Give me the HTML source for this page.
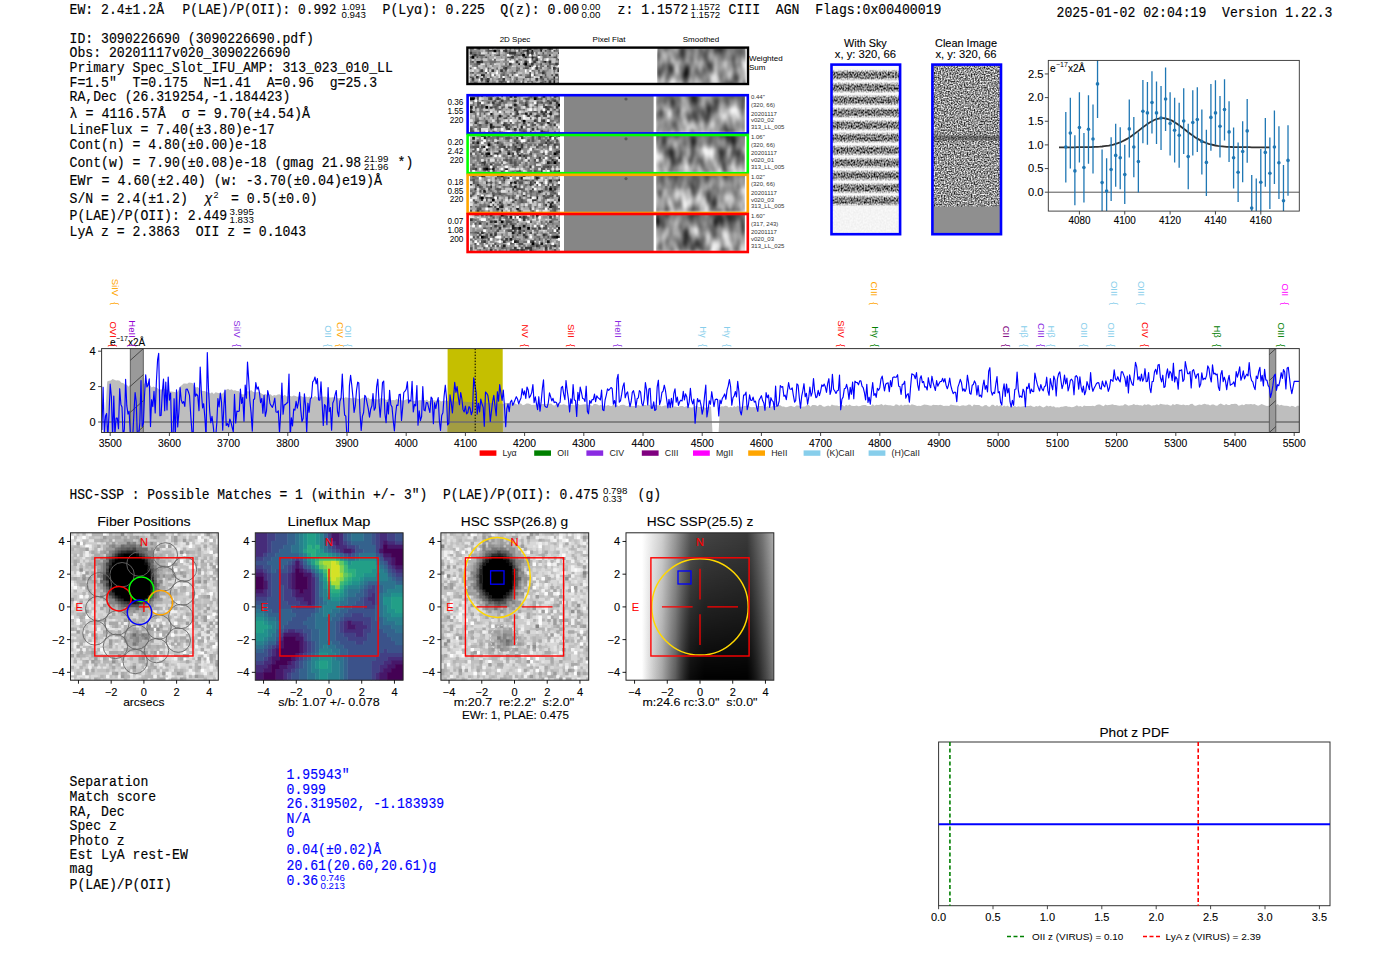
<!DOCTYPE html>
<html><head><meta charset="utf-8"><style>
html,body{margin:0;padding:0;background:#fff;width:1400px;height:953px;overflow:hidden}
svg{position:absolute;left:0;top:0;font-family:'Liberation Mono',monospace} text{white-space:pre} .m{stroke:currentColor;stroke-width:0.25}
</style></head><body>
<svg width="1400" height="953" viewBox="0 0 1400 953">
<defs><filter id="nsmooth" x="0" y="0" width="1" height="1" filterUnits="objectBoundingBox" color-interpolation-filters="sRGB"><feTurbulence type="fractalNoise" baseFrequency="0.1 0.05" numOctaves="2" seed="7"/><feColorMatrix type="matrix" values="1 0 0 0 0  1 0 0 0 0  1 0 0 0 0  0 0 0 0 1"/><feComponentTransfer><feFuncR type="linear" slope="1.4" intercept="-0.1"/><feFuncG type="linear" slope="1.4" intercept="-0.1"/><feFuncB type="linear" slope="1.4" intercept="-0.1"/></feComponentTransfer><feGaussianBlur stdDeviation="1.2 1.5"/></filter><linearGradient id="topdark" x1="0" y1="0" x2="0" y2="1"><stop offset="0" stop-color="#000" stop-opacity="0.38"/><stop offset="0.4" stop-color="#000" stop-opacity="0.05"/><stop offset="1" stop-color="#000" stop-opacity="0"/></linearGradient><filter id="nsky" x="0" y="0" width="1" height="1" filterUnits="objectBoundingBox" color-interpolation-filters="sRGB"><feTurbulence type="fractalNoise" baseFrequency="0.6 0.5" numOctaves="1" seed="11"/><feColorMatrix type="matrix" values="1 0 0 0 0  1 0 0 0 0  1 0 0 0 0  0 0 0 0 1"/><feComponentTransfer><feFuncR type="linear" slope="2.0" intercept="-0.5"/><feFuncG type="linear" slope="2.0" intercept="-0.5"/><feFuncB type="linear" slope="2.0" intercept="-0.5"/></feComponentTransfer></filter><filter id="nclean" x="0" y="0" width="1" height="1" filterUnits="objectBoundingBox" color-interpolation-filters="sRGB"><feTurbulence type="fractalNoise" baseFrequency="0.7" numOctaves="1" seed="5"/><feColorMatrix type="matrix" values="1 0 0 0 0  1 0 0 0 0  1 0 0 0 0  0 0 0 0 1"/><feComponentTransfer><feFuncR type="linear" slope="1.75" intercept="-0.3"/><feFuncG type="linear" slope="1.75" intercept="-0.3"/><feFuncB type="linear" slope="1.75" intercept="-0.3"/></feComponentTransfer></filter><linearGradient id="stripe" x1="0" y1="0" x2="0" y2="1"><stop offset="0" stop-color="#b8b8b8" stop-opacity="0"/><stop offset="0.3" stop-color="#b8b8b8" stop-opacity="1"/><stop offset="0.7" stop-color="#b8b8b8" stop-opacity="1"/><stop offset="1" stop-color="#b8b8b8" stop-opacity="0"/></linearGradient><filter id="stripenoise" x="0" y="0" width="1" height="1" color-interpolation-filters="sRGB"><feTurbulence type="fractalNoise" baseFrequency="0.7 0.5" seed="11" result="t"/><feColorMatrix in="t" type="matrix" values="2.2 0 0 0 -0.45  2.2 0 0 0 -0.45  2.2 0 0 0 -0.45  0 0 0 0 1" result="g"/><feBlend in="SourceGraphic" in2="g" mode="multiply" result="b"/><feComposite in="b" in2="SourceAlpha" operator="in"/></filter><linearGradient id="zg" x1="0" y1="0" x2="1" y2="0"><stop offset="0" stop-color="#fff"/><stop offset="0.108" stop-color="#fff"/><stop offset="0.244" stop-color="#d0d0d0"/><stop offset="0.335" stop-color="#999"/><stop offset="0.4375" stop-color="#555"/><stop offset="0.53" stop-color="#444"/><stop offset="0.82" stop-color="#3a3a3a"/><stop offset="0.926" stop-color="#777"/><stop offset="1" stop-color="#b0b0b0"/></linearGradient><linearGradient id="zv" x1="0" y1="0" x2="0" y2="1"><stop offset="0" stop-color="#000" stop-opacity="0"/><stop offset="1" stop-color="#000" stop-opacity="1"/></linearGradient><linearGradient id="zmg" x1="0" y1="0" x2="1" y2="0"><stop offset="0" stop-color="#000"/><stop offset="0.108" stop-color="#000"/><stop offset="0.244" stop-color="#333"/><stop offset="0.335" stop-color="#666"/><stop offset="0.4375" stop-color="#e0e0e0"/><stop offset="0.53" stop-color="#fff"/><stop offset="0.82" stop-color="#fff"/><stop offset="0.926" stop-color="#888"/><stop offset="1" stop-color="#555"/></linearGradient><mask id="zm" maskUnits="userSpaceOnUse" x="626.0" y="532.8" width="147.8" height="147.4"><rect x="626.0" y="532.8" width="147.8" height="147.4" fill="url(#zmg)"/></mask></defs>
<text transform="translate(69.5,14.4) scale(1,1.1)" font-size="13.15" stroke="#000" stroke-width="0.15">EW: 2.4±1.2Å</text>
<text transform="translate(182.5,14.4) scale(1,1.1)" font-size="13.15" textLength="154" lengthAdjust="spacingAndGlyphs" stroke="#000" stroke-width="0.15">P(LAE)/P(OII): 0.992</text>
<text x="341.5" y="9.5" font-size="9.72" font-family="'Liberation Sans', sans-serif">1.091</text>
<text x="341.5" y="17.5" font-size="9.72" font-family="'Liberation Sans', sans-serif">0.943</text>
<text transform="translate(382.5,14.4) scale(1,1.1)" font-size="13.15" stroke="#000" stroke-width="0.15">P(Lyα): 0.225</text>
<text transform="translate(500.2,14.4) scale(1,1.1)" font-size="13.15" stroke="#000" stroke-width="0.15">Q(z): 0.00</text>
<text x="581.5" y="9.5" font-size="9.72" font-family="'Liberation Sans', sans-serif">0.00</text>
<text x="581.5" y="17.5" font-size="9.72" font-family="'Liberation Sans', sans-serif">0.00</text>
<text transform="translate(617.5,14.4) scale(1,1.1)" font-size="13.15" stroke="#000" stroke-width="0.15">z: 1.1572</text>
<text x="690.5" y="9.5" font-size="9.72" font-family="'Liberation Sans', sans-serif">1.1572</text>
<text x="690.5" y="17.5" font-size="9.72" font-family="'Liberation Sans', sans-serif">1.1572</text>
<text transform="translate(728.5,14.4) scale(1,1.1)" font-size="13.15" stroke="#000" stroke-width="0.15">CIII  AGN  Flags:0x00400019</text>
<text transform="translate(1056.5,16.6) scale(1,1.1)" font-size="13.15" stroke="#000" stroke-width="0.15">2025-01-02 02:04:19  Version 1.22.3</text>
<text transform="translate(69.5,42.6) scale(1,1.1)" font-size="13.15" stroke="#000" stroke-width="0.15">ID: 3090226690 (3090226690.pdf)</text>
<text transform="translate(69.5,56.9) scale(1,1.1)" font-size="13.15" stroke="#000" stroke-width="0.15">Obs: 20201117v020_3090226690</text>
<text transform="translate(69.5,71.7) scale(1,1.1)" font-size="13.15" stroke="#000" stroke-width="0.15">Primary Spec_Slot_IFU_AMP: 313_023_010_LL</text>
<text transform="translate(69.5,86.6) scale(1,1.1)" font-size="13.15" stroke="#000" stroke-width="0.15">F=1.5"  T=0.175  N=1.41  A=0.96  g=25.3</text>
<text transform="translate(69.5,101.4) scale(1,1.1)" font-size="13.15" stroke="#000" stroke-width="0.15">RA,Dec (26.319254,-1.184423)</text>
<text transform="translate(69.5,117.9) scale(1,1.1)" font-size="13.15" textLength="240.5" lengthAdjust="spacingAndGlyphs" stroke="#000" stroke-width="0.15">λ = 4116.57Å  σ = 9.70(±4.54)Å</text>
<text transform="translate(69.5,133.9) scale(1,1.1)" font-size="13.15" stroke="#000" stroke-width="0.15">LineFlux = 7.40(±3.80)e-17</text>
<text transform="translate(69.5,148.6) scale(1,1.1)" font-size="13.15" stroke="#000" stroke-width="0.15">Cont(n) = 4.80(±0.00)e-18</text>
<text transform="translate(69.5,166.9) scale(1,1.1)" font-size="13.15" stroke="#000" stroke-width="0.15">Cont(w) = 7.90(±0.08)e-18 (gmag 21.98</text>
<text transform="translate(69.5,185.0) scale(1,1.1)" font-size="13.15" textLength="312.5" lengthAdjust="spacingAndGlyphs" stroke="#000" stroke-width="0.15">EWr = 4.60(±2.40) (w: -3.70(±0.04)e19)Å</text>
<text transform="translate(69.5,202.6) scale(1,1.1)" font-size="13.15" stroke="#000" stroke-width="0.15">S/N = 2.4(±1.2)</text>
<text transform="translate(69.5,219.6) scale(1,1.1)" font-size="13.15" stroke="#000" stroke-width="0.15">P(LAE)/P(OII): 2.449</text>
<text transform="translate(69.5,236.0) scale(1,1.1)" font-size="13.15" stroke="#000" stroke-width="0.15">LyA z = 2.3863  OII z = 0.1043</text>
<text transform="translate(204.5,202.6) scale(1,1.1)" font-size="13.15" font-style="italic" stroke="#000" stroke-width="0.15">χ</text>
<text x="213.5" y="197.5" font-size="9" font-family="'Liberation Sans', sans-serif">2</text>
<text transform="translate(231,202.6) scale(1,1.1)" font-size="13.15" stroke="#000" stroke-width="0.15">= 0.5(±0.0)</text>
<text x="364" y="161.5" font-size="9.72" font-family="'Liberation Sans', sans-serif">21.99</text>
<text x="364" y="169.5" font-size="9.72" font-family="'Liberation Sans', sans-serif">21.96</text>
<text transform="translate(397.5,166.9) scale(1,1.1)" font-size="13.15" stroke="#000" stroke-width="0.15">*)</text>
<text x="229.5" y="214.5" font-size="9.72" font-family="'Liberation Sans', sans-serif">3.995</text>
<text x="229.5" y="222.5" font-size="9.72" font-family="'Liberation Sans', sans-serif">1.833</text>
<text x="515" y="41.5" font-size="8" font-family="'Liberation Sans', sans-serif" text-anchor="middle">2D Spec</text>
<text x="609" y="41.5" font-size="8" font-family="'Liberation Sans', sans-serif" text-anchor="middle">Pixel Flat</text>
<text x="701" y="41.5" font-size="8" font-family="'Liberation Sans', sans-serif" text-anchor="middle">Smoothed</text>
<clipPath id="spc101"><rect x="469.4" y="47.3" width="89.6" height="37.2"/></clipPath><g clip-path="url(#spc101)">
<path fill="#545454" d="M469.4 47.3h4.9v2.7h-4.9zM476.0 47.3h2.7v2.7h-2.7zM487.0 47.3h2.7v2.7h-2.7zM504.6 47.3h2.7v2.7h-2.7zM509.0 47.3h2.7v2.7h-2.7zM513.4 47.3h2.7v2.7h-2.7zM517.8 47.3h2.7v2.7h-2.7zM526.6 47.3h2.7v2.7h-2.7zM533.2 47.3h4.9v2.7h-4.9zM487.0 49.5h7.1v2.7h-7.1zM498.0 49.5h2.7v2.7h-2.7zM502.4 49.5h2.7v2.7h-2.7zM517.8 49.5h2.7v2.7h-2.7zM522.2 49.5h4.9v2.7h-4.9zM544.2 49.5h2.7v2.7h-2.7zM553.0 49.5h2.7v2.7h-2.7zM520.0 51.7h2.7v2.7h-2.7zM542.0 51.7h2.7v2.7h-2.7zM557.4 51.7h2.7v2.7h-2.7zM471.6 53.9h2.7v2.7h-2.7zM478.2 53.9h7.1v2.7h-7.1zM495.8 53.9h4.9v2.7h-4.9zM513.4 53.9h2.7v2.7h-2.7zM517.8 53.9h2.7v2.7h-2.7zM526.6 53.9h2.7v2.7h-2.7zM537.6 53.9h2.7v2.7h-2.7zM469.4 56.1h2.7v2.7h-2.7zM476.0 56.1h2.7v2.7h-2.7zM484.8 56.1h2.7v2.7h-2.7zM506.8 56.1h4.9v2.7h-4.9zM533.2 56.1h4.9v2.7h-4.9zM553.0 56.1h4.9v2.7h-4.9zM493.6 58.3h2.7v2.7h-2.7zM531.0 58.3h2.7v2.7h-2.7zM557.4 58.3h2.7v2.7h-2.7zM471.6 60.5h2.7v2.7h-2.7zM542.0 60.5h2.7v2.7h-2.7zM476.0 62.7h4.9v2.7h-4.9zM522.2 62.7h2.7v2.7h-2.7zM539.8 62.7h2.7v2.7h-2.7zM548.6 62.7h2.7v2.7h-2.7zM546.4 64.9h2.7v2.7h-2.7zM469.4 67.1h2.7v2.7h-2.7zM487.0 67.1h2.7v2.7h-2.7zM502.4 67.1h2.7v2.7h-2.7zM524.4 67.1h4.9v2.7h-4.9zM557.4 67.1h2.7v2.7h-2.7zM504.6 69.3h2.7v2.7h-2.7zM515.6 69.3h2.7v2.7h-2.7zM537.6 69.3h2.7v2.7h-2.7zM471.6 71.5h2.7v2.7h-2.7zM484.8 71.5h2.7v2.7h-2.7zM513.4 71.5h2.7v2.7h-2.7zM528.8 71.5h2.7v2.7h-2.7zM502.4 73.7h2.7v2.7h-2.7zM511.2 73.7h2.7v2.7h-2.7zM528.8 73.7h2.7v2.7h-2.7zM533.2 73.7h2.7v2.7h-2.7zM544.2 73.7h2.7v2.7h-2.7zM550.8 73.7h2.7v2.7h-2.7zM469.4 75.9h4.9v2.7h-4.9zM482.6 75.9h2.7v2.7h-2.7zM509.0 75.9h2.7v2.7h-2.7zM524.4 75.9h7.1v2.7h-7.1zM484.8 78.1h2.7v2.7h-2.7zM515.6 78.1h2.7v2.7h-2.7zM522.2 78.1h2.7v2.7h-2.7zM542.0 78.1h2.7v2.7h-2.7zM553.0 78.1h2.7v2.7h-2.7zM484.8 80.3h2.7v2.7h-2.7zM498.0 80.3h7.1v2.7h-7.1zM544.2 80.3h2.7v2.7h-2.7zM491.4 82.5h2.7v2.7h-2.7zM500.2 82.5h2.7v2.7h-2.7zM513.4 82.5h2.7v2.7h-2.7zM520.0 82.5h4.9v2.7h-4.9z"/>
<path fill="#e0e0e0" d="M473.8 47.3h2.7v2.7h-2.7zM500.2 49.5h2.7v2.7h-2.7zM515.6 49.5h2.7v2.7h-2.7zM550.8 49.5h2.7v2.7h-2.7zM480.4 51.7h4.9v2.7h-4.9zM491.4 51.7h4.9v2.7h-4.9zM533.2 51.7h2.7v2.7h-2.7zM493.6 56.1h2.7v2.7h-2.7zM557.4 56.1h2.7v2.7h-2.7zM491.4 58.3h2.7v2.7h-2.7zM500.2 58.3h4.9v2.7h-4.9zM539.8 58.3h2.7v2.7h-2.7zM520.0 60.5h2.7v2.7h-2.7zM480.4 62.7h4.9v2.7h-4.9zM493.6 62.7h2.7v2.7h-2.7zM511.2 64.9h2.7v2.7h-2.7zM537.6 64.9h2.7v2.7h-2.7zM484.8 67.1h2.7v2.7h-2.7zM550.8 67.1h2.7v2.7h-2.7zM471.6 69.3h2.7v2.7h-2.7zM495.8 69.3h2.7v2.7h-2.7zM487.0 71.5h2.7v2.7h-2.7zM524.4 71.5h2.7v2.7h-2.7zM476.0 73.7h2.7v2.7h-2.7zM498.0 73.7h2.7v2.7h-2.7zM498.0 75.9h2.7v2.7h-2.7zM533.2 75.9h2.7v2.7h-2.7zM537.6 75.9h2.7v2.7h-2.7zM511.2 78.1h2.7v2.7h-2.7zM520.0 80.3h2.7v2.7h-2.7zM504.6 82.5h2.7v2.7h-2.7z"/>
<path fill="#1c1c1c" d="M478.2 47.3h2.7v2.7h-2.7zM526.6 49.5h2.7v2.7h-2.7zM531.0 49.5h2.7v2.7h-2.7zM539.8 49.5h2.7v2.7h-2.7zM548.6 53.9h2.7v2.7h-2.7zM524.4 56.1h2.7v2.7h-2.7zM531.0 56.1h2.7v2.7h-2.7zM476.0 60.5h4.9v2.7h-4.9zM544.2 60.5h2.7v2.7h-2.7zM517.8 62.7h2.7v2.7h-2.7zM528.8 64.9h2.7v2.7h-2.7zM480.4 73.7h4.9v2.7h-4.9zM553.0 75.9h2.7v2.7h-2.7zM487.0 80.3h2.7v2.7h-2.7zM553.0 80.3h2.7v2.7h-2.7zM493.6 82.5h2.7v2.7h-2.7zM548.6 82.5h2.7v2.7h-2.7zM553.0 82.5h2.7v2.7h-2.7z"/>
<path fill="#8c8c8c" d="M480.4 47.3h2.7v2.7h-2.7zM484.8 47.3h2.7v2.7h-2.7zM491.4 47.3h2.7v2.7h-2.7zM495.8 47.3h4.9v2.7h-4.9zM515.6 47.3h2.7v2.7h-2.7zM520.0 47.3h2.7v2.7h-2.7zM531.0 47.3h2.7v2.7h-2.7zM537.6 47.3h2.7v2.7h-2.7zM471.6 49.5h9.3v2.7h-9.3zM506.8 49.5h2.7v2.7h-2.7zM513.4 49.5h2.7v2.7h-2.7zM520.0 49.5h2.7v2.7h-2.7zM528.8 49.5h2.7v2.7h-2.7zM533.2 49.5h7.1v2.7h-7.1zM546.4 49.5h2.7v2.7h-2.7zM557.4 49.5h2.7v2.7h-2.7zM476.0 51.7h2.7v2.7h-2.7zM504.6 51.7h2.7v2.7h-2.7zM515.6 51.7h4.9v2.7h-4.9zM546.4 51.7h7.1v2.7h-7.1zM493.6 53.9h2.7v2.7h-2.7zM502.4 53.9h4.9v2.7h-4.9zM511.2 53.9h2.7v2.7h-2.7zM524.4 53.9h2.7v2.7h-2.7zM535.4 53.9h2.7v2.7h-2.7zM539.8 53.9h2.7v2.7h-2.7zM546.4 53.9h2.7v2.7h-2.7zM478.2 56.1h2.7v2.7h-2.7zM482.6 56.1h2.7v2.7h-2.7zM487.0 56.1h2.7v2.7h-2.7zM500.2 56.1h2.7v2.7h-2.7zM504.6 56.1h2.7v2.7h-2.7zM513.4 56.1h4.9v2.7h-4.9zM528.8 56.1h2.7v2.7h-2.7zM546.4 56.1h7.1v2.7h-7.1zM469.4 58.3h2.7v2.7h-2.7zM473.8 58.3h2.7v2.7h-2.7zM480.4 58.3h2.7v2.7h-2.7zM487.0 58.3h4.9v2.7h-4.9zM513.4 58.3h2.7v2.7h-2.7zM520.0 58.3h2.7v2.7h-2.7zM533.2 58.3h2.7v2.7h-2.7zM542.0 58.3h2.7v2.7h-2.7zM482.6 60.5h7.1v2.7h-7.1zM495.8 60.5h4.9v2.7h-4.9zM502.4 60.5h7.1v2.7h-7.1zM531.0 60.5h2.7v2.7h-2.7zM535.4 60.5h2.7v2.7h-2.7zM539.8 60.5h2.7v2.7h-2.7zM546.4 60.5h2.7v2.7h-2.7zM557.4 60.5h2.7v2.7h-2.7zM469.4 62.7h4.9v2.7h-4.9zM484.8 62.7h2.7v2.7h-2.7zM491.4 62.7h2.7v2.7h-2.7zM511.2 62.7h2.7v2.7h-2.7zM526.6 62.7h4.9v2.7h-4.9zM535.4 62.7h4.9v2.7h-4.9zM544.2 62.7h4.9v2.7h-4.9zM471.6 64.9h4.9v2.7h-4.9zM491.4 64.9h2.7v2.7h-2.7zM500.2 64.9h2.7v2.7h-2.7zM504.6 64.9h2.7v2.7h-2.7zM509.0 64.9h2.7v2.7h-2.7zM515.6 64.9h2.7v2.7h-2.7zM531.0 64.9h2.7v2.7h-2.7zM553.0 64.9h2.7v2.7h-2.7zM476.0 67.1h4.9v2.7h-4.9zM489.2 67.1h2.7v2.7h-2.7zM506.8 67.1h4.9v2.7h-4.9zM537.6 67.1h2.7v2.7h-2.7zM546.4 67.1h2.7v2.7h-2.7zM478.2 69.3h2.7v2.7h-2.7zM482.6 69.3h2.7v2.7h-2.7zM502.4 69.3h2.7v2.7h-2.7zM511.2 69.3h2.7v2.7h-2.7zM517.8 69.3h2.7v2.7h-2.7zM533.2 69.3h2.7v2.7h-2.7zM544.2 69.3h4.9v2.7h-4.9zM476.0 71.5h2.7v2.7h-2.7zM480.4 71.5h4.9v2.7h-4.9zM489.2 71.5h2.7v2.7h-2.7zM500.2 71.5h2.7v2.7h-2.7zM504.6 71.5h2.7v2.7h-2.7zM509.0 71.5h2.7v2.7h-2.7zM515.6 71.5h2.7v2.7h-2.7zM553.0 71.5h2.7v2.7h-2.7zM504.6 73.7h2.7v2.7h-2.7zM517.8 73.7h2.7v2.7h-2.7zM524.4 73.7h2.7v2.7h-2.7zM535.4 73.7h2.7v2.7h-2.7zM557.4 73.7h2.7v2.7h-2.7zM484.8 75.9h2.7v2.7h-2.7zM491.4 75.9h2.7v2.7h-2.7zM506.8 75.9h2.7v2.7h-2.7zM513.4 75.9h2.7v2.7h-2.7zM531.0 75.9h2.7v2.7h-2.7zM542.0 75.9h2.7v2.7h-2.7zM546.4 75.9h2.7v2.7h-2.7zM482.6 78.1h2.7v2.7h-2.7zM491.4 78.1h2.7v2.7h-2.7zM495.8 78.1h2.7v2.7h-2.7zM500.2 78.1h2.7v2.7h-2.7zM509.0 78.1h2.7v2.7h-2.7zM513.4 78.1h2.7v2.7h-2.7zM528.8 78.1h2.7v2.7h-2.7zM548.6 78.1h2.7v2.7h-2.7zM555.2 78.1h2.7v2.7h-2.7zM469.4 80.3h2.7v2.7h-2.7zM473.8 80.3h4.9v2.7h-4.9zM491.4 80.3h4.9v2.7h-4.9zM509.0 80.3h2.7v2.7h-2.7zM515.6 80.3h4.9v2.7h-4.9zM528.8 80.3h2.7v2.7h-2.7zM535.4 80.3h2.7v2.7h-2.7zM539.8 80.3h2.7v2.7h-2.7zM557.4 80.3h2.7v2.7h-2.7zM469.4 82.5h2.7v2.7h-2.7zM482.6 82.5h7.1v2.7h-7.1zM509.0 82.5h2.7v2.7h-2.7zM537.6 82.5h2.7v2.7h-2.7zM542.0 82.5h2.7v2.7h-2.7z"/>
<path fill="#707070" d="M482.6 47.3h2.7v2.7h-2.7zM546.4 47.3h2.7v2.7h-2.7zM550.8 47.3h2.7v2.7h-2.7zM555.2 47.3h2.7v2.7h-2.7zM469.4 49.5h2.7v2.7h-2.7zM484.8 49.5h2.7v2.7h-2.7zM495.8 49.5h2.7v2.7h-2.7zM509.0 49.5h2.7v2.7h-2.7zM548.6 49.5h2.7v2.7h-2.7zM555.2 49.5h2.7v2.7h-2.7zM471.6 51.7h4.9v2.7h-4.9zM478.2 51.7h2.7v2.7h-2.7zM487.0 51.7h2.7v2.7h-2.7zM498.0 51.7h2.7v2.7h-2.7zM506.8 51.7h2.7v2.7h-2.7zM522.2 51.7h2.7v2.7h-2.7zM528.8 51.7h2.7v2.7h-2.7zM535.4 51.7h2.7v2.7h-2.7zM476.0 53.9h2.7v2.7h-2.7zM489.2 53.9h2.7v2.7h-2.7zM515.6 53.9h2.7v2.7h-2.7zM520.0 53.9h2.7v2.7h-2.7zM531.0 53.9h2.7v2.7h-2.7zM542.0 53.9h4.9v2.7h-4.9zM555.2 53.9h2.7v2.7h-2.7zM480.4 56.1h2.7v2.7h-2.7zM522.2 56.1h2.7v2.7h-2.7zM526.6 56.1h2.7v2.7h-2.7zM542.0 56.1h4.9v2.7h-4.9zM504.6 58.3h2.7v2.7h-2.7zM509.0 58.3h2.7v2.7h-2.7zM517.8 58.3h2.7v2.7h-2.7zM555.2 58.3h2.7v2.7h-2.7zM469.4 60.5h2.7v2.7h-2.7zM489.2 60.5h7.1v2.7h-7.1zM526.6 60.5h2.7v2.7h-2.7zM473.8 62.7h2.7v2.7h-2.7zM489.2 62.7h2.7v2.7h-2.7zM504.6 62.7h2.7v2.7h-2.7zM550.8 62.7h4.9v2.7h-4.9zM557.4 62.7h2.7v2.7h-2.7zM476.0 64.9h2.7v2.7h-2.7zM484.8 64.9h2.7v2.7h-2.7zM502.4 64.9h2.7v2.7h-2.7zM506.8 64.9h2.7v2.7h-2.7zM524.4 64.9h4.9v2.7h-4.9zM535.4 64.9h2.7v2.7h-2.7zM539.8 64.9h4.9v2.7h-4.9zM548.6 64.9h2.7v2.7h-2.7zM495.8 67.1h2.7v2.7h-2.7zM515.6 67.1h4.9v2.7h-4.9zM522.2 67.1h2.7v2.7h-2.7zM539.8 67.1h2.7v2.7h-2.7zM548.6 67.1h2.7v2.7h-2.7zM555.2 67.1h2.7v2.7h-2.7zM487.0 69.3h2.7v2.7h-2.7zM531.0 69.3h2.7v2.7h-2.7zM542.0 69.3h2.7v2.7h-2.7zM553.0 69.3h2.7v2.7h-2.7zM469.4 71.5h2.7v2.7h-2.7zM478.2 71.5h2.7v2.7h-2.7zM502.4 71.5h2.7v2.7h-2.7zM511.2 71.5h2.7v2.7h-2.7zM533.2 71.5h2.7v2.7h-2.7zM537.6 71.5h4.9v2.7h-4.9zM544.2 71.5h2.7v2.7h-2.7zM473.8 73.7h2.7v2.7h-2.7zM489.2 73.7h2.7v2.7h-2.7zM493.6 73.7h2.7v2.7h-2.7zM500.2 73.7h2.7v2.7h-2.7zM506.8 73.7h2.7v2.7h-2.7zM520.0 73.7h2.7v2.7h-2.7zM526.6 73.7h2.7v2.7h-2.7zM489.2 75.9h2.7v2.7h-2.7zM500.2 75.9h2.7v2.7h-2.7zM515.6 75.9h2.7v2.7h-2.7zM544.2 75.9h2.7v2.7h-2.7zM557.4 75.9h2.7v2.7h-2.7zM498.0 78.1h2.7v2.7h-2.7zM539.8 78.1h2.7v2.7h-2.7zM546.4 78.1h2.7v2.7h-2.7zM550.8 78.1h2.7v2.7h-2.7zM557.4 78.1h2.7v2.7h-2.7zM471.6 80.3h2.7v2.7h-2.7zM480.4 80.3h2.7v2.7h-2.7zM504.6 80.3h2.7v2.7h-2.7zM513.4 80.3h2.7v2.7h-2.7zM522.2 80.3h2.7v2.7h-2.7zM526.6 80.3h2.7v2.7h-2.7zM531.0 80.3h2.7v2.7h-2.7zM542.0 80.3h2.7v2.7h-2.7zM476.0 82.5h2.7v2.7h-2.7zM531.0 82.5h4.9v2.7h-4.9z"/>
<path fill="#c4c4c4" d="M489.2 47.3h2.7v2.7h-2.7zM500.2 47.3h2.7v2.7h-2.7zM522.2 47.3h2.7v2.7h-2.7zM553.0 47.3h2.7v2.7h-2.7zM482.6 49.5h2.7v2.7h-2.7zM484.8 51.7h2.7v2.7h-2.7zM500.2 51.7h2.7v2.7h-2.7zM524.4 51.7h2.7v2.7h-2.7zM537.6 51.7h2.7v2.7h-2.7zM491.4 53.9h2.7v2.7h-2.7zM509.0 53.9h2.7v2.7h-2.7zM533.2 53.9h2.7v2.7h-2.7zM550.8 53.9h2.7v2.7h-2.7zM557.4 53.9h2.7v2.7h-2.7zM520.0 56.1h2.7v2.7h-2.7zM539.8 56.1h2.7v2.7h-2.7zM471.6 58.3h2.7v2.7h-2.7zM482.6 58.3h4.9v2.7h-4.9zM495.8 58.3h4.9v2.7h-4.9zM506.8 58.3h2.7v2.7h-2.7zM511.2 58.3h2.7v2.7h-2.7zM515.6 58.3h2.7v2.7h-2.7zM526.6 58.3h2.7v2.7h-2.7zM544.2 58.3h2.7v2.7h-2.7zM550.8 58.3h4.9v2.7h-4.9zM513.4 60.5h2.7v2.7h-2.7zM537.6 60.5h2.7v2.7h-2.7zM550.8 60.5h4.9v2.7h-4.9zM495.8 62.7h4.9v2.7h-4.9zM502.4 62.7h2.7v2.7h-2.7zM520.0 62.7h2.7v2.7h-2.7zM469.4 64.9h2.7v2.7h-2.7zM478.2 64.9h4.9v2.7h-4.9zM489.2 64.9h2.7v2.7h-2.7zM498.0 64.9h2.7v2.7h-2.7zM513.4 64.9h2.7v2.7h-2.7zM544.2 64.9h2.7v2.7h-2.7zM550.8 64.9h2.7v2.7h-2.7zM555.2 64.9h2.7v2.7h-2.7zM471.6 67.1h2.7v2.7h-2.7zM480.4 67.1h2.7v2.7h-2.7zM491.4 67.1h2.7v2.7h-2.7zM498.0 67.1h2.7v2.7h-2.7zM520.0 67.1h2.7v2.7h-2.7zM533.2 67.1h2.7v2.7h-2.7zM542.0 67.1h2.7v2.7h-2.7zM469.4 69.3h2.7v2.7h-2.7zM476.0 69.3h2.7v2.7h-2.7zM489.2 69.3h2.7v2.7h-2.7zM506.8 69.3h2.7v2.7h-2.7zM550.8 69.3h2.7v2.7h-2.7zM491.4 71.5h4.9v2.7h-4.9zM517.8 71.5h4.9v2.7h-4.9zM526.6 71.5h2.7v2.7h-2.7zM531.0 71.5h2.7v2.7h-2.7zM535.4 71.5h2.7v2.7h-2.7zM550.8 71.5h2.7v2.7h-2.7zM555.2 71.5h4.9v2.7h-4.9zM471.6 73.7h2.7v2.7h-2.7zM478.2 73.7h2.7v2.7h-2.7zM495.8 73.7h2.7v2.7h-2.7zM509.0 73.7h2.7v2.7h-2.7zM513.4 73.7h2.7v2.7h-2.7zM539.8 73.7h2.7v2.7h-2.7zM480.4 75.9h2.7v2.7h-2.7zM487.0 75.9h2.7v2.7h-2.7zM493.6 75.9h2.7v2.7h-2.7zM511.2 75.9h2.7v2.7h-2.7zM517.8 75.9h7.1v2.7h-7.1zM535.4 75.9h2.7v2.7h-2.7zM555.2 75.9h2.7v2.7h-2.7zM489.2 78.1h2.7v2.7h-2.7zM504.6 78.1h2.7v2.7h-2.7zM526.6 78.1h2.7v2.7h-2.7zM531.0 78.1h4.9v2.7h-4.9zM478.2 80.3h2.7v2.7h-2.7zM495.8 80.3h2.7v2.7h-2.7zM524.4 80.3h2.7v2.7h-2.7zM537.6 80.3h2.7v2.7h-2.7zM480.4 82.5h2.7v2.7h-2.7zM489.2 82.5h2.7v2.7h-2.7zM495.8 82.5h2.7v2.7h-2.7zM511.2 82.5h2.7v2.7h-2.7zM517.8 82.5h2.7v2.7h-2.7zM526.6 82.5h2.7v2.7h-2.7z"/>
<path fill="#fcfcfc" d="M493.6 47.3h2.7v2.7h-2.7zM506.8 53.9h2.7v2.7h-2.7zM528.8 53.9h2.7v2.7h-2.7zM537.6 56.1h2.7v2.7h-2.7zM528.8 58.3h2.7v2.7h-2.7zM546.4 58.3h2.7v2.7h-2.7zM509.0 60.5h4.9v2.7h-4.9zM528.8 60.5h2.7v2.7h-2.7zM533.2 64.9h2.7v2.7h-2.7zM557.4 64.9h2.7v2.7h-2.7zM473.8 67.1h2.7v2.7h-2.7zM531.0 67.1h2.7v2.7h-2.7zM484.8 69.3h2.7v2.7h-2.7zM524.4 69.3h2.7v2.7h-2.7zM528.8 69.3h2.7v2.7h-2.7zM495.8 71.5h2.7v2.7h-2.7zM491.4 73.7h2.7v2.7h-2.7zM515.6 73.7h2.7v2.7h-2.7zM531.0 73.7h2.7v2.7h-2.7zM502.4 75.9h2.7v2.7h-2.7zM478.2 78.1h2.7v2.7h-2.7zM506.8 80.3h2.7v2.7h-2.7zM506.8 82.5h2.7v2.7h-2.7zM524.4 82.5h2.7v2.7h-2.7zM528.8 82.5h2.7v2.7h-2.7zM535.4 82.5h2.7v2.7h-2.7zM555.2 82.5h2.7v2.7h-2.7z"/>
<path fill="#a8a8a8" d="M502.4 47.3h2.7v2.7h-2.7zM506.8 47.3h2.7v2.7h-2.7zM511.2 47.3h2.7v2.7h-2.7zM524.4 47.3h2.7v2.7h-2.7zM542.0 47.3h4.9v2.7h-4.9zM557.4 47.3h2.7v2.7h-2.7zM480.4 49.5h2.7v2.7h-2.7zM511.2 49.5h2.7v2.7h-2.7zM542.0 49.5h2.7v2.7h-2.7zM489.2 51.7h2.7v2.7h-2.7zM495.8 51.7h2.7v2.7h-2.7zM502.4 51.7h2.7v2.7h-2.7zM539.8 51.7h2.7v2.7h-2.7zM544.2 51.7h2.7v2.7h-2.7zM553.0 51.7h4.9v2.7h-4.9zM469.4 53.9h2.7v2.7h-2.7zM484.8 53.9h4.9v2.7h-4.9zM500.2 53.9h2.7v2.7h-2.7zM553.0 53.9h2.7v2.7h-2.7zM473.8 56.1h2.7v2.7h-2.7zM489.2 56.1h4.9v2.7h-4.9zM495.8 56.1h4.9v2.7h-4.9zM502.4 56.1h2.7v2.7h-2.7zM517.8 56.1h2.7v2.7h-2.7zM476.0 58.3h4.9v2.7h-4.9zM522.2 58.3h4.9v2.7h-4.9zM537.6 58.3h2.7v2.7h-2.7zM548.6 58.3h2.7v2.7h-2.7zM473.8 60.5h2.7v2.7h-2.7zM500.2 60.5h2.7v2.7h-2.7zM517.8 60.5h2.7v2.7h-2.7zM522.2 60.5h2.7v2.7h-2.7zM555.2 60.5h2.7v2.7h-2.7zM487.0 62.7h2.7v2.7h-2.7zM500.2 62.7h2.7v2.7h-2.7zM506.8 62.7h2.7v2.7h-2.7zM513.4 62.7h4.9v2.7h-4.9zM533.2 62.7h2.7v2.7h-2.7zM542.0 62.7h2.7v2.7h-2.7zM482.6 64.9h2.7v2.7h-2.7zM487.0 64.9h2.7v2.7h-2.7zM493.6 64.9h4.9v2.7h-4.9zM517.8 64.9h7.1v2.7h-7.1zM482.6 67.1h2.7v2.7h-2.7zM493.6 67.1h2.7v2.7h-2.7zM500.2 67.1h2.7v2.7h-2.7zM511.2 67.1h4.9v2.7h-4.9zM528.8 67.1h2.7v2.7h-2.7zM544.2 67.1h2.7v2.7h-2.7zM473.8 69.3h2.7v2.7h-2.7zM493.6 69.3h2.7v2.7h-2.7zM498.0 69.3h2.7v2.7h-2.7zM509.0 69.3h2.7v2.7h-2.7zM513.4 69.3h2.7v2.7h-2.7zM520.0 69.3h4.9v2.7h-4.9zM526.6 69.3h2.7v2.7h-2.7zM535.4 69.3h2.7v2.7h-2.7zM539.8 69.3h2.7v2.7h-2.7zM548.6 69.3h2.7v2.7h-2.7zM555.2 69.3h2.7v2.7h-2.7zM473.8 71.5h2.7v2.7h-2.7zM498.0 71.5h2.7v2.7h-2.7zM506.8 71.5h2.7v2.7h-2.7zM522.2 71.5h2.7v2.7h-2.7zM546.4 71.5h4.9v2.7h-4.9zM469.4 73.7h2.7v2.7h-2.7zM484.8 73.7h4.9v2.7h-4.9zM522.2 73.7h2.7v2.7h-2.7zM537.6 73.7h2.7v2.7h-2.7zM542.0 73.7h2.7v2.7h-2.7zM546.4 73.7h4.9v2.7h-4.9zM553.0 73.7h2.7v2.7h-2.7zM473.8 75.9h2.7v2.7h-2.7zM478.2 75.9h2.7v2.7h-2.7zM495.8 75.9h2.7v2.7h-2.7zM504.6 75.9h2.7v2.7h-2.7zM548.6 75.9h4.9v2.7h-4.9zM469.4 78.1h2.7v2.7h-2.7zM473.8 78.1h4.9v2.7h-4.9zM493.6 78.1h2.7v2.7h-2.7zM506.8 78.1h2.7v2.7h-2.7zM517.8 78.1h4.9v2.7h-4.9zM524.4 78.1h2.7v2.7h-2.7zM537.6 78.1h2.7v2.7h-2.7zM544.2 78.1h2.7v2.7h-2.7zM482.6 80.3h2.7v2.7h-2.7zM489.2 80.3h2.7v2.7h-2.7zM511.2 80.3h2.7v2.7h-2.7zM533.2 80.3h2.7v2.7h-2.7zM546.4 80.3h2.7v2.7h-2.7zM550.8 80.3h2.7v2.7h-2.7zM555.2 80.3h2.7v2.7h-2.7zM471.6 82.5h2.7v2.7h-2.7zM478.2 82.5h2.7v2.7h-2.7zM498.0 82.5h2.7v2.7h-2.7zM502.4 82.5h2.7v2.7h-2.7zM515.6 82.5h2.7v2.7h-2.7zM544.2 82.5h4.9v2.7h-4.9zM550.8 82.5h2.7v2.7h-2.7z"/>
<path fill="#383838" d="M528.8 47.3h2.7v2.7h-2.7zM539.8 47.3h2.7v2.7h-2.7zM548.6 47.3h2.7v2.7h-2.7zM504.6 49.5h2.7v2.7h-2.7zM469.4 51.7h2.7v2.7h-2.7zM509.0 51.7h7.1v2.7h-7.1zM526.6 51.7h2.7v2.7h-2.7zM531.0 51.7h2.7v2.7h-2.7zM473.8 53.9h2.7v2.7h-2.7zM511.2 56.1h2.7v2.7h-2.7zM535.4 58.3h2.7v2.7h-2.7zM480.4 60.5h2.7v2.7h-2.7zM515.6 60.5h2.7v2.7h-2.7zM524.4 60.5h2.7v2.7h-2.7zM533.2 60.5h2.7v2.7h-2.7zM548.6 60.5h2.7v2.7h-2.7zM509.0 62.7h2.7v2.7h-2.7zM531.0 62.7h2.7v2.7h-2.7zM555.2 62.7h2.7v2.7h-2.7zM504.6 67.1h2.7v2.7h-2.7zM535.4 67.1h2.7v2.7h-2.7zM553.0 67.1h2.7v2.7h-2.7zM480.4 69.3h2.7v2.7h-2.7zM491.4 69.3h2.7v2.7h-2.7zM500.2 69.3h2.7v2.7h-2.7zM557.4 69.3h2.7v2.7h-2.7zM542.0 71.5h2.7v2.7h-2.7zM555.2 73.7h2.7v2.7h-2.7zM476.0 75.9h2.7v2.7h-2.7zM539.8 75.9h2.7v2.7h-2.7zM471.6 78.1h2.7v2.7h-2.7zM480.4 78.1h2.7v2.7h-2.7zM487.0 78.1h2.7v2.7h-2.7zM502.4 78.1h2.7v2.7h-2.7zM535.4 78.1h2.7v2.7h-2.7zM548.6 80.3h2.7v2.7h-2.7zM473.8 82.5h2.7v2.7h-2.7zM539.8 82.5h2.7v2.7h-2.7zM557.4 82.5h2.7v2.7h-2.7z"/>
<path fill="#000000" d="M493.6 49.5h2.7v2.7h-2.7zM522.2 53.9h2.7v2.7h-2.7zM471.6 56.1h2.7v2.7h-2.7zM524.4 62.7h2.7v2.7h-2.7z"/>
</g>
<rect x="657.70" y="47.30" width="87.50" height="37.20" fill="#888" filter="url(#nsmooth)"/>
<rect x="657.70" y="47.30" width="87.50" height="37.20" fill="url(#topdark)"/>
<rect x="467.4" y="47.6" width="280.6" height="36.4" fill="none" stroke="#000" stroke-width="2.4"/>
<text x="749" y="61.2" font-size="8" font-family="'Liberation Sans', sans-serif">Weighted</text>
<text x="749" y="69.6" font-size="8" font-family="'Liberation Sans', sans-serif">Sum</text>
<clipPath id="spc200"><rect x="470" y="95.0" width="90" height="37.4"/></clipPath><g clip-path="url(#spc200)">
<path fill="#8c8c8c" d="M470.0 95.0h2.7v2.7h-2.7zM478.8 95.0h2.7v2.7h-2.7zM496.4 95.0h2.7v2.7h-2.7zM507.4 95.0h2.7v2.7h-2.7zM511.8 95.0h2.7v2.7h-2.7zM518.4 95.0h4.9v2.7h-4.9zM527.2 95.0h2.7v2.7h-2.7zM540.4 95.0h2.7v2.7h-2.7zM544.8 95.0h2.7v2.7h-2.7zM558.0 95.0h2.7v2.7h-2.7zM494.2 97.2h2.7v2.7h-2.7zM514.0 97.2h2.7v2.7h-2.7zM518.4 97.2h2.7v2.7h-2.7zM529.4 97.2h4.9v2.7h-4.9zM549.2 97.2h2.7v2.7h-2.7zM553.6 97.2h2.7v2.7h-2.7zM472.2 99.4h2.7v2.7h-2.7zM476.6 99.4h2.7v2.7h-2.7zM483.2 99.4h11.5v2.7h-11.5zM498.6 99.4h2.7v2.7h-2.7zM503.0 99.4h2.7v2.7h-2.7zM509.6 99.4h2.7v2.7h-2.7zM518.4 99.4h4.9v2.7h-4.9zM527.2 99.4h2.7v2.7h-2.7zM536.0 99.4h7.1v2.7h-7.1zM544.8 99.4h2.7v2.7h-2.7zM549.2 99.4h2.7v2.7h-2.7zM555.8 99.4h4.9v2.7h-4.9zM485.4 101.6h2.7v2.7h-2.7zM494.2 101.6h4.9v2.7h-4.9zM500.8 101.6h2.7v2.7h-2.7zM511.8 101.6h4.9v2.7h-4.9zM522.8 101.6h2.7v2.7h-2.7zM527.2 101.6h2.7v2.7h-2.7zM531.6 101.6h2.7v2.7h-2.7zM542.6 101.6h2.7v2.7h-2.7zM478.8 103.8h2.7v2.7h-2.7zM503.0 103.8h2.7v2.7h-2.7zM520.6 103.8h2.7v2.7h-2.7zM527.2 103.8h2.7v2.7h-2.7zM547.0 103.8h4.9v2.7h-4.9zM553.6 103.8h2.7v2.7h-2.7zM483.2 106.0h2.7v2.7h-2.7zM514.0 106.0h2.7v2.7h-2.7zM536.0 106.0h2.7v2.7h-2.7zM474.4 108.2h2.7v2.7h-2.7zM481.0 108.2h2.7v2.7h-2.7zM500.8 108.2h2.7v2.7h-2.7zM505.2 108.2h2.7v2.7h-2.7zM520.6 108.2h2.7v2.7h-2.7zM551.4 108.2h2.7v2.7h-2.7zM474.4 110.4h2.7v2.7h-2.7zM483.2 110.4h2.7v2.7h-2.7zM527.2 110.4h4.9v2.7h-4.9zM542.6 110.4h2.7v2.7h-2.7zM551.4 110.4h2.7v2.7h-2.7zM472.2 112.6h2.7v2.7h-2.7zM492.0 112.6h2.7v2.7h-2.7zM503.0 112.6h4.9v2.7h-4.9zM538.2 112.6h2.7v2.7h-2.7zM544.8 112.6h4.9v2.7h-4.9zM551.4 112.6h2.7v2.7h-2.7zM485.4 114.8h7.1v2.7h-7.1zM496.4 114.8h2.7v2.7h-2.7zM505.2 114.8h2.7v2.7h-2.7zM516.2 114.8h2.7v2.7h-2.7zM549.2 114.8h2.7v2.7h-2.7zM487.6 117.0h2.7v2.7h-2.7zM509.6 117.0h2.7v2.7h-2.7zM514.0 117.0h2.7v2.7h-2.7zM540.4 117.0h2.7v2.7h-2.7zM549.2 117.0h2.7v2.7h-2.7zM478.8 119.2h7.1v2.7h-7.1zM494.2 119.2h2.7v2.7h-2.7zM507.4 119.2h2.7v2.7h-2.7zM516.2 119.2h2.7v2.7h-2.7zM553.6 119.2h4.9v2.7h-4.9zM476.6 121.4h2.7v2.7h-2.7zM483.2 121.4h2.7v2.7h-2.7zM498.6 121.4h2.7v2.7h-2.7zM514.0 121.4h2.7v2.7h-2.7zM529.4 121.4h2.7v2.7h-2.7zM544.8 121.4h2.7v2.7h-2.7zM549.2 121.4h4.9v2.7h-4.9zM558.0 121.4h2.7v2.7h-2.7zM472.2 123.6h2.7v2.7h-2.7zM481.0 123.6h4.9v2.7h-4.9zM500.8 123.6h2.7v2.7h-2.7zM509.6 123.6h2.7v2.7h-2.7zM514.0 123.6h2.7v2.7h-2.7zM520.6 123.6h2.7v2.7h-2.7zM529.4 123.6h2.7v2.7h-2.7zM538.2 123.6h2.7v2.7h-2.7zM542.6 123.6h2.7v2.7h-2.7zM547.0 123.6h2.7v2.7h-2.7zM551.4 123.6h2.7v2.7h-2.7zM472.2 125.8h2.7v2.7h-2.7zM476.6 125.8h2.7v2.7h-2.7zM481.0 125.8h7.1v2.7h-7.1zM507.4 125.8h2.7v2.7h-2.7zM529.4 125.8h4.9v2.7h-4.9zM544.8 125.8h2.7v2.7h-2.7zM549.2 125.8h4.9v2.7h-4.9zM472.2 128.0h2.7v2.7h-2.7zM476.6 128.0h2.7v2.7h-2.7zM525.0 128.0h2.7v2.7h-2.7zM538.2 128.0h4.9v2.7h-4.9zM547.0 128.0h2.7v2.7h-2.7zM551.4 128.0h2.7v2.7h-2.7zM494.2 130.2h2.7v2.7h-2.7zM514.0 130.2h2.7v2.7h-2.7zM518.4 130.2h2.7v2.7h-2.7zM558.0 130.2h2.7v2.7h-2.7z"/>
<path fill="#707070" d="M472.2 95.0h4.9v2.7h-4.9zM485.4 95.0h9.3v2.7h-9.3zM505.2 95.0h2.7v2.7h-2.7zM516.2 95.0h2.7v2.7h-2.7zM531.6 95.0h2.7v2.7h-2.7zM536.0 95.0h2.7v2.7h-2.7zM549.2 95.0h2.7v2.7h-2.7zM505.2 97.2h2.7v2.7h-2.7zM522.8 97.2h2.7v2.7h-2.7zM538.2 97.2h2.7v2.7h-2.7zM544.8 97.2h2.7v2.7h-2.7zM551.4 97.2h2.7v2.7h-2.7zM558.0 97.2h2.7v2.7h-2.7zM470.0 99.4h2.7v2.7h-2.7zM481.0 99.4h2.7v2.7h-2.7zM505.2 99.4h4.9v2.7h-4.9zM511.8 99.4h2.7v2.7h-2.7zM525.0 99.4h2.7v2.7h-2.7zM472.2 101.6h2.7v2.7h-2.7zM503.0 101.6h4.9v2.7h-4.9zM518.4 101.6h4.9v2.7h-4.9zM538.2 101.6h2.7v2.7h-2.7zM544.8 101.6h4.9v2.7h-4.9zM470.0 103.8h4.9v2.7h-4.9zM483.2 103.8h2.7v2.7h-2.7zM492.0 103.8h4.9v2.7h-4.9zM511.8 103.8h2.7v2.7h-2.7zM516.2 103.8h2.7v2.7h-2.7zM522.8 103.8h2.7v2.7h-2.7zM533.8 103.8h2.7v2.7h-2.7zM476.6 106.0h4.9v2.7h-4.9zM492.0 106.0h2.7v2.7h-2.7zM496.4 106.0h2.7v2.7h-2.7zM503.0 106.0h2.7v2.7h-2.7zM516.2 106.0h4.9v2.7h-4.9zM525.0 106.0h4.9v2.7h-4.9zM531.6 106.0h2.7v2.7h-2.7zM551.4 106.0h2.7v2.7h-2.7zM478.8 108.2h2.7v2.7h-2.7zM494.2 108.2h4.9v2.7h-4.9zM516.2 108.2h4.9v2.7h-4.9zM522.8 108.2h2.7v2.7h-2.7zM544.8 108.2h2.7v2.7h-2.7zM558.0 108.2h2.7v2.7h-2.7zM478.8 110.4h4.9v2.7h-4.9zM487.6 110.4h2.7v2.7h-2.7zM496.4 110.4h2.7v2.7h-2.7zM503.0 110.4h2.7v2.7h-2.7zM514.0 110.4h2.7v2.7h-2.7zM531.6 110.4h2.7v2.7h-2.7zM536.0 110.4h2.7v2.7h-2.7zM555.8 110.4h2.7v2.7h-2.7zM474.4 112.6h2.7v2.7h-2.7zM478.8 112.6h2.7v2.7h-2.7zM514.0 112.6h2.7v2.7h-2.7zM520.6 112.6h4.9v2.7h-4.9zM536.0 112.6h2.7v2.7h-2.7zM540.4 112.6h2.7v2.7h-2.7zM558.0 112.6h2.7v2.7h-2.7zM474.4 114.8h2.7v2.7h-2.7zM478.8 114.8h2.7v2.7h-2.7zM492.0 114.8h2.7v2.7h-2.7zM500.8 114.8h2.7v2.7h-2.7zM511.8 114.8h2.7v2.7h-2.7zM553.6 114.8h2.7v2.7h-2.7zM474.4 117.0h4.9v2.7h-4.9zM483.2 117.0h2.7v2.7h-2.7zM492.0 117.0h2.7v2.7h-2.7zM536.0 117.0h2.7v2.7h-2.7zM553.6 117.0h7.1v2.7h-7.1zM474.4 119.2h2.7v2.7h-2.7zM498.6 119.2h2.7v2.7h-2.7zM520.6 119.2h2.7v2.7h-2.7zM536.0 119.2h2.7v2.7h-2.7zM549.2 119.2h4.9v2.7h-4.9zM558.0 119.2h2.7v2.7h-2.7zM487.6 121.4h2.7v2.7h-2.7zM505.2 121.4h2.7v2.7h-2.7zM516.2 121.4h4.9v2.7h-4.9zM531.6 121.4h2.7v2.7h-2.7zM538.2 121.4h7.1v2.7h-7.1zM555.8 121.4h2.7v2.7h-2.7zM476.6 123.6h2.7v2.7h-2.7zM485.4 123.6h2.7v2.7h-2.7zM511.8 123.6h2.7v2.7h-2.7zM516.2 123.6h2.7v2.7h-2.7zM522.8 123.6h4.9v2.7h-4.9zM470.0 125.8h2.7v2.7h-2.7zM474.4 125.8h2.7v2.7h-2.7zM478.8 125.8h2.7v2.7h-2.7zM494.2 125.8h2.7v2.7h-2.7zM509.6 125.8h2.7v2.7h-2.7zM516.2 125.8h2.7v2.7h-2.7zM525.0 125.8h4.9v2.7h-4.9zM536.0 125.8h2.7v2.7h-2.7zM555.8 125.8h2.7v2.7h-2.7zM489.8 128.0h2.7v2.7h-2.7zM511.8 128.0h2.7v2.7h-2.7zM520.6 128.0h4.9v2.7h-4.9zM487.6 130.2h2.7v2.7h-2.7zM498.6 130.2h2.7v2.7h-2.7zM520.6 130.2h2.7v2.7h-2.7zM525.0 130.2h2.7v2.7h-2.7zM544.8 130.2h4.9v2.7h-4.9zM553.6 130.2h2.7v2.7h-2.7z"/>
<path fill="#545454" d="M476.6 95.0h2.7v2.7h-2.7zM481.0 95.0h2.7v2.7h-2.7zM500.8 95.0h2.7v2.7h-2.7zM529.4 95.0h2.7v2.7h-2.7zM533.8 95.0h2.7v2.7h-2.7zM555.8 95.0h2.7v2.7h-2.7zM476.6 97.2h2.7v2.7h-2.7zM487.6 97.2h2.7v2.7h-2.7zM498.6 97.2h2.7v2.7h-2.7zM507.4 97.2h2.7v2.7h-2.7zM525.0 97.2h4.9v2.7h-4.9zM536.0 97.2h2.7v2.7h-2.7zM540.4 97.2h2.7v2.7h-2.7zM494.2 99.4h2.7v2.7h-2.7zM547.0 99.4h2.7v2.7h-2.7zM551.4 99.4h2.7v2.7h-2.7zM476.6 101.6h4.9v2.7h-4.9zM487.6 101.6h2.7v2.7h-2.7zM498.6 101.6h2.7v2.7h-2.7zM525.0 101.6h2.7v2.7h-2.7zM536.0 101.6h2.7v2.7h-2.7zM540.4 101.6h2.7v2.7h-2.7zM476.6 103.8h2.7v2.7h-2.7zM481.0 103.8h2.7v2.7h-2.7zM496.4 103.8h4.9v2.7h-4.9zM536.0 103.8h2.7v2.7h-2.7zM542.6 103.8h2.7v2.7h-2.7zM555.8 103.8h2.7v2.7h-2.7zM474.4 106.0h2.7v2.7h-2.7zM481.0 106.0h2.7v2.7h-2.7zM494.2 106.0h2.7v2.7h-2.7zM500.8 106.0h2.7v2.7h-2.7zM507.4 106.0h2.7v2.7h-2.7zM542.6 106.0h2.7v2.7h-2.7zM547.0 106.0h4.9v2.7h-4.9zM470.0 108.2h2.7v2.7h-2.7zM498.6 108.2h2.7v2.7h-2.7zM553.6 108.2h2.7v2.7h-2.7zM472.2 110.4h2.7v2.7h-2.7zM485.4 110.4h2.7v2.7h-2.7zM533.8 110.4h2.7v2.7h-2.7zM549.2 110.4h2.7v2.7h-2.7zM558.0 110.4h2.7v2.7h-2.7zM483.2 112.6h2.7v2.7h-2.7zM509.6 112.6h2.7v2.7h-2.7zM507.4 114.8h2.7v2.7h-2.7zM514.0 114.8h2.7v2.7h-2.7zM533.8 114.8h2.7v2.7h-2.7zM538.2 114.8h2.7v2.7h-2.7zM542.6 114.8h4.9v2.7h-4.9zM555.8 114.8h4.9v2.7h-4.9zM496.4 117.0h2.7v2.7h-2.7zM503.0 117.0h4.9v2.7h-4.9zM529.4 117.0h2.7v2.7h-2.7zM547.0 117.0h2.7v2.7h-2.7zM476.6 119.2h2.7v2.7h-2.7zM485.4 119.2h2.7v2.7h-2.7zM496.4 119.2h2.7v2.7h-2.7zM540.4 119.2h2.7v2.7h-2.7zM496.4 121.4h2.7v2.7h-2.7zM503.0 121.4h2.7v2.7h-2.7zM509.6 121.4h2.7v2.7h-2.7zM527.2 121.4h2.7v2.7h-2.7zM536.0 121.4h2.7v2.7h-2.7zM478.8 123.6h2.7v2.7h-2.7zM505.2 123.6h4.9v2.7h-4.9zM531.6 123.6h4.9v2.7h-4.9zM540.4 123.6h2.7v2.7h-2.7zM549.2 123.6h2.7v2.7h-2.7zM496.4 125.8h4.9v2.7h-4.9zM470.0 128.0h2.7v2.7h-2.7zM478.8 128.0h2.7v2.7h-2.7zM505.2 128.0h2.7v2.7h-2.7zM518.4 128.0h2.7v2.7h-2.7zM536.0 128.0h2.7v2.7h-2.7zM470.0 130.2h4.9v2.7h-4.9zM478.8 130.2h2.7v2.7h-2.7zM492.0 130.2h2.7v2.7h-2.7zM522.8 130.2h2.7v2.7h-2.7zM529.4 130.2h2.7v2.7h-2.7zM542.6 130.2h2.7v2.7h-2.7z"/>
<path fill="#a8a8a8" d="M483.2 95.0h2.7v2.7h-2.7zM494.2 95.0h2.7v2.7h-2.7zM522.8 95.0h4.9v2.7h-4.9zM547.0 95.0h2.7v2.7h-2.7zM474.4 97.2h2.7v2.7h-2.7zM483.2 97.2h4.9v2.7h-4.9zM500.8 97.2h2.7v2.7h-2.7zM511.8 97.2h2.7v2.7h-2.7zM516.2 97.2h2.7v2.7h-2.7zM542.6 97.2h2.7v2.7h-2.7zM547.0 97.2h2.7v2.7h-2.7zM555.8 97.2h2.7v2.7h-2.7zM496.4 99.4h2.7v2.7h-2.7zM516.2 99.4h2.7v2.7h-2.7zM474.4 101.6h2.7v2.7h-2.7zM483.2 101.6h2.7v2.7h-2.7zM489.8 101.6h2.7v2.7h-2.7zM507.4 101.6h4.9v2.7h-4.9zM529.4 101.6h2.7v2.7h-2.7zM551.4 101.6h4.9v2.7h-4.9zM558.0 101.6h2.7v2.7h-2.7zM474.4 103.8h2.7v2.7h-2.7zM485.4 103.8h2.7v2.7h-2.7zM500.8 103.8h2.7v2.7h-2.7zM518.4 103.8h2.7v2.7h-2.7zM538.2 103.8h4.9v2.7h-4.9zM551.4 103.8h2.7v2.7h-2.7zM487.6 106.0h2.7v2.7h-2.7zM511.8 106.0h2.7v2.7h-2.7zM533.8 106.0h2.7v2.7h-2.7zM558.0 106.0h2.7v2.7h-2.7zM487.6 108.2h2.7v2.7h-2.7zM503.0 108.2h2.7v2.7h-2.7zM507.4 108.2h4.9v2.7h-4.9zM525.0 108.2h2.7v2.7h-2.7zM531.6 108.2h2.7v2.7h-2.7zM536.0 108.2h2.7v2.7h-2.7zM540.4 108.2h2.7v2.7h-2.7zM555.8 108.2h2.7v2.7h-2.7zM476.6 110.4h2.7v2.7h-2.7zM492.0 110.4h2.7v2.7h-2.7zM500.8 110.4h2.7v2.7h-2.7zM509.6 110.4h4.9v2.7h-4.9zM522.8 110.4h2.7v2.7h-2.7zM553.6 110.4h2.7v2.7h-2.7zM470.0 112.6h2.7v2.7h-2.7zM481.0 112.6h2.7v2.7h-2.7zM485.4 112.6h2.7v2.7h-2.7zM498.6 112.6h2.7v2.7h-2.7zM507.4 112.6h2.7v2.7h-2.7zM518.4 112.6h2.7v2.7h-2.7zM531.6 112.6h2.7v2.7h-2.7zM470.0 114.8h2.7v2.7h-2.7zM476.6 114.8h2.7v2.7h-2.7zM481.0 114.8h2.7v2.7h-2.7zM494.2 114.8h2.7v2.7h-2.7zM503.0 114.8h2.7v2.7h-2.7zM518.4 114.8h2.7v2.7h-2.7zM525.0 114.8h2.7v2.7h-2.7zM531.6 114.8h2.7v2.7h-2.7zM540.4 114.8h2.7v2.7h-2.7zM470.0 117.0h4.9v2.7h-4.9zM481.0 117.0h2.7v2.7h-2.7zM485.4 117.0h2.7v2.7h-2.7zM494.2 117.0h2.7v2.7h-2.7zM498.6 117.0h4.9v2.7h-4.9zM507.4 117.0h2.7v2.7h-2.7zM520.6 117.0h2.7v2.7h-2.7zM533.8 117.0h2.7v2.7h-2.7zM544.8 117.0h2.7v2.7h-2.7zM551.4 117.0h2.7v2.7h-2.7zM472.2 119.2h2.7v2.7h-2.7zM487.6 119.2h4.9v2.7h-4.9zM500.8 119.2h2.7v2.7h-2.7zM525.0 119.2h9.3v2.7h-9.3zM544.8 119.2h2.7v2.7h-2.7zM470.0 121.4h4.9v2.7h-4.9zM481.0 121.4h2.7v2.7h-2.7zM489.8 121.4h7.1v2.7h-7.1zM507.4 121.4h2.7v2.7h-2.7zM520.6 121.4h2.7v2.7h-2.7zM525.0 121.4h2.7v2.7h-2.7zM474.4 123.6h2.7v2.7h-2.7zM487.6 123.6h2.7v2.7h-2.7zM492.0 123.6h9.3v2.7h-9.3zM500.8 125.8h2.7v2.7h-2.7zM511.8 125.8h2.7v2.7h-2.7zM533.8 125.8h2.7v2.7h-2.7zM540.4 125.8h2.7v2.7h-2.7zM547.0 125.8h2.7v2.7h-2.7zM487.6 128.0h2.7v2.7h-2.7zM492.0 128.0h2.7v2.7h-2.7zM496.4 128.0h4.9v2.7h-4.9zM509.6 128.0h2.7v2.7h-2.7zM529.4 128.0h2.7v2.7h-2.7zM542.6 128.0h4.9v2.7h-4.9zM549.2 128.0h2.7v2.7h-2.7zM553.6 128.0h7.1v2.7h-7.1zM483.2 130.2h2.7v2.7h-2.7zM489.8 130.2h2.7v2.7h-2.7zM496.4 130.2h2.7v2.7h-2.7zM500.8 130.2h2.7v2.7h-2.7zM511.8 130.2h2.7v2.7h-2.7zM533.8 130.2h2.7v2.7h-2.7zM549.2 130.2h4.9v2.7h-4.9z"/>
<path fill="#c4c4c4" d="M498.6 95.0h2.7v2.7h-2.7zM503.0 95.0h2.7v2.7h-2.7zM538.2 95.0h2.7v2.7h-2.7zM551.4 95.0h2.7v2.7h-2.7zM481.0 97.2h2.7v2.7h-2.7zM492.0 97.2h2.7v2.7h-2.7zM503.0 97.2h2.7v2.7h-2.7zM509.6 97.2h2.7v2.7h-2.7zM520.6 97.2h2.7v2.7h-2.7zM478.8 99.4h2.7v2.7h-2.7zM522.8 99.4h2.7v2.7h-2.7zM529.4 99.4h7.1v2.7h-7.1zM542.6 99.4h2.7v2.7h-2.7zM516.2 101.6h2.7v2.7h-2.7zM487.6 103.8h2.7v2.7h-2.7zM507.4 103.8h2.7v2.7h-2.7zM531.6 103.8h2.7v2.7h-2.7zM544.8 103.8h2.7v2.7h-2.7zM472.2 106.0h2.7v2.7h-2.7zM498.6 106.0h2.7v2.7h-2.7zM505.2 106.0h2.7v2.7h-2.7zM520.6 106.0h2.7v2.7h-2.7zM529.4 106.0h2.7v2.7h-2.7zM538.2 106.0h2.7v2.7h-2.7zM553.6 106.0h2.7v2.7h-2.7zM472.2 108.2h2.7v2.7h-2.7zM476.6 108.2h2.7v2.7h-2.7zM483.2 108.2h4.9v2.7h-4.9zM489.8 108.2h4.9v2.7h-4.9zM511.8 108.2h2.7v2.7h-2.7zM538.2 108.2h2.7v2.7h-2.7zM549.2 108.2h2.7v2.7h-2.7zM494.2 110.4h2.7v2.7h-2.7zM505.2 110.4h4.9v2.7h-4.9zM520.6 110.4h2.7v2.7h-2.7zM525.0 110.4h2.7v2.7h-2.7zM538.2 110.4h2.7v2.7h-2.7zM494.2 112.6h4.9v2.7h-4.9zM500.8 112.6h2.7v2.7h-2.7zM527.2 112.6h2.7v2.7h-2.7zM533.8 112.6h2.7v2.7h-2.7zM553.6 112.6h4.9v2.7h-4.9zM472.2 114.8h2.7v2.7h-2.7zM483.2 114.8h2.7v2.7h-2.7zM509.6 114.8h2.7v2.7h-2.7zM520.6 114.8h2.7v2.7h-2.7zM529.4 114.8h2.7v2.7h-2.7zM551.4 114.8h2.7v2.7h-2.7zM478.8 117.0h2.7v2.7h-2.7zM489.8 117.0h2.7v2.7h-2.7zM511.8 117.0h2.7v2.7h-2.7zM516.2 117.0h2.7v2.7h-2.7zM542.6 117.0h2.7v2.7h-2.7zM503.0 119.2h2.7v2.7h-2.7zM511.8 119.2h4.9v2.7h-4.9zM518.4 119.2h2.7v2.7h-2.7zM478.8 121.4h2.7v2.7h-2.7zM533.8 121.4h2.7v2.7h-2.7zM553.6 121.4h2.7v2.7h-2.7zM518.4 123.6h2.7v2.7h-2.7zM536.0 123.6h2.7v2.7h-2.7zM558.0 123.6h2.7v2.7h-2.7zM487.6 125.8h2.7v2.7h-2.7zM503.0 125.8h2.7v2.7h-2.7zM514.0 125.8h2.7v2.7h-2.7zM518.4 125.8h2.7v2.7h-2.7zM538.2 125.8h2.7v2.7h-2.7zM553.6 125.8h2.7v2.7h-2.7zM503.0 128.0h2.7v2.7h-2.7zM516.2 128.0h2.7v2.7h-2.7zM533.8 128.0h2.7v2.7h-2.7zM474.4 130.2h4.9v2.7h-4.9zM481.0 130.2h2.7v2.7h-2.7zM503.0 130.2h2.7v2.7h-2.7zM516.2 130.2h2.7v2.7h-2.7zM527.2 130.2h2.7v2.7h-2.7zM531.6 130.2h2.7v2.7h-2.7zM536.0 130.2h4.9v2.7h-4.9zM555.8 130.2h2.7v2.7h-2.7z"/>
<path fill="#1c1c1c" d="M509.6 95.0h2.7v2.7h-2.7zM514.0 95.0h2.7v2.7h-2.7zM542.6 95.0h2.7v2.7h-2.7zM514.0 103.8h2.7v2.7h-2.7zM470.0 106.0h2.7v2.7h-2.7zM470.0 110.4h2.7v2.7h-2.7zM489.8 112.6h2.7v2.7h-2.7zM525.0 112.6h2.7v2.7h-2.7zM549.2 112.6h2.7v2.7h-2.7zM498.6 114.8h2.7v2.7h-2.7zM547.0 121.4h2.7v2.7h-2.7zM489.8 123.6h2.7v2.7h-2.7zM489.8 125.8h2.7v2.7h-2.7zM520.6 125.8h2.7v2.7h-2.7z"/>
<path fill="#383838" d="M553.6 95.0h2.7v2.7h-2.7zM489.8 97.2h2.7v2.7h-2.7zM496.4 97.2h2.7v2.7h-2.7zM500.8 99.4h2.7v2.7h-2.7zM514.0 99.4h2.7v2.7h-2.7zM553.6 99.4h2.7v2.7h-2.7zM492.0 101.6h2.7v2.7h-2.7zM549.2 101.6h2.7v2.7h-2.7zM555.8 101.6h2.7v2.7h-2.7zM525.0 103.8h2.7v2.7h-2.7zM489.8 106.0h2.7v2.7h-2.7zM509.6 106.0h2.7v2.7h-2.7zM544.8 106.0h2.7v2.7h-2.7zM555.8 106.0h2.7v2.7h-2.7zM514.0 108.2h2.7v2.7h-2.7zM547.0 108.2h2.7v2.7h-2.7zM516.2 110.4h2.7v2.7h-2.7zM540.4 110.4h2.7v2.7h-2.7zM544.8 110.4h2.7v2.7h-2.7zM516.2 112.6h2.7v2.7h-2.7zM529.4 112.6h2.7v2.7h-2.7zM542.6 112.6h2.7v2.7h-2.7zM527.2 114.8h2.7v2.7h-2.7zM536.0 114.8h2.7v2.7h-2.7zM518.4 117.0h2.7v2.7h-2.7zM533.8 119.2h2.7v2.7h-2.7zM542.6 119.2h2.7v2.7h-2.7zM474.4 121.4h2.7v2.7h-2.7zM485.4 121.4h2.7v2.7h-2.7zM522.8 121.4h2.7v2.7h-2.7zM503.0 123.6h2.7v2.7h-2.7zM553.6 123.6h2.7v2.7h-2.7zM492.0 125.8h2.7v2.7h-2.7zM505.2 125.8h2.7v2.7h-2.7zM507.4 128.0h2.7v2.7h-2.7zM514.0 128.0h2.7v2.7h-2.7zM531.6 128.0h2.7v2.7h-2.7zM540.4 130.2h2.7v2.7h-2.7z"/>
<path fill="#000000" d="M470.0 97.2h4.9v2.7h-4.9zM533.8 97.2h2.7v2.7h-2.7zM558.0 103.8h2.7v2.7h-2.7zM485.4 106.0h2.7v2.7h-2.7zM522.8 119.2h2.7v2.7h-2.7z"/>
<path fill="#e0e0e0" d="M478.8 97.2h2.7v2.7h-2.7zM470.0 101.6h2.7v2.7h-2.7zM489.8 103.8h2.7v2.7h-2.7zM505.2 103.8h2.7v2.7h-2.7zM509.6 103.8h2.7v2.7h-2.7zM529.4 103.8h2.7v2.7h-2.7zM522.8 106.0h2.7v2.7h-2.7zM540.4 106.0h2.7v2.7h-2.7zM527.2 108.2h2.7v2.7h-2.7zM533.8 108.2h2.7v2.7h-2.7zM489.8 110.4h2.7v2.7h-2.7zM518.4 110.4h2.7v2.7h-2.7zM547.0 110.4h2.7v2.7h-2.7zM476.6 112.6h2.7v2.7h-2.7zM487.6 112.6h2.7v2.7h-2.7zM511.8 112.6h2.7v2.7h-2.7zM547.0 114.8h2.7v2.7h-2.7zM525.0 117.0h4.9v2.7h-4.9zM531.6 117.0h2.7v2.7h-2.7zM538.2 117.0h2.7v2.7h-2.7zM470.0 119.2h2.7v2.7h-2.7zM492.0 119.2h2.7v2.7h-2.7zM505.2 119.2h2.7v2.7h-2.7zM538.2 119.2h2.7v2.7h-2.7zM500.8 121.4h2.7v2.7h-2.7zM511.8 121.4h2.7v2.7h-2.7zM470.0 123.6h2.7v2.7h-2.7zM527.2 123.6h2.7v2.7h-2.7zM544.8 123.6h2.7v2.7h-2.7zM555.8 123.6h2.7v2.7h-2.7zM522.8 125.8h2.7v2.7h-2.7zM542.6 125.8h2.7v2.7h-2.7zM474.4 128.0h2.7v2.7h-2.7zM481.0 128.0h7.1v2.7h-7.1zM494.2 128.0h2.7v2.7h-2.7zM527.2 128.0h2.7v2.7h-2.7zM505.2 130.2h2.7v2.7h-2.7zM509.6 130.2h2.7v2.7h-2.7z"/>
<path fill="#fcfcfc" d="M474.4 99.4h2.7v2.7h-2.7zM481.0 101.6h2.7v2.7h-2.7zM533.8 101.6h2.7v2.7h-2.7zM529.4 108.2h2.7v2.7h-2.7zM542.6 108.2h2.7v2.7h-2.7zM498.6 110.4h2.7v2.7h-2.7zM522.8 114.8h2.7v2.7h-2.7zM522.8 117.0h2.7v2.7h-2.7zM509.6 119.2h2.7v2.7h-2.7zM547.0 119.2h2.7v2.7h-2.7zM558.0 125.8h2.7v2.7h-2.7zM500.8 128.0h2.7v2.7h-2.7zM485.4 130.2h2.7v2.7h-2.7zM507.4 130.2h2.7v2.7h-2.7z"/>
</g>
<rect x="564.00" y="95.00" width="89.60" height="37.40" fill="#868686"/>
<circle cx="626" cy="99.0" r="1.6" fill="#444" opacity="0.7"/>
<g transform="translate(0,3)">
<rect x="656.30" y="92.00" width="88.70" height="37.40" fill="#8a8a8a" filter="url(#nsmooth)"/>
</g>
<rect x="656.30" y="95.00" width="88.70" height="37.40" fill="url(#topdark)"/>
<clipPath id="spc201"><rect x="470" y="134.8" width="90" height="37.4"/></clipPath><g clip-path="url(#spc201)">
<path fill="#c4c4c4" d="M470.0 134.8h2.7v2.7h-2.7zM474.4 134.8h2.7v2.7h-2.7zM522.8 134.8h2.7v2.7h-2.7zM527.2 134.8h2.7v2.7h-2.7zM544.8 134.8h2.7v2.7h-2.7zM470.0 137.0h2.7v2.7h-2.7zM474.4 137.0h4.9v2.7h-4.9zM500.8 137.0h2.7v2.7h-2.7zM555.8 137.0h2.7v2.7h-2.7zM474.4 139.2h2.7v2.7h-2.7zM487.6 139.2h2.7v2.7h-2.7zM496.4 139.2h2.7v2.7h-2.7zM538.2 139.2h2.7v2.7h-2.7zM558.0 139.2h2.7v2.7h-2.7zM470.0 141.4h2.7v2.7h-2.7zM503.0 141.4h2.7v2.7h-2.7zM520.6 141.4h2.7v2.7h-2.7zM553.6 141.4h2.7v2.7h-2.7zM478.8 143.6h2.7v2.7h-2.7zM483.2 143.6h2.7v2.7h-2.7zM494.2 143.6h2.7v2.7h-2.7zM505.2 143.6h2.7v2.7h-2.7zM536.0 143.6h2.7v2.7h-2.7zM542.6 143.6h4.9v2.7h-4.9zM478.8 145.8h2.7v2.7h-2.7zM496.4 145.8h2.7v2.7h-2.7zM505.2 145.8h2.7v2.7h-2.7zM525.0 145.8h2.7v2.7h-2.7zM529.4 145.8h7.1v2.7h-7.1zM472.2 148.0h2.7v2.7h-2.7zM507.4 148.0h2.7v2.7h-2.7zM536.0 148.0h2.7v2.7h-2.7zM542.6 148.0h2.7v2.7h-2.7zM481.0 150.2h2.7v2.7h-2.7zM485.4 150.2h2.7v2.7h-2.7zM489.8 150.2h2.7v2.7h-2.7zM494.2 150.2h4.9v2.7h-4.9zM500.8 150.2h2.7v2.7h-2.7zM511.8 150.2h4.9v2.7h-4.9zM505.2 152.4h2.7v2.7h-2.7zM518.4 152.4h2.7v2.7h-2.7zM522.8 152.4h2.7v2.7h-2.7zM527.2 152.4h2.7v2.7h-2.7zM481.0 154.6h2.7v2.7h-2.7zM507.4 154.6h4.9v2.7h-4.9zM549.2 154.6h2.7v2.7h-2.7zM489.8 156.8h4.9v2.7h-4.9zM500.8 156.8h2.7v2.7h-2.7zM474.4 159.0h2.7v2.7h-2.7zM485.4 159.0h2.7v2.7h-2.7zM496.4 159.0h2.7v2.7h-2.7zM500.8 159.0h2.7v2.7h-2.7zM522.8 159.0h2.7v2.7h-2.7zM498.6 161.2h2.7v2.7h-2.7zM505.2 161.2h2.7v2.7h-2.7zM520.6 161.2h2.7v2.7h-2.7zM527.2 161.2h2.7v2.7h-2.7zM540.4 161.2h2.7v2.7h-2.7zM470.0 163.4h2.7v2.7h-2.7zM476.6 163.4h2.7v2.7h-2.7zM492.0 163.4h2.7v2.7h-2.7zM500.8 163.4h2.7v2.7h-2.7zM518.4 163.4h2.7v2.7h-2.7zM496.4 165.6h2.7v2.7h-2.7zM503.0 165.6h2.7v2.7h-2.7zM507.4 165.6h2.7v2.7h-2.7zM551.4 165.6h2.7v2.7h-2.7zM555.8 165.6h2.7v2.7h-2.7zM498.6 167.8h2.7v2.7h-2.7zM514.0 167.8h2.7v2.7h-2.7zM529.4 167.8h2.7v2.7h-2.7zM544.8 167.8h2.7v2.7h-2.7zM558.0 167.8h2.7v2.7h-2.7zM474.4 170.0h2.7v2.7h-2.7zM485.4 170.0h2.7v2.7h-2.7zM525.0 170.0h2.7v2.7h-2.7zM544.8 170.0h2.7v2.7h-2.7z"/>
<path fill="#a8a8a8" d="M472.2 134.8h2.7v2.7h-2.7zM485.4 134.8h2.7v2.7h-2.7zM489.8 134.8h2.7v2.7h-2.7zM511.8 134.8h2.7v2.7h-2.7zM516.2 134.8h2.7v2.7h-2.7zM525.0 134.8h2.7v2.7h-2.7zM529.4 134.8h2.7v2.7h-2.7zM533.8 134.8h2.7v2.7h-2.7zM547.0 134.8h2.7v2.7h-2.7zM553.6 134.8h2.7v2.7h-2.7zM498.6 137.0h2.7v2.7h-2.7zM525.0 137.0h2.7v2.7h-2.7zM533.8 137.0h2.7v2.7h-2.7zM542.6 137.0h2.7v2.7h-2.7zM547.0 137.0h2.7v2.7h-2.7zM470.0 139.2h4.9v2.7h-4.9zM498.6 139.2h7.1v2.7h-7.1zM525.0 139.2h2.7v2.7h-2.7zM536.0 139.2h2.7v2.7h-2.7zM544.8 139.2h2.7v2.7h-2.7zM549.2 139.2h2.7v2.7h-2.7zM553.6 139.2h2.7v2.7h-2.7zM478.8 141.4h2.7v2.7h-2.7zM489.8 141.4h4.9v2.7h-4.9zM505.2 141.4h9.3v2.7h-9.3zM527.2 141.4h2.7v2.7h-2.7zM533.8 141.4h7.1v2.7h-7.1zM558.0 141.4h2.7v2.7h-2.7zM472.2 143.6h2.7v2.7h-2.7zM481.0 143.6h2.7v2.7h-2.7zM485.4 143.6h2.7v2.7h-2.7zM492.0 143.6h2.7v2.7h-2.7zM503.0 143.6h2.7v2.7h-2.7zM507.4 143.6h2.7v2.7h-2.7zM525.0 143.6h2.7v2.7h-2.7zM531.6 143.6h2.7v2.7h-2.7zM551.4 143.6h2.7v2.7h-2.7zM487.6 145.8h2.7v2.7h-2.7zM494.2 145.8h2.7v2.7h-2.7zM518.4 145.8h2.7v2.7h-2.7zM522.8 145.8h2.7v2.7h-2.7zM540.4 145.8h2.7v2.7h-2.7zM470.0 148.0h2.7v2.7h-2.7zM481.0 148.0h2.7v2.7h-2.7zM489.8 148.0h2.7v2.7h-2.7zM494.2 148.0h2.7v2.7h-2.7zM509.6 148.0h2.7v2.7h-2.7zM527.2 148.0h2.7v2.7h-2.7zM533.8 148.0h2.7v2.7h-2.7zM538.2 148.0h2.7v2.7h-2.7zM544.8 148.0h2.7v2.7h-2.7zM551.4 148.0h2.7v2.7h-2.7zM470.0 150.2h2.7v2.7h-2.7zM483.2 150.2h2.7v2.7h-2.7zM492.0 150.2h2.7v2.7h-2.7zM503.0 150.2h4.9v2.7h-4.9zM542.6 150.2h2.7v2.7h-2.7zM547.0 150.2h2.7v2.7h-2.7zM551.4 150.2h2.7v2.7h-2.7zM478.8 152.4h2.7v2.7h-2.7zM483.2 152.4h2.7v2.7h-2.7zM500.8 152.4h4.9v2.7h-4.9zM525.0 152.4h2.7v2.7h-2.7zM531.6 152.4h4.9v2.7h-4.9zM551.4 152.4h2.7v2.7h-2.7zM472.2 154.6h4.9v2.7h-4.9zM492.0 154.6h2.7v2.7h-2.7zM496.4 154.6h2.7v2.7h-2.7zM514.0 154.6h4.9v2.7h-4.9zM531.6 154.6h2.7v2.7h-2.7zM542.6 154.6h2.7v2.7h-2.7zM485.4 156.8h4.9v2.7h-4.9zM496.4 156.8h4.9v2.7h-4.9zM503.0 156.8h2.7v2.7h-2.7zM507.4 156.8h2.7v2.7h-2.7zM514.0 156.8h2.7v2.7h-2.7zM522.8 156.8h2.7v2.7h-2.7zM533.8 156.8h2.7v2.7h-2.7zM540.4 156.8h2.7v2.7h-2.7zM553.6 156.8h2.7v2.7h-2.7zM472.2 159.0h2.7v2.7h-2.7zM529.4 159.0h2.7v2.7h-2.7zM549.2 159.0h2.7v2.7h-2.7zM472.2 161.2h2.7v2.7h-2.7zM476.6 161.2h2.7v2.7h-2.7zM485.4 161.2h2.7v2.7h-2.7zM494.2 161.2h2.7v2.7h-2.7zM522.8 161.2h2.7v2.7h-2.7zM544.8 161.2h2.7v2.7h-2.7zM478.8 163.4h2.7v2.7h-2.7zM487.6 163.4h2.7v2.7h-2.7zM507.4 163.4h2.7v2.7h-2.7zM520.6 163.4h2.7v2.7h-2.7zM527.2 163.4h2.7v2.7h-2.7zM540.4 163.4h2.7v2.7h-2.7zM474.4 165.6h2.7v2.7h-2.7zM498.6 165.6h4.9v2.7h-4.9zM509.6 165.6h2.7v2.7h-2.7zM516.2 165.6h7.1v2.7h-7.1zM525.0 165.6h4.9v2.7h-4.9zM540.4 165.6h2.7v2.7h-2.7zM494.2 167.8h2.7v2.7h-2.7zM507.4 167.8h2.7v2.7h-2.7zM518.4 167.8h2.7v2.7h-2.7zM522.8 167.8h2.7v2.7h-2.7zM531.6 167.8h2.7v2.7h-2.7zM476.6 170.0h7.1v2.7h-7.1zM496.4 170.0h4.9v2.7h-4.9zM507.4 170.0h2.7v2.7h-2.7zM531.6 170.0h2.7v2.7h-2.7z"/>
<path fill="#8c8c8c" d="M476.6 134.8h4.9v2.7h-4.9zM503.0 134.8h4.9v2.7h-4.9zM509.6 134.8h2.7v2.7h-2.7zM514.0 134.8h2.7v2.7h-2.7zM518.4 134.8h2.7v2.7h-2.7zM536.0 134.8h2.7v2.7h-2.7zM478.8 137.0h2.7v2.7h-2.7zM487.6 137.0h2.7v2.7h-2.7zM494.2 137.0h2.7v2.7h-2.7zM503.0 137.0h2.7v2.7h-2.7zM511.8 137.0h4.9v2.7h-4.9zM522.8 137.0h2.7v2.7h-2.7zM527.2 137.0h4.9v2.7h-4.9zM536.0 137.0h2.7v2.7h-2.7zM540.4 137.0h2.7v2.7h-2.7zM478.8 139.2h4.9v2.7h-4.9zM485.4 139.2h2.7v2.7h-2.7zM489.8 139.2h2.7v2.7h-2.7zM505.2 139.2h2.7v2.7h-2.7zM511.8 139.2h2.7v2.7h-2.7zM518.4 139.2h2.7v2.7h-2.7zM529.4 139.2h2.7v2.7h-2.7zM533.8 139.2h2.7v2.7h-2.7zM551.4 139.2h2.7v2.7h-2.7zM483.2 141.4h4.9v2.7h-4.9zM500.8 141.4h2.7v2.7h-2.7zM514.0 141.4h2.7v2.7h-2.7zM522.8 141.4h2.7v2.7h-2.7zM529.4 141.4h4.9v2.7h-4.9zM470.0 143.6h2.7v2.7h-2.7zM496.4 143.6h2.7v2.7h-2.7zM514.0 143.6h4.9v2.7h-4.9zM522.8 143.6h2.7v2.7h-2.7zM549.2 143.6h2.7v2.7h-2.7zM489.8 145.8h2.7v2.7h-2.7zM509.6 145.8h2.7v2.7h-2.7zM516.2 145.8h2.7v2.7h-2.7zM538.2 145.8h2.7v2.7h-2.7zM544.8 145.8h2.7v2.7h-2.7zM551.4 145.8h2.7v2.7h-2.7zM492.0 148.0h2.7v2.7h-2.7zM496.4 148.0h4.9v2.7h-4.9zM503.0 148.0h2.7v2.7h-2.7zM520.6 148.0h7.1v2.7h-7.1zM540.4 148.0h2.7v2.7h-2.7zM547.0 148.0h2.7v2.7h-2.7zM553.6 148.0h2.7v2.7h-2.7zM558.0 148.0h2.7v2.7h-2.7zM474.4 150.2h4.9v2.7h-4.9zM487.6 150.2h2.7v2.7h-2.7zM509.6 150.2h2.7v2.7h-2.7zM522.8 150.2h4.9v2.7h-4.9zM529.4 150.2h4.9v2.7h-4.9zM538.2 150.2h2.7v2.7h-2.7zM553.6 150.2h2.7v2.7h-2.7zM476.6 152.4h2.7v2.7h-2.7zM492.0 152.4h2.7v2.7h-2.7zM536.0 152.4h7.1v2.7h-7.1zM558.0 152.4h2.7v2.7h-2.7zM478.8 154.6h2.7v2.7h-2.7zM500.8 154.6h2.7v2.7h-2.7zM505.2 154.6h2.7v2.7h-2.7zM538.2 154.6h4.9v2.7h-4.9zM551.4 154.6h2.7v2.7h-2.7zM558.0 154.6h2.7v2.7h-2.7zM470.0 156.8h2.7v2.7h-2.7zM474.4 156.8h2.7v2.7h-2.7zM478.8 156.8h7.1v2.7h-7.1zM494.2 156.8h2.7v2.7h-2.7zM511.8 156.8h2.7v2.7h-2.7zM520.6 156.8h2.7v2.7h-2.7zM529.4 156.8h4.9v2.7h-4.9zM547.0 156.8h2.7v2.7h-2.7zM551.4 156.8h2.7v2.7h-2.7zM470.0 159.0h2.7v2.7h-2.7zM478.8 159.0h2.7v2.7h-2.7zM483.2 159.0h2.7v2.7h-2.7zM498.6 159.0h2.7v2.7h-2.7zM511.8 159.0h2.7v2.7h-2.7zM516.2 159.0h4.9v2.7h-4.9zM531.6 159.0h2.7v2.7h-2.7zM544.8 159.0h4.9v2.7h-4.9zM470.0 161.2h2.7v2.7h-2.7zM474.4 161.2h2.7v2.7h-2.7zM487.6 161.2h4.9v2.7h-4.9zM496.4 161.2h2.7v2.7h-2.7zM507.4 161.2h2.7v2.7h-2.7zM516.2 161.2h2.7v2.7h-2.7zM529.4 161.2h4.9v2.7h-4.9zM538.2 161.2h2.7v2.7h-2.7zM474.4 163.4h2.7v2.7h-2.7zM503.0 163.4h4.9v2.7h-4.9zM509.6 163.4h4.9v2.7h-4.9zM522.8 163.4h2.7v2.7h-2.7zM529.4 163.4h4.9v2.7h-4.9zM542.6 163.4h2.7v2.7h-2.7zM549.2 163.4h7.1v2.7h-7.1zM558.0 163.4h2.7v2.7h-2.7zM470.0 165.6h2.7v2.7h-2.7zM476.6 165.6h7.1v2.7h-7.1zM558.0 165.6h2.7v2.7h-2.7zM476.6 167.8h2.7v2.7h-2.7zM489.8 167.8h2.7v2.7h-2.7zM496.4 167.8h2.7v2.7h-2.7zM525.0 167.8h2.7v2.7h-2.7zM553.6 167.8h2.7v2.7h-2.7zM470.0 170.0h2.7v2.7h-2.7zM483.2 170.0h2.7v2.7h-2.7zM494.2 170.0h2.7v2.7h-2.7zM503.0 170.0h2.7v2.7h-2.7zM509.6 170.0h2.7v2.7h-2.7zM514.0 170.0h2.7v2.7h-2.7zM520.6 170.0h2.7v2.7h-2.7zM551.4 170.0h2.7v2.7h-2.7z"/>
<path fill="#383838" d="M481.0 134.8h4.9v2.7h-4.9zM487.6 134.8h2.7v2.7h-2.7zM520.6 134.8h2.7v2.7h-2.7zM538.2 134.8h2.7v2.7h-2.7zM516.2 137.0h2.7v2.7h-2.7zM520.6 137.0h2.7v2.7h-2.7zM547.0 139.2h2.7v2.7h-2.7zM472.2 141.4h2.7v2.7h-2.7zM496.4 141.4h2.7v2.7h-2.7zM516.2 141.4h2.7v2.7h-2.7zM544.8 141.4h2.7v2.7h-2.7zM520.6 143.6h2.7v2.7h-2.7zM553.6 143.6h2.7v2.7h-2.7zM503.0 145.8h2.7v2.7h-2.7zM514.0 145.8h2.7v2.7h-2.7zM520.6 145.8h2.7v2.7h-2.7zM516.2 148.0h2.7v2.7h-2.7zM498.6 150.2h2.7v2.7h-2.7zM516.2 150.2h2.7v2.7h-2.7zM555.8 150.2h4.9v2.7h-4.9zM494.2 152.4h4.9v2.7h-4.9zM511.8 152.4h2.7v2.7h-2.7zM555.8 152.4h2.7v2.7h-2.7zM485.4 154.6h2.7v2.7h-2.7zM522.8 154.6h2.7v2.7h-2.7zM538.2 156.8h2.7v2.7h-2.7zM551.4 159.0h2.7v2.7h-2.7zM481.0 161.2h4.9v2.7h-4.9zM483.2 163.4h2.7v2.7h-2.7zM489.8 163.4h2.7v2.7h-2.7zM529.4 165.6h2.7v2.7h-2.7zM547.0 165.6h2.7v2.7h-2.7zM474.4 167.8h2.7v2.7h-2.7zM487.6 167.8h2.7v2.7h-2.7zM540.4 170.0h2.7v2.7h-2.7zM558.0 170.0h2.7v2.7h-2.7z"/>
<path fill="#707070" d="M492.0 134.8h4.9v2.7h-4.9zM498.6 134.8h4.9v2.7h-4.9zM507.4 134.8h2.7v2.7h-2.7zM540.4 134.8h4.9v2.7h-4.9zM551.4 134.8h2.7v2.7h-2.7zM555.8 134.8h2.7v2.7h-2.7zM485.4 137.0h2.7v2.7h-2.7zM489.8 137.0h4.9v2.7h-4.9zM509.6 137.0h2.7v2.7h-2.7zM544.8 137.0h2.7v2.7h-2.7zM476.6 139.2h2.7v2.7h-2.7zM492.0 139.2h2.7v2.7h-2.7zM507.4 139.2h2.7v2.7h-2.7zM516.2 139.2h2.7v2.7h-2.7zM540.4 139.2h4.9v2.7h-4.9zM474.4 141.4h2.7v2.7h-2.7zM494.2 141.4h2.7v2.7h-2.7zM498.6 141.4h2.7v2.7h-2.7zM518.4 141.4h2.7v2.7h-2.7zM525.0 141.4h2.7v2.7h-2.7zM540.4 141.4h4.9v2.7h-4.9zM547.0 141.4h2.7v2.7h-2.7zM551.4 141.4h2.7v2.7h-2.7zM555.8 141.4h2.7v2.7h-2.7zM474.4 143.6h4.9v2.7h-4.9zM489.8 143.6h2.7v2.7h-2.7zM498.6 143.6h2.7v2.7h-2.7zM518.4 143.6h2.7v2.7h-2.7zM527.2 143.6h4.9v2.7h-4.9zM533.8 143.6h2.7v2.7h-2.7zM558.0 143.6h2.7v2.7h-2.7zM470.0 145.8h2.7v2.7h-2.7zM492.0 145.8h2.7v2.7h-2.7zM511.8 145.8h2.7v2.7h-2.7zM527.2 145.8h2.7v2.7h-2.7zM542.6 145.8h2.7v2.7h-2.7zM547.0 145.8h2.7v2.7h-2.7zM558.0 145.8h2.7v2.7h-2.7zM478.8 148.0h2.7v2.7h-2.7zM487.6 148.0h2.7v2.7h-2.7zM511.8 148.0h2.7v2.7h-2.7zM531.6 148.0h2.7v2.7h-2.7zM555.8 148.0h2.7v2.7h-2.7zM518.4 150.2h2.7v2.7h-2.7zM533.8 150.2h4.9v2.7h-4.9zM549.2 150.2h2.7v2.7h-2.7zM474.4 152.4h2.7v2.7h-2.7zM498.6 152.4h2.7v2.7h-2.7zM509.6 152.4h2.7v2.7h-2.7zM520.6 152.4h2.7v2.7h-2.7zM547.0 152.4h4.9v2.7h-4.9zM470.0 154.6h2.7v2.7h-2.7zM476.6 154.6h2.7v2.7h-2.7zM483.2 154.6h2.7v2.7h-2.7zM487.6 154.6h2.7v2.7h-2.7zM503.0 154.6h2.7v2.7h-2.7zM520.6 154.6h2.7v2.7h-2.7zM527.2 154.6h4.9v2.7h-4.9zM536.0 154.6h2.7v2.7h-2.7zM544.8 154.6h4.9v2.7h-4.9zM553.6 154.6h4.9v2.7h-4.9zM472.2 156.8h2.7v2.7h-2.7zM476.6 156.8h2.7v2.7h-2.7zM505.2 156.8h2.7v2.7h-2.7zM509.6 156.8h2.7v2.7h-2.7zM516.2 156.8h2.7v2.7h-2.7zM536.0 156.8h2.7v2.7h-2.7zM542.6 156.8h2.7v2.7h-2.7zM476.6 159.0h2.7v2.7h-2.7zM487.6 159.0h2.7v2.7h-2.7zM494.2 159.0h2.7v2.7h-2.7zM503.0 159.0h2.7v2.7h-2.7zM507.4 159.0h2.7v2.7h-2.7zM514.0 159.0h2.7v2.7h-2.7zM520.6 159.0h2.7v2.7h-2.7zM540.4 159.0h2.7v2.7h-2.7zM553.6 159.0h2.7v2.7h-2.7zM478.8 161.2h2.7v2.7h-2.7zM492.0 161.2h2.7v2.7h-2.7zM500.8 161.2h2.7v2.7h-2.7zM511.8 161.2h2.7v2.7h-2.7zM518.4 161.2h2.7v2.7h-2.7zM525.0 161.2h2.7v2.7h-2.7zM533.8 161.2h2.7v2.7h-2.7zM551.4 161.2h2.7v2.7h-2.7zM555.8 161.2h4.9v2.7h-4.9zM481.0 163.4h2.7v2.7h-2.7zM485.4 163.4h2.7v2.7h-2.7zM494.2 163.4h7.1v2.7h-7.1zM516.2 163.4h2.7v2.7h-2.7zM525.0 163.4h2.7v2.7h-2.7zM533.8 163.4h2.7v2.7h-2.7zM544.8 163.4h4.9v2.7h-4.9zM555.8 163.4h2.7v2.7h-2.7zM472.2 165.6h2.7v2.7h-2.7zM483.2 165.6h2.7v2.7h-2.7zM487.6 165.6h2.7v2.7h-2.7zM494.2 165.6h2.7v2.7h-2.7zM511.8 165.6h4.9v2.7h-4.9zM522.8 165.6h2.7v2.7h-2.7zM533.8 165.6h7.1v2.7h-7.1zM553.6 165.6h2.7v2.7h-2.7zM470.0 167.8h2.7v2.7h-2.7zM481.0 167.8h2.7v2.7h-2.7zM503.0 167.8h2.7v2.7h-2.7zM527.2 167.8h2.7v2.7h-2.7zM533.8 167.8h4.9v2.7h-4.9zM547.0 167.8h4.9v2.7h-4.9zM487.6 170.0h2.7v2.7h-2.7zM511.8 170.0h2.7v2.7h-2.7zM527.2 170.0h4.9v2.7h-4.9zM536.0 170.0h4.9v2.7h-4.9z"/>
<path fill="#545454" d="M496.4 134.8h2.7v2.7h-2.7zM531.6 134.8h2.7v2.7h-2.7zM558.0 134.8h2.7v2.7h-2.7zM496.4 137.0h2.7v2.7h-2.7zM505.2 137.0h4.9v2.7h-4.9zM531.6 137.0h2.7v2.7h-2.7zM538.2 137.0h2.7v2.7h-2.7zM549.2 137.0h2.7v2.7h-2.7zM553.6 137.0h2.7v2.7h-2.7zM514.0 139.2h2.7v2.7h-2.7zM527.2 139.2h2.7v2.7h-2.7zM531.6 139.2h2.7v2.7h-2.7zM555.8 139.2h2.7v2.7h-2.7zM487.6 141.4h2.7v2.7h-2.7zM549.2 141.4h2.7v2.7h-2.7zM500.8 143.6h2.7v2.7h-2.7zM511.8 143.6h2.7v2.7h-2.7zM538.2 143.6h4.9v2.7h-4.9zM547.0 143.6h2.7v2.7h-2.7zM555.8 143.6h2.7v2.7h-2.7zM472.2 145.8h7.1v2.7h-7.1zM481.0 145.8h2.7v2.7h-2.7zM498.6 145.8h4.9v2.7h-4.9zM507.4 145.8h2.7v2.7h-2.7zM536.0 145.8h2.7v2.7h-2.7zM553.6 145.8h2.7v2.7h-2.7zM474.4 148.0h2.7v2.7h-2.7zM505.2 148.0h2.7v2.7h-2.7zM514.0 148.0h2.7v2.7h-2.7zM472.2 150.2h2.7v2.7h-2.7zM478.8 150.2h2.7v2.7h-2.7zM507.4 150.2h2.7v2.7h-2.7zM470.0 152.4h2.7v2.7h-2.7zM481.0 152.4h2.7v2.7h-2.7zM516.2 152.4h2.7v2.7h-2.7zM529.4 152.4h2.7v2.7h-2.7zM542.6 152.4h2.7v2.7h-2.7zM489.8 154.6h2.7v2.7h-2.7zM511.8 154.6h2.7v2.7h-2.7zM525.0 154.6h2.7v2.7h-2.7zM525.0 156.8h2.7v2.7h-2.7zM549.2 156.8h2.7v2.7h-2.7zM505.2 159.0h2.7v2.7h-2.7zM509.6 159.0h2.7v2.7h-2.7zM527.2 159.0h2.7v2.7h-2.7zM533.8 159.0h2.7v2.7h-2.7zM538.2 159.0h2.7v2.7h-2.7zM555.8 159.0h2.7v2.7h-2.7zM509.6 161.2h2.7v2.7h-2.7zM514.0 161.2h2.7v2.7h-2.7zM536.0 161.2h2.7v2.7h-2.7zM549.2 161.2h2.7v2.7h-2.7zM472.2 163.4h2.7v2.7h-2.7zM514.0 163.4h2.7v2.7h-2.7zM485.4 165.6h2.7v2.7h-2.7zM492.0 165.6h2.7v2.7h-2.7zM542.6 165.6h4.9v2.7h-4.9zM549.2 165.6h2.7v2.7h-2.7zM472.2 167.8h2.7v2.7h-2.7zM540.4 167.8h4.9v2.7h-4.9zM492.0 170.0h2.7v2.7h-2.7zM500.8 170.0h2.7v2.7h-2.7zM516.2 170.0h4.9v2.7h-4.9zM533.8 170.0h2.7v2.7h-2.7zM549.2 170.0h2.7v2.7h-2.7zM553.6 170.0h4.9v2.7h-4.9z"/>
<path fill="#1c1c1c" d="M549.2 134.8h2.7v2.7h-2.7zM472.2 137.0h2.7v2.7h-2.7zM483.2 137.0h2.7v2.7h-2.7zM476.6 141.4h2.7v2.7h-2.7zM483.2 145.8h2.7v2.7h-2.7zM485.4 148.0h2.7v2.7h-2.7zM518.4 148.0h2.7v2.7h-2.7zM485.4 152.4h2.7v2.7h-2.7zM507.4 152.4h2.7v2.7h-2.7zM518.4 154.6h2.7v2.7h-2.7zM558.0 156.8h2.7v2.7h-2.7zM547.0 161.2h2.7v2.7h-2.7zM483.2 167.8h2.7v2.7h-2.7zM492.0 167.8h2.7v2.7h-2.7zM505.2 167.8h2.7v2.7h-2.7z"/>
<path fill="#e0e0e0" d="M481.0 137.0h2.7v2.7h-2.7zM518.4 137.0h2.7v2.7h-2.7zM558.0 137.0h2.7v2.7h-2.7zM494.2 139.2h2.7v2.7h-2.7zM509.6 139.2h2.7v2.7h-2.7zM509.6 143.6h2.7v2.7h-2.7zM549.2 145.8h2.7v2.7h-2.7zM555.8 145.8h2.7v2.7h-2.7zM483.2 148.0h2.7v2.7h-2.7zM500.8 148.0h2.7v2.7h-2.7zM520.6 150.2h2.7v2.7h-2.7zM527.2 150.2h2.7v2.7h-2.7zM540.4 150.2h2.7v2.7h-2.7zM472.2 152.4h2.7v2.7h-2.7zM489.8 152.4h2.7v2.7h-2.7zM514.0 152.4h2.7v2.7h-2.7zM544.8 152.4h2.7v2.7h-2.7zM533.8 154.6h2.7v2.7h-2.7zM518.4 156.8h2.7v2.7h-2.7zM527.2 156.8h2.7v2.7h-2.7zM555.8 156.8h2.7v2.7h-2.7zM481.0 159.0h2.7v2.7h-2.7zM489.8 159.0h4.9v2.7h-4.9zM525.0 159.0h2.7v2.7h-2.7zM536.0 159.0h2.7v2.7h-2.7zM542.6 159.0h2.7v2.7h-2.7zM558.0 159.0h2.7v2.7h-2.7zM503.0 161.2h2.7v2.7h-2.7zM542.6 161.2h2.7v2.7h-2.7zM536.0 163.4h4.9v2.7h-4.9zM531.6 165.6h2.7v2.7h-2.7zM478.8 167.8h2.7v2.7h-2.7zM509.6 167.8h4.9v2.7h-4.9zM516.2 167.8h2.7v2.7h-2.7zM520.6 167.8h2.7v2.7h-2.7zM538.2 167.8h2.7v2.7h-2.7zM551.4 167.8h2.7v2.7h-2.7zM555.8 167.8h2.7v2.7h-2.7zM489.8 170.0h2.7v2.7h-2.7zM522.8 170.0h2.7v2.7h-2.7zM542.6 170.0h2.7v2.7h-2.7z"/>
<path fill="#fcfcfc" d="M551.4 137.0h2.7v2.7h-2.7zM483.2 139.2h2.7v2.7h-2.7zM520.6 139.2h4.9v2.7h-4.9zM481.0 141.4h2.7v2.7h-2.7zM485.4 145.8h2.7v2.7h-2.7zM476.6 148.0h2.7v2.7h-2.7zM529.4 148.0h2.7v2.7h-2.7zM549.2 148.0h2.7v2.7h-2.7zM544.8 150.2h2.7v2.7h-2.7zM494.2 154.6h2.7v2.7h-2.7zM498.6 154.6h2.7v2.7h-2.7zM544.8 156.8h2.7v2.7h-2.7zM489.8 165.6h2.7v2.7h-2.7zM505.2 165.6h2.7v2.7h-2.7zM500.8 167.8h2.7v2.7h-2.7zM472.2 170.0h2.7v2.7h-2.7zM505.2 170.0h2.7v2.7h-2.7zM547.0 170.0h2.7v2.7h-2.7z"/>
<path fill="#000000" d="M487.6 143.6h2.7v2.7h-2.7zM487.6 152.4h2.7v2.7h-2.7zM553.6 152.4h2.7v2.7h-2.7zM553.6 161.2h2.7v2.7h-2.7zM485.4 167.8h2.7v2.7h-2.7z"/>
</g>
<rect x="564.00" y="134.80" width="89.60" height="37.40" fill="#868686"/>
<circle cx="626" cy="138.8" r="1.6" fill="#444" opacity="0.7"/>
<g transform="translate(0,6)">
<rect x="656.30" y="128.80" width="88.70" height="37.40" fill="#8a8a8a" filter="url(#nsmooth)"/>
</g>
<rect x="656.30" y="134.80" width="88.70" height="37.40" fill="url(#topdark)"/>
<clipPath id="spc202"><rect x="470" y="174.6" width="90" height="37.4"/></clipPath><g clip-path="url(#spc202)">
<path fill="#8c8c8c" d="M470.0 174.6h2.7v2.7h-2.7zM503.0 174.6h4.9v2.7h-4.9zM514.0 174.6h7.1v2.7h-7.1zM527.2 174.6h2.7v2.7h-2.7zM536.0 174.6h7.1v2.7h-7.1zM547.0 174.6h2.7v2.7h-2.7zM553.6 174.6h2.7v2.7h-2.7zM470.0 176.8h2.7v2.7h-2.7zM483.2 176.8h4.9v2.7h-4.9zM496.4 176.8h2.7v2.7h-2.7zM511.8 176.8h4.9v2.7h-4.9zM544.8 176.8h2.7v2.7h-2.7zM551.4 176.8h2.7v2.7h-2.7zM558.0 176.8h2.7v2.7h-2.7zM474.4 179.0h4.9v2.7h-4.9zM483.2 179.0h4.9v2.7h-4.9zM494.2 179.0h2.7v2.7h-2.7zM498.6 179.0h2.7v2.7h-2.7zM514.0 179.0h2.7v2.7h-2.7zM518.4 179.0h2.7v2.7h-2.7zM529.4 179.0h2.7v2.7h-2.7zM536.0 179.0h2.7v2.7h-2.7zM542.6 179.0h2.7v2.7h-2.7zM551.4 179.0h2.7v2.7h-2.7zM496.4 181.2h2.7v2.7h-2.7zM538.2 181.2h2.7v2.7h-2.7zM551.4 181.2h2.7v2.7h-2.7zM478.8 183.4h2.7v2.7h-2.7zM485.4 183.4h2.7v2.7h-2.7zM489.8 183.4h2.7v2.7h-2.7zM494.2 183.4h4.9v2.7h-4.9zM520.6 183.4h4.9v2.7h-4.9zM527.2 183.4h2.7v2.7h-2.7zM540.4 183.4h2.7v2.7h-2.7zM476.6 185.6h2.7v2.7h-2.7zM500.8 185.6h2.7v2.7h-2.7zM505.2 185.6h4.9v2.7h-4.9zM525.0 185.6h2.7v2.7h-2.7zM529.4 185.6h2.7v2.7h-2.7zM533.8 185.6h4.9v2.7h-4.9zM540.4 185.6h2.7v2.7h-2.7zM558.0 185.6h2.7v2.7h-2.7zM470.0 187.8h4.9v2.7h-4.9zM478.8 187.8h2.7v2.7h-2.7zM489.8 187.8h2.7v2.7h-2.7zM503.0 187.8h2.7v2.7h-2.7zM542.6 187.8h2.7v2.7h-2.7zM547.0 187.8h2.7v2.7h-2.7zM555.8 187.8h2.7v2.7h-2.7zM472.2 190.0h2.7v2.7h-2.7zM487.6 190.0h2.7v2.7h-2.7zM492.0 190.0h2.7v2.7h-2.7zM498.6 190.0h2.7v2.7h-2.7zM511.8 190.0h2.7v2.7h-2.7zM516.2 190.0h2.7v2.7h-2.7zM520.6 190.0h2.7v2.7h-2.7zM533.8 190.0h4.9v2.7h-4.9zM542.6 190.0h2.7v2.7h-2.7zM547.0 190.0h2.7v2.7h-2.7zM553.6 190.0h2.7v2.7h-2.7zM474.4 192.2h2.7v2.7h-2.7zM481.0 192.2h4.9v2.7h-4.9zM487.6 192.2h2.7v2.7h-2.7zM505.2 192.2h2.7v2.7h-2.7zM511.8 192.2h2.7v2.7h-2.7zM527.2 192.2h2.7v2.7h-2.7zM531.6 192.2h4.9v2.7h-4.9zM555.8 192.2h2.7v2.7h-2.7zM472.2 194.4h2.7v2.7h-2.7zM478.8 194.4h2.7v2.7h-2.7zM494.2 194.4h7.1v2.7h-7.1zM503.0 194.4h2.7v2.7h-2.7zM509.6 194.4h2.7v2.7h-2.7zM520.6 194.4h2.7v2.7h-2.7zM531.6 194.4h4.9v2.7h-4.9zM544.8 194.4h2.7v2.7h-2.7zM558.0 194.4h2.7v2.7h-2.7zM503.0 196.6h2.7v2.7h-2.7zM509.6 196.6h2.7v2.7h-2.7zM520.6 196.6h2.7v2.7h-2.7zM525.0 196.6h2.7v2.7h-2.7zM549.2 196.6h2.7v2.7h-2.7zM478.8 198.8h2.7v2.7h-2.7zM516.2 198.8h2.7v2.7h-2.7zM525.0 198.8h2.7v2.7h-2.7zM536.0 198.8h2.7v2.7h-2.7zM540.4 198.8h2.7v2.7h-2.7zM553.6 198.8h2.7v2.7h-2.7zM483.2 201.0h2.7v2.7h-2.7zM487.6 201.0h2.7v2.7h-2.7zM500.8 201.0h2.7v2.7h-2.7zM516.2 201.0h2.7v2.7h-2.7zM531.6 201.0h2.7v2.7h-2.7zM536.0 201.0h2.7v2.7h-2.7zM540.4 201.0h2.7v2.7h-2.7zM549.2 201.0h2.7v2.7h-2.7zM481.0 203.2h2.7v2.7h-2.7zM485.4 203.2h4.9v2.7h-4.9zM498.6 203.2h2.7v2.7h-2.7zM516.2 203.2h4.9v2.7h-4.9zM527.2 203.2h2.7v2.7h-2.7zM536.0 203.2h2.7v2.7h-2.7zM551.4 203.2h2.7v2.7h-2.7zM558.0 203.2h2.7v2.7h-2.7zM476.6 205.4h2.7v2.7h-2.7zM485.4 205.4h2.7v2.7h-2.7zM518.4 205.4h2.7v2.7h-2.7zM536.0 205.4h2.7v2.7h-2.7zM542.6 205.4h4.9v2.7h-4.9zM555.8 205.4h2.7v2.7h-2.7zM492.0 207.6h4.9v2.7h-4.9zM498.6 207.6h4.9v2.7h-4.9zM533.8 207.6h2.7v2.7h-2.7zM538.2 207.6h4.9v2.7h-4.9zM474.4 209.8h2.7v2.7h-2.7zM478.8 209.8h2.7v2.7h-2.7zM483.2 209.8h2.7v2.7h-2.7zM492.0 209.8h4.9v2.7h-4.9zM516.2 209.8h2.7v2.7h-2.7zM520.6 209.8h2.7v2.7h-2.7zM529.4 209.8h2.7v2.7h-2.7z"/>
<path fill="#383838" d="M472.2 174.6h2.7v2.7h-2.7zM483.2 174.6h2.7v2.7h-2.7zM496.4 174.6h2.7v2.7h-2.7zM509.6 174.6h2.7v2.7h-2.7zM507.4 176.8h2.7v2.7h-2.7zM503.0 179.0h2.7v2.7h-2.7zM558.0 179.0h2.7v2.7h-2.7zM485.4 181.2h2.7v2.7h-2.7zM529.4 181.2h2.7v2.7h-2.7zM533.8 181.2h2.7v2.7h-2.7zM470.0 183.4h2.7v2.7h-2.7zM476.6 183.4h2.7v2.7h-2.7zM529.4 183.4h2.7v2.7h-2.7zM489.8 185.6h2.7v2.7h-2.7zM549.2 185.6h2.7v2.7h-2.7zM474.4 187.8h2.7v2.7h-2.7zM511.8 187.8h2.7v2.7h-2.7zM531.6 187.8h2.7v2.7h-2.7zM553.6 187.8h2.7v2.7h-2.7zM492.0 194.4h2.7v2.7h-2.7zM522.8 194.4h2.7v2.7h-2.7zM551.4 194.4h2.7v2.7h-2.7zM478.8 196.6h2.7v2.7h-2.7zM529.4 196.6h2.7v2.7h-2.7zM558.0 196.6h2.7v2.7h-2.7zM481.0 198.8h2.7v2.7h-2.7zM514.0 198.8h2.7v2.7h-2.7zM531.6 198.8h4.9v2.7h-4.9zM489.8 201.0h2.7v2.7h-2.7zM498.6 201.0h2.7v2.7h-2.7zM547.0 201.0h2.7v2.7h-2.7zM544.8 203.2h2.7v2.7h-2.7zM498.6 205.4h2.7v2.7h-2.7zM551.4 205.4h2.7v2.7h-2.7zM476.6 209.8h2.7v2.7h-2.7zM500.8 209.8h2.7v2.7h-2.7zM518.4 209.8h2.7v2.7h-2.7z"/>
<path fill="#707070" d="M474.4 174.6h2.7v2.7h-2.7zM555.8 174.6h2.7v2.7h-2.7zM472.2 176.8h7.1v2.7h-7.1zM498.6 176.8h2.7v2.7h-2.7zM505.2 176.8h2.7v2.7h-2.7zM518.4 176.8h2.7v2.7h-2.7zM538.2 176.8h2.7v2.7h-2.7zM470.0 179.0h2.7v2.7h-2.7zM500.8 179.0h2.7v2.7h-2.7zM520.6 179.0h4.9v2.7h-4.9zM527.2 179.0h2.7v2.7h-2.7zM547.0 179.0h2.7v2.7h-2.7zM553.6 179.0h2.7v2.7h-2.7zM474.4 181.2h4.9v2.7h-4.9zM487.6 181.2h2.7v2.7h-2.7zM494.2 181.2h2.7v2.7h-2.7zM500.8 181.2h4.9v2.7h-4.9zM511.8 181.2h2.7v2.7h-2.7zM531.6 181.2h2.7v2.7h-2.7zM547.0 181.2h2.7v2.7h-2.7zM474.4 183.4h2.7v2.7h-2.7zM518.4 183.4h2.7v2.7h-2.7zM525.0 183.4h2.7v2.7h-2.7zM542.6 183.4h2.7v2.7h-2.7zM555.8 183.4h2.7v2.7h-2.7zM474.4 185.6h2.7v2.7h-2.7zM481.0 185.6h2.7v2.7h-2.7zM485.4 185.6h4.9v2.7h-4.9zM494.2 185.6h2.7v2.7h-2.7zM503.0 185.6h2.7v2.7h-2.7zM511.8 185.6h2.7v2.7h-2.7zM518.4 185.6h2.7v2.7h-2.7zM522.8 185.6h2.7v2.7h-2.7zM551.4 185.6h2.7v2.7h-2.7zM555.8 185.6h2.7v2.7h-2.7zM481.0 187.8h4.9v2.7h-4.9zM494.2 187.8h2.7v2.7h-2.7zM522.8 187.8h2.7v2.7h-2.7zM551.4 187.8h2.7v2.7h-2.7zM470.0 190.0h2.7v2.7h-2.7zM474.4 190.0h2.7v2.7h-2.7zM489.8 190.0h2.7v2.7h-2.7zM496.4 190.0h2.7v2.7h-2.7zM507.4 190.0h2.7v2.7h-2.7zM514.0 190.0h2.7v2.7h-2.7zM522.8 190.0h4.9v2.7h-4.9zM531.6 190.0h2.7v2.7h-2.7zM549.2 190.0h2.7v2.7h-2.7zM485.4 192.2h2.7v2.7h-2.7zM494.2 192.2h4.9v2.7h-4.9zM500.8 192.2h4.9v2.7h-4.9zM516.2 192.2h2.7v2.7h-2.7zM520.6 192.2h2.7v2.7h-2.7zM525.0 192.2h2.7v2.7h-2.7zM529.4 192.2h2.7v2.7h-2.7zM536.0 192.2h4.9v2.7h-4.9zM544.8 192.2h2.7v2.7h-2.7zM549.2 192.2h4.9v2.7h-4.9zM476.6 194.4h2.7v2.7h-2.7zM483.2 194.4h2.7v2.7h-2.7zM500.8 194.4h2.7v2.7h-2.7zM505.2 194.4h4.9v2.7h-4.9zM511.8 194.4h4.9v2.7h-4.9zM525.0 194.4h2.7v2.7h-2.7zM529.4 194.4h2.7v2.7h-2.7zM536.0 194.4h2.7v2.7h-2.7zM547.0 194.4h2.7v2.7h-2.7zM487.6 196.6h2.7v2.7h-2.7zM492.0 196.6h2.7v2.7h-2.7zM527.2 196.6h2.7v2.7h-2.7zM542.6 196.6h2.7v2.7h-2.7zM551.4 196.6h2.7v2.7h-2.7zM500.8 198.8h2.7v2.7h-2.7zM518.4 198.8h2.7v2.7h-2.7zM522.8 198.8h2.7v2.7h-2.7zM542.6 198.8h2.7v2.7h-2.7zM476.6 201.0h2.7v2.7h-2.7zM494.2 201.0h2.7v2.7h-2.7zM518.4 201.0h2.7v2.7h-2.7zM522.8 201.0h4.9v2.7h-4.9zM538.2 201.0h2.7v2.7h-2.7zM542.6 201.0h2.7v2.7h-2.7zM555.8 201.0h2.7v2.7h-2.7zM478.8 203.2h2.7v2.7h-2.7zM483.2 203.2h2.7v2.7h-2.7zM496.4 203.2h2.7v2.7h-2.7zM509.6 203.2h2.7v2.7h-2.7zM529.4 203.2h2.7v2.7h-2.7zM542.6 203.2h2.7v2.7h-2.7zM553.6 203.2h2.7v2.7h-2.7zM470.0 205.4h2.7v2.7h-2.7zM474.4 205.4h2.7v2.7h-2.7zM478.8 205.4h7.1v2.7h-7.1zM511.8 205.4h2.7v2.7h-2.7zM522.8 205.4h2.7v2.7h-2.7zM527.2 205.4h4.9v2.7h-4.9zM533.8 205.4h2.7v2.7h-2.7zM509.6 207.6h2.7v2.7h-2.7zM518.4 207.6h2.7v2.7h-2.7zM542.6 207.6h2.7v2.7h-2.7zM547.0 207.6h2.7v2.7h-2.7zM551.4 207.6h2.7v2.7h-2.7zM555.8 207.6h4.9v2.7h-4.9zM481.0 209.8h2.7v2.7h-2.7zM487.6 209.8h2.7v2.7h-2.7zM496.4 209.8h2.7v2.7h-2.7zM509.6 209.8h2.7v2.7h-2.7zM549.2 209.8h4.9v2.7h-4.9z"/>
<path fill="#a8a8a8" d="M476.6 174.6h2.7v2.7h-2.7zM489.8 174.6h4.9v2.7h-4.9zM507.4 174.6h2.7v2.7h-2.7zM511.8 174.6h2.7v2.7h-2.7zM520.6 174.6h2.7v2.7h-2.7zM525.0 174.6h2.7v2.7h-2.7zM529.4 174.6h2.7v2.7h-2.7zM542.6 174.6h4.9v2.7h-4.9zM549.2 174.6h4.9v2.7h-4.9zM481.0 176.8h2.7v2.7h-2.7zM487.6 176.8h4.9v2.7h-4.9zM500.8 176.8h2.7v2.7h-2.7zM542.6 176.8h2.7v2.7h-2.7zM547.0 176.8h2.7v2.7h-2.7zM553.6 176.8h2.7v2.7h-2.7zM481.0 179.0h2.7v2.7h-2.7zM489.8 179.0h2.7v2.7h-2.7zM496.4 179.0h2.7v2.7h-2.7zM505.2 179.0h2.7v2.7h-2.7zM511.8 179.0h2.7v2.7h-2.7zM533.8 179.0h2.7v2.7h-2.7zM478.8 181.2h4.9v2.7h-4.9zM492.0 181.2h2.7v2.7h-2.7zM516.2 181.2h2.7v2.7h-2.7zM522.8 181.2h2.7v2.7h-2.7zM527.2 181.2h2.7v2.7h-2.7zM542.6 181.2h2.7v2.7h-2.7zM553.6 181.2h4.9v2.7h-4.9zM472.2 183.4h2.7v2.7h-2.7zM481.0 183.4h4.9v2.7h-4.9zM500.8 183.4h4.9v2.7h-4.9zM507.4 183.4h2.7v2.7h-2.7zM514.0 183.4h4.9v2.7h-4.9zM483.2 185.6h2.7v2.7h-2.7zM492.0 185.6h2.7v2.7h-2.7zM496.4 185.6h2.7v2.7h-2.7zM516.2 185.6h2.7v2.7h-2.7zM527.2 185.6h2.7v2.7h-2.7zM538.2 185.6h2.7v2.7h-2.7zM542.6 185.6h2.7v2.7h-2.7zM547.0 185.6h2.7v2.7h-2.7zM492.0 187.8h2.7v2.7h-2.7zM500.8 187.8h2.7v2.7h-2.7zM514.0 187.8h2.7v2.7h-2.7zM527.2 187.8h4.9v2.7h-4.9zM536.0 187.8h2.7v2.7h-2.7zM540.4 187.8h2.7v2.7h-2.7zM558.0 187.8h2.7v2.7h-2.7zM481.0 190.0h2.7v2.7h-2.7zM485.4 190.0h2.7v2.7h-2.7zM494.2 190.0h2.7v2.7h-2.7zM527.2 190.0h2.7v2.7h-2.7zM544.8 190.0h2.7v2.7h-2.7zM555.8 190.0h2.7v2.7h-2.7zM470.0 192.2h2.7v2.7h-2.7zM478.8 192.2h2.7v2.7h-2.7zM489.8 192.2h2.7v2.7h-2.7zM507.4 192.2h4.9v2.7h-4.9zM514.0 192.2h2.7v2.7h-2.7zM518.4 192.2h2.7v2.7h-2.7zM540.4 192.2h2.7v2.7h-2.7zM518.4 194.4h2.7v2.7h-2.7zM538.2 194.4h4.9v2.7h-4.9zM470.0 196.6h2.7v2.7h-2.7zM476.6 196.6h2.7v2.7h-2.7zM483.2 196.6h2.7v2.7h-2.7zM500.8 196.6h2.7v2.7h-2.7zM514.0 196.6h2.7v2.7h-2.7zM540.4 196.6h2.7v2.7h-2.7zM553.6 196.6h4.9v2.7h-4.9zM474.4 198.8h4.9v2.7h-4.9zM489.8 198.8h2.7v2.7h-2.7zM496.4 198.8h4.9v2.7h-4.9zM503.0 198.8h2.7v2.7h-2.7zM507.4 198.8h2.7v2.7h-2.7zM511.8 198.8h2.7v2.7h-2.7zM544.8 198.8h2.7v2.7h-2.7zM555.8 198.8h2.7v2.7h-2.7zM472.2 201.0h2.7v2.7h-2.7zM478.8 201.0h2.7v2.7h-2.7zM485.4 201.0h2.7v2.7h-2.7zM496.4 201.0h2.7v2.7h-2.7zM505.2 201.0h2.7v2.7h-2.7zM509.6 201.0h2.7v2.7h-2.7zM514.0 201.0h2.7v2.7h-2.7zM527.2 201.0h2.7v2.7h-2.7zM558.0 201.0h2.7v2.7h-2.7zM472.2 203.2h7.1v2.7h-7.1zM503.0 203.2h4.9v2.7h-4.9zM514.0 203.2h2.7v2.7h-2.7zM522.8 203.2h2.7v2.7h-2.7zM540.4 203.2h2.7v2.7h-2.7zM555.8 203.2h2.7v2.7h-2.7zM472.2 205.4h2.7v2.7h-2.7zM492.0 205.4h2.7v2.7h-2.7zM503.0 205.4h9.3v2.7h-9.3zM514.0 205.4h2.7v2.7h-2.7zM520.6 205.4h2.7v2.7h-2.7zM525.0 205.4h2.7v2.7h-2.7zM540.4 205.4h2.7v2.7h-2.7zM547.0 205.4h2.7v2.7h-2.7zM470.0 207.6h7.1v2.7h-7.1zM481.0 207.6h4.9v2.7h-4.9zM503.0 207.6h2.7v2.7h-2.7zM507.4 207.6h2.7v2.7h-2.7zM514.0 207.6h2.7v2.7h-2.7zM522.8 207.6h7.1v2.7h-7.1zM536.0 207.6h2.7v2.7h-2.7zM549.2 207.6h2.7v2.7h-2.7zM485.4 209.8h2.7v2.7h-2.7zM498.6 209.8h2.7v2.7h-2.7zM505.2 209.8h2.7v2.7h-2.7zM511.8 209.8h2.7v2.7h-2.7zM533.8 209.8h2.7v2.7h-2.7zM540.4 209.8h2.7v2.7h-2.7zM555.8 209.8h2.7v2.7h-2.7z"/>
<path fill="#545454" d="M478.8 174.6h2.7v2.7h-2.7zM498.6 174.6h2.7v2.7h-2.7zM533.8 174.6h2.7v2.7h-2.7zM494.2 176.8h2.7v2.7h-2.7zM503.0 176.8h2.7v2.7h-2.7zM533.8 176.8h2.7v2.7h-2.7zM472.2 179.0h2.7v2.7h-2.7zM516.2 179.0h2.7v2.7h-2.7zM525.0 179.0h2.7v2.7h-2.7zM531.6 179.0h2.7v2.7h-2.7zM555.8 179.0h2.7v2.7h-2.7zM472.2 181.2h2.7v2.7h-2.7zM489.8 181.2h2.7v2.7h-2.7zM518.4 181.2h4.9v2.7h-4.9zM540.4 181.2h2.7v2.7h-2.7zM549.2 181.2h2.7v2.7h-2.7zM498.6 183.4h2.7v2.7h-2.7zM509.6 183.4h2.7v2.7h-2.7zM531.6 183.4h2.7v2.7h-2.7zM536.0 183.4h2.7v2.7h-2.7zM547.0 183.4h2.7v2.7h-2.7zM551.4 183.4h2.7v2.7h-2.7zM558.0 183.4h2.7v2.7h-2.7zM478.8 185.6h2.7v2.7h-2.7zM509.6 185.6h2.7v2.7h-2.7zM544.8 185.6h2.7v2.7h-2.7zM553.6 185.6h2.7v2.7h-2.7zM487.6 187.8h2.7v2.7h-2.7zM496.4 187.8h4.9v2.7h-4.9zM516.2 187.8h7.1v2.7h-7.1zM544.8 187.8h2.7v2.7h-2.7zM478.8 190.0h2.7v2.7h-2.7zM529.4 190.0h2.7v2.7h-2.7zM540.4 190.0h2.7v2.7h-2.7zM551.4 190.0h2.7v2.7h-2.7zM472.2 192.2h2.7v2.7h-2.7zM492.0 192.2h2.7v2.7h-2.7zM498.6 192.2h2.7v2.7h-2.7zM553.6 192.2h2.7v2.7h-2.7zM470.0 194.4h2.7v2.7h-2.7zM542.6 194.4h2.7v2.7h-2.7zM549.2 194.4h2.7v2.7h-2.7zM555.8 194.4h2.7v2.7h-2.7zM485.4 196.6h2.7v2.7h-2.7zM489.8 196.6h2.7v2.7h-2.7zM496.4 196.6h2.7v2.7h-2.7zM507.4 196.6h2.7v2.7h-2.7zM511.8 196.6h2.7v2.7h-2.7zM518.4 196.6h2.7v2.7h-2.7zM544.8 196.6h4.9v2.7h-4.9zM472.2 198.8h2.7v2.7h-2.7zM485.4 198.8h2.7v2.7h-2.7zM520.6 198.8h2.7v2.7h-2.7zM474.4 201.0h2.7v2.7h-2.7zM511.8 201.0h2.7v2.7h-2.7zM520.6 201.0h2.7v2.7h-2.7zM492.0 203.2h2.7v2.7h-2.7zM500.8 203.2h2.7v2.7h-2.7zM507.4 203.2h2.7v2.7h-2.7zM489.8 205.4h2.7v2.7h-2.7zM494.2 205.4h2.7v2.7h-2.7zM553.6 205.4h2.7v2.7h-2.7zM476.6 207.6h4.9v2.7h-4.9zM529.4 207.6h2.7v2.7h-2.7zM553.6 207.6h2.7v2.7h-2.7zM470.0 209.8h2.7v2.7h-2.7zM531.6 209.8h2.7v2.7h-2.7zM553.6 209.8h2.7v2.7h-2.7z"/>
<path fill="#1c1c1c" d="M481.0 174.6h2.7v2.7h-2.7zM500.8 174.6h2.7v2.7h-2.7zM522.8 174.6h2.7v2.7h-2.7zM520.6 176.8h2.7v2.7h-2.7zM536.0 176.8h2.7v2.7h-2.7zM549.2 179.0h2.7v2.7h-2.7zM509.6 181.2h2.7v2.7h-2.7zM514.0 181.2h2.7v2.7h-2.7zM514.0 185.6h2.7v2.7h-2.7zM483.2 190.0h2.7v2.7h-2.7zM538.2 190.0h2.7v2.7h-2.7zM536.0 196.6h2.7v2.7h-2.7zM558.0 198.8h2.7v2.7h-2.7zM551.4 201.0h2.7v2.7h-2.7zM549.2 203.2h2.7v2.7h-2.7zM487.6 205.4h2.7v2.7h-2.7zM500.8 205.4h2.7v2.7h-2.7zM549.2 205.4h2.7v2.7h-2.7zM496.4 207.6h2.7v2.7h-2.7zM516.2 207.6h2.7v2.7h-2.7z"/>
<path fill="#c4c4c4" d="M485.4 174.6h4.9v2.7h-4.9zM494.2 174.6h2.7v2.7h-2.7zM558.0 174.6h2.7v2.7h-2.7zM492.0 176.8h2.7v2.7h-2.7zM529.4 176.8h2.7v2.7h-2.7zM549.2 176.8h2.7v2.7h-2.7zM555.8 176.8h2.7v2.7h-2.7zM478.8 179.0h2.7v2.7h-2.7zM492.0 179.0h2.7v2.7h-2.7zM507.4 179.0h4.9v2.7h-4.9zM538.2 179.0h4.9v2.7h-4.9zM483.2 181.2h2.7v2.7h-2.7zM505.2 181.2h2.7v2.7h-2.7zM525.0 181.2h2.7v2.7h-2.7zM487.6 183.4h2.7v2.7h-2.7zM492.0 183.4h2.7v2.7h-2.7zM505.2 183.4h2.7v2.7h-2.7zM511.8 183.4h2.7v2.7h-2.7zM533.8 183.4h2.7v2.7h-2.7zM544.8 183.4h2.7v2.7h-2.7zM549.2 183.4h2.7v2.7h-2.7zM553.6 183.4h2.7v2.7h-2.7zM472.2 185.6h2.7v2.7h-2.7zM498.6 185.6h2.7v2.7h-2.7zM485.4 187.8h2.7v2.7h-2.7zM505.2 187.8h7.1v2.7h-7.1zM525.0 187.8h2.7v2.7h-2.7zM538.2 187.8h2.7v2.7h-2.7zM476.6 190.0h2.7v2.7h-2.7zM505.2 190.0h2.7v2.7h-2.7zM509.6 190.0h2.7v2.7h-2.7zM518.4 190.0h2.7v2.7h-2.7zM558.0 190.0h2.7v2.7h-2.7zM542.6 192.2h2.7v2.7h-2.7zM547.0 192.2h2.7v2.7h-2.7zM474.4 194.4h2.7v2.7h-2.7zM485.4 194.4h2.7v2.7h-2.7zM489.8 194.4h2.7v2.7h-2.7zM527.2 194.4h2.7v2.7h-2.7zM553.6 194.4h2.7v2.7h-2.7zM498.6 196.6h2.7v2.7h-2.7zM505.2 196.6h2.7v2.7h-2.7zM516.2 196.6h2.7v2.7h-2.7zM522.8 196.6h2.7v2.7h-2.7zM538.2 196.6h2.7v2.7h-2.7zM487.6 198.8h2.7v2.7h-2.7zM494.2 198.8h2.7v2.7h-2.7zM538.2 198.8h2.7v2.7h-2.7zM549.2 198.8h4.9v2.7h-4.9zM470.0 201.0h2.7v2.7h-2.7zM481.0 201.0h2.7v2.7h-2.7zM503.0 201.0h2.7v2.7h-2.7zM507.4 201.0h2.7v2.7h-2.7zM533.8 201.0h2.7v2.7h-2.7zM544.8 201.0h2.7v2.7h-2.7zM494.2 203.2h2.7v2.7h-2.7zM511.8 203.2h2.7v2.7h-2.7zM520.6 203.2h2.7v2.7h-2.7zM531.6 203.2h4.9v2.7h-4.9zM547.0 203.2h2.7v2.7h-2.7zM496.4 205.4h2.7v2.7h-2.7zM531.6 205.4h2.7v2.7h-2.7zM538.2 205.4h2.7v2.7h-2.7zM487.6 207.6h4.9v2.7h-4.9zM511.8 207.6h2.7v2.7h-2.7zM520.6 207.6h2.7v2.7h-2.7zM472.2 209.8h2.7v2.7h-2.7zM489.8 209.8h2.7v2.7h-2.7zM503.0 209.8h2.7v2.7h-2.7zM514.0 209.8h2.7v2.7h-2.7zM522.8 209.8h7.1v2.7h-7.1zM538.2 209.8h2.7v2.7h-2.7zM547.0 209.8h2.7v2.7h-2.7zM558.0 209.8h2.7v2.7h-2.7z"/>
<path fill="#e0e0e0" d="M531.6 174.6h2.7v2.7h-2.7zM522.8 176.8h7.1v2.7h-7.1zM531.6 176.8h2.7v2.7h-2.7zM540.4 176.8h2.7v2.7h-2.7zM487.6 179.0h2.7v2.7h-2.7zM544.8 179.0h2.7v2.7h-2.7zM470.0 181.2h2.7v2.7h-2.7zM498.6 181.2h2.7v2.7h-2.7zM507.4 181.2h2.7v2.7h-2.7zM470.0 185.6h2.7v2.7h-2.7zM520.6 185.6h2.7v2.7h-2.7zM531.6 185.6h2.7v2.7h-2.7zM476.6 187.8h2.7v2.7h-2.7zM500.8 190.0h4.9v2.7h-4.9zM476.6 192.2h2.7v2.7h-2.7zM522.8 192.2h2.7v2.7h-2.7zM487.6 194.4h2.7v2.7h-2.7zM516.2 194.4h2.7v2.7h-2.7zM472.2 196.6h4.9v2.7h-4.9zM533.8 196.6h2.7v2.7h-2.7zM483.2 198.8h2.7v2.7h-2.7zM505.2 198.8h2.7v2.7h-2.7zM509.6 198.8h2.7v2.7h-2.7zM527.2 198.8h4.9v2.7h-4.9zM547.0 198.8h2.7v2.7h-2.7zM492.0 201.0h2.7v2.7h-2.7zM529.4 201.0h2.7v2.7h-2.7zM553.6 201.0h2.7v2.7h-2.7zM470.0 203.2h2.7v2.7h-2.7zM489.8 203.2h2.7v2.7h-2.7zM525.0 203.2h2.7v2.7h-2.7zM538.2 203.2h2.7v2.7h-2.7zM516.2 205.4h2.7v2.7h-2.7zM558.0 205.4h2.7v2.7h-2.7zM505.2 207.6h2.7v2.7h-2.7zM531.6 207.6h2.7v2.7h-2.7zM507.4 209.8h2.7v2.7h-2.7zM542.6 209.8h4.9v2.7h-4.9z"/>
<path fill="#fcfcfc" d="M478.8 176.8h2.7v2.7h-2.7zM509.6 176.8h2.7v2.7h-2.7zM516.2 176.8h2.7v2.7h-2.7zM536.0 181.2h2.7v2.7h-2.7zM544.8 181.2h2.7v2.7h-2.7zM558.0 181.2h2.7v2.7h-2.7zM538.2 183.4h2.7v2.7h-2.7zM533.8 187.8h2.7v2.7h-2.7zM558.0 192.2h2.7v2.7h-2.7zM481.0 194.4h2.7v2.7h-2.7zM494.2 196.6h2.7v2.7h-2.7zM531.6 196.6h2.7v2.7h-2.7zM470.0 198.8h2.7v2.7h-2.7zM485.4 207.6h2.7v2.7h-2.7zM544.8 207.6h2.7v2.7h-2.7zM536.0 209.8h2.7v2.7h-2.7z"/>
<path fill="#000000" d="M549.2 187.8h2.7v2.7h-2.7zM481.0 196.6h2.7v2.7h-2.7zM492.0 198.8h2.7v2.7h-2.7z"/>
</g>
<rect x="564.00" y="174.60" width="89.60" height="37.40" fill="#868686"/>
<circle cx="626" cy="178.6" r="1.6" fill="#444" opacity="0.7"/>
<g transform="translate(0,9)">
<rect x="656.30" y="165.60" width="88.70" height="37.40" fill="#8a8a8a" filter="url(#nsmooth)"/>
</g>
<rect x="656.30" y="174.60" width="88.70" height="37.40" fill="url(#topdark)"/>
<clipPath id="spc203"><rect x="470" y="213.8" width="90" height="37.4"/></clipPath><g clip-path="url(#spc203)">
<path fill="#e0e0e0" d="M470.0 213.8h2.7v2.7h-2.7zM470.0 216.0h4.9v2.7h-4.9zM476.6 216.0h2.7v2.7h-2.7zM478.8 218.2h2.7v2.7h-2.7zM500.8 218.2h4.9v2.7h-4.9zM531.6 218.2h4.9v2.7h-4.9zM538.2 218.2h2.7v2.7h-2.7zM544.8 218.2h2.7v2.7h-2.7zM525.0 220.4h2.7v2.7h-2.7zM538.2 220.4h2.7v2.7h-2.7zM472.2 222.6h2.7v2.7h-2.7zM536.0 222.6h2.7v2.7h-2.7zM509.6 227.0h2.7v2.7h-2.7zM547.0 227.0h2.7v2.7h-2.7zM555.8 227.0h2.7v2.7h-2.7zM503.0 229.2h2.7v2.7h-2.7zM531.6 229.2h2.7v2.7h-2.7zM542.6 229.2h2.7v2.7h-2.7zM522.8 231.4h2.7v2.7h-2.7zM531.6 231.4h2.7v2.7h-2.7zM529.4 233.6h2.7v2.7h-2.7zM549.2 233.6h2.7v2.7h-2.7zM478.8 235.8h2.7v2.7h-2.7zM494.2 235.8h2.7v2.7h-2.7zM555.8 238.0h2.7v2.7h-2.7zM478.8 240.2h2.7v2.7h-2.7zM496.4 240.2h2.7v2.7h-2.7zM533.8 240.2h2.7v2.7h-2.7zM538.2 240.2h2.7v2.7h-2.7zM483.2 242.4h2.7v2.7h-2.7zM492.0 242.4h2.7v2.7h-2.7zM514.0 242.4h2.7v2.7h-2.7zM538.2 242.4h2.7v2.7h-2.7zM544.8 242.4h2.7v2.7h-2.7zM489.8 244.6h2.7v2.7h-2.7zM494.2 244.6h2.7v2.7h-2.7zM498.6 244.6h2.7v2.7h-2.7zM514.0 244.6h4.9v2.7h-4.9zM518.4 246.8h2.7v2.7h-2.7zM558.0 246.8h2.7v2.7h-2.7zM474.4 249.0h2.7v2.7h-2.7zM527.2 249.0h2.7v2.7h-2.7zM542.6 249.0h2.7v2.7h-2.7z"/>
<path fill="#c4c4c4" d="M472.2 213.8h2.7v2.7h-2.7zM518.4 213.8h2.7v2.7h-2.7zM533.8 213.8h2.7v2.7h-2.7zM540.4 213.8h2.7v2.7h-2.7zM478.8 216.0h2.7v2.7h-2.7zM487.6 216.0h2.7v2.7h-2.7zM507.4 216.0h2.7v2.7h-2.7zM533.8 216.0h2.7v2.7h-2.7zM551.4 216.0h2.7v2.7h-2.7zM494.2 218.2h4.9v2.7h-4.9zM520.6 218.2h2.7v2.7h-2.7zM525.0 218.2h2.7v2.7h-2.7zM547.0 218.2h4.9v2.7h-4.9zM474.4 220.4h2.7v2.7h-2.7zM485.4 220.4h2.7v2.7h-2.7zM518.4 220.4h4.9v2.7h-4.9zM536.0 220.4h2.7v2.7h-2.7zM547.0 220.4h2.7v2.7h-2.7zM494.2 222.6h4.9v2.7h-4.9zM516.2 222.6h2.7v2.7h-2.7zM529.4 222.6h2.7v2.7h-2.7zM544.8 222.6h2.7v2.7h-2.7zM470.0 224.8h2.7v2.7h-2.7zM489.8 224.8h2.7v2.7h-2.7zM529.4 224.8h2.7v2.7h-2.7zM474.4 227.0h2.7v2.7h-2.7zM500.8 227.0h2.7v2.7h-2.7zM505.2 227.0h2.7v2.7h-2.7zM551.4 227.0h2.7v2.7h-2.7zM511.8 229.2h2.7v2.7h-2.7zM516.2 229.2h2.7v2.7h-2.7zM538.2 229.2h4.9v2.7h-4.9zM544.8 229.2h2.7v2.7h-2.7zM478.8 231.4h2.7v2.7h-2.7zM496.4 231.4h9.3v2.7h-9.3zM507.4 231.4h4.9v2.7h-4.9zM542.6 231.4h2.7v2.7h-2.7zM547.0 231.4h2.7v2.7h-2.7zM555.8 231.4h2.7v2.7h-2.7zM476.6 233.6h2.7v2.7h-2.7zM481.0 233.6h2.7v2.7h-2.7zM507.4 233.6h4.9v2.7h-4.9zM527.2 233.6h2.7v2.7h-2.7zM536.0 233.6h4.9v2.7h-4.9zM558.0 233.6h2.7v2.7h-2.7zM509.6 235.8h2.7v2.7h-2.7zM516.2 235.8h2.7v2.7h-2.7zM472.2 238.0h2.7v2.7h-2.7zM498.6 238.0h2.7v2.7h-2.7zM531.6 238.0h2.7v2.7h-2.7zM542.6 238.0h2.7v2.7h-2.7zM470.0 240.2h2.7v2.7h-2.7zM487.6 240.2h2.7v2.7h-2.7zM494.2 240.2h2.7v2.7h-2.7zM500.8 240.2h2.7v2.7h-2.7zM542.6 240.2h2.7v2.7h-2.7zM553.6 240.2h2.7v2.7h-2.7zM470.0 242.4h2.7v2.7h-2.7zM487.6 242.4h4.9v2.7h-4.9zM505.2 242.4h2.7v2.7h-2.7zM522.8 242.4h7.1v2.7h-7.1zM472.2 244.6h2.7v2.7h-2.7zM483.2 244.6h2.7v2.7h-2.7zM507.4 244.6h2.7v2.7h-2.7zM525.0 244.6h2.7v2.7h-2.7zM472.2 246.8h2.7v2.7h-2.7zM476.6 246.8h7.1v2.7h-7.1zM487.6 246.8h2.7v2.7h-2.7zM494.2 246.8h2.7v2.7h-2.7zM516.2 246.8h2.7v2.7h-2.7zM542.6 246.8h2.7v2.7h-2.7zM547.0 246.8h2.7v2.7h-2.7zM553.6 246.8h2.7v2.7h-2.7zM472.2 249.0h2.7v2.7h-2.7zM492.0 249.0h2.7v2.7h-2.7zM496.4 249.0h2.7v2.7h-2.7zM547.0 249.0h2.7v2.7h-2.7z"/>
<path fill="#707070" d="M474.4 213.8h4.9v2.7h-4.9zM505.2 213.8h2.7v2.7h-2.7zM509.6 213.8h2.7v2.7h-2.7zM516.2 213.8h2.7v2.7h-2.7zM547.0 213.8h4.9v2.7h-4.9zM503.0 216.0h2.7v2.7h-2.7zM520.6 216.0h2.7v2.7h-2.7zM527.2 216.0h2.7v2.7h-2.7zM531.6 216.0h2.7v2.7h-2.7zM536.0 216.0h2.7v2.7h-2.7zM553.6 216.0h2.7v2.7h-2.7zM472.2 218.2h4.9v2.7h-4.9zM487.6 218.2h2.7v2.7h-2.7zM505.2 218.2h4.9v2.7h-4.9zM527.2 218.2h2.7v2.7h-2.7zM551.4 218.2h7.1v2.7h-7.1zM476.6 220.4h7.1v2.7h-7.1zM516.2 220.4h2.7v2.7h-2.7zM540.4 220.4h2.7v2.7h-2.7zM544.8 220.4h2.7v2.7h-2.7zM551.4 220.4h2.7v2.7h-2.7zM558.0 220.4h2.7v2.7h-2.7zM500.8 222.6h2.7v2.7h-2.7zM511.8 222.6h4.9v2.7h-4.9zM525.0 222.6h2.7v2.7h-2.7zM540.4 222.6h2.7v2.7h-2.7zM547.0 222.6h2.7v2.7h-2.7zM551.4 222.6h2.7v2.7h-2.7zM496.4 224.8h4.9v2.7h-4.9zM505.2 224.8h2.7v2.7h-2.7zM518.4 224.8h2.7v2.7h-2.7zM536.0 224.8h4.9v2.7h-4.9zM485.4 227.0h2.7v2.7h-2.7zM505.2 229.2h2.7v2.7h-2.7zM520.6 229.2h2.7v2.7h-2.7zM533.8 229.2h4.9v2.7h-4.9zM551.4 229.2h2.7v2.7h-2.7zM470.0 231.4h4.9v2.7h-4.9zM483.2 231.4h2.7v2.7h-2.7zM487.6 231.4h2.7v2.7h-2.7zM514.0 231.4h2.7v2.7h-2.7zM525.0 231.4h2.7v2.7h-2.7zM536.0 231.4h2.7v2.7h-2.7zM549.2 231.4h7.1v2.7h-7.1zM558.0 231.4h2.7v2.7h-2.7zM500.8 233.6h2.7v2.7h-2.7zM511.8 233.6h2.7v2.7h-2.7zM555.8 233.6h2.7v2.7h-2.7zM503.0 235.8h2.7v2.7h-2.7zM522.8 235.8h2.7v2.7h-2.7zM536.0 235.8h4.9v2.7h-4.9zM542.6 235.8h2.7v2.7h-2.7zM470.0 238.0h2.7v2.7h-2.7zM474.4 238.0h2.7v2.7h-2.7zM481.0 238.0h2.7v2.7h-2.7zM514.0 238.0h2.7v2.7h-2.7zM518.4 238.0h2.7v2.7h-2.7zM533.8 238.0h2.7v2.7h-2.7zM544.8 238.0h2.7v2.7h-2.7zM549.2 238.0h2.7v2.7h-2.7zM472.2 240.2h2.7v2.7h-2.7zM522.8 240.2h4.9v2.7h-4.9zM478.8 242.4h4.9v2.7h-4.9zM485.4 242.4h2.7v2.7h-2.7zM511.8 242.4h2.7v2.7h-2.7zM533.8 242.4h4.9v2.7h-4.9zM474.4 244.6h2.7v2.7h-2.7zM481.0 244.6h2.7v2.7h-2.7zM487.6 244.6h2.7v2.7h-2.7zM500.8 244.6h2.7v2.7h-2.7zM518.4 244.6h2.7v2.7h-2.7zM522.8 244.6h2.7v2.7h-2.7zM529.4 244.6h2.7v2.7h-2.7zM533.8 244.6h2.7v2.7h-2.7zM542.6 244.6h2.7v2.7h-2.7zM551.4 244.6h2.7v2.7h-2.7zM558.0 244.6h2.7v2.7h-2.7zM474.4 246.8h2.7v2.7h-2.7zM489.8 246.8h2.7v2.7h-2.7zM503.0 246.8h4.9v2.7h-4.9zM509.6 246.8h2.7v2.7h-2.7zM538.2 246.8h2.7v2.7h-2.7zM470.0 249.0h2.7v2.7h-2.7zM478.8 249.0h2.7v2.7h-2.7zM485.4 249.0h2.7v2.7h-2.7zM494.2 249.0h2.7v2.7h-2.7zM498.6 249.0h2.7v2.7h-2.7zM505.2 249.0h2.7v2.7h-2.7zM518.4 249.0h2.7v2.7h-2.7zM531.6 249.0h2.7v2.7h-2.7z"/>
<path fill="#a8a8a8" d="M478.8 213.8h2.7v2.7h-2.7zM483.2 213.8h2.7v2.7h-2.7zM494.2 213.8h4.9v2.7h-4.9zM507.4 213.8h2.7v2.7h-2.7zM511.8 213.8h2.7v2.7h-2.7zM520.6 213.8h2.7v2.7h-2.7zM525.0 213.8h2.7v2.7h-2.7zM538.2 213.8h2.7v2.7h-2.7zM542.6 213.8h4.9v2.7h-4.9zM551.4 213.8h2.7v2.7h-2.7zM474.4 216.0h2.7v2.7h-2.7zM481.0 216.0h4.9v2.7h-4.9zM494.2 216.0h2.7v2.7h-2.7zM500.8 216.0h2.7v2.7h-2.7zM529.4 216.0h2.7v2.7h-2.7zM540.4 216.0h2.7v2.7h-2.7zM547.0 216.0h2.7v2.7h-2.7zM555.8 216.0h4.9v2.7h-4.9zM492.0 218.2h2.7v2.7h-2.7zM529.4 218.2h2.7v2.7h-2.7zM540.4 218.2h4.9v2.7h-4.9zM558.0 218.2h2.7v2.7h-2.7zM487.6 220.4h2.7v2.7h-2.7zM496.4 220.4h4.9v2.7h-4.9zM514.0 220.4h2.7v2.7h-2.7zM522.8 220.4h2.7v2.7h-2.7zM531.6 220.4h4.9v2.7h-4.9zM542.6 220.4h2.7v2.7h-2.7zM553.6 220.4h4.9v2.7h-4.9zM481.0 222.6h2.7v2.7h-2.7zM487.6 222.6h2.7v2.7h-2.7zM507.4 222.6h2.7v2.7h-2.7zM518.4 222.6h2.7v2.7h-2.7zM522.8 222.6h2.7v2.7h-2.7zM527.2 222.6h2.7v2.7h-2.7zM531.6 222.6h2.7v2.7h-2.7zM538.2 222.6h2.7v2.7h-2.7zM476.6 224.8h2.7v2.7h-2.7zM481.0 224.8h2.7v2.7h-2.7zM485.4 224.8h4.9v2.7h-4.9zM500.8 224.8h2.7v2.7h-2.7zM509.6 224.8h2.7v2.7h-2.7zM514.0 224.8h4.9v2.7h-4.9zM542.6 224.8h2.7v2.7h-2.7zM549.2 224.8h2.7v2.7h-2.7zM553.6 224.8h2.7v2.7h-2.7zM470.0 227.0h2.7v2.7h-2.7zM476.6 227.0h7.1v2.7h-7.1zM496.4 227.0h2.7v2.7h-2.7zM503.0 227.0h2.7v2.7h-2.7zM507.4 227.0h2.7v2.7h-2.7zM529.4 227.0h2.7v2.7h-2.7zM536.0 227.0h2.7v2.7h-2.7zM470.0 229.2h2.7v2.7h-2.7zM474.4 229.2h2.7v2.7h-2.7zM485.4 229.2h2.7v2.7h-2.7zM489.8 229.2h2.7v2.7h-2.7zM494.2 229.2h2.7v2.7h-2.7zM498.6 229.2h4.9v2.7h-4.9zM558.0 229.2h2.7v2.7h-2.7zM485.4 231.4h2.7v2.7h-2.7zM492.0 231.4h2.7v2.7h-2.7zM527.2 231.4h2.7v2.7h-2.7zM533.8 231.4h2.7v2.7h-2.7zM538.2 231.4h2.7v2.7h-2.7zM544.8 231.4h2.7v2.7h-2.7zM470.0 233.6h2.7v2.7h-2.7zM483.2 233.6h2.7v2.7h-2.7zM487.6 233.6h2.7v2.7h-2.7zM492.0 233.6h2.7v2.7h-2.7zM496.4 233.6h4.9v2.7h-4.9zM503.0 233.6h2.7v2.7h-2.7zM520.6 233.6h2.7v2.7h-2.7zM531.6 233.6h2.7v2.7h-2.7zM540.4 233.6h2.7v2.7h-2.7zM547.0 233.6h2.7v2.7h-2.7zM474.4 235.8h2.7v2.7h-2.7zM487.6 235.8h2.7v2.7h-2.7zM505.2 235.8h2.7v2.7h-2.7zM518.4 235.8h4.9v2.7h-4.9zM531.6 235.8h2.7v2.7h-2.7zM540.4 235.8h2.7v2.7h-2.7zM476.6 238.0h4.9v2.7h-4.9zM485.4 238.0h2.7v2.7h-2.7zM494.2 238.0h2.7v2.7h-2.7zM503.0 238.0h2.7v2.7h-2.7zM520.6 238.0h2.7v2.7h-2.7zM525.0 238.0h7.1v2.7h-7.1zM547.0 238.0h2.7v2.7h-2.7zM551.4 238.0h4.9v2.7h-4.9zM509.6 240.2h2.7v2.7h-2.7zM551.4 240.2h2.7v2.7h-2.7zM472.2 242.4h2.7v2.7h-2.7zM498.6 242.4h2.7v2.7h-2.7zM503.0 242.4h2.7v2.7h-2.7zM516.2 242.4h2.7v2.7h-2.7zM529.4 242.4h2.7v2.7h-2.7zM542.6 242.4h2.7v2.7h-2.7zM549.2 242.4h2.7v2.7h-2.7zM553.6 242.4h4.9v2.7h-4.9zM478.8 244.6h2.7v2.7h-2.7zM505.2 244.6h2.7v2.7h-2.7zM520.6 244.6h2.7v2.7h-2.7zM496.4 246.8h2.7v2.7h-2.7zM511.8 246.8h2.7v2.7h-2.7zM522.8 246.8h2.7v2.7h-2.7zM533.8 246.8h2.7v2.7h-2.7zM540.4 246.8h2.7v2.7h-2.7zM551.4 246.8h2.7v2.7h-2.7zM481.0 249.0h2.7v2.7h-2.7zM487.6 249.0h2.7v2.7h-2.7zM503.0 249.0h2.7v2.7h-2.7zM507.4 249.0h2.7v2.7h-2.7zM536.0 249.0h7.1v2.7h-7.1zM549.2 249.0h2.7v2.7h-2.7zM555.8 249.0h4.9v2.7h-4.9z"/>
<path fill="#545454" d="M481.0 213.8h2.7v2.7h-2.7zM485.4 213.8h2.7v2.7h-2.7zM503.0 213.8h2.7v2.7h-2.7zM531.6 213.8h2.7v2.7h-2.7zM553.6 213.8h2.7v2.7h-2.7zM492.0 216.0h2.7v2.7h-2.7zM498.6 216.0h2.7v2.7h-2.7zM505.2 216.0h2.7v2.7h-2.7zM514.0 216.0h2.7v2.7h-2.7zM525.0 216.0h2.7v2.7h-2.7zM498.6 218.2h2.7v2.7h-2.7zM511.8 218.2h2.7v2.7h-2.7zM492.0 220.4h2.7v2.7h-2.7zM505.2 220.4h7.1v2.7h-7.1zM529.4 220.4h2.7v2.7h-2.7zM474.4 222.6h2.7v2.7h-2.7zM485.4 222.6h2.7v2.7h-2.7zM505.2 222.6h2.7v2.7h-2.7zM509.6 222.6h2.7v2.7h-2.7zM544.8 224.8h2.7v2.7h-2.7zM555.8 224.8h2.7v2.7h-2.7zM483.2 227.0h2.7v2.7h-2.7zM489.8 227.0h2.7v2.7h-2.7zM516.2 227.0h2.7v2.7h-2.7zM531.6 227.0h4.9v2.7h-4.9zM542.6 227.0h4.9v2.7h-4.9zM496.4 229.2h2.7v2.7h-2.7zM507.4 229.2h4.9v2.7h-4.9zM514.0 229.2h2.7v2.7h-2.7zM518.4 229.2h2.7v2.7h-2.7zM522.8 229.2h2.7v2.7h-2.7zM474.4 231.4h4.9v2.7h-4.9zM494.2 231.4h2.7v2.7h-2.7zM529.4 231.4h2.7v2.7h-2.7zM478.8 233.6h2.7v2.7h-2.7zM485.4 233.6h2.7v2.7h-2.7zM516.2 233.6h2.7v2.7h-2.7zM533.8 233.6h2.7v2.7h-2.7zM544.8 233.6h2.7v2.7h-2.7zM472.2 235.8h2.7v2.7h-2.7zM476.6 235.8h2.7v2.7h-2.7zM485.4 235.8h2.7v2.7h-2.7zM492.0 235.8h2.7v2.7h-2.7zM511.8 235.8h2.7v2.7h-2.7zM547.0 235.8h2.7v2.7h-2.7zM558.0 235.8h2.7v2.7h-2.7zM487.6 238.0h2.7v2.7h-2.7zM500.8 238.0h2.7v2.7h-2.7zM538.2 238.0h2.7v2.7h-2.7zM481.0 240.2h2.7v2.7h-2.7zM529.4 240.2h2.7v2.7h-2.7zM474.4 242.4h2.7v2.7h-2.7zM494.2 242.4h2.7v2.7h-2.7zM509.6 242.4h2.7v2.7h-2.7zM518.4 242.4h4.9v2.7h-4.9zM492.0 244.6h2.7v2.7h-2.7zM496.4 244.6h2.7v2.7h-2.7zM531.6 244.6h2.7v2.7h-2.7zM538.2 244.6h2.7v2.7h-2.7zM544.8 244.6h2.7v2.7h-2.7zM549.2 244.6h2.7v2.7h-2.7zM470.0 246.8h2.7v2.7h-2.7zM483.2 246.8h2.7v2.7h-2.7zM500.8 246.8h2.7v2.7h-2.7zM520.6 246.8h2.7v2.7h-2.7zM549.2 246.8h2.7v2.7h-2.7zM509.6 249.0h7.1v2.7h-7.1zM522.8 249.0h2.7v2.7h-2.7zM544.8 249.0h2.7v2.7h-2.7zM553.6 249.0h2.7v2.7h-2.7z"/>
<path fill="#8c8c8c" d="M487.6 213.8h2.7v2.7h-2.7zM492.0 213.8h2.7v2.7h-2.7zM498.6 213.8h2.7v2.7h-2.7zM514.0 213.8h2.7v2.7h-2.7zM522.8 213.8h2.7v2.7h-2.7zM529.4 213.8h2.7v2.7h-2.7zM558.0 213.8h2.7v2.7h-2.7zM485.4 216.0h2.7v2.7h-2.7zM489.8 216.0h2.7v2.7h-2.7zM496.4 216.0h2.7v2.7h-2.7zM542.6 216.0h4.9v2.7h-4.9zM476.6 218.2h2.7v2.7h-2.7zM485.4 218.2h2.7v2.7h-2.7zM489.8 218.2h2.7v2.7h-2.7zM509.6 218.2h2.7v2.7h-2.7zM514.0 218.2h4.9v2.7h-4.9zM536.0 218.2h2.7v2.7h-2.7zM470.0 220.4h4.9v2.7h-4.9zM483.2 220.4h2.7v2.7h-2.7zM503.0 220.4h2.7v2.7h-2.7zM511.8 220.4h2.7v2.7h-2.7zM470.0 222.6h2.7v2.7h-2.7zM476.6 222.6h2.7v2.7h-2.7zM483.2 222.6h2.7v2.7h-2.7zM489.8 222.6h4.9v2.7h-4.9zM498.6 222.6h2.7v2.7h-2.7zM503.0 222.6h2.7v2.7h-2.7zM520.6 222.6h2.7v2.7h-2.7zM533.8 222.6h2.7v2.7h-2.7zM542.6 222.6h2.7v2.7h-2.7zM549.2 222.6h2.7v2.7h-2.7zM553.6 222.6h7.1v2.7h-7.1zM474.4 224.8h2.7v2.7h-2.7zM483.2 224.8h2.7v2.7h-2.7zM492.0 224.8h2.7v2.7h-2.7zM507.4 224.8h2.7v2.7h-2.7zM520.6 224.8h2.7v2.7h-2.7zM525.0 224.8h4.9v2.7h-4.9zM531.6 224.8h2.7v2.7h-2.7zM547.0 224.8h2.7v2.7h-2.7zM551.4 224.8h2.7v2.7h-2.7zM558.0 224.8h2.7v2.7h-2.7zM472.2 227.0h2.7v2.7h-2.7zM487.6 227.0h2.7v2.7h-2.7zM492.0 227.0h4.9v2.7h-4.9zM520.6 227.0h7.1v2.7h-7.1zM540.4 227.0h2.7v2.7h-2.7zM549.2 227.0h2.7v2.7h-2.7zM553.6 227.0h2.7v2.7h-2.7zM472.2 229.2h2.7v2.7h-2.7zM476.6 229.2h7.1v2.7h-7.1zM487.6 229.2h2.7v2.7h-2.7zM492.0 229.2h2.7v2.7h-2.7zM525.0 229.2h7.1v2.7h-7.1zM547.0 229.2h4.9v2.7h-4.9zM489.8 231.4h2.7v2.7h-2.7zM505.2 231.4h2.7v2.7h-2.7zM516.2 231.4h2.7v2.7h-2.7zM520.6 231.4h2.7v2.7h-2.7zM540.4 231.4h2.7v2.7h-2.7zM472.2 233.6h4.9v2.7h-4.9zM505.2 233.6h2.7v2.7h-2.7zM514.0 233.6h2.7v2.7h-2.7zM518.4 233.6h2.7v2.7h-2.7zM525.0 233.6h2.7v2.7h-2.7zM551.4 233.6h4.9v2.7h-4.9zM489.8 235.8h2.7v2.7h-2.7zM500.8 235.8h2.7v2.7h-2.7zM507.4 235.8h2.7v2.7h-2.7zM514.0 235.8h2.7v2.7h-2.7zM527.2 235.8h2.7v2.7h-2.7zM533.8 235.8h2.7v2.7h-2.7zM544.8 235.8h2.7v2.7h-2.7zM549.2 235.8h2.7v2.7h-2.7zM483.2 238.0h2.7v2.7h-2.7zM492.0 238.0h2.7v2.7h-2.7zM496.4 238.0h2.7v2.7h-2.7zM507.4 238.0h2.7v2.7h-2.7zM511.8 238.0h2.7v2.7h-2.7zM516.2 238.0h2.7v2.7h-2.7zM522.8 238.0h2.7v2.7h-2.7zM536.0 238.0h2.7v2.7h-2.7zM540.4 238.0h2.7v2.7h-2.7zM476.6 240.2h2.7v2.7h-2.7zM485.4 240.2h2.7v2.7h-2.7zM489.8 240.2h4.9v2.7h-4.9zM505.2 240.2h4.9v2.7h-4.9zM518.4 240.2h4.9v2.7h-4.9zM536.0 240.2h2.7v2.7h-2.7zM540.4 240.2h2.7v2.7h-2.7zM544.8 240.2h2.7v2.7h-2.7zM549.2 240.2h2.7v2.7h-2.7zM555.8 240.2h4.9v2.7h-4.9zM496.4 242.4h2.7v2.7h-2.7zM500.8 242.4h2.7v2.7h-2.7zM547.0 242.4h2.7v2.7h-2.7zM558.0 242.4h2.7v2.7h-2.7zM470.0 244.6h2.7v2.7h-2.7zM476.6 244.6h2.7v2.7h-2.7zM509.6 244.6h4.9v2.7h-4.9zM527.2 244.6h2.7v2.7h-2.7zM540.4 244.6h2.7v2.7h-2.7zM547.0 244.6h2.7v2.7h-2.7zM555.8 244.6h2.7v2.7h-2.7zM485.4 246.8h2.7v2.7h-2.7zM492.0 246.8h2.7v2.7h-2.7zM498.6 246.8h2.7v2.7h-2.7zM507.4 246.8h2.7v2.7h-2.7zM531.6 246.8h2.7v2.7h-2.7zM536.0 246.8h2.7v2.7h-2.7zM555.8 246.8h2.7v2.7h-2.7zM476.6 249.0h2.7v2.7h-2.7zM483.2 249.0h2.7v2.7h-2.7zM500.8 249.0h2.7v2.7h-2.7zM525.0 249.0h2.7v2.7h-2.7zM533.8 249.0h2.7v2.7h-2.7zM551.4 249.0h2.7v2.7h-2.7z"/>
<path fill="#383838" d="M489.8 213.8h2.7v2.7h-2.7zM518.4 216.0h2.7v2.7h-2.7zM522.8 216.0h2.7v2.7h-2.7zM549.2 216.0h2.7v2.7h-2.7zM470.0 218.2h2.7v2.7h-2.7zM522.8 218.2h2.7v2.7h-2.7zM489.8 220.4h2.7v2.7h-2.7zM549.2 220.4h2.7v2.7h-2.7zM478.8 222.6h2.7v2.7h-2.7zM494.2 224.8h2.7v2.7h-2.7zM503.0 224.8h2.7v2.7h-2.7zM498.6 227.0h2.7v2.7h-2.7zM514.0 227.0h2.7v2.7h-2.7zM538.2 227.0h2.7v2.7h-2.7zM555.8 229.2h2.7v2.7h-2.7zM481.0 231.4h2.7v2.7h-2.7zM518.4 231.4h2.7v2.7h-2.7zM489.8 233.6h2.7v2.7h-2.7zM494.2 233.6h2.7v2.7h-2.7zM522.8 233.6h2.7v2.7h-2.7zM542.6 233.6h2.7v2.7h-2.7zM483.2 235.8h2.7v2.7h-2.7zM525.0 235.8h2.7v2.7h-2.7zM551.4 235.8h2.7v2.7h-2.7zM505.2 238.0h2.7v2.7h-2.7zM483.2 240.2h2.7v2.7h-2.7zM503.0 240.2h2.7v2.7h-2.7zM516.2 240.2h2.7v2.7h-2.7zM531.6 240.2h2.7v2.7h-2.7zM536.0 244.6h2.7v2.7h-2.7zM553.6 244.6h2.7v2.7h-2.7zM514.0 246.8h2.7v2.7h-2.7zM525.0 246.8h7.1v2.7h-7.1zM544.8 246.8h2.7v2.7h-2.7zM489.8 249.0h2.7v2.7h-2.7zM516.2 249.0h2.7v2.7h-2.7zM520.6 249.0h2.7v2.7h-2.7zM529.4 249.0h2.7v2.7h-2.7z"/>
<path fill="#000000" d="M500.8 213.8h2.7v2.7h-2.7zM500.8 220.4h2.7v2.7h-2.7zM518.4 227.0h2.7v2.7h-2.7zM527.2 227.0h2.7v2.7h-2.7zM481.0 235.8h2.7v2.7h-2.7zM555.8 235.8h2.7v2.7h-2.7zM531.6 242.4h2.7v2.7h-2.7z"/>
<path fill="#fcfcfc" d="M527.2 213.8h2.7v2.7h-2.7zM555.8 213.8h2.7v2.7h-2.7zM511.8 216.0h2.7v2.7h-2.7zM516.2 216.0h2.7v2.7h-2.7zM538.2 216.0h2.7v2.7h-2.7zM481.0 218.2h4.9v2.7h-4.9zM518.4 218.2h2.7v2.7h-2.7zM527.2 220.4h2.7v2.7h-2.7zM472.2 224.8h2.7v2.7h-2.7zM478.8 224.8h2.7v2.7h-2.7zM533.8 224.8h2.7v2.7h-2.7zM540.4 224.8h2.7v2.7h-2.7zM483.2 229.2h2.7v2.7h-2.7zM553.6 229.2h2.7v2.7h-2.7zM470.0 235.8h2.7v2.7h-2.7zM496.4 235.8h4.9v2.7h-4.9zM529.4 235.8h2.7v2.7h-2.7zM489.8 238.0h2.7v2.7h-2.7zM558.0 238.0h2.7v2.7h-2.7zM474.4 240.2h2.7v2.7h-2.7zM498.6 240.2h2.7v2.7h-2.7zM511.8 240.2h2.7v2.7h-2.7zM527.2 240.2h2.7v2.7h-2.7zM476.6 242.4h2.7v2.7h-2.7zM507.4 242.4h2.7v2.7h-2.7zM551.4 242.4h2.7v2.7h-2.7zM485.4 244.6h2.7v2.7h-2.7z"/>
<path fill="#1c1c1c" d="M536.0 213.8h2.7v2.7h-2.7zM509.6 216.0h2.7v2.7h-2.7zM494.2 220.4h2.7v2.7h-2.7zM511.8 224.8h2.7v2.7h-2.7zM522.8 224.8h2.7v2.7h-2.7zM511.8 227.0h2.7v2.7h-2.7zM558.0 227.0h2.7v2.7h-2.7zM511.8 231.4h2.7v2.7h-2.7zM553.6 235.8h2.7v2.7h-2.7zM509.6 238.0h2.7v2.7h-2.7zM514.0 240.2h2.7v2.7h-2.7zM547.0 240.2h2.7v2.7h-2.7zM540.4 242.4h2.7v2.7h-2.7zM503.0 244.6h2.7v2.7h-2.7z"/>
</g>
<rect x="564.00" y="213.80" width="89.60" height="37.40" fill="#868686"/>
<g transform="translate(0,12)">
<rect x="656.30" y="201.80" width="88.70" height="37.40" fill="#8a8a8a" filter="url(#nsmooth)"/>
</g>
<rect x="656.30" y="213.80" width="88.70" height="37.40" fill="url(#topdark)"/>
<rect x="467.6" y="95.2" width="280.2" height="38.2" fill="none" stroke="#0000ff" stroke-width="2.6"/>
<text x="463.4" y="105.3" font-size="8.2" font-family="'Liberation Sans', sans-serif" text-anchor="end">0.36</text>
<text x="463.4" y="114.0" font-size="8.2" font-family="'Liberation Sans', sans-serif" text-anchor="end">1.55</text>
<text x="463.4" y="122.69999999999999" font-size="8.2" font-family="'Liberation Sans', sans-serif" text-anchor="end">220</text>
<text x="751" y="99.0" font-size="6" font-family="'Liberation Sans', sans-serif" fill="#333">0.44"</text>
<text x="751" y="106.7" font-size="6" font-family="'Liberation Sans', sans-serif" fill="#333">(320, 66)</text>
<text x="751" y="115.5" font-size="6" font-family="'Liberation Sans', sans-serif" fill="#333">20201117</text>
<text x="751" y="122.3" font-size="6" font-family="'Liberation Sans', sans-serif" fill="#333">v020_02</text>
<text x="751" y="128.8" font-size="6" font-family="'Liberation Sans', sans-serif" fill="#333">313_LL_005</text>
<rect x="467.6" y="135.0" width="280.2" height="38.2" fill="none" stroke="#00ff00" stroke-width="2.6"/>
<text x="463.4" y="145.10000000000002" font-size="8.2" font-family="'Liberation Sans', sans-serif" text-anchor="end">0.20</text>
<text x="463.4" y="153.8" font-size="8.2" font-family="'Liberation Sans', sans-serif" text-anchor="end">2.42</text>
<text x="463.4" y="162.50000000000003" font-size="8.2" font-family="'Liberation Sans', sans-serif" text-anchor="end">220</text>
<text x="751" y="138.8" font-size="6" font-family="'Liberation Sans', sans-serif" fill="#333">1.06"</text>
<text x="751" y="146.5" font-size="6" font-family="'Liberation Sans', sans-serif" fill="#333">(320, 66)</text>
<text x="751" y="155.3" font-size="6" font-family="'Liberation Sans', sans-serif" fill="#333">20201117</text>
<text x="751" y="162.10000000000002" font-size="6" font-family="'Liberation Sans', sans-serif" fill="#333">v020_01</text>
<text x="751" y="168.60000000000002" font-size="6" font-family="'Liberation Sans', sans-serif" fill="#333">313_LL_005</text>
<rect x="467.6" y="174.8" width="280.2" height="38.2" fill="none" stroke="#ffa500" stroke-width="2.6"/>
<text x="463.4" y="184.9" font-size="8.2" font-family="'Liberation Sans', sans-serif" text-anchor="end">0.18</text>
<text x="463.4" y="193.6" font-size="8.2" font-family="'Liberation Sans', sans-serif" text-anchor="end">0.85</text>
<text x="463.4" y="202.3" font-size="8.2" font-family="'Liberation Sans', sans-serif" text-anchor="end">220</text>
<text x="751" y="178.6" font-size="6" font-family="'Liberation Sans', sans-serif" fill="#333">1.02"</text>
<text x="751" y="186.29999999999998" font-size="6" font-family="'Liberation Sans', sans-serif" fill="#333">(320, 66)</text>
<text x="751" y="195.1" font-size="6" font-family="'Liberation Sans', sans-serif" fill="#333">20201117</text>
<text x="751" y="201.9" font-size="6" font-family="'Liberation Sans', sans-serif" fill="#333">v020_03</text>
<text x="751" y="208.39999999999998" font-size="6" font-family="'Liberation Sans', sans-serif" fill="#333">313_LL_005</text>
<rect x="467.6" y="214.0" width="280.2" height="38.0" fill="none" stroke="#ff0000" stroke-width="2.6"/>
<text x="463.4" y="224.10000000000002" font-size="8.2" font-family="'Liberation Sans', sans-serif" text-anchor="end">0.07</text>
<text x="463.4" y="232.8" font-size="8.2" font-family="'Liberation Sans', sans-serif" text-anchor="end">1.08</text>
<text x="463.4" y="241.50000000000003" font-size="8.2" font-family="'Liberation Sans', sans-serif" text-anchor="end">200</text>
<text x="751" y="217.8" font-size="6" font-family="'Liberation Sans', sans-serif" fill="#333">1.60"</text>
<text x="751" y="225.5" font-size="6" font-family="'Liberation Sans', sans-serif" fill="#333">(317, 243)</text>
<text x="751" y="234.3" font-size="6" font-family="'Liberation Sans', sans-serif" fill="#333">20201117</text>
<text x="751" y="241.10000000000002" font-size="6" font-family="'Liberation Sans', sans-serif" fill="#333">v020_03</text>
<text x="751" y="247.60000000000002" font-size="6" font-family="'Liberation Sans', sans-serif" fill="#333">313_LL_025</text>
<text x="865.4" y="47.3" font-size="10" font-family="'Liberation Sans', sans-serif" text-anchor="middle" textLength="42.7" lengthAdjust="spacingAndGlyphs" stroke="#000" stroke-width="0.1">With Sky</text>
<text x="865.4" y="58.2" font-size="10" font-family="'Liberation Sans', sans-serif" text-anchor="middle" textLength="61.2" lengthAdjust="spacingAndGlyphs" stroke="#000" stroke-width="0.1">x, y: 320, 66</text>
<text x="966" y="47.3" font-size="10" font-family="'Liberation Sans', sans-serif" text-anchor="middle" textLength="62" lengthAdjust="spacingAndGlyphs" stroke="#000" stroke-width="0.1">Clean Image</text>
<text x="966" y="58.2" font-size="10" font-family="'Liberation Sans', sans-serif" text-anchor="middle" textLength="61.2" lengthAdjust="spacingAndGlyphs" stroke="#000" stroke-width="0.1">x, y: 320, 66</text>
<rect x="832.00" y="65.00" width="67.00" height="168.00" fill="#fafafa"/>
<g filter="url(#stripenoise)">
<rect x="832" y="69.2" width="67" height="11.8" fill="url(#stripe)"/>
<rect x="832" y="81.7" width="67" height="11.8" fill="url(#stripe)"/>
<rect x="832" y="94.3" width="67" height="11.8" fill="url(#stripe)"/>
<rect x="832" y="106.8" width="67" height="11.8" fill="url(#stripe)"/>
<rect x="832" y="119.4" width="67" height="11.8" fill="url(#stripe)"/>
<rect x="832" y="131.9" width="67" height="11.8" fill="url(#stripe)"/>
<rect x="832" y="144.5" width="67" height="11.8" fill="url(#stripe)"/>
<rect x="832" y="157.0" width="67" height="11.8" fill="url(#stripe)"/>
<rect x="832" y="169.6" width="67" height="11.8" fill="url(#stripe)"/>
<rect x="832" y="182.2" width="67" height="11.8" fill="url(#stripe)"/>
<rect x="832" y="194.7" width="67" height="11.8" fill="url(#stripe)"/>
</g>
<rect x="832" y="205" width="67" height="28" fill="#999" filter="url(#nsky)" opacity="0.04"/>
<rect x="933.00" y="65.00" width="67.00" height="142.00" fill="#999" filter="url(#nclean)"/>
<rect x="933.00" y="135.50" width="67.00" height="5.00" fill="#333" opacity="0.45"/>
<rect x="933.00" y="206.70" width="67.00" height="27.00" fill="#8f8f8f"/>
<rect x="831.5" y="64.6" width="68.6" height="169.6" fill="none" stroke="#0000ff" stroke-width="2.6"/>
<rect x="932.4" y="64.6" width="68.6" height="169.6" fill="none" stroke="#0000ff" stroke-width="2.6"/>
<rect x="1048.3" y="60.4" width="251.0" height="150.7" fill="#fff"/>
<clipPath id="zc"><rect x="1048.3" y="60.4" width="251.0" height="150.7"/></clipPath>
<g clip-path="url(#zc)">
<line x1="1048.30" y1="192.20" x2="1299.30" y2="192.20" stroke="#555" stroke-width="1"/>
<polyline points="1059.0,147.3 1061.3,147.3 1063.5,147.3 1065.8,147.3 1068.1,147.3 1070.3,147.3 1072.6,147.3 1074.9,147.3 1077.1,147.2 1079.4,147.2 1081.7,147.2 1083.9,147.2 1086.2,147.2 1088.5,147.1 1090.7,147.1 1093.0,147.0 1095.3,146.9 1097.5,146.8 1099.8,146.7 1102.1,146.5 1104.3,146.2 1106.6,145.9 1108.9,145.6 1111.1,145.1 1113.4,144.6 1115.7,143.9 1117.9,143.2 1120.2,142.3 1122.5,141.3 1124.8,140.1 1127.0,138.9 1129.3,137.5 1131.6,135.9 1133.8,134.3 1136.1,132.6 1138.4,130.9 1140.6,129.1 1142.9,127.3 1145.2,125.6 1147.4,124.0 1149.7,122.5 1152.0,121.2 1154.2,120.0 1156.5,119.2 1158.8,118.6 1161.0,118.2 1163.3,118.2 1165.6,118.5 1167.8,119.0 1170.1,119.8 1172.4,120.9 1174.6,122.2 1176.9,123.7 1179.2,125.3 1181.4,127.0 1183.7,128.7 1186.0,130.5 1188.2,132.3 1190.5,134.0 1192.8,135.6 1195.0,137.2 1197.3,138.6 1199.6,139.9 1201.8,141.1 1204.1,142.1 1206.4,143.0 1208.6,143.8 1210.9,144.5 1213.2,145.0 1215.5,145.5 1217.7,145.9 1220.0,146.2 1222.3,146.4 1224.5,146.6 1226.8,146.8 1229.1,146.9 1231.3,147.0 1233.6,147.1 1235.9,147.1 1238.1,147.2 1240.4,147.2 1242.7,147.2 1244.9,147.2 1247.2,147.2 1249.5,147.2 1251.7,147.3 1254.0,147.3 1256.3,147.3 1258.5,147.3 1260.8,147.3 1263.1,147.3 1265.3,147.3 1267.6,147.3 1269.9,147.3" fill="none" stroke="#333" stroke-width="1.8"/>
<line x1="1065.80" y1="112.10" x2="1065.80" y2="182.60" stroke="#1f77b4" stroke-width="1.3"/>
<circle cx="1065.8" cy="147.0" r="1.8" fill="#1f77b4"/>
<line x1="1070.33" y1="97.80" x2="1070.33" y2="168.40" stroke="#1f77b4" stroke-width="1.3"/>
<circle cx="1070.3" cy="133.1" r="1.8" fill="#1f77b4"/>
<line x1="1074.87" y1="135.30" x2="1074.87" y2="205.30" stroke="#1f77b4" stroke-width="1.3"/>
<circle cx="1074.9" cy="170.9" r="1.8" fill="#1f77b4"/>
<line x1="1079.40" y1="92.30" x2="1079.40" y2="162.50" stroke="#1f77b4" stroke-width="1.3"/>
<circle cx="1079.4" cy="127.5" r="1.8" fill="#1f77b4"/>
<line x1="1083.94" y1="133.10" x2="1083.94" y2="202.40" stroke="#1f77b4" stroke-width="1.3"/>
<circle cx="1083.9" cy="167.5" r="1.8" fill="#1f77b4"/>
<line x1="1088.47" y1="95.30" x2="1088.47" y2="163.80" stroke="#1f77b4" stroke-width="1.3"/>
<circle cx="1088.5" cy="129.2" r="1.8" fill="#1f77b4"/>
<line x1="1093.01" y1="104.50" x2="1093.01" y2="173.40" stroke="#1f77b4" stroke-width="1.3"/>
<circle cx="1093.0" cy="139.0" r="1.8" fill="#1f77b4"/>
<line x1="1097.54" y1="55.00" x2="1097.54" y2="118.00" stroke="#1f77b4" stroke-width="1.3"/>
<circle cx="1097.5" cy="83.9" r="1.8" fill="#1f77b4"/>
<line x1="1102.08" y1="149.40" x2="1102.08" y2="215.00" stroke="#1f77b4" stroke-width="1.3"/>
<circle cx="1102.1" cy="182.6" r="1.8" fill="#1f77b4"/>
<line x1="1106.61" y1="158.30" x2="1106.61" y2="215.00" stroke="#1f77b4" stroke-width="1.3"/>
<circle cx="1106.6" cy="191.0" r="1.8" fill="#1f77b4"/>
<line x1="1111.14" y1="137.30" x2="1111.14" y2="201.10" stroke="#1f77b4" stroke-width="1.3"/>
<circle cx="1111.1" cy="169.5" r="1.8" fill="#1f77b4"/>
<line x1="1115.68" y1="123.80" x2="1115.68" y2="186.80" stroke="#1f77b4" stroke-width="1.3"/>
<circle cx="1115.7" cy="155.4" r="1.8" fill="#1f77b4"/>
<line x1="1120.22" y1="127.20" x2="1120.22" y2="189.30" stroke="#1f77b4" stroke-width="1.3"/>
<circle cx="1120.2" cy="157.8" r="1.8" fill="#1f77b4"/>
<line x1="1124.75" y1="144.80" x2="1124.75" y2="204.10" stroke="#1f77b4" stroke-width="1.3"/>
<circle cx="1124.8" cy="174.6" r="1.8" fill="#1f77b4"/>
<line x1="1129.29" y1="99.50" x2="1129.29" y2="157.40" stroke="#1f77b4" stroke-width="1.3"/>
<circle cx="1129.3" cy="128.9" r="1.8" fill="#1f77b4"/>
<line x1="1133.82" y1="117.10" x2="1133.82" y2="177.30" stroke="#1f77b4" stroke-width="1.3"/>
<circle cx="1133.8" cy="147.0" r="1.8" fill="#1f77b4"/>
<line x1="1138.36" y1="132.20" x2="1138.36" y2="192.40" stroke="#1f77b4" stroke-width="1.3"/>
<circle cx="1138.4" cy="161.6" r="1.8" fill="#1f77b4"/>
<line x1="1142.89" y1="79.90" x2="1142.89" y2="143.20" stroke="#1f77b4" stroke-width="1.3"/>
<circle cx="1142.9" cy="111.3" r="1.8" fill="#1f77b4"/>
<line x1="1147.43" y1="81.90" x2="1147.43" y2="144.80" stroke="#1f77b4" stroke-width="1.3"/>
<circle cx="1147.4" cy="112.9" r="1.8" fill="#1f77b4"/>
<line x1="1151.96" y1="71.30" x2="1151.96" y2="133.60" stroke="#1f77b4" stroke-width="1.3"/>
<circle cx="1152.0" cy="102.5" r="1.8" fill="#1f77b4"/>
<line x1="1156.50" y1="81.50" x2="1156.50" y2="144.00" stroke="#1f77b4" stroke-width="1.3"/>
<circle cx="1156.5" cy="112.9" r="1.8" fill="#1f77b4"/>
<line x1="1161.03" y1="86.00" x2="1161.03" y2="150.00" stroke="#1f77b4" stroke-width="1.3"/>
<circle cx="1161.0" cy="118" r="1.8" fill="#1f77b4"/>
<line x1="1165.57" y1="67.60" x2="1165.57" y2="130.90" stroke="#1f77b4" stroke-width="1.3"/>
<circle cx="1165.6" cy="99.0" r="1.8" fill="#1f77b4"/>
<line x1="1170.10" y1="92.30" x2="1170.10" y2="155.40" stroke="#1f77b4" stroke-width="1.3"/>
<circle cx="1170.1" cy="123.5" r="1.8" fill="#1f77b4"/>
<line x1="1174.63" y1="97.80" x2="1174.63" y2="162.40" stroke="#1f77b4" stroke-width="1.3"/>
<circle cx="1174.6" cy="130.2" r="1.8" fill="#1f77b4"/>
<line x1="1179.17" y1="102.80" x2="1179.17" y2="167.80" stroke="#1f77b4" stroke-width="1.3"/>
<circle cx="1179.2" cy="135.2" r="1.8" fill="#1f77b4"/>
<line x1="1183.71" y1="88.20" x2="1183.71" y2="154.00" stroke="#1f77b4" stroke-width="1.3"/>
<circle cx="1183.7" cy="121.0" r="1.8" fill="#1f77b4"/>
<line x1="1188.24" y1="123.80" x2="1188.24" y2="189.30" stroke="#1f77b4" stroke-width="1.3"/>
<circle cx="1188.2" cy="156.6" r="1.8" fill="#1f77b4"/>
<line x1="1192.78" y1="90.30" x2="1192.78" y2="155.40" stroke="#1f77b4" stroke-width="1.3"/>
<circle cx="1192.8" cy="122.5" r="1.8" fill="#1f77b4"/>
<line x1="1197.31" y1="87.20" x2="1197.31" y2="152.00" stroke="#1f77b4" stroke-width="1.3"/>
<circle cx="1197.3" cy="119.6" r="1.8" fill="#1f77b4"/>
<line x1="1201.85" y1="109.60" x2="1201.85" y2="174.50" stroke="#1f77b4" stroke-width="1.3"/>
<circle cx="1201.8" cy="141.5" r="1.8" fill="#1f77b4"/>
<line x1="1206.38" y1="129.70" x2="1206.38" y2="196.00" stroke="#1f77b4" stroke-width="1.3"/>
<circle cx="1206.4" cy="162.4" r="1.8" fill="#1f77b4"/>
<line x1="1210.92" y1="83.90" x2="1210.92" y2="150.70" stroke="#1f77b4" stroke-width="1.3"/>
<circle cx="1210.9" cy="117.4" r="1.8" fill="#1f77b4"/>
<line x1="1215.45" y1="80.20" x2="1215.45" y2="144.80" stroke="#1f77b4" stroke-width="1.3"/>
<circle cx="1215.5" cy="112.9" r="1.8" fill="#1f77b4"/>
<line x1="1219.99" y1="96.10" x2="1219.99" y2="157.40" stroke="#1f77b4" stroke-width="1.3"/>
<circle cx="1220.0" cy="126.3" r="1.8" fill="#1f77b4"/>
<line x1="1224.52" y1="79.30" x2="1224.52" y2="140.60" stroke="#1f77b4" stroke-width="1.3"/>
<circle cx="1224.5" cy="109.6" r="1.8" fill="#1f77b4"/>
<line x1="1229.06" y1="101.20" x2="1229.06" y2="162.10" stroke="#1f77b4" stroke-width="1.3"/>
<circle cx="1229.1" cy="131.9" r="1.8" fill="#1f77b4"/>
<line x1="1233.59" y1="127.50" x2="1233.59" y2="188.50" stroke="#1f77b4" stroke-width="1.3"/>
<circle cx="1233.6" cy="157.7" r="1.8" fill="#1f77b4"/>
<line x1="1238.12" y1="142.60" x2="1238.12" y2="201.90" stroke="#1f77b4" stroke-width="1.3"/>
<circle cx="1238.1" cy="172.2" r="1.8" fill="#1f77b4"/>
<line x1="1242.66" y1="121.30" x2="1242.66" y2="182.20" stroke="#1f77b4" stroke-width="1.3"/>
<circle cx="1242.7" cy="151.5" r="1.8" fill="#1f77b4"/>
<line x1="1247.20" y1="99.00" x2="1247.20" y2="162.80" stroke="#1f77b4" stroke-width="1.3"/>
<circle cx="1247.2" cy="130.9" r="1.8" fill="#1f77b4"/>
<line x1="1251.73" y1="175.00" x2="1251.73" y2="221.20" stroke="#1f77b4" stroke-width="1.3"/>
<circle cx="1251.7" cy="208.1" r="1.8" fill="#1f77b4"/>
<line x1="1256.27" y1="178.40" x2="1256.27" y2="221.20" stroke="#1f77b4" stroke-width="1.3"/>
<circle cx="1256.3" cy="212.8" r="1.8" fill="#1f77b4"/>
<line x1="1260.80" y1="149.00" x2="1260.80" y2="221.20" stroke="#1f77b4" stroke-width="1.3"/>
<circle cx="1260.8" cy="182.2" r="1.8" fill="#1f77b4"/>
<line x1="1265.34" y1="118.00" x2="1265.34" y2="186.80" stroke="#1f77b4" stroke-width="1.3"/>
<circle cx="1265.3" cy="152.4" r="1.8" fill="#1f77b4"/>
<line x1="1269.87" y1="137.60" x2="1269.87" y2="209.10" stroke="#1f77b4" stroke-width="1.3"/>
<circle cx="1269.9" cy="173.3" r="1.8" fill="#1f77b4"/>
<line x1="1274.41" y1="110.40" x2="1274.41" y2="183.90" stroke="#1f77b4" stroke-width="1.3"/>
<circle cx="1274.4" cy="147.0" r="1.8" fill="#1f77b4"/>
<line x1="1278.94" y1="126.30" x2="1278.94" y2="199.00" stroke="#1f77b4" stroke-width="1.3"/>
<circle cx="1278.9" cy="162.8" r="1.8" fill="#1f77b4"/>
<line x1="1283.48" y1="165.00" x2="1283.48" y2="221.20" stroke="#1f77b4" stroke-width="1.3"/>
<circle cx="1283.5" cy="200.7" r="1.8" fill="#1f77b4"/>
<line x1="1288.01" y1="125.20" x2="1288.01" y2="195.70" stroke="#1f77b4" stroke-width="1.3"/>
<circle cx="1288.0" cy="160.4" r="1.8" fill="#1f77b4"/>
</g>
<rect x="1048.3" y="60.4" width="251.0" height="150.7" fill="none" stroke="#333" stroke-width="0.9"/>
<line x1="1044.80" y1="192.20" x2="1048.30" y2="192.20" stroke="#333" stroke-width="0.9"/>
<text x="1043.5" y="195.79999999999998" font-size="10" font-family="'Liberation Sans', sans-serif" text-anchor="end" textLength="15.5" lengthAdjust="spacingAndGlyphs" stroke="#000" stroke-width="0.1">0.0</text>
<line x1="1044.80" y1="168.55" x2="1048.30" y2="168.55" stroke="#333" stroke-width="0.9"/>
<text x="1043.5" y="172.14999999999998" font-size="10" font-family="'Liberation Sans', sans-serif" text-anchor="end" textLength="15.5" lengthAdjust="spacingAndGlyphs" stroke="#000" stroke-width="0.1">0.5</text>
<line x1="1044.80" y1="144.90" x2="1048.30" y2="144.90" stroke="#333" stroke-width="0.9"/>
<text x="1043.5" y="148.49999999999997" font-size="10" font-family="'Liberation Sans', sans-serif" text-anchor="end" textLength="15.5" lengthAdjust="spacingAndGlyphs" stroke="#000" stroke-width="0.1">1.0</text>
<line x1="1044.80" y1="121.25" x2="1048.30" y2="121.25" stroke="#333" stroke-width="0.9"/>
<text x="1043.5" y="124.85" font-size="10" font-family="'Liberation Sans', sans-serif" text-anchor="end" textLength="15.5" lengthAdjust="spacingAndGlyphs" stroke="#000" stroke-width="0.1">1.5</text>
<line x1="1044.80" y1="97.60" x2="1048.30" y2="97.60" stroke="#333" stroke-width="0.9"/>
<text x="1043.5" y="101.19999999999999" font-size="10" font-family="'Liberation Sans', sans-serif" text-anchor="end" textLength="15.5" lengthAdjust="spacingAndGlyphs" stroke="#000" stroke-width="0.1">2.0</text>
<line x1="1044.80" y1="73.95" x2="1048.30" y2="73.95" stroke="#333" stroke-width="0.9"/>
<text x="1043.5" y="77.54999999999998" font-size="10" font-family="'Liberation Sans', sans-serif" text-anchor="end" textLength="15.5" lengthAdjust="spacingAndGlyphs" stroke="#000" stroke-width="0.1">2.5</text>
<line x1="1079.40" y1="211.10" x2="1079.40" y2="214.60" stroke="#333" stroke-width="0.9"/>
<text x="1079.4" y="223.7" font-size="10" font-family="'Liberation Sans', sans-serif" text-anchor="middle" textLength="22" lengthAdjust="spacingAndGlyphs" stroke="#000" stroke-width="0.1">4080</text>
<line x1="1124.75" y1="211.10" x2="1124.75" y2="214.60" stroke="#333" stroke-width="0.9"/>
<text x="1124.75" y="223.7" font-size="10" font-family="'Liberation Sans', sans-serif" text-anchor="middle" textLength="22" lengthAdjust="spacingAndGlyphs" stroke="#000" stroke-width="0.1">4100</text>
<line x1="1170.10" y1="211.10" x2="1170.10" y2="214.60" stroke="#333" stroke-width="0.9"/>
<text x="1170.1000000000001" y="223.7" font-size="10" font-family="'Liberation Sans', sans-serif" text-anchor="middle" textLength="22" lengthAdjust="spacingAndGlyphs" stroke="#000" stroke-width="0.1">4120</text>
<line x1="1215.45" y1="211.10" x2="1215.45" y2="214.60" stroke="#333" stroke-width="0.9"/>
<text x="1215.45" y="223.7" font-size="10" font-family="'Liberation Sans', sans-serif" text-anchor="middle" textLength="22" lengthAdjust="spacingAndGlyphs" stroke="#000" stroke-width="0.1">4140</text>
<line x1="1260.80" y1="211.10" x2="1260.80" y2="214.60" stroke="#333" stroke-width="0.9"/>
<text x="1260.8000000000002" y="223.7" font-size="10" font-family="'Liberation Sans', sans-serif" text-anchor="middle" textLength="22" lengthAdjust="spacingAndGlyphs" stroke="#000" stroke-width="0.1">4160</text>
<text x="1050" y="71.5" font-size="10" font-family="'Liberation Sans', sans-serif" stroke="#000" stroke-width="0.1">e</text>
<text x="1056" y="66.5" font-size="7" font-family="'Liberation Sans', sans-serif">−17</text>
<text x="1068" y="71.5" font-size="10" font-family="'Liberation Sans', sans-serif" stroke="#000" stroke-width="0.1">x2Å</text>
<clipPath id="sc"><rect x="101.6" y="348.6" width="1197.7" height="83.89999999999998"/></clipPath>
<g clip-path="url(#sc)">
<polygon points="101.9,432.5 101.9,439.9 103.7,440.7 105.5,409.8 107.2,381.5 109.0,380.7 110.8,380.4 112.6,378.9 114.3,379.8 116.1,380.4 117.9,380.2 119.7,380.7 121.4,382.7 123.2,383.1 125.0,384.8 126.8,384.7 128.6,386.7 130.3,384.5 132.1,385.4 133.9,384.8 135.7,385.3 137.4,383.8 139.2,384.7 141.0,384.1 142.8,384.5 144.5,383.6 146.3,382.4 148.1,383.4 149.9,384.9 151.6,387.5 153.4,386.6 155.2,387.2 157.0,387.7 158.7,389.2 160.5,389.6 162.3,389.2 164.1,388.4 165.8,389.5 167.6,389.7 169.4,391.4 171.2,391.4 173.0,391.7 174.7,392.0 176.5,392.7 178.3,390.7 180.1,386.2 181.8,385.3 183.6,383.5 185.4,383.6 187.2,383.8 188.9,382.5 190.7,382.8 192.5,383.1 194.3,386.4 196.0,387.5 197.8,387.1 199.6,388.7 201.4,390.7 203.1,391.0 204.9,390.9 206.7,392.2 208.5,392.3 210.2,393.4 212.0,392.3 213.8,394.0 215.6,392.3 217.4,392.7 219.1,393.2 220.9,393.5 222.7,393.5 224.5,391.3 226.2,389.7 228.0,388.8 229.8,390.1 231.6,389.3 233.3,390.4 235.1,390.2 236.9,391.0 238.7,391.0 240.4,394.0 242.2,394.3 244.0,394.5 245.8,392.0 247.5,391.3 249.3,391.4 251.1,390.0 252.9,391.8 254.6,392.3 256.4,392.3 258.2,392.1 260.0,392.4 261.8,393.8 263.5,394.4 265.3,393.9 267.1,395.1 268.9,394.7 270.6,394.3 272.4,395.9 274.2,395.1 276.0,395.4 277.7,394.6 279.5,394.3 281.3,395.5 283.1,396.0 284.8,394.7 286.6,396.6 288.4,396.0 290.2,396.0 291.9,396.6 293.7,395.6 295.5,396.0 297.3,396.7 299.0,396.5 300.8,395.9 302.6,396.8 304.4,397.4 306.2,396.6 307.9,397.2 309.7,396.4 311.5,397.3 313.3,397.5 315.0,396.0 316.8,397.2 318.6,397.4 320.4,396.9 322.1,396.6 323.9,396.7 325.7,396.5 327.5,397.7 329.2,397.4 331.0,397.6 332.8,397.3 334.6,397.3 336.3,397.2 338.1,398.5 339.9,397.9 341.7,397.2 343.4,398.7 345.2,397.3 347.0,397.4 348.8,398.1 350.6,398.1 352.3,398.5 354.1,397.6 355.9,398.2 357.7,398.7 359.4,399.2 361.2,398.6 363.0,397.4 364.8,398.0 366.5,398.2 368.3,397.6 370.1,399.6 371.9,398.4 373.6,399.3 375.4,399.0 377.2,399.5 379.0,399.2 380.7,398.1 382.5,398.5 384.3,398.3 386.1,400.0 387.8,399.6 389.6,398.6 391.4,400.2 393.2,400.0 395.0,400.2 396.7,398.7 398.5,400.0 400.3,399.7 402.1,400.6 403.8,400.4 405.6,399.7 407.4,399.1 409.2,400.1 410.9,400.2 412.7,400.9 414.5,400.8 416.3,400.7 418.0,400.7 419.8,400.0 421.6,400.5 423.4,399.2 425.1,400.7 426.9,399.6 428.7,401.2 430.5,400.4 432.2,400.4 434.0,400.2 435.8,400.8 437.6,400.6 439.4,400.1 441.1,401.5 442.9,400.7 444.7,400.7 446.5,400.3 448.2,401.7 450.0,401.2 451.8,402.2 453.6,400.9 455.3,400.5 457.1,401.7 458.9,400.8 460.7,401.3 462.4,402.7 464.2,401.8 466.0,402.8 467.8,402.4 469.5,401.4 471.3,402.9 473.1,402.1 474.9,403.3 476.6,403.2 478.4,401.5 480.2,403.4 482.0,403.4 483.8,401.8 485.5,403.3 487.3,403.6 489.1,403.9 490.9,403.1 492.6,404.2 494.4,403.9 496.2,404.0 498.0,403.0 499.7,404.3 501.5,403.5 503.3,404.3 505.1,402.8 506.8,402.9 508.6,403.1 510.4,403.1 512.2,403.9 513.9,403.1 515.7,403.8 517.5,404.8 519.3,403.6 521.0,403.4 522.8,405.2 524.6,404.8 526.4,403.6 528.2,403.6 529.9,404.1 531.7,405.0 533.5,404.8 535.3,404.8 537.0,403.3 538.8,404.9 540.6,404.6 542.4,404.0 544.1,404.0 545.9,404.3 547.7,404.1 549.5,403.7 551.2,403.6 553.0,405.3 554.8,405.5 556.6,403.6 558.3,403.7 560.1,404.8 561.9,404.8 563.7,404.2 565.4,404.8 567.2,405.5 569.0,405.2 570.8,405.1 572.6,404.6 574.3,405.4 576.1,404.3 577.9,403.8 579.7,405.0 581.4,404.7 583.2,404.5 585.0,404.2 586.8,404.6 588.5,404.9 590.3,404.4 592.1,405.9 593.9,404.0 595.6,404.1 597.4,404.6 599.2,405.6 601.0,404.8 602.7,406.1 604.5,405.3 606.3,405.7 608.1,405.0 609.8,405.7 611.6,406.0 613.4,404.6 615.2,405.7 617.0,405.1 618.7,406.3 620.5,405.1 622.3,404.7 624.1,404.7 625.8,405.7 627.6,406.1 629.4,405.1 631.2,405.8 632.9,405.9 634.7,406.1 636.5,405.7 638.3,405.1 640.0,405.7 641.8,405.2 643.6,405.1 645.4,404.9 647.1,405.5 648.9,404.6 650.7,405.7 652.5,405.7 654.2,405.4 656.0,404.8 657.8,405.4 659.6,405.0 661.4,406.6 663.1,406.1 664.9,405.6 666.7,405.5 668.5,405.4 670.2,406.6 672.0,406.5 673.8,406.4 675.6,406.4 677.3,407.1 679.1,406.5 680.9,406.0 682.7,405.9 684.4,407.0 686.2,406.2 688.0,405.9 689.8,407.2 691.5,407.6 693.3,407.3 695.1,406.2 696.9,405.8 698.6,406.9 700.4,407.1 702.2,406.5 704.0,407.2 705.8,407.7 707.5,407.3 709.3,406.5 711.1,406.8 712.9,439.7 714.6,439.7 716.4,439.7 718.2,439.7 720.0,406.9 721.7,406.3 723.5,406.5 725.3,405.8 727.1,406.0 728.8,407.4 730.6,406.7 732.4,407.6 734.2,406.0 735.9,407.1 737.7,405.6 739.5,407.1 741.3,406.5 743.0,406.6 744.8,405.8 746.6,406.3 748.4,405.7 750.2,406.9 751.9,407.3 753.7,407.1 755.5,407.4 757.3,406.0 759.0,406.0 760.8,405.9 762.6,405.8 764.4,407.2 766.1,407.3 767.9,406.0 769.7,407.4 771.5,406.6 773.2,406.1 775.0,405.9 776.8,406.0 778.6,405.3 780.3,405.2 782.1,406.6 783.9,406.5 785.7,407.2 787.4,406.9 789.2,406.2 791.0,405.8 792.8,406.6 794.6,406.9 796.3,405.6 798.1,405.6 799.9,406.0 801.7,406.7 803.4,406.6 805.2,406.4 807.0,405.1 808.8,405.0 810.5,406.8 812.3,404.9 814.1,404.9 815.9,405.2 817.6,406.3 819.4,404.7 821.2,405.1 823.0,406.5 824.7,406.7 826.5,405.9 828.3,405.5 830.1,406.6 831.8,404.6 833.6,405.2 835.4,405.5 837.2,405.5 839.0,406.3 840.7,404.9 842.5,404.9 844.3,406.4 846.1,404.8 847.8,405.7 849.6,404.4 851.4,405.7 853.2,405.9 854.9,406.0 856.7,405.6 858.5,406.2 860.3,406.0 862.0,405.3 863.8,405.1 865.6,405.1 867.4,405.9 869.1,406.1 870.9,405.9 872.7,404.2 874.5,405.8 876.2,404.7 878.0,404.9 879.8,404.8 881.6,404.1 883.4,405.5 885.1,404.6 886.9,405.0 888.7,405.3 890.5,405.3 892.2,405.7 894.0,405.9 895.8,404.2 897.6,404.8 899.3,405.8 901.1,404.5 902.9,405.8 904.7,404.8 906.4,405.0 908.2,404.5 910.0,405.4 911.8,404.2 913.5,404.7 915.3,405.3 917.1,406.0 918.9,405.8 920.6,406.0 922.4,405.2 924.2,404.6 926.0,404.8 927.8,405.0 929.5,405.5 931.3,405.8 933.1,404.7 934.9,405.0 936.6,405.0 938.4,405.2 940.2,404.8 942.0,405.2 943.7,405.9 945.5,405.7 947.3,405.8 949.1,405.9 950.8,404.6 952.6,405.0 954.4,405.2 956.2,405.6 957.9,405.5 959.7,406.3 961.5,405.6 963.3,405.3 965.0,405.8 966.8,405.5 968.6,404.5 970.4,404.7 972.2,406.5 973.9,404.6 975.7,405.0 977.5,404.9 979.3,405.0 981.0,406.2 982.8,406.4 984.6,405.3 986.4,404.9 988.1,406.5 989.9,406.7 991.7,404.7 993.5,404.8 995.2,406.2 997.0,405.0 998.8,406.2 1000.6,405.0 1002.3,406.8 1004.1,405.6 1005.9,406.4 1007.7,405.6 1009.4,406.9 1011.2,405.6 1013.0,406.8 1014.8,406.1 1016.6,406.9 1018.3,406.3 1020.1,406.8 1021.9,406.4 1023.7,406.2 1025.4,405.8 1027.2,405.9 1029.0,406.1 1030.8,405.5 1032.5,406.4 1034.3,407.0 1036.1,405.9 1037.9,406.6 1039.6,405.4 1041.4,406.6 1043.2,407.4 1045.0,406.7 1046.7,405.5 1048.5,406.5 1050.3,405.8 1052.1,406.8 1053.8,406.3 1055.6,407.5 1057.4,407.2 1059.2,407.4 1061.0,406.7 1062.7,406.8 1064.5,406.3 1066.3,406.0 1068.1,406.8 1069.8,406.7 1071.6,407.2 1073.4,406.9 1075.2,406.3 1076.9,405.2 1078.7,406.6 1080.5,406.1 1082.3,406.9 1084.0,405.6 1085.8,405.9 1087.6,406.1 1089.4,405.9 1091.1,406.1 1092.9,405.7 1094.7,406.2 1096.5,405.0 1098.2,404.5 1100.0,404.5 1101.8,405.6 1103.6,406.3 1105.4,404.6 1107.1,405.2 1108.9,405.0 1110.7,404.7 1112.5,404.3 1114.2,404.9 1116.0,405.0 1117.8,405.6 1119.6,405.8 1121.3,405.5 1123.1,405.6 1124.9,403.9 1126.7,404.7 1128.4,405.8 1130.2,405.2 1132.0,405.0 1133.8,404.1 1135.5,405.0 1137.3,404.7 1139.1,405.3 1140.9,405.2 1142.6,405.7 1144.4,404.2 1146.2,404.9 1148.0,404.3 1149.8,404.7 1151.5,405.7 1153.3,405.3 1155.1,405.2 1156.9,404.2 1158.6,405.2 1160.4,403.8 1162.2,404.2 1164.0,404.4 1165.7,404.8 1167.5,404.4 1169.3,405.2 1171.1,405.7 1172.8,404.1 1174.6,404.9 1176.4,403.9 1178.2,404.3 1179.9,404.7 1181.7,405.0 1183.5,404.4 1185.3,405.3 1187.0,405.1 1188.8,405.2 1190.6,404.1 1192.4,403.8 1194.2,405.6 1195.9,405.8 1197.7,405.1 1199.5,404.4 1201.3,404.9 1203.0,404.2 1204.8,403.7 1206.6,404.4 1208.4,404.4 1210.1,405.5 1211.9,404.5 1213.7,404.4 1215.5,405.4 1217.2,405.7 1219.0,404.3 1220.8,403.6 1222.6,404.4 1224.3,405.3 1226.1,403.9 1227.9,405.1 1229.7,405.0 1231.4,404.0 1233.2,404.0 1235.0,403.7 1236.8,403.9 1238.6,405.8 1240.3,405.3 1242.1,404.6 1243.9,405.3 1245.7,404.0 1247.4,404.3 1249.2,404.3 1251.0,403.9 1252.8,404.4 1254.5,403.9 1256.3,405.0 1258.1,405.7 1259.9,404.9 1261.6,404.0 1263.4,404.7 1265.2,405.4 1267.0,405.9 1268.7,405.8 1270.5,405.9 1272.3,404.6 1274.1,405.5 1275.8,405.3 1277.6,404.1 1279.4,405.5 1281.2,404.8 1283.0,405.6 1284.7,405.7 1286.5,405.8 1288.3,405.9 1290.1,406.8 1291.8,405.8 1293.6,406.2 1295.4,407.3 1297.2,405.7 1298.9,405.8 1300.7,407.4 1301.3,432.5" fill="#bebebe"/>
<rect x="447.6" y="348.6" width="55.1" height="83.89999999999998" fill="#c5bf00"/>
<polygon points="447.6,432.5 447.6,400.9 449.4,401.0 451.2,401.1 453.0,401.2 454.7,401.3 456.5,401.4 458.3,401.5 460.1,401.6 461.8,401.7 463.6,401.7 465.4,401.8 467.2,401.9 469.0,402.0 470.7,402.1 472.5,402.2 474.3,402.3 476.1,402.4 477.8,402.5 479.6,402.6 481.4,402.7 483.2,402.7 484.9,402.8 486.7,402.9 488.5,403.0 490.3,403.1 492.0,403.2 493.8,403.3 495.6,403.4 497.4,403.5 499.1,403.6 500.9,403.6 502.7,403.7 502.7,432.5" fill="#a29d42"/>
<line x1="101.60" y1="422.00" x2="1299.30" y2="422.00" stroke="#6e6e6e" stroke-width="1.4"/>
<rect x="130.3" y="348.6" width="13.0" height="83.89999999999998" fill="#9a9a9a" stroke="#555" stroke-width="0.9"/>
<line x1="130.3" y1="204.3" x2="143.4" y2="192.6" stroke="#333" stroke-width="0.8" clip-path="url(#sc)"/>
<line x1="130.3" y1="230.3" x2="143.4" y2="218.6" stroke="#333" stroke-width="0.8" clip-path="url(#sc)"/>
<line x1="130.3" y1="256.3" x2="143.4" y2="244.6" stroke="#333" stroke-width="0.8" clip-path="url(#sc)"/>
<line x1="130.3" y1="282.3" x2="143.4" y2="270.6" stroke="#333" stroke-width="0.8" clip-path="url(#sc)"/>
<line x1="130.3" y1="308.3" x2="143.4" y2="296.6" stroke="#333" stroke-width="0.8" clip-path="url(#sc)"/>
<line x1="130.3" y1="334.3" x2="143.4" y2="322.6" stroke="#333" stroke-width="0.8" clip-path="url(#sc)"/>
<line x1="130.3" y1="360.3" x2="143.4" y2="348.6" stroke="#333" stroke-width="0.8" clip-path="url(#sc)"/>
<line x1="130.3" y1="386.3" x2="143.4" y2="374.6" stroke="#333" stroke-width="0.8" clip-path="url(#sc)"/>
<line x1="130.3" y1="412.3" x2="143.4" y2="400.6" stroke="#333" stroke-width="0.8" clip-path="url(#sc)"/>
<line x1="130.3" y1="438.3" x2="143.4" y2="426.6" stroke="#333" stroke-width="0.8" clip-path="url(#sc)"/>
<line x1="130.3" y1="464.3" x2="143.4" y2="452.6" stroke="#333" stroke-width="0.8" clip-path="url(#sc)"/>
<line x1="130.3" y1="490.3" x2="143.4" y2="478.6" stroke="#333" stroke-width="0.8" clip-path="url(#sc)"/>
<line x1="130.3" y1="516.3" x2="143.4" y2="504.6" stroke="#333" stroke-width="0.8" clip-path="url(#sc)"/>
<line x1="130.3" y1="542.3" x2="143.4" y2="530.6" stroke="#333" stroke-width="0.8" clip-path="url(#sc)"/>
<line x1="130.3" y1="568.3" x2="143.4" y2="556.6" stroke="#333" stroke-width="0.8" clip-path="url(#sc)"/>
<line x1="130.3" y1="594.3" x2="143.4" y2="582.6" stroke="#333" stroke-width="0.8" clip-path="url(#sc)"/>
<rect x="1269.3" y="348.6" width="6.5" height="83.89999999999998" fill="#9a9a9a" stroke="#555" stroke-width="0.9"/>
<line x1="1269.3" y1="198.5" x2="1275.8" y2="192.6" stroke="#333" stroke-width="0.8" clip-path="url(#sc)"/>
<line x1="1269.3" y1="224.5" x2="1275.8" y2="218.6" stroke="#333" stroke-width="0.8" clip-path="url(#sc)"/>
<line x1="1269.3" y1="250.5" x2="1275.8" y2="244.6" stroke="#333" stroke-width="0.8" clip-path="url(#sc)"/>
<line x1="1269.3" y1="276.5" x2="1275.8" y2="270.6" stroke="#333" stroke-width="0.8" clip-path="url(#sc)"/>
<line x1="1269.3" y1="302.5" x2="1275.8" y2="296.6" stroke="#333" stroke-width="0.8" clip-path="url(#sc)"/>
<line x1="1269.3" y1="328.5" x2="1275.8" y2="322.6" stroke="#333" stroke-width="0.8" clip-path="url(#sc)"/>
<line x1="1269.3" y1="354.5" x2="1275.8" y2="348.6" stroke="#333" stroke-width="0.8" clip-path="url(#sc)"/>
<line x1="1269.3" y1="380.5" x2="1275.8" y2="374.6" stroke="#333" stroke-width="0.8" clip-path="url(#sc)"/>
<line x1="1269.3" y1="406.5" x2="1275.8" y2="400.6" stroke="#333" stroke-width="0.8" clip-path="url(#sc)"/>
<line x1="1269.3" y1="432.5" x2="1275.8" y2="426.6" stroke="#333" stroke-width="0.8" clip-path="url(#sc)"/>
<line x1="1269.3" y1="458.5" x2="1275.8" y2="452.6" stroke="#333" stroke-width="0.8" clip-path="url(#sc)"/>
<line x1="1269.3" y1="484.5" x2="1275.8" y2="478.6" stroke="#333" stroke-width="0.8" clip-path="url(#sc)"/>
<line x1="1269.3" y1="510.5" x2="1275.8" y2="504.6" stroke="#333" stroke-width="0.8" clip-path="url(#sc)"/>
<line x1="1269.3" y1="536.5" x2="1275.8" y2="530.6" stroke="#333" stroke-width="0.8" clip-path="url(#sc)"/>
<line x1="1269.3" y1="562.5" x2="1275.8" y2="556.6" stroke="#333" stroke-width="0.8" clip-path="url(#sc)"/>
<line x1="1269.3" y1="588.5" x2="1275.8" y2="582.6" stroke="#333" stroke-width="0.8" clip-path="url(#sc)"/>
<polyline points="101.9,429.9 103.1,387.2 104.3,434.2 105.5,416.1 106.6,413.6 107.8,437.9 109.0,414.9 110.2,384.0 111.4,396.9 112.6,437.9 113.8,396.0 114.9,435.0 116.1,418.0 117.3,418.1 118.5,428.7 119.7,388.7 120.9,404.4 122.0,406.9 123.2,437.9 124.4,428.7 125.6,379.3 126.8,405.7 128.0,414.1 129.1,411.2 130.3,433.5 131.5,437.9 132.7,437.9 133.9,413.5 135.1,392.6 136.2,401.3 137.4,437.9 138.6,435.9 139.8,423.3 141.0,380.5 142.2,426.6 143.4,423.4 144.5,396.1 145.7,374.9 146.9,387.0 148.1,384.9 149.3,378.9 150.5,426.6 151.6,399.7 152.8,406.6 154.0,391.3 155.2,412.9 156.4,381.5 157.6,359.5 158.7,353.4 159.9,415.7 161.1,415.5 162.3,392.2 163.5,379.1 164.7,410.7 165.8,382.1 167.0,409.9 168.2,377.0 169.4,400.1 170.6,393.1 171.8,437.9 173.0,437.9 174.1,398.7 175.3,437.9 176.5,389.9 177.7,426.9 178.9,412.1 180.1,387.6 181.2,399.8 182.4,403.3 183.6,401.5 184.8,406.4 186.0,389.4 187.2,389.0 188.3,391.5 189.5,395.4 190.7,414.8 191.9,431.1 193.1,437.9 194.3,383.0 195.4,396.1 196.6,394.1 197.8,395.9 199.0,410.6 200.2,367.0 201.4,392.8 202.6,407.9 203.7,403.7 204.9,418.0 206.1,437.9 207.3,352.5 208.5,389.1 209.7,411.2 210.8,422.7 212.0,416.4 213.2,425.7 214.4,437.9 215.6,437.9 216.8,422.9 217.9,398.5 219.1,406.9 220.3,393.0 221.5,402.0 222.7,430.2 223.9,406.5 225.0,390.1 226.2,425.5 227.4,423.6 228.6,426.8 229.8,419.0 231.0,422.4 232.2,427.6 233.3,431.8 234.5,394.4 235.7,423.0 236.9,411.0 238.1,411.5 239.3,410.9 240.4,389.0 241.6,403.4 242.8,397.3 244.0,421.2 245.2,385.1 246.4,398.2 247.5,362.0 248.7,379.6 249.9,401.0 251.1,413.1 252.3,431.1 253.5,399.7 254.6,398.7 255.8,382.6 257.0,389.2 258.2,386.9 259.4,392.4 260.6,402.7 261.8,398.4 262.9,413.1 264.1,395.3 265.3,416.4 266.5,411.0 267.7,390.6 268.9,395.6 270.0,403.5 271.2,405.7 272.4,407.3 273.6,403.7 274.8,398.1 276.0,412.0 277.1,412.3 278.3,410.8 279.5,433.0 280.7,412.7 281.9,383.0 283.1,414.3 284.2,404.8 285.4,404.6 286.6,403.1 287.8,402.6 289.0,374.0 290.2,437.7 291.4,417.8 292.5,426.0 293.7,409.1 294.9,410.1 296.1,401.4 297.3,408.2 298.5,401.9 299.6,392.3 300.8,410.3 302.0,421.6 303.2,418.3 304.4,393.9 305.6,406.2 306.7,432.6 307.9,403.2 309.1,412.3 310.3,398.8 311.5,397.7 312.7,381.8 313.8,380.6 315.0,377.0 316.2,383.8 317.4,378.6 318.6,400.0 319.8,400.2 321.0,381.8 322.1,402.7 323.3,425.5 324.5,404.6 325.7,406.1 326.9,424.7 328.1,387.6 329.2,411.7 330.4,407.6 331.6,430.2 332.8,403.0 334.0,400.1 335.2,394.3 336.3,390.5 337.5,411.5 338.7,416.6 339.9,401.4 341.1,397.8 342.3,374.1 343.4,397.6 344.6,415.0 345.8,416.1 347.0,437.9 348.2,437.9 349.4,385.8 350.6,375.3 351.7,384.5 352.9,396.7 354.1,412.4 355.3,405.7 356.5,390.5 357.7,382.1 358.8,383.0 360.0,412.9 361.2,430.5 362.4,416.3 363.6,412.5 364.8,395.3 365.9,397.0 367.1,403.1 368.3,408.8 369.5,417.2 370.7,409.2 371.9,405.8 373.0,393.6 374.2,410.2 375.4,407.7 376.6,386.8 377.8,379.2 379.0,402.4 380.2,417.2 381.3,403.3 382.5,382.6 383.7,381.0 384.9,413.5 386.1,422.7 387.3,402.4 388.4,413.9 389.6,390.4 390.8,404.7 392.0,406.9 393.2,420.3 394.4,431.0 395.5,415.4 396.7,405.0 397.9,405.5 399.1,394.6 400.3,394.2 401.5,420.5 402.6,408.3 403.8,392.5 405.0,391.1 406.2,389.3 407.4,381.7 408.6,403.0 409.8,400.1 410.9,401.2 412.1,381.4 413.3,412.0 414.5,404.3 415.7,405.8 416.9,385.5 418.0,425.2 419.2,410.9 420.4,420.7 421.6,416.5 422.8,386.5 424.0,410.1 425.1,410.9 426.3,402.5 427.5,402.7 428.7,407.9 429.9,412.5 431.1,397.1 432.2,398.6 433.4,423.6 434.6,402.7 435.8,408.6 437.0,402.2 438.2,397.6 439.4,421.1 440.5,430.4 441.7,415.6 442.9,412.8 444.1,396.1 445.3,385.2 446.5,398.1 447.6,425.0 448.8,423.3 450.0,394.8 451.2,402.6 452.4,412.9 453.6,397.4 454.7,382.3 455.9,392.3 457.1,386.6 458.3,397.1 459.5,404.8 460.7,392.5 461.8,398.3 463.0,409.4 464.2,411.9 465.4,406.0 466.6,413.9 467.8,412.6 469.0,406.6 470.1,408.2 471.3,414.7 472.5,411.0 473.7,377.8 474.9,385.6 476.1,392.0 477.2,414.1 478.4,403.3 479.6,412.0 480.8,399.1 482.0,404.0 483.2,407.4 484.3,426.3 485.5,392.0 486.7,393.3 487.9,395.5 489.1,404.4 490.3,421.4 491.4,411.6 492.6,401.9 493.8,395.3 495.0,405.9 496.2,415.7 497.4,391.7 498.6,401.2 499.7,384.5 500.9,392.9 502.1,400.5 503.3,390.0 504.5,407.0 505.7,426.6 506.8,409.0 508.0,403.9 509.2,411.6 510.4,402.0 511.6,400.2 512.8,405.4 513.9,402.7 515.1,399.7 516.3,396.7 517.5,399.0 518.7,403.8 519.9,400.5 521.0,398.0 522.2,388.7 523.4,395.0 524.6,390.8 525.8,398.4 527.0,387.0 528.2,390.0 529.3,397.8 530.5,395.9 531.7,392.6 532.9,384.6 534.1,402.7 535.3,396.8 536.4,403.3 537.6,409.7 538.8,396.7 540.0,411.2 541.2,401.4 542.4,388.3 543.5,379.8 544.7,405.8 545.9,407.0 547.1,407.4 548.3,402.8 549.5,392.8 550.6,396.7 551.8,400.9 553.0,398.3 554.2,402.6 555.4,402.0 556.6,402.8 557.8,406.8 558.9,403.4 560.1,402.3 561.3,387.7 562.5,386.4 563.7,394.1 564.9,399.7 566.0,380.5 567.2,390.7 568.4,398.9 569.6,412.0 570.8,398.9 572.0,403.5 573.1,384.6 574.3,399.8 575.5,400.8 576.7,416.5 577.9,392.4 579.1,400.5 580.2,387.1 581.4,392.1 582.6,398.5 583.8,398.8 585.0,401.5 586.2,386.2 587.4,411.6 588.5,413.8 589.7,400.5 590.9,403.2 592.1,399.5 593.3,399.6 594.5,394.0 595.6,401.7 596.8,395.9 598.0,397.8 599.2,398.6 600.4,400.0 601.6,390.0 602.7,409.7 603.9,410.6 605.1,400.0 606.3,395.1 607.5,388.8 608.7,390.4 609.8,389.0 611.0,387.5 612.2,388.7 613.4,404.1 614.6,400.5 615.8,406.8 617.0,379.2 618.1,374.3 619.3,402.2 620.5,400.8 621.7,394.2 622.9,386.6 624.1,382.8 625.2,397.8 626.4,393.6 627.6,391.9 628.8,399.8 630.0,406.6 631.2,401.5 632.3,392.3 633.5,390.6 634.7,396.1 635.9,407.4 637.1,398.8 638.3,397.9 639.4,390.5 640.6,392.2 641.8,403.4 643.0,405.7 644.2,399.1 645.4,382.5 646.6,390.0 647.7,404.9 648.9,388.9 650.1,388.3 651.3,408.1 652.5,408.1 653.7,401.9 654.8,410.4 656.0,409.6 657.2,386.9 658.4,380.2 659.6,404.5 660.8,400.5 661.9,392.5 663.1,391.2 664.3,385.2 665.5,390.7 666.7,400.0 667.9,408.0 669.0,399.3 670.2,407.6 671.4,398.4 672.6,406.9 673.8,393.7 675.0,388.8 676.2,402.2 677.3,397.0 678.5,405.3 679.7,401.7 680.9,400.2 682.1,400.9 683.3,391.3 684.4,399.9 685.6,393.9 686.8,397.0 688.0,407.6 689.2,402.0 690.4,388.4 691.5,400.0 692.7,403.9 693.9,399.2 695.1,423.3 696.3,409.5 697.5,398.5 698.6,401.7 699.8,400.0 701.0,405.1 702.2,414.2 703.4,408.5 704.6,395.8 705.8,385.0 706.9,417.0 708.1,409.7 709.3,400.8 710.5,404.3 711.7,391.7 712.9,399.6 714.0,406.7 715.2,399.7 716.4,399.1 717.6,399.5 718.8,416.0 720.0,400.0 721.1,403.7 722.3,398.4 723.5,396.5 724.7,393.9 725.9,399.3 727.1,389.9 728.2,386.1 729.4,379.5 730.6,386.5 731.8,405.2 733.0,397.7 734.2,395.9 735.4,391.5 736.5,397.0 737.7,381.4 738.9,391.4 740.1,410.8 741.3,414.9 742.5,406.9 743.6,395.1 744.8,395.0 746.0,392.1 747.2,409.6 748.4,404.8 749.6,394.9 750.7,400.2 751.9,400.5 753.1,397.1 754.3,402.2 755.5,401.1 756.7,407.6 757.8,411.4 759.0,400.2 760.2,398.1 761.4,395.7 762.6,400.6 763.8,403.0 765.0,410.3 766.1,392.6 767.3,397.7 768.5,395.1 769.7,407.4 770.9,397.7 772.1,400.6 773.2,401.7 774.4,409.6 775.6,386.0 776.8,406.1 778.0,405.7 779.2,401.0 780.3,385.5 781.5,387.2 782.7,386.6 783.9,396.2 785.1,395.2 786.3,399.6 787.4,391.4 788.6,382.5 789.8,389.0 791.0,389.3 792.2,387.9 793.4,395.6 794.6,402.1 795.7,400.5 796.9,383.9 798.1,385.2 799.3,397.7 800.5,408.1 801.7,396.2 802.8,390.8 804.0,383.7 805.2,396.7 806.4,393.3 807.6,404.1 808.8,396.9 809.9,387.0 811.1,396.1 812.3,392.4 813.5,378.6 814.7,391.4 815.9,397.7 817.0,396.7 818.2,390.3 819.4,395.7 820.6,391.4 821.8,384.9 823.0,386.3 824.2,384.1 825.3,386.8 826.5,392.3 827.7,383.4 828.9,378.7 830.1,394.4 831.3,390.0 832.4,374.3 833.6,389.2 834.8,391.0 836.0,393.5 837.2,390.8 838.4,390.3 839.5,375.1 840.7,409.8 841.9,399.2 843.1,397.1 844.3,388.8 845.5,388.3 846.6,384.3 847.8,389.6 849.0,399.3 850.2,387.3 851.4,394.3 852.6,382.0 853.8,398.8 854.9,381.2 856.1,382.5 857.3,382.6 858.5,384.8 859.7,380.9 860.9,380.9 862.0,386.2 863.2,387.6 864.4,392.5 865.6,400.0 866.8,384.3 868.0,402.4 869.1,397.2 870.3,404.2 871.5,392.2 872.7,382.5 873.9,395.4 875.1,393.5 876.2,397.3 877.4,388.3 878.6,390.3 879.8,387.7 881.0,379.0 882.2,376.1 883.4,383.9 884.5,391.0 885.7,384.2 886.9,383.2 888.1,382.8 889.3,391.7 890.5,380.6 891.6,386.6 892.8,377.6 894.0,376.9 895.2,377.2 896.4,377.1 897.6,374.7 898.7,386.2 899.9,386.5 901.1,394.4 902.3,384.2 903.5,384.2 904.7,381.2 905.8,398.1 907.0,394.9 908.2,393.6 909.4,402.2 910.6,386.6 911.8,373.8 913.0,374.4 914.1,375.2 915.3,378.7 916.5,372.5 917.7,384.9 918.9,390.5 920.1,378.5 921.2,375.8 922.4,382.6 923.6,381.5 924.8,387.1 926.0,386.7 927.2,390.0 928.3,377.7 929.5,384.4 930.7,387.7 931.9,376.2 933.1,382.6 934.3,386.8 935.4,390.5 936.6,380.6 937.8,386.2 939.0,383.6 940.2,381.5 941.4,381.5 942.6,378.4 943.7,382.0 944.9,378.6 946.1,385.4 947.3,388.7 948.5,385.0 949.7,378.0 950.8,385.6 952.0,390.0 953.2,393.6 954.4,392.2 955.6,392.3 956.8,401.6 957.9,387.1 959.1,383.6 960.3,379.4 961.5,382.8 962.7,390.9 963.9,388.8 965.0,391.5 966.2,388.8 967.4,375.2 968.6,382.9 969.8,393.2 971.0,394.2 972.2,385.3 973.3,384.5 974.5,380.9 975.7,383.5 976.9,394.9 978.1,385.6 979.3,396.2 980.4,395.2 981.6,397.2 982.8,386.4 984.0,380.1 985.2,389.3 986.4,385.5 987.5,392.0 988.7,371.2 989.9,367.7 991.1,390.8 992.3,395.1 993.5,392.3 994.6,393.4 995.8,384.2 997.0,376.6 998.2,392.8 999.4,391.7 1000.6,402.2 1001.8,405.1 1002.9,391.3 1004.1,383.9 1005.3,396.5 1006.5,384.1 1007.7,392.8 1008.9,388.4 1010.0,401.7 1011.2,407.0 1012.4,400.3 1013.6,405.3 1014.8,389.5 1016.0,389.0 1017.1,372.1 1018.3,390.1 1019.5,397.2 1020.7,396.0 1021.9,397.4 1023.1,389.2 1024.2,391.7 1025.4,406.8 1026.6,387.1 1027.8,388.6 1029.0,383.3 1030.2,393.3 1031.4,389.1 1032.5,391.4 1033.7,391.6 1034.9,373.0 1036.1,379.2 1037.3,384.4 1038.5,388.0 1039.6,391.0 1040.8,384.5 1042.0,388.9 1043.2,390.8 1044.4,386.7 1045.6,385.7 1046.7,377.2 1047.9,390.9 1049.1,395.3 1050.3,378.5 1051.5,384.9 1052.7,389.8 1053.8,376.1 1055.0,379.9 1056.2,396.0 1057.4,378.9 1058.6,373.9 1059.8,371.9 1061.0,381.0 1062.1,388.6 1063.3,384.2 1064.5,375.1 1065.7,383.8 1066.9,378.0 1068.1,390.9 1069.2,386.8 1070.4,380.1 1071.6,379.2 1072.8,381.2 1074.0,394.8 1075.2,376.7 1076.3,375.6 1077.5,377.6 1078.7,389.1 1079.9,376.9 1081.1,386.9 1082.3,392.2 1083.4,386.0 1084.6,394.7 1085.8,391.0 1087.0,381.6 1088.2,385.5 1089.4,389.7 1090.6,372.6 1091.7,386.0 1092.9,391.3 1094.1,388.3 1095.3,386.0 1096.5,383.5 1097.7,382.6 1098.8,382.9 1100.0,388.4 1101.2,389.1 1102.4,381.0 1103.6,385.4 1104.8,386.9 1105.9,380.8 1107.1,384.8 1108.3,391.4 1109.5,387.8 1110.7,379.6 1111.9,380.3 1113.0,381.3 1114.2,369.9 1115.4,378.8 1116.6,380.1 1117.8,376.7 1119.0,380.2 1120.2,381.9 1121.3,371.9 1122.5,371.8 1123.7,374.9 1124.9,378.2 1126.1,386.4 1127.3,376.0 1128.4,393.0 1129.6,374.8 1130.8,380.1 1132.0,383.8 1133.2,385.5 1134.4,373.7 1135.5,362.4 1136.7,366.8 1137.9,379.7 1139.1,376.6 1140.3,381.0 1141.5,374.1 1142.6,381.2 1143.8,378.5 1145.0,368.7 1146.2,381.6 1147.4,381.2 1148.6,372.5 1149.8,387.9 1150.9,392.7 1152.1,381.6 1153.3,381.5 1154.5,371.8 1155.7,369.3 1156.9,374.3 1158.0,365.0 1159.2,364.4 1160.4,377.7 1161.6,381.9 1162.8,375.2 1164.0,387.5 1165.1,386.5 1166.3,374.5 1167.5,368.8 1168.7,377.9 1169.9,371.2 1171.1,373.2 1172.2,380.6 1173.4,363.2 1174.6,382.0 1175.8,376.7 1177.0,378.9 1178.2,389.1 1179.4,370.3 1180.5,370.6 1181.7,369.8 1182.9,381.5 1184.1,379.5 1185.3,361.6 1186.5,368.0 1187.6,373.7 1188.8,373.8 1190.0,371.5 1191.2,387.9 1192.4,370.8 1193.6,369.6 1194.7,374.1 1195.9,378.4 1197.1,374.5 1198.3,373.7 1199.5,387.1 1200.7,384.1 1201.8,372.8 1203.0,379.8 1204.2,378.3 1205.4,379.1 1206.6,375.4 1207.8,365.9 1209.0,368.6 1210.1,377.1 1211.3,382.0 1212.5,364.8 1213.7,374.0 1214.9,373.2 1216.1,374.8 1217.2,374.1 1218.4,387.1 1219.6,390.5 1220.8,374.5 1222.0,370.5 1223.2,381.6 1224.3,377.2 1225.5,381.2 1226.7,389.7 1227.9,380.9 1229.1,375.3 1230.3,385.2 1231.4,384.4 1232.6,383.7 1233.8,381.9 1235.0,386.7 1236.2,371.5 1237.4,377.1 1238.6,372.5 1239.7,366.8 1240.9,380.2 1242.1,376.8 1243.3,370.8 1244.5,378.9 1245.7,376.0 1246.8,374.2 1248.0,375.9 1249.2,362.5 1250.4,375.7 1251.6,380.6 1252.8,381.8 1253.9,386.6 1255.1,389.6 1256.3,376.1 1257.5,378.6 1258.7,371.5 1259.9,367.4 1261.0,381.2 1262.2,375.4 1263.4,386.0 1264.6,369.3 1265.8,379.9 1267.0,380.4 1268.2,385.6 1269.3,387.2 1270.5,397.4 1271.7,392.7 1272.9,385.4 1274.1,375.8 1275.3,374.1 1276.4,390.3 1277.6,384.7 1278.8,385.7 1280.0,380.5 1281.2,372.7 1282.4,378.5 1283.5,369.6 1284.7,372.1 1285.9,389.0 1287.1,368.3 1288.3,367.3 1289.5,378.0 1290.6,387.2 1291.8,393.6 1294.2,381.3 1301.3,381.3" fill="none" stroke="#0000ff" stroke-width="1.15" stroke-linejoin="round"/>
<line x1="475.2" y1="348.6" x2="475.2" y2="432.5" stroke="#000" stroke-width="1" stroke-dasharray="1.5,1.5"/>
</g>
<rect x="101.6" y="348.6" width="1197.7" height="83.89999999999998" fill="none" stroke="#333" stroke-width="1"/>
<line x1="98.10" y1="422.00" x2="101.60" y2="422.00" stroke="#333" stroke-width="0.9"/>
<text x="95.5" y="425.8" font-size="11" font-family="'Liberation Sans', sans-serif" text-anchor="end" stroke="#000" stroke-width="0.1">0</text>
<line x1="98.10" y1="386.60" x2="101.60" y2="386.60" stroke="#333" stroke-width="0.9"/>
<text x="95.5" y="390.40000000000003" font-size="11" font-family="'Liberation Sans', sans-serif" text-anchor="end" stroke="#000" stroke-width="0.1">2</text>
<line x1="98.10" y1="351.20" x2="101.60" y2="351.20" stroke="#333" stroke-width="0.9"/>
<text x="95.5" y="355.0" font-size="11" font-family="'Liberation Sans', sans-serif" text-anchor="end" stroke="#000" stroke-width="0.1">4</text>
<line x1="110.20" y1="432.50" x2="110.20" y2="436.00" stroke="#333" stroke-width="0.9"/>
<text x="110.2" y="447.1" font-size="10.5" font-family="'Liberation Sans', sans-serif" text-anchor="middle" textLength="23" lengthAdjust="spacingAndGlyphs" stroke="#000" stroke-width="0.1">3500</text>
<line x1="169.40" y1="432.50" x2="169.40" y2="436.00" stroke="#333" stroke-width="0.9"/>
<text x="169.4" y="447.1" font-size="10.5" font-family="'Liberation Sans', sans-serif" text-anchor="middle" textLength="23" lengthAdjust="spacingAndGlyphs" stroke="#000" stroke-width="0.1">3600</text>
<line x1="228.60" y1="432.50" x2="228.60" y2="436.00" stroke="#333" stroke-width="0.9"/>
<text x="228.6" y="447.1" font-size="10.5" font-family="'Liberation Sans', sans-serif" text-anchor="middle" textLength="23" lengthAdjust="spacingAndGlyphs" stroke="#000" stroke-width="0.1">3700</text>
<line x1="287.80" y1="432.50" x2="287.80" y2="436.00" stroke="#333" stroke-width="0.9"/>
<text x="287.8" y="447.1" font-size="10.5" font-family="'Liberation Sans', sans-serif" text-anchor="middle" textLength="23" lengthAdjust="spacingAndGlyphs" stroke="#000" stroke-width="0.1">3800</text>
<line x1="347.00" y1="432.50" x2="347.00" y2="436.00" stroke="#333" stroke-width="0.9"/>
<text x="347.0" y="447.1" font-size="10.5" font-family="'Liberation Sans', sans-serif" text-anchor="middle" textLength="23" lengthAdjust="spacingAndGlyphs" stroke="#000" stroke-width="0.1">3900</text>
<line x1="406.20" y1="432.50" x2="406.20" y2="436.00" stroke="#333" stroke-width="0.9"/>
<text x="406.2" y="447.1" font-size="10.5" font-family="'Liberation Sans', sans-serif" text-anchor="middle" textLength="23" lengthAdjust="spacingAndGlyphs" stroke="#000" stroke-width="0.1">4000</text>
<line x1="465.40" y1="432.50" x2="465.40" y2="436.00" stroke="#333" stroke-width="0.9"/>
<text x="465.4" y="447.1" font-size="10.5" font-family="'Liberation Sans', sans-serif" text-anchor="middle" textLength="23" lengthAdjust="spacingAndGlyphs" stroke="#000" stroke-width="0.1">4100</text>
<line x1="524.60" y1="432.50" x2="524.60" y2="436.00" stroke="#333" stroke-width="0.9"/>
<text x="524.6" y="447.1" font-size="10.5" font-family="'Liberation Sans', sans-serif" text-anchor="middle" textLength="23" lengthAdjust="spacingAndGlyphs" stroke="#000" stroke-width="0.1">4200</text>
<line x1="583.80" y1="432.50" x2="583.80" y2="436.00" stroke="#333" stroke-width="0.9"/>
<text x="583.8" y="447.1" font-size="10.5" font-family="'Liberation Sans', sans-serif" text-anchor="middle" textLength="23" lengthAdjust="spacingAndGlyphs" stroke="#000" stroke-width="0.1">4300</text>
<line x1="643.00" y1="432.50" x2="643.00" y2="436.00" stroke="#333" stroke-width="0.9"/>
<text x="643.0" y="447.1" font-size="10.5" font-family="'Liberation Sans', sans-serif" text-anchor="middle" textLength="23" lengthAdjust="spacingAndGlyphs" stroke="#000" stroke-width="0.1">4400</text>
<line x1="702.20" y1="432.50" x2="702.20" y2="436.00" stroke="#333" stroke-width="0.9"/>
<text x="702.2" y="447.1" font-size="10.5" font-family="'Liberation Sans', sans-serif" text-anchor="middle" textLength="23" lengthAdjust="spacingAndGlyphs" stroke="#000" stroke-width="0.1">4500</text>
<line x1="761.40" y1="432.50" x2="761.40" y2="436.00" stroke="#333" stroke-width="0.9"/>
<text x="761.4" y="447.1" font-size="10.5" font-family="'Liberation Sans', sans-serif" text-anchor="middle" textLength="23" lengthAdjust="spacingAndGlyphs" stroke="#000" stroke-width="0.1">4600</text>
<line x1="820.60" y1="432.50" x2="820.60" y2="436.00" stroke="#333" stroke-width="0.9"/>
<text x="820.6" y="447.1" font-size="10.5" font-family="'Liberation Sans', sans-serif" text-anchor="middle" textLength="23" lengthAdjust="spacingAndGlyphs" stroke="#000" stroke-width="0.1">4700</text>
<line x1="879.80" y1="432.50" x2="879.80" y2="436.00" stroke="#333" stroke-width="0.9"/>
<text x="879.8" y="447.1" font-size="10.5" font-family="'Liberation Sans', sans-serif" text-anchor="middle" textLength="23" lengthAdjust="spacingAndGlyphs" stroke="#000" stroke-width="0.1">4800</text>
<line x1="939.00" y1="432.50" x2="939.00" y2="436.00" stroke="#333" stroke-width="0.9"/>
<text x="939.0" y="447.1" font-size="10.5" font-family="'Liberation Sans', sans-serif" text-anchor="middle" textLength="23" lengthAdjust="spacingAndGlyphs" stroke="#000" stroke-width="0.1">4900</text>
<line x1="998.20" y1="432.50" x2="998.20" y2="436.00" stroke="#333" stroke-width="0.9"/>
<text x="998.2" y="447.1" font-size="10.5" font-family="'Liberation Sans', sans-serif" text-anchor="middle" textLength="23" lengthAdjust="spacingAndGlyphs" stroke="#000" stroke-width="0.1">5000</text>
<line x1="1057.40" y1="432.50" x2="1057.40" y2="436.00" stroke="#333" stroke-width="0.9"/>
<text x="1057.3999999999999" y="447.1" font-size="10.5" font-family="'Liberation Sans', sans-serif" text-anchor="middle" textLength="23" lengthAdjust="spacingAndGlyphs" stroke="#000" stroke-width="0.1">5100</text>
<line x1="1116.60" y1="432.50" x2="1116.60" y2="436.00" stroke="#333" stroke-width="0.9"/>
<text x="1116.6" y="447.1" font-size="10.5" font-family="'Liberation Sans', sans-serif" text-anchor="middle" textLength="23" lengthAdjust="spacingAndGlyphs" stroke="#000" stroke-width="0.1">5200</text>
<line x1="1175.80" y1="432.50" x2="1175.80" y2="436.00" stroke="#333" stroke-width="0.9"/>
<text x="1175.8" y="447.1" font-size="10.5" font-family="'Liberation Sans', sans-serif" text-anchor="middle" textLength="23" lengthAdjust="spacingAndGlyphs" stroke="#000" stroke-width="0.1">5300</text>
<line x1="1235.00" y1="432.50" x2="1235.00" y2="436.00" stroke="#333" stroke-width="0.9"/>
<text x="1235.0" y="447.1" font-size="10.5" font-family="'Liberation Sans', sans-serif" text-anchor="middle" textLength="23" lengthAdjust="spacingAndGlyphs" stroke="#000" stroke-width="0.1">5400</text>
<line x1="1294.20" y1="432.50" x2="1294.20" y2="436.00" stroke="#333" stroke-width="0.9"/>
<text x="1294.2" y="447.1" font-size="10.5" font-family="'Liberation Sans', sans-serif" text-anchor="middle" textLength="23" lengthAdjust="spacingAndGlyphs" stroke="#000" stroke-width="0.1">5500</text>
<text x="110" y="346" font-size="10" font-family="'Liberation Sans', sans-serif" stroke="#000" stroke-width="0.1">e</text>
<text x="116" y="341" font-size="7" font-family="'Liberation Sans', sans-serif">−17</text>
<text x="128" y="346" font-size="10" font-family="'Liberation Sans', sans-serif" stroke="#000" stroke-width="0.1">x2Å</text>
<text transform="translate(109.6,337.8) rotate(90)" font-size="9.5" font-family="'Liberation Sans', sans-serif" fill="#ff0000" text-anchor="end">OVI</text>
<text transform="translate(109.6,346.9) rotate(90)" font-size="9.5" font-family="'Liberation Sans', sans-serif" fill="#ff0000" text-anchor="end">{</text>
<text transform="translate(128.6,337.8) rotate(90)" font-size="9.5" font-family="'Liberation Sans', sans-serif" fill="#9400d3" text-anchor="end">HeII</text>
<text transform="translate(128.6,346.9) rotate(90)" font-size="9.5" font-family="'Liberation Sans', sans-serif" fill="#9400d3" text-anchor="end">{</text>
<text transform="translate(233.6,337.8) rotate(90)" font-size="9.5" font-family="'Liberation Sans', sans-serif" fill="#8a2be2" text-anchor="end">SiIV</text>
<text transform="translate(233.6,346.9) rotate(90)" font-size="9.5" font-family="'Liberation Sans', sans-serif" fill="#8a2be2" text-anchor="end">{</text>
<text transform="translate(324.6,337.8) rotate(90)" font-size="9.5" font-family="'Liberation Sans', sans-serif" fill="#87ceeb" text-anchor="end">OII</text>
<text transform="translate(324.6,346.9) rotate(90)" font-size="9.5" font-family="'Liberation Sans', sans-serif" fill="#87ceeb" text-anchor="end">{</text>
<text transform="translate(337.2,337.8) rotate(90)" font-size="9.5" font-family="'Liberation Sans', sans-serif" fill="#ffa500" text-anchor="end">CIV</text>
<text transform="translate(337.2,346.9) rotate(90)" font-size="9.5" font-family="'Liberation Sans', sans-serif" fill="#ffa500" text-anchor="end">{</text>
<text transform="translate(345.2,337.8) rotate(90)" font-size="9.5" font-family="'Liberation Sans', sans-serif" fill="#87ceeb" text-anchor="end">OII</text>
<text transform="translate(345.2,346.9) rotate(90)" font-size="9.5" font-family="'Liberation Sans', sans-serif" fill="#87ceeb" text-anchor="end">{</text>
<text transform="translate(522.3,337.8) rotate(90)" font-size="9.5" font-family="'Liberation Sans', sans-serif" fill="#ff0000" text-anchor="end">NV</text>
<text transform="translate(522.3,346.9) rotate(90)" font-size="9.5" font-family="'Liberation Sans', sans-serif" fill="#ff0000" text-anchor="end">{</text>
<text transform="translate(568.0,337.8) rotate(90)" font-size="9.5" font-family="'Liberation Sans', sans-serif" fill="#ff0000" text-anchor="end">SiII</text>
<text transform="translate(568.0,346.9) rotate(90)" font-size="9.5" font-family="'Liberation Sans', sans-serif" fill="#ff0000" text-anchor="end">{</text>
<text transform="translate(615.2,337.8) rotate(90)" font-size="9.5" font-family="'Liberation Sans', sans-serif" fill="#8a2be2" text-anchor="end">HeII</text>
<text transform="translate(615.2,346.9) rotate(90)" font-size="9.5" font-family="'Liberation Sans', sans-serif" fill="#8a2be2" text-anchor="end">{</text>
<text transform="translate(700.0,337.8) rotate(90)" font-size="9.5" font-family="'Liberation Sans', sans-serif" fill="#87ceeb" text-anchor="end">Hγ</text>
<text transform="translate(700.0,346.9) rotate(90)" font-size="9.5" font-family="'Liberation Sans', sans-serif" fill="#87ceeb" text-anchor="end">{</text>
<text transform="translate(724.3,337.8) rotate(90)" font-size="9.5" font-family="'Liberation Sans', sans-serif" fill="#87ceeb" text-anchor="end">Hγ</text>
<text transform="translate(724.3,346.9) rotate(90)" font-size="9.5" font-family="'Liberation Sans', sans-serif" fill="#87ceeb" text-anchor="end">{</text>
<text transform="translate(838.0,337.8) rotate(90)" font-size="9.5" font-family="'Liberation Sans', sans-serif" fill="#ff0000" text-anchor="end">SiIV</text>
<text transform="translate(838.0,346.9) rotate(90)" font-size="9.5" font-family="'Liberation Sans', sans-serif" fill="#ff0000" text-anchor="end">{</text>
<text transform="translate(872.3,337.8) rotate(90)" font-size="9.5" font-family="'Liberation Sans', sans-serif" fill="#008000" text-anchor="end">Hγ</text>
<text transform="translate(872.3,346.9) rotate(90)" font-size="9.5" font-family="'Liberation Sans', sans-serif" fill="#008000" text-anchor="end">{</text>
<text transform="translate(1003.2,337.8) rotate(90)" font-size="9.5" font-family="'Liberation Sans', sans-serif" fill="#800080" text-anchor="end">CII</text>
<text transform="translate(1003.2,346.9) rotate(90)" font-size="9.5" font-family="'Liberation Sans', sans-serif" fill="#800080" text-anchor="end">{</text>
<text transform="translate(1020.9,337.8) rotate(90)" font-size="9.5" font-family="'Liberation Sans', sans-serif" fill="#87ceeb" text-anchor="end">Hβ</text>
<text transform="translate(1020.9,346.9) rotate(90)" font-size="9.5" font-family="'Liberation Sans', sans-serif" fill="#87ceeb" text-anchor="end">{</text>
<text transform="translate(1037.6,337.8) rotate(90)" font-size="9.5" font-family="'Liberation Sans', sans-serif" fill="#8a2be2" text-anchor="end">CIII</text>
<text transform="translate(1037.6,346.9) rotate(90)" font-size="9.5" font-family="'Liberation Sans', sans-serif" fill="#8a2be2" text-anchor="end">{</text>
<text transform="translate(1047.5,337.8) rotate(90)" font-size="9.5" font-family="'Liberation Sans', sans-serif" fill="#87ceeb" text-anchor="end">Hβ</text>
<text transform="translate(1047.5,346.9) rotate(90)" font-size="9.5" font-family="'Liberation Sans', sans-serif" fill="#87ceeb" text-anchor="end">{</text>
<text transform="translate(1080.7,337.8) rotate(90)" font-size="9.5" font-family="'Liberation Sans', sans-serif" fill="#87ceeb" text-anchor="end">OIII</text>
<text transform="translate(1080.7,346.9) rotate(90)" font-size="9.5" font-family="'Liberation Sans', sans-serif" fill="#87ceeb" text-anchor="end">{</text>
<text transform="translate(1107.9,337.8) rotate(90)" font-size="9.5" font-family="'Liberation Sans', sans-serif" fill="#87ceeb" text-anchor="end">OIII</text>
<text transform="translate(1107.9,346.9) rotate(90)" font-size="9.5" font-family="'Liberation Sans', sans-serif" fill="#87ceeb" text-anchor="end">{</text>
<text transform="translate(1141.6,337.8) rotate(90)" font-size="9.5" font-family="'Liberation Sans', sans-serif" fill="#ff0000" text-anchor="end">CIV</text>
<text transform="translate(1141.6,346.9) rotate(90)" font-size="9.5" font-family="'Liberation Sans', sans-serif" fill="#ff0000" text-anchor="end">{</text>
<text transform="translate(1213.6,337.8) rotate(90)" font-size="9.5" font-family="'Liberation Sans', sans-serif" fill="#008000" text-anchor="end">Hβ</text>
<text transform="translate(1213.6,346.9) rotate(90)" font-size="9.5" font-family="'Liberation Sans', sans-serif" fill="#008000" text-anchor="end">{</text>
<text transform="translate(1277.8,337.8) rotate(90)" font-size="9.5" font-family="'Liberation Sans', sans-serif" fill="#008000" text-anchor="end">OIII</text>
<text transform="translate(1277.8,346.9) rotate(90)" font-size="9.5" font-family="'Liberation Sans', sans-serif" fill="#008000" text-anchor="end">{</text>
<text transform="translate(111.6,296.2) rotate(90)" font-size="9.5" font-family="'Liberation Sans', sans-serif" fill="#ffa500" text-anchor="end">SiIV</text>
<text transform="translate(111.6,305.3) rotate(90)" font-size="9.5" font-family="'Liberation Sans', sans-serif" fill="#ffa500" text-anchor="end">{</text>
<text transform="translate(870.9,296.2) rotate(90)" font-size="9.5" font-family="'Liberation Sans', sans-serif" fill="#ffa500" text-anchor="end">CIII</text>
<text transform="translate(870.9,305.3) rotate(90)" font-size="9.5" font-family="'Liberation Sans', sans-serif" fill="#ffa500" text-anchor="end">{</text>
<text transform="translate(1110.6,296.2) rotate(90)" font-size="9.5" font-family="'Liberation Sans', sans-serif" fill="#87ceeb" text-anchor="end">OIII</text>
<text transform="translate(1110.6,305.3) rotate(90)" font-size="9.5" font-family="'Liberation Sans', sans-serif" fill="#87ceeb" text-anchor="end">{</text>
<text transform="translate(1137.8,296.2) rotate(90)" font-size="9.5" font-family="'Liberation Sans', sans-serif" fill="#87ceeb" text-anchor="end">OIII</text>
<text transform="translate(1137.8,305.3) rotate(90)" font-size="9.5" font-family="'Liberation Sans', sans-serif" fill="#87ceeb" text-anchor="end">{</text>
<text transform="translate(1281.8,296.2) rotate(90)" font-size="9.5" font-family="'Liberation Sans', sans-serif" fill="#ff00ff" text-anchor="end">OII</text>
<text transform="translate(1281.8,305.3) rotate(90)" font-size="9.5" font-family="'Liberation Sans', sans-serif" fill="#ff00ff" text-anchor="end">{</text>
<rect x="479.60" y="450.40" width="16.80" height="5.40" fill="#ff0000"/>
<text x="502.6" y="456.2" font-size="8.8" font-family="'Liberation Sans', sans-serif" fill="#222">Lyα</text>
<rect x="534.20" y="450.40" width="16.80" height="5.40" fill="#008000"/>
<text x="557.2" y="456.2" font-size="8.8" font-family="'Liberation Sans', sans-serif" fill="#222">OII</text>
<rect x="586.40" y="450.40" width="16.80" height="5.40" fill="#8a2be2"/>
<text x="609.4" y="456.2" font-size="8.8" font-family="'Liberation Sans', sans-serif" fill="#222">CIV</text>
<rect x="641.80" y="450.40" width="16.80" height="5.40" fill="#800080"/>
<text x="664.8" y="456.2" font-size="8.8" font-family="'Liberation Sans', sans-serif" fill="#222">CIII</text>
<rect x="693.00" y="450.40" width="16.80" height="5.40" fill="#ff00ff"/>
<text x="716" y="456.2" font-size="8.8" font-family="'Liberation Sans', sans-serif" fill="#222">MgII</text>
<rect x="748.20" y="450.40" width="16.80" height="5.40" fill="#ffa500"/>
<text x="771.2" y="456.2" font-size="8.8" font-family="'Liberation Sans', sans-serif" fill="#222">HeII</text>
<rect x="803.60" y="450.40" width="16.80" height="5.40" fill="#87ceeb"/>
<text x="826.6" y="456.2" font-size="8.8" font-family="'Liberation Sans', sans-serif" fill="#222">(K)CaII</text>
<rect x="868.60" y="450.40" width="16.80" height="5.40" fill="#87ceeb"/>
<text x="891.6" y="456.2" font-size="8.8" font-family="'Liberation Sans', sans-serif" fill="#222">(H)CaII</text>
<text transform="translate(69.5,498.6) scale(1,1.1)" font-size="13.15" textLength="529" lengthAdjust="spacingAndGlyphs" stroke="#000" stroke-width="0.15">HSC-SSP : Possible Matches = 1 (within +/- 3")  P(LAE)/P(OII): 0.475</text>
<text x="603" y="493.5" font-size="9.72" font-family="'Liberation Sans', sans-serif">0.798</text>
<text x="603" y="501.5" font-size="9.72" font-family="'Liberation Sans', sans-serif">0.33</text>
<text transform="translate(637.5,498.6) scale(1,1.1)" font-size="13.15" stroke="#000" stroke-width="0.15">(g)</text>
<text x="143.9" y="525.7" font-size="12.5" font-family="'Liberation Sans', sans-serif" text-anchor="middle" textLength="93.5" lengthAdjust="spacingAndGlyphs" stroke="#000" stroke-width="0.1">Fiber Positions</text>
<clipPath id="pc0"><rect x="70.5" y="532.8" width="147.8" height="147.4"/></clipPath>
<g clip-path="url(#pc0)">
<path fill="#cccccc" d="M70.5 532.8h3.5v3.5h-3.5zM111.9 532.8h3.5v3.5h-3.5zM141.4 532.8h3.5v3.5h-3.5zM179.9 532.8h3.5v3.5h-3.5zM188.7 532.8h3.5v3.5h-3.5zM197.6 532.8h3.5v3.5h-3.5zM94.1 535.8h6.4v3.5h-6.4zM126.7 535.8h3.5v3.5h-3.5zM147.4 535.8h3.5v3.5h-3.5zM176.9 535.8h6.4v3.5h-6.4zM200.6 535.8h3.5v3.5h-3.5zM215.3 535.8h3.5v3.5h-3.5zM73.5 538.7h3.5v3.5h-3.5zM132.6 538.7h3.5v3.5h-3.5zM147.4 538.7h9.4v3.5h-9.4zM179.9 538.7h3.5v3.5h-3.5zM185.8 538.7h3.5v3.5h-3.5zM206.5 538.7h3.5v3.5h-3.5zM85.3 541.7h12.3v3.5h-12.3zM100.1 541.7h3.5v3.5h-3.5zM168.0 541.7h3.5v3.5h-3.5zM203.5 541.7h3.5v3.5h-3.5zM79.4 544.6h3.5v3.5h-3.5zM91.2 544.6h3.5v3.5h-3.5zM100.1 544.6h3.5v3.5h-3.5zM156.2 544.6h3.5v3.5h-3.5zM206.5 544.6h3.5v3.5h-3.5zM73.5 547.6h3.5v3.5h-3.5zM91.2 547.6h3.5v3.5h-3.5zM159.2 547.6h3.5v3.5h-3.5zM165.1 547.6h9.4v3.5h-9.4zM188.7 547.6h6.4v3.5h-6.4zM209.4 547.6h3.5v3.5h-3.5zM82.3 550.5h3.5v3.5h-3.5zM97.1 550.5h3.5v3.5h-3.5zM171.0 550.5h3.5v3.5h-3.5zM200.6 550.5h3.5v3.5h-3.5zM70.5 553.5h3.5v3.5h-3.5zM91.2 553.5h3.5v3.5h-3.5zM103.0 553.5h3.5v3.5h-3.5zM179.9 553.5h3.5v3.5h-3.5zM188.7 553.5h3.5v3.5h-3.5zM194.7 553.5h3.5v3.5h-3.5zM200.6 553.5h3.5v3.5h-3.5zM73.5 556.4h3.5v3.5h-3.5zM79.4 556.4h3.5v3.5h-3.5zM97.1 556.4h3.5v3.5h-3.5zM162.1 556.4h3.5v3.5h-3.5zM168.0 556.4h6.4v3.5h-6.4zM200.6 556.4h3.5v3.5h-3.5zM171.0 559.4h3.5v3.5h-3.5zM182.8 559.4h3.5v3.5h-3.5zM191.7 559.4h3.5v3.5h-3.5zM209.4 559.4h6.4v3.5h-6.4zM70.5 562.4h3.5v3.5h-3.5zM191.7 562.4h3.5v3.5h-3.5zM82.3 565.3h3.5v3.5h-3.5zM168.0 565.3h3.5v3.5h-3.5zM174.0 565.3h6.4v3.5h-6.4zM209.4 565.3h3.5v3.5h-3.5zM76.4 568.3h3.5v3.5h-3.5zM82.3 568.3h6.4v3.5h-6.4zM91.2 568.3h6.4v3.5h-6.4zM182.8 568.3h3.5v3.5h-3.5zM188.7 568.3h3.5v3.5h-3.5zM200.6 568.3h3.5v3.5h-3.5zM206.5 568.3h6.4v3.5h-6.4zM94.1 571.2h3.5v3.5h-3.5zM165.1 571.2h3.5v3.5h-3.5zM171.0 571.2h3.5v3.5h-3.5zM188.7 571.2h6.4v3.5h-6.4zM70.5 574.2h3.5v3.5h-3.5zM79.4 574.2h3.5v3.5h-3.5zM88.2 574.2h3.5v3.5h-3.5zM188.7 574.2h3.5v3.5h-3.5zM194.7 574.2h9.4v3.5h-9.4zM206.5 574.2h3.5v3.5h-3.5zM97.1 577.1h3.5v3.5h-3.5zM188.7 577.1h3.5v3.5h-3.5zM200.6 577.1h3.5v3.5h-3.5zM73.5 580.1h3.5v3.5h-3.5zM162.1 580.1h3.5v3.5h-3.5zM200.6 580.1h3.5v3.5h-3.5zM206.5 580.1h3.5v3.5h-3.5zM212.4 580.1h3.5v3.5h-3.5zM162.1 583.1h3.5v3.5h-3.5zM188.7 583.1h3.5v3.5h-3.5zM200.6 583.1h3.5v3.5h-3.5zM79.4 586.0h3.5v3.5h-3.5zM94.1 586.0h3.5v3.5h-3.5zM185.8 586.0h6.4v3.5h-6.4zM197.6 586.0h3.5v3.5h-3.5zM206.5 586.0h3.5v3.5h-3.5zM215.3 586.0h3.5v3.5h-3.5zM82.3 589.0h3.5v3.5h-3.5zM91.2 589.0h3.5v3.5h-3.5zM185.8 589.0h6.4v3.5h-6.4zM203.5 589.0h3.5v3.5h-3.5zM209.4 589.0h3.5v3.5h-3.5zM215.3 589.0h3.5v3.5h-3.5zM70.5 591.9h12.3v3.5h-12.3zM182.8 591.9h3.5v3.5h-3.5zM200.6 591.9h6.4v3.5h-6.4zM70.5 594.9h3.5v3.5h-3.5zM76.4 594.9h3.5v3.5h-3.5zM97.1 594.9h3.5v3.5h-3.5zM159.2 594.9h3.5v3.5h-3.5zM171.0 594.9h3.5v3.5h-3.5zM176.9 594.9h12.3v3.5h-12.3zM76.4 597.8h3.5v3.5h-3.5zM82.3 597.8h3.5v3.5h-3.5zM91.2 597.8h3.5v3.5h-3.5zM100.1 597.8h3.5v3.5h-3.5zM168.0 597.8h3.5v3.5h-3.5zM176.9 597.8h6.4v3.5h-6.4zM185.8 597.8h3.5v3.5h-3.5zM200.6 597.8h3.5v3.5h-3.5zM194.7 600.8h3.5v3.5h-3.5zM200.6 600.8h3.5v3.5h-3.5zM70.5 603.7h3.5v3.5h-3.5zM76.4 603.7h3.5v3.5h-3.5zM85.3 603.7h3.5v3.5h-3.5zM94.1 603.7h6.4v3.5h-6.4zM174.0 603.7h3.5v3.5h-3.5zM215.3 603.7h3.5v3.5h-3.5zM73.5 606.7h3.5v3.5h-3.5zM82.3 606.7h3.5v3.5h-3.5zM103.0 606.7h3.5v3.5h-3.5zM176.9 606.7h3.5v3.5h-3.5zM185.8 606.7h12.3v3.5h-12.3zM209.4 606.7h6.4v3.5h-6.4zM73.5 609.7h3.5v3.5h-3.5zM103.0 609.7h3.5v3.5h-3.5zM150.3 609.7h3.5v3.5h-3.5zM162.1 609.7h3.5v3.5h-3.5zM176.9 609.7h3.5v3.5h-3.5zM182.8 609.7h3.5v3.5h-3.5zM191.7 609.7h3.5v3.5h-3.5zM197.6 609.7h3.5v3.5h-3.5zM70.5 612.6h6.4v3.5h-6.4zM88.2 612.6h3.5v3.5h-3.5zM97.1 612.6h6.4v3.5h-6.4zM106.0 612.6h3.5v3.5h-3.5zM114.8 612.6h3.5v3.5h-3.5zM135.5 612.6h3.5v3.5h-3.5zM147.4 612.6h3.5v3.5h-3.5zM171.0 612.6h3.5v3.5h-3.5zM182.8 612.6h3.5v3.5h-3.5zM191.7 612.6h3.5v3.5h-3.5zM200.6 612.6h6.4v3.5h-6.4zM209.4 612.6h3.5v3.5h-3.5zM73.5 615.6h6.4v3.5h-6.4zM91.2 615.6h3.5v3.5h-3.5zM97.1 615.6h9.4v3.5h-9.4zM129.6 615.6h3.5v3.5h-3.5zM141.4 615.6h3.5v3.5h-3.5zM159.2 615.6h3.5v3.5h-3.5zM171.0 615.6h3.5v3.5h-3.5zM176.9 615.6h3.5v3.5h-3.5zM185.8 615.6h3.5v3.5h-3.5zM88.2 618.5h3.5v3.5h-3.5zM114.8 618.5h3.5v3.5h-3.5zM120.8 618.5h3.5v3.5h-3.5zM144.4 618.5h3.5v3.5h-3.5zM165.1 618.5h3.5v3.5h-3.5zM194.7 618.5h6.4v3.5h-6.4zM206.5 618.5h3.5v3.5h-3.5zM73.5 621.5h3.5v3.5h-3.5zM129.6 621.5h3.5v3.5h-3.5zM153.3 621.5h6.4v3.5h-6.4zM182.8 621.5h3.5v3.5h-3.5zM200.6 621.5h9.4v3.5h-9.4zM70.5 624.4h9.4v3.5h-9.4zM82.3 624.4h3.5v3.5h-3.5zM100.1 624.4h3.5v3.5h-3.5zM108.9 624.4h3.5v3.5h-3.5zM126.7 624.4h3.5v3.5h-3.5zM138.5 624.4h3.5v3.5h-3.5zM79.4 627.4h9.4v3.5h-9.4zM103.0 627.4h6.4v3.5h-6.4zM120.8 627.4h3.5v3.5h-3.5zM138.5 627.4h3.5v3.5h-3.5zM174.0 627.4h6.4v3.5h-6.4zM191.7 627.4h6.4v3.5h-6.4zM212.4 627.4h6.4v3.5h-6.4zM120.8 630.3h3.5v3.5h-3.5zM126.7 630.3h3.5v3.5h-3.5zM153.3 630.3h3.5v3.5h-3.5zM168.0 630.3h3.5v3.5h-3.5zM182.8 630.3h3.5v3.5h-3.5zM203.5 630.3h3.5v3.5h-3.5zM212.4 630.3h3.5v3.5h-3.5zM76.4 633.3h3.5v3.5h-3.5zM97.1 633.3h3.5v3.5h-3.5zM111.9 633.3h3.5v3.5h-3.5zM165.1 633.3h6.4v3.5h-6.4zM209.4 633.3h3.5v3.5h-3.5zM88.2 636.3h6.4v3.5h-6.4zM117.8 636.3h3.5v3.5h-3.5zM150.3 636.3h6.4v3.5h-6.4zM188.7 636.3h3.5v3.5h-3.5zM212.4 636.3h3.5v3.5h-3.5zM97.1 639.2h3.5v3.5h-3.5zM159.2 639.2h3.5v3.5h-3.5zM171.0 639.2h3.5v3.5h-3.5zM176.9 639.2h3.5v3.5h-3.5zM188.7 639.2h3.5v3.5h-3.5zM215.3 639.2h3.5v3.5h-3.5zM70.5 642.2h3.5v3.5h-3.5zM106.0 642.2h3.5v3.5h-3.5zM111.9 642.2h3.5v3.5h-3.5zM117.8 642.2h3.5v3.5h-3.5zM123.7 642.2h3.5v3.5h-3.5zM150.3 642.2h9.4v3.5h-9.4zM168.0 642.2h3.5v3.5h-3.5zM188.7 642.2h3.5v3.5h-3.5zM206.5 642.2h3.5v3.5h-3.5zM70.5 645.1h3.5v3.5h-3.5zM91.2 645.1h3.5v3.5h-3.5zM144.4 645.1h3.5v3.5h-3.5zM176.9 645.1h3.5v3.5h-3.5zM188.7 645.1h3.5v3.5h-3.5zM200.6 645.1h3.5v3.5h-3.5zM209.4 645.1h3.5v3.5h-3.5zM88.2 648.1h3.5v3.5h-3.5zM94.1 648.1h3.5v3.5h-3.5zM106.0 648.1h3.5v3.5h-3.5zM111.9 648.1h6.4v3.5h-6.4zM162.1 648.1h3.5v3.5h-3.5zM171.0 648.1h12.3v3.5h-12.3zM191.7 648.1h6.4v3.5h-6.4zM209.4 648.1h3.5v3.5h-3.5zM215.3 648.1h3.5v3.5h-3.5zM82.3 651.0h3.5v3.5h-3.5zM123.7 651.0h6.4v3.5h-6.4zM147.4 651.0h3.5v3.5h-3.5zM168.0 651.0h6.4v3.5h-6.4zM185.8 651.0h3.5v3.5h-3.5zM206.5 651.0h3.5v3.5h-3.5zM88.2 654.0h3.5v3.5h-3.5zM108.9 654.0h6.4v3.5h-6.4zM120.8 654.0h3.5v3.5h-3.5zM129.6 654.0h9.4v3.5h-9.4zM179.9 654.0h3.5v3.5h-3.5zM91.2 657.0h3.5v3.5h-3.5zM97.1 657.0h3.5v3.5h-3.5zM114.8 657.0h3.5v3.5h-3.5zM132.6 657.0h6.4v3.5h-6.4zM144.4 657.0h6.4v3.5h-6.4zM156.2 657.0h3.5v3.5h-3.5zM117.8 659.9h6.4v3.5h-6.4zM129.6 659.9h9.4v3.5h-9.4zM147.4 659.9h6.4v3.5h-6.4zM168.0 659.9h3.5v3.5h-3.5zM176.9 659.9h3.5v3.5h-3.5zM203.5 659.9h3.5v3.5h-3.5zM212.4 659.9h3.5v3.5h-3.5zM85.3 662.9h3.5v3.5h-3.5zM97.1 662.9h3.5v3.5h-3.5zM129.6 662.9h3.5v3.5h-3.5zM135.5 662.9h3.5v3.5h-3.5zM147.4 662.9h3.5v3.5h-3.5zM162.1 662.9h3.5v3.5h-3.5zM168.0 662.9h3.5v3.5h-3.5zM174.0 662.9h3.5v3.5h-3.5zM206.5 662.9h3.5v3.5h-3.5zM212.4 662.9h3.5v3.5h-3.5zM73.5 665.8h3.5v3.5h-3.5zM82.3 665.8h6.4v3.5h-6.4zM94.1 665.8h3.5v3.5h-3.5zM100.1 665.8h3.5v3.5h-3.5zM106.0 665.8h3.5v3.5h-3.5zM114.8 665.8h6.4v3.5h-6.4zM123.7 665.8h3.5v3.5h-3.5zM135.5 665.8h6.4v3.5h-6.4zM165.1 665.8h6.4v3.5h-6.4zM179.9 665.8h6.4v3.5h-6.4zM203.5 665.8h3.5v3.5h-3.5zM70.5 668.8h6.4v3.5h-6.4zM79.4 668.8h3.5v3.5h-3.5zM94.1 668.8h3.5v3.5h-3.5zM108.9 668.8h3.5v3.5h-3.5zM117.8 668.8h3.5v3.5h-3.5zM144.4 668.8h3.5v3.5h-3.5zM185.8 668.8h3.5v3.5h-3.5zM191.7 668.8h3.5v3.5h-3.5zM212.4 668.8h6.4v3.5h-6.4zM73.5 671.7h3.5v3.5h-3.5zM94.1 671.7h15.3v3.5h-15.3zM126.7 671.7h3.5v3.5h-3.5zM135.5 671.7h3.5v3.5h-3.5zM156.2 671.7h6.4v3.5h-6.4zM182.8 671.7h3.5v3.5h-3.5zM194.7 671.7h6.4v3.5h-6.4zM206.5 671.7h3.5v3.5h-3.5zM88.2 674.7h3.5v3.5h-3.5zM97.1 674.7h3.5v3.5h-3.5zM111.9 674.7h3.5v3.5h-3.5zM132.6 674.7h3.5v3.5h-3.5zM165.1 674.7h3.5v3.5h-3.5zM174.0 674.7h3.5v3.5h-3.5zM191.7 674.7h3.5v3.5h-3.5zM203.5 674.7h12.3v3.5h-12.3zM73.5 677.6h3.5v3.5h-3.5zM85.3 677.6h3.5v3.5h-3.5zM100.1 677.6h3.5v3.5h-3.5zM106.0 677.6h12.3v3.5h-12.3zM126.7 677.6h3.5v3.5h-3.5zM135.5 677.6h3.5v3.5h-3.5zM176.9 677.6h3.5v3.5h-3.5zM185.8 677.6h9.4v3.5h-9.4zM197.6 677.6h6.4v3.5h-6.4zM206.5 677.6h3.5v3.5h-3.5z"/>
<path fill="#e4e4e4" d="M73.5 532.8h3.5v3.5h-3.5zM85.3 532.8h3.5v3.5h-3.5zM106.0 532.8h3.5v3.5h-3.5zM165.1 532.8h3.5v3.5h-3.5zM185.8 532.8h3.5v3.5h-3.5zM191.7 532.8h3.5v3.5h-3.5zM76.4 535.8h6.4v3.5h-6.4zM168.0 535.8h3.5v3.5h-3.5zM185.8 535.8h3.5v3.5h-3.5zM203.5 535.8h6.4v3.5h-6.4zM79.4 538.7h3.5v3.5h-3.5zM88.2 538.7h6.4v3.5h-6.4zM111.9 538.7h3.5v3.5h-3.5zM165.1 538.7h3.5v3.5h-3.5zM215.3 538.7h3.5v3.5h-3.5zM97.1 541.7h3.5v3.5h-3.5zM156.2 541.7h3.5v3.5h-3.5zM179.9 541.7h6.4v3.5h-6.4zM194.7 541.7h6.4v3.5h-6.4zM215.3 541.7h3.5v3.5h-3.5zM171.0 544.6h6.4v3.5h-6.4zM179.9 544.6h3.5v3.5h-3.5zM185.8 544.6h3.5v3.5h-3.5zM88.2 547.6h3.5v3.5h-3.5zM97.1 547.6h3.5v3.5h-3.5zM162.1 547.6h3.5v3.5h-3.5zM206.5 547.6h3.5v3.5h-3.5zM206.5 550.5h3.5v3.5h-3.5zM76.4 553.5h3.5v3.5h-3.5zM176.9 553.5h3.5v3.5h-3.5zM212.4 553.5h3.5v3.5h-3.5zM82.3 556.4h3.5v3.5h-3.5zM188.7 559.4h3.5v3.5h-3.5zM197.6 559.4h3.5v3.5h-3.5zM182.8 562.4h3.5v3.5h-3.5zM206.5 562.4h3.5v3.5h-3.5zM212.4 562.4h3.5v3.5h-3.5zM171.0 565.3h3.5v3.5h-3.5zM197.6 565.3h3.5v3.5h-3.5zM206.5 565.3h3.5v3.5h-3.5zM179.9 568.3h3.5v3.5h-3.5zM194.7 571.2h3.5v3.5h-3.5zM76.4 574.2h3.5v3.5h-3.5zM174.0 577.1h3.5v3.5h-3.5zM209.4 577.1h3.5v3.5h-3.5zM215.3 577.1h3.5v3.5h-3.5zM70.5 580.1h3.5v3.5h-3.5zM174.0 580.1h6.4v3.5h-6.4zM194.7 583.1h6.4v3.5h-6.4zM206.5 583.1h3.5v3.5h-3.5zM70.5 586.0h3.5v3.5h-3.5zM212.4 586.0h3.5v3.5h-3.5zM197.6 591.9h3.5v3.5h-3.5zM206.5 591.9h3.5v3.5h-3.5zM209.4 594.9h3.5v3.5h-3.5zM171.0 597.8h3.5v3.5h-3.5zM209.4 597.8h3.5v3.5h-3.5zM88.2 600.8h3.5v3.5h-3.5zM97.1 600.8h3.5v3.5h-3.5zM174.0 600.8h3.5v3.5h-3.5zM185.8 600.8h3.5v3.5h-3.5zM73.5 603.7h3.5v3.5h-3.5zM191.7 603.7h3.5v3.5h-3.5zM206.5 603.7h3.5v3.5h-3.5zM88.2 606.7h3.5v3.5h-3.5zM162.1 606.7h3.5v3.5h-3.5zM215.3 606.7h3.5v3.5h-3.5zM91.2 609.7h3.5v3.5h-3.5zM165.1 609.7h6.4v3.5h-6.4zM85.3 612.6h3.5v3.5h-3.5zM91.2 612.6h3.5v3.5h-3.5zM132.6 612.6h3.5v3.5h-3.5zM168.0 612.6h3.5v3.5h-3.5zM215.3 612.6h3.5v3.5h-3.5zM174.0 615.6h3.5v3.5h-3.5zM209.4 615.6h3.5v3.5h-3.5zM97.1 618.5h3.5v3.5h-3.5zM111.9 618.5h3.5v3.5h-3.5zM159.2 618.5h3.5v3.5h-3.5zM85.3 621.5h3.5v3.5h-3.5zM117.8 621.5h3.5v3.5h-3.5zM168.0 621.5h3.5v3.5h-3.5zM197.6 621.5h3.5v3.5h-3.5zM212.4 621.5h3.5v3.5h-3.5zM91.2 624.4h3.5v3.5h-3.5zM120.8 624.4h3.5v3.5h-3.5zM135.5 624.4h3.5v3.5h-3.5zM156.2 624.4h3.5v3.5h-3.5zM182.8 624.4h3.5v3.5h-3.5zM200.6 624.4h6.4v3.5h-6.4zM76.4 627.4h3.5v3.5h-3.5zM108.9 627.4h6.4v3.5h-6.4zM117.8 627.4h3.5v3.5h-3.5zM179.9 627.4h3.5v3.5h-3.5zM188.7 627.4h3.5v3.5h-3.5zM203.5 627.4h3.5v3.5h-3.5zM70.5 630.3h6.4v3.5h-6.4zM94.1 630.3h3.5v3.5h-3.5zM188.7 630.3h6.4v3.5h-6.4zM200.6 630.3h3.5v3.5h-3.5zM209.4 630.3h3.5v3.5h-3.5zM153.3 633.3h3.5v3.5h-3.5zM176.9 633.3h9.4v3.5h-9.4zM191.7 633.3h3.5v3.5h-3.5zM200.6 633.3h9.4v3.5h-9.4zM212.4 633.3h3.5v3.5h-3.5zM73.5 636.3h3.5v3.5h-3.5zM103.0 636.3h3.5v3.5h-3.5zM111.9 636.3h6.4v3.5h-6.4zM203.5 636.3h3.5v3.5h-3.5zM85.3 639.2h3.5v3.5h-3.5zM120.8 639.2h3.5v3.5h-3.5zM194.7 639.2h3.5v3.5h-3.5zM114.8 642.2h3.5v3.5h-3.5zM174.0 642.2h3.5v3.5h-3.5zM182.8 642.2h3.5v3.5h-3.5zM182.8 645.1h6.4v3.5h-6.4zM215.3 645.1h3.5v3.5h-3.5zM120.8 648.1h3.5v3.5h-3.5zM159.2 648.1h3.5v3.5h-3.5zM165.1 648.1h3.5v3.5h-3.5zM188.7 648.1h3.5v3.5h-3.5zM203.5 648.1h6.4v3.5h-6.4zM70.5 651.0h3.5v3.5h-3.5zM100.1 651.0h3.5v3.5h-3.5zM106.0 651.0h3.5v3.5h-3.5zM165.1 654.0h6.4v3.5h-6.4zM215.3 654.0h3.5v3.5h-3.5zM100.1 657.0h3.5v3.5h-3.5zM117.8 657.0h3.5v3.5h-3.5zM171.0 657.0h3.5v3.5h-3.5zM194.7 657.0h3.5v3.5h-3.5zM215.3 657.0h3.5v3.5h-3.5zM76.4 659.9h6.4v3.5h-6.4zM88.2 659.9h3.5v3.5h-3.5zM200.6 659.9h3.5v3.5h-3.5zM70.5 662.9h6.4v3.5h-6.4zM88.2 662.9h3.5v3.5h-3.5zM176.9 662.9h3.5v3.5h-3.5zM191.7 662.9h3.5v3.5h-3.5zM200.6 662.9h3.5v3.5h-3.5zM76.4 665.8h3.5v3.5h-3.5zM97.1 665.8h3.5v3.5h-3.5zM103.0 665.8h3.5v3.5h-3.5zM162.1 665.8h3.5v3.5h-3.5zM176.9 665.8h3.5v3.5h-3.5zM120.8 668.8h6.4v3.5h-6.4zM129.6 668.8h3.5v3.5h-3.5zM141.4 668.8h3.5v3.5h-3.5zM159.2 668.8h3.5v3.5h-3.5zM171.0 668.8h3.5v3.5h-3.5zM203.5 668.8h3.5v3.5h-3.5zM209.4 668.8h3.5v3.5h-3.5zM108.9 671.7h3.5v3.5h-3.5zM185.8 671.7h6.4v3.5h-6.4zM215.3 671.7h3.5v3.5h-3.5zM76.4 674.7h6.4v3.5h-6.4zM129.6 674.7h3.5v3.5h-3.5zM135.5 674.7h6.4v3.5h-6.4zM171.0 674.7h3.5v3.5h-3.5zM185.8 674.7h3.5v3.5h-3.5zM215.3 674.7h3.5v3.5h-3.5zM129.6 677.6h3.5v3.5h-3.5zM147.4 677.6h3.5v3.5h-3.5zM215.3 677.6h3.5v3.5h-3.5z"/>
<path fill="#c0c0c0" d="M76.4 532.8h3.5v3.5h-3.5zM114.8 532.8h6.4v3.5h-6.4zM126.7 532.8h3.5v3.5h-3.5zM153.3 532.8h6.4v3.5h-6.4zM171.0 532.8h3.5v3.5h-3.5zM203.5 532.8h3.5v3.5h-3.5zM209.4 532.8h3.5v3.5h-3.5zM215.3 532.8h3.5v3.5h-3.5zM73.5 535.8h3.5v3.5h-3.5zM88.2 535.8h6.4v3.5h-6.4zM100.1 535.8h3.5v3.5h-3.5zM120.8 535.8h3.5v3.5h-3.5zM144.4 535.8h3.5v3.5h-3.5zM159.2 535.8h9.4v3.5h-9.4zM182.8 535.8h3.5v3.5h-3.5zM188.7 535.8h6.4v3.5h-6.4zM212.4 535.8h3.5v3.5h-3.5zM82.3 538.7h6.4v3.5h-6.4zM106.0 538.7h3.5v3.5h-3.5zM135.5 538.7h3.5v3.5h-3.5zM144.4 538.7h3.5v3.5h-3.5zM156.2 538.7h9.4v3.5h-9.4zM176.9 538.7h3.5v3.5h-3.5zM191.7 538.7h3.5v3.5h-3.5zM108.9 541.7h3.5v3.5h-3.5zM114.8 541.7h3.5v3.5h-3.5zM159.2 541.7h3.5v3.5h-3.5zM191.7 541.7h3.5v3.5h-3.5zM200.6 541.7h3.5v3.5h-3.5zM212.4 541.7h3.5v3.5h-3.5zM70.5 544.6h3.5v3.5h-3.5zM94.1 544.6h3.5v3.5h-3.5zM194.7 544.6h6.4v3.5h-6.4zM215.3 544.6h3.5v3.5h-3.5zM76.4 547.6h3.5v3.5h-3.5zM153.3 547.6h3.5v3.5h-3.5zM174.0 547.6h3.5v3.5h-3.5zM194.7 547.6h3.5v3.5h-3.5zM203.5 547.6h3.5v3.5h-3.5zM212.4 547.6h3.5v3.5h-3.5zM70.5 550.5h9.4v3.5h-9.4zM88.2 550.5h3.5v3.5h-3.5zM156.2 550.5h6.4v3.5h-6.4zM182.8 550.5h3.5v3.5h-3.5zM194.7 550.5h3.5v3.5h-3.5zM185.8 553.5h3.5v3.5h-3.5zM191.7 553.5h3.5v3.5h-3.5zM203.5 553.5h9.4v3.5h-9.4zM70.5 556.4h3.5v3.5h-3.5zM76.4 556.4h3.5v3.5h-3.5zM85.3 556.4h6.4v3.5h-6.4zM94.1 556.4h3.5v3.5h-3.5zM159.2 556.4h3.5v3.5h-3.5zM165.1 556.4h3.5v3.5h-3.5zM176.9 556.4h3.5v3.5h-3.5zM188.7 556.4h6.4v3.5h-6.4zM215.3 556.4h3.5v3.5h-3.5zM70.5 559.4h3.5v3.5h-3.5zM82.3 559.4h3.5v3.5h-3.5zM88.2 559.4h6.4v3.5h-6.4zM165.1 559.4h3.5v3.5h-3.5zM194.7 559.4h3.5v3.5h-3.5zM206.5 559.4h3.5v3.5h-3.5zM79.4 562.4h3.5v3.5h-3.5zM165.1 562.4h3.5v3.5h-3.5zM176.9 562.4h6.4v3.5h-6.4zM188.7 562.4h3.5v3.5h-3.5zM215.3 562.4h3.5v3.5h-3.5zM70.5 565.3h6.4v3.5h-6.4zM88.2 565.3h3.5v3.5h-3.5zM94.1 565.3h3.5v3.5h-3.5zM165.1 565.3h3.5v3.5h-3.5zM179.9 565.3h9.4v3.5h-9.4zM203.5 565.3h3.5v3.5h-3.5zM70.5 568.3h6.4v3.5h-6.4zM88.2 568.3h3.5v3.5h-3.5zM185.8 568.3h3.5v3.5h-3.5zM191.7 568.3h3.5v3.5h-3.5zM212.4 568.3h3.5v3.5h-3.5zM73.5 571.2h3.5v3.5h-3.5zM88.2 571.2h3.5v3.5h-3.5zM168.0 571.2h3.5v3.5h-3.5zM185.8 571.2h3.5v3.5h-3.5zM203.5 571.2h3.5v3.5h-3.5zM174.0 574.2h3.5v3.5h-3.5zM179.9 574.2h3.5v3.5h-3.5zM215.3 574.2h3.5v3.5h-3.5zM79.4 577.1h3.5v3.5h-3.5zM91.2 577.1h3.5v3.5h-3.5zM171.0 577.1h3.5v3.5h-3.5zM176.9 577.1h3.5v3.5h-3.5zM194.7 577.1h3.5v3.5h-3.5zM203.5 577.1h3.5v3.5h-3.5zM97.1 580.1h3.5v3.5h-3.5zM165.1 580.1h3.5v3.5h-3.5zM179.9 580.1h3.5v3.5h-3.5zM185.8 580.1h3.5v3.5h-3.5zM191.7 580.1h3.5v3.5h-3.5zM215.3 580.1h3.5v3.5h-3.5zM76.4 583.1h3.5v3.5h-3.5zM88.2 583.1h9.4v3.5h-9.4zM165.1 583.1h3.5v3.5h-3.5zM171.0 583.1h3.5v3.5h-3.5zM203.5 583.1h3.5v3.5h-3.5zM212.4 583.1h6.4v3.5h-6.4zM88.2 586.0h6.4v3.5h-6.4zM165.1 586.0h3.5v3.5h-3.5zM171.0 586.0h3.5v3.5h-3.5zM176.9 586.0h3.5v3.5h-3.5zM194.7 586.0h3.5v3.5h-3.5zM200.6 586.0h3.5v3.5h-3.5zM85.3 589.0h3.5v3.5h-3.5zM100.1 589.0h3.5v3.5h-3.5zM168.0 589.0h6.4v3.5h-6.4zM206.5 589.0h3.5v3.5h-3.5zM91.2 591.9h9.4v3.5h-9.4zM176.9 591.9h6.4v3.5h-6.4zM188.7 591.9h3.5v3.5h-3.5zM212.4 591.9h3.5v3.5h-3.5zM73.5 594.9h3.5v3.5h-3.5zM91.2 594.9h3.5v3.5h-3.5zM103.0 594.9h3.5v3.5h-3.5zM165.1 594.9h3.5v3.5h-3.5zM174.0 594.9h3.5v3.5h-3.5zM191.7 594.9h3.5v3.5h-3.5zM197.6 594.9h3.5v3.5h-3.5zM212.4 594.9h3.5v3.5h-3.5zM73.5 597.8h3.5v3.5h-3.5zM79.4 597.8h3.5v3.5h-3.5zM85.3 597.8h3.5v3.5h-3.5zM94.1 597.8h6.4v3.5h-6.4zM162.1 597.8h6.4v3.5h-6.4zM174.0 597.8h3.5v3.5h-3.5zM182.8 597.8h3.5v3.5h-3.5zM191.7 597.8h3.5v3.5h-3.5zM197.6 597.8h3.5v3.5h-3.5zM203.5 597.8h6.4v3.5h-6.4zM215.3 597.8h3.5v3.5h-3.5zM70.5 600.8h3.5v3.5h-3.5zM91.2 600.8h6.4v3.5h-6.4zM162.1 600.8h9.4v3.5h-9.4zM179.9 600.8h6.4v3.5h-6.4zM197.6 600.8h3.5v3.5h-3.5zM203.5 600.8h6.4v3.5h-6.4zM215.3 600.8h3.5v3.5h-3.5zM82.3 603.7h3.5v3.5h-3.5zM153.3 603.7h3.5v3.5h-3.5zM165.1 603.7h3.5v3.5h-3.5zM171.0 603.7h3.5v3.5h-3.5zM182.8 603.7h9.4v3.5h-9.4zM200.6 603.7h3.5v3.5h-3.5zM209.4 603.7h3.5v3.5h-3.5zM79.4 606.7h3.5v3.5h-3.5zM85.3 606.7h3.5v3.5h-3.5zM91.2 606.7h3.5v3.5h-3.5zM165.1 606.7h3.5v3.5h-3.5zM171.0 606.7h3.5v3.5h-3.5zM182.8 606.7h3.5v3.5h-3.5zM200.6 606.7h3.5v3.5h-3.5zM70.5 609.7h3.5v3.5h-3.5zM88.2 609.7h3.5v3.5h-3.5zM94.1 609.7h3.5v3.5h-3.5zM111.9 609.7h3.5v3.5h-3.5zM156.2 609.7h3.5v3.5h-3.5zM185.8 609.7h3.5v3.5h-3.5zM194.7 609.7h3.5v3.5h-3.5zM117.8 612.6h3.5v3.5h-3.5zM153.3 612.6h3.5v3.5h-3.5zM174.0 612.6h3.5v3.5h-3.5zM179.9 612.6h3.5v3.5h-3.5zM206.5 612.6h3.5v3.5h-3.5zM106.0 615.6h3.5v3.5h-3.5zM111.9 615.6h15.3v3.5h-15.3zM144.4 615.6h3.5v3.5h-3.5zM162.1 615.6h6.4v3.5h-6.4zM188.7 615.6h6.4v3.5h-6.4zM82.3 618.5h3.5v3.5h-3.5zM117.8 618.5h3.5v3.5h-3.5zM129.6 618.5h3.5v3.5h-3.5zM135.5 618.5h3.5v3.5h-3.5zM153.3 618.5h3.5v3.5h-3.5zM162.1 618.5h3.5v3.5h-3.5zM168.0 618.5h3.5v3.5h-3.5zM174.0 618.5h3.5v3.5h-3.5zM182.8 618.5h3.5v3.5h-3.5zM188.7 618.5h3.5v3.5h-3.5zM200.6 618.5h3.5v3.5h-3.5zM212.4 618.5h3.5v3.5h-3.5zM70.5 621.5h3.5v3.5h-3.5zM88.2 621.5h6.4v3.5h-6.4zM103.0 621.5h3.5v3.5h-3.5zM138.5 621.5h12.3v3.5h-12.3zM159.2 621.5h3.5v3.5h-3.5zM165.1 621.5h3.5v3.5h-3.5zM176.9 621.5h6.4v3.5h-6.4zM85.3 624.4h3.5v3.5h-3.5zM94.1 624.4h3.5v3.5h-3.5zM103.0 624.4h3.5v3.5h-3.5zM117.8 624.4h3.5v3.5h-3.5zM132.6 624.4h3.5v3.5h-3.5zM162.1 624.4h15.3v3.5h-15.3zM191.7 624.4h3.5v3.5h-3.5zM100.1 627.4h3.5v3.5h-3.5zM182.8 627.4h6.4v3.5h-6.4zM79.4 630.3h3.5v3.5h-3.5zM88.2 630.3h6.4v3.5h-6.4zM111.9 630.3h6.4v3.5h-6.4zM141.4 630.3h6.4v3.5h-6.4zM159.2 630.3h3.5v3.5h-3.5zM179.9 630.3h3.5v3.5h-3.5zM197.6 630.3h3.5v3.5h-3.5zM70.5 633.3h6.4v3.5h-6.4zM79.4 633.3h3.5v3.5h-3.5zM85.3 633.3h3.5v3.5h-3.5zM100.1 633.3h3.5v3.5h-3.5zM123.7 633.3h3.5v3.5h-3.5zM156.2 633.3h3.5v3.5h-3.5zM194.7 633.3h3.5v3.5h-3.5zM76.4 636.3h6.4v3.5h-6.4zM97.1 636.3h6.4v3.5h-6.4zM106.0 636.3h3.5v3.5h-3.5zM159.2 636.3h3.5v3.5h-3.5zM165.1 636.3h3.5v3.5h-3.5zM171.0 636.3h3.5v3.5h-3.5zM176.9 636.3h3.5v3.5h-3.5zM191.7 636.3h6.4v3.5h-6.4zM73.5 639.2h6.4v3.5h-6.4zM111.9 639.2h3.5v3.5h-3.5zM117.8 639.2h3.5v3.5h-3.5zM147.4 639.2h3.5v3.5h-3.5zM182.8 639.2h3.5v3.5h-3.5zM206.5 639.2h3.5v3.5h-3.5zM97.1 642.2h3.5v3.5h-3.5zM179.9 642.2h3.5v3.5h-3.5zM185.8 642.2h3.5v3.5h-3.5zM191.7 642.2h3.5v3.5h-3.5zM200.6 642.2h3.5v3.5h-3.5zM82.3 645.1h6.4v3.5h-6.4zM103.0 645.1h6.4v3.5h-6.4zM114.8 645.1h3.5v3.5h-3.5zM120.8 645.1h3.5v3.5h-3.5zM126.7 645.1h3.5v3.5h-3.5zM135.5 645.1h3.5v3.5h-3.5zM179.9 645.1h3.5v3.5h-3.5zM70.5 648.1h3.5v3.5h-3.5zM141.4 648.1h3.5v3.5h-3.5zM147.4 648.1h3.5v3.5h-3.5zM153.3 648.1h3.5v3.5h-3.5zM182.8 648.1h6.4v3.5h-6.4zM76.4 651.0h3.5v3.5h-3.5zM132.6 651.0h3.5v3.5h-3.5zM138.5 651.0h3.5v3.5h-3.5zM162.1 651.0h3.5v3.5h-3.5zM174.0 651.0h6.4v3.5h-6.4zM188.7 651.0h6.4v3.5h-6.4zM212.4 651.0h6.4v3.5h-6.4zM85.3 654.0h3.5v3.5h-3.5zM94.1 654.0h9.4v3.5h-9.4zM123.7 654.0h3.5v3.5h-3.5zM138.5 654.0h3.5v3.5h-3.5zM144.4 654.0h3.5v3.5h-3.5zM162.1 654.0h3.5v3.5h-3.5zM176.9 654.0h3.5v3.5h-3.5zM197.6 654.0h3.5v3.5h-3.5zM73.5 657.0h3.5v3.5h-3.5zM79.4 657.0h3.5v3.5h-3.5zM88.2 657.0h3.5v3.5h-3.5zM126.7 657.0h3.5v3.5h-3.5zM153.3 657.0h3.5v3.5h-3.5zM191.7 657.0h3.5v3.5h-3.5zM212.4 657.0h3.5v3.5h-3.5zM108.9 659.9h3.5v3.5h-3.5zM123.7 659.9h3.5v3.5h-3.5zM144.4 659.9h3.5v3.5h-3.5zM153.3 659.9h3.5v3.5h-3.5zM165.1 659.9h3.5v3.5h-3.5zM179.9 659.9h6.4v3.5h-6.4zM188.7 659.9h3.5v3.5h-3.5zM194.7 659.9h3.5v3.5h-3.5zM100.1 662.9h6.4v3.5h-6.4zM114.8 662.9h3.5v3.5h-3.5zM141.4 662.9h3.5v3.5h-3.5zM171.0 662.9h3.5v3.5h-3.5zM91.2 665.8h3.5v3.5h-3.5zM108.9 665.8h3.5v3.5h-3.5zM126.7 665.8h3.5v3.5h-3.5zM159.2 665.8h3.5v3.5h-3.5zM174.0 665.8h3.5v3.5h-3.5zM215.3 665.8h3.5v3.5h-3.5zM76.4 668.8h3.5v3.5h-3.5zM97.1 668.8h9.4v3.5h-9.4zM111.9 668.8h3.5v3.5h-3.5zM135.5 668.8h6.4v3.5h-6.4zM150.3 668.8h3.5v3.5h-3.5zM162.1 668.8h3.5v3.5h-3.5zM176.9 668.8h3.5v3.5h-3.5zM182.8 668.8h3.5v3.5h-3.5zM197.6 668.8h3.5v3.5h-3.5zM79.4 671.7h3.5v3.5h-3.5zM88.2 671.7h6.4v3.5h-6.4zM132.6 671.7h3.5v3.5h-3.5zM138.5 671.7h3.5v3.5h-3.5zM144.4 671.7h3.5v3.5h-3.5zM171.0 671.7h6.4v3.5h-6.4zM70.5 674.7h6.4v3.5h-6.4zM103.0 674.7h3.5v3.5h-3.5zM108.9 674.7h3.5v3.5h-3.5zM114.8 674.7h3.5v3.5h-3.5zM141.4 674.7h3.5v3.5h-3.5zM162.1 674.7h3.5v3.5h-3.5zM182.8 674.7h3.5v3.5h-3.5zM79.4 677.6h6.4v3.5h-6.4zM88.2 677.6h3.5v3.5h-3.5zM103.0 677.6h3.5v3.5h-3.5zM138.5 677.6h3.5v3.5h-3.5zM150.3 677.6h6.4v3.5h-6.4zM212.4 677.6h3.5v3.5h-3.5z"/>
<path fill="#d8d8d8" d="M79.4 532.8h3.5v3.5h-3.5zM123.7 532.8h3.5v3.5h-3.5zM132.6 532.8h9.4v3.5h-9.4zM144.4 532.8h6.4v3.5h-6.4zM168.0 532.8h3.5v3.5h-3.5zM182.8 532.8h3.5v3.5h-3.5zM194.7 532.8h3.5v3.5h-3.5zM212.4 532.8h3.5v3.5h-3.5zM85.3 535.8h3.5v3.5h-3.5zM70.5 538.7h3.5v3.5h-3.5zM168.0 538.7h3.5v3.5h-3.5zM194.7 538.7h3.5v3.5h-3.5zM70.5 541.7h3.5v3.5h-3.5zM103.0 541.7h3.5v3.5h-3.5zM162.1 541.7h6.4v3.5h-6.4zM171.0 541.7h3.5v3.5h-3.5zM176.9 541.7h3.5v3.5h-3.5zM206.5 541.7h3.5v3.5h-3.5zM82.3 544.6h3.5v3.5h-3.5zM176.9 544.6h3.5v3.5h-3.5zM182.8 544.6h3.5v3.5h-3.5zM191.7 544.6h3.5v3.5h-3.5zM200.6 544.6h3.5v3.5h-3.5zM209.4 544.6h3.5v3.5h-3.5zM100.1 547.6h3.5v3.5h-3.5zM179.9 547.6h3.5v3.5h-3.5zM185.8 547.6h3.5v3.5h-3.5zM200.6 547.6h3.5v3.5h-3.5zM153.3 550.5h3.5v3.5h-3.5zM174.0 550.5h6.4v3.5h-6.4zM203.5 550.5h3.5v3.5h-3.5zM82.3 553.5h3.5v3.5h-3.5zM88.2 553.5h3.5v3.5h-3.5zM165.1 553.5h3.5v3.5h-3.5zM174.0 553.5h3.5v3.5h-3.5zM174.0 556.4h3.5v3.5h-3.5zM179.9 556.4h6.4v3.5h-6.4zM197.6 556.4h3.5v3.5h-3.5zM206.5 556.4h3.5v3.5h-3.5zM212.4 556.4h3.5v3.5h-3.5zM79.4 559.4h3.5v3.5h-3.5zM85.3 559.4h3.5v3.5h-3.5zM174.0 559.4h3.5v3.5h-3.5zM203.5 559.4h3.5v3.5h-3.5zM76.4 562.4h3.5v3.5h-3.5zM82.3 562.4h3.5v3.5h-3.5zM185.8 562.4h3.5v3.5h-3.5zM197.6 562.4h3.5v3.5h-3.5zM76.4 565.3h3.5v3.5h-3.5zM194.7 565.3h3.5v3.5h-3.5zM194.7 568.3h3.5v3.5h-3.5zM70.5 571.2h3.5v3.5h-3.5zM79.4 571.2h3.5v3.5h-3.5zM206.5 571.2h3.5v3.5h-3.5zM73.5 574.2h3.5v3.5h-3.5zM85.3 574.2h3.5v3.5h-3.5zM176.9 574.2h3.5v3.5h-3.5zM185.8 574.2h3.5v3.5h-3.5zM191.7 574.2h3.5v3.5h-3.5zM212.4 574.2h3.5v3.5h-3.5zM162.1 577.1h3.5v3.5h-3.5zM179.9 577.1h9.4v3.5h-9.4zM191.7 577.1h3.5v3.5h-3.5zM85.3 580.1h3.5v3.5h-3.5zM168.0 580.1h6.4v3.5h-6.4zM188.7 580.1h3.5v3.5h-3.5zM209.4 580.1h3.5v3.5h-3.5zM73.5 583.1h3.5v3.5h-3.5zM179.9 583.1h3.5v3.5h-3.5zM209.4 583.1h3.5v3.5h-3.5zM76.4 586.0h3.5v3.5h-3.5zM168.0 586.0h3.5v3.5h-3.5zM174.0 586.0h3.5v3.5h-3.5zM191.7 586.0h3.5v3.5h-3.5zM209.4 586.0h3.5v3.5h-3.5zM70.5 589.0h3.5v3.5h-3.5zM76.4 589.0h6.4v3.5h-6.4zM165.1 589.0h3.5v3.5h-3.5zM176.9 589.0h3.5v3.5h-3.5zM194.7 589.0h6.4v3.5h-6.4zM212.4 589.0h3.5v3.5h-3.5zM85.3 591.9h3.5v3.5h-3.5zM194.7 591.9h3.5v3.5h-3.5zM215.3 591.9h3.5v3.5h-3.5zM82.3 594.9h3.5v3.5h-3.5zM162.1 594.9h3.5v3.5h-3.5zM215.3 594.9h3.5v3.5h-3.5zM188.7 597.8h3.5v3.5h-3.5zM76.4 600.8h3.5v3.5h-3.5zM82.3 600.8h6.4v3.5h-6.4zM100.1 600.8h6.4v3.5h-6.4zM188.7 600.8h3.5v3.5h-3.5zM212.4 600.8h3.5v3.5h-3.5zM88.2 603.7h6.4v3.5h-6.4zM100.1 603.7h3.5v3.5h-3.5zM156.2 603.7h9.4v3.5h-9.4zM168.0 603.7h3.5v3.5h-3.5zM176.9 603.7h3.5v3.5h-3.5zM212.4 603.7h3.5v3.5h-3.5zM70.5 606.7h3.5v3.5h-3.5zM76.4 606.7h3.5v3.5h-3.5zM94.1 606.7h6.4v3.5h-6.4zM203.5 606.7h3.5v3.5h-3.5zM76.4 609.7h9.4v3.5h-9.4zM97.1 609.7h6.4v3.5h-6.4zM114.8 609.7h3.5v3.5h-3.5zM159.2 609.7h3.5v3.5h-3.5zM179.9 609.7h3.5v3.5h-3.5zM188.7 609.7h3.5v3.5h-3.5zM200.6 609.7h3.5v3.5h-3.5zM206.5 609.7h6.4v3.5h-6.4zM94.1 612.6h3.5v3.5h-3.5zM103.0 612.6h3.5v3.5h-3.5zM108.9 612.6h3.5v3.5h-3.5zM176.9 612.6h3.5v3.5h-3.5zM194.7 612.6h3.5v3.5h-3.5zM88.2 615.6h3.5v3.5h-3.5zM94.1 615.6h3.5v3.5h-3.5zM132.6 615.6h6.4v3.5h-6.4zM147.4 615.6h3.5v3.5h-3.5zM197.6 615.6h3.5v3.5h-3.5zM212.4 615.6h3.5v3.5h-3.5zM73.5 618.5h3.5v3.5h-3.5zM85.3 618.5h3.5v3.5h-3.5zM91.2 618.5h3.5v3.5h-3.5zM106.0 618.5h6.4v3.5h-6.4zM147.4 618.5h3.5v3.5h-3.5zM171.0 618.5h3.5v3.5h-3.5zM185.8 618.5h3.5v3.5h-3.5zM209.4 618.5h3.5v3.5h-3.5zM79.4 621.5h3.5v3.5h-3.5zM100.1 621.5h3.5v3.5h-3.5zM106.0 621.5h3.5v3.5h-3.5zM126.7 621.5h3.5v3.5h-3.5zM150.3 621.5h3.5v3.5h-3.5zM171.0 621.5h3.5v3.5h-3.5zM188.7 621.5h6.4v3.5h-6.4zM88.2 624.4h3.5v3.5h-3.5zM97.1 624.4h3.5v3.5h-3.5zM144.4 624.4h3.5v3.5h-3.5zM179.9 624.4h3.5v3.5h-3.5zM185.8 624.4h3.5v3.5h-3.5zM209.4 624.4h3.5v3.5h-3.5zM88.2 627.4h6.4v3.5h-6.4zM114.8 627.4h3.5v3.5h-3.5zM162.1 627.4h6.4v3.5h-6.4zM171.0 627.4h3.5v3.5h-3.5zM197.6 627.4h3.5v3.5h-3.5zM206.5 627.4h3.5v3.5h-3.5zM97.1 630.3h6.4v3.5h-6.4zM171.0 630.3h3.5v3.5h-3.5zM176.9 630.3h3.5v3.5h-3.5zM194.7 630.3h3.5v3.5h-3.5zM215.3 630.3h3.5v3.5h-3.5zM106.0 633.3h3.5v3.5h-3.5zM120.8 633.3h3.5v3.5h-3.5zM174.0 633.3h3.5v3.5h-3.5zM188.7 633.3h3.5v3.5h-3.5zM70.5 636.3h3.5v3.5h-3.5zM85.3 636.3h3.5v3.5h-3.5zM108.9 636.3h3.5v3.5h-3.5zM162.1 636.3h3.5v3.5h-3.5zM185.8 636.3h3.5v3.5h-3.5zM91.2 639.2h3.5v3.5h-3.5zM100.1 639.2h9.4v3.5h-9.4zM153.3 639.2h6.4v3.5h-6.4zM162.1 639.2h3.5v3.5h-3.5zM168.0 639.2h3.5v3.5h-3.5zM209.4 639.2h6.4v3.5h-6.4zM76.4 642.2h3.5v3.5h-3.5zM82.3 642.2h3.5v3.5h-3.5zM94.1 642.2h3.5v3.5h-3.5zM103.0 642.2h3.5v3.5h-3.5zM120.8 642.2h3.5v3.5h-3.5zM159.2 642.2h3.5v3.5h-3.5zM194.7 642.2h3.5v3.5h-3.5zM203.5 642.2h3.5v3.5h-3.5zM79.4 645.1h3.5v3.5h-3.5zM94.1 645.1h9.4v3.5h-9.4zM111.9 645.1h3.5v3.5h-3.5zM117.8 645.1h3.5v3.5h-3.5zM123.7 645.1h3.5v3.5h-3.5zM165.1 645.1h3.5v3.5h-3.5zM171.0 645.1h3.5v3.5h-3.5zM197.6 645.1h3.5v3.5h-3.5zM203.5 645.1h3.5v3.5h-3.5zM73.5 648.1h3.5v3.5h-3.5zM103.0 648.1h3.5v3.5h-3.5zM108.9 648.1h3.5v3.5h-3.5zM117.8 648.1h3.5v3.5h-3.5zM168.0 648.1h3.5v3.5h-3.5zM197.6 648.1h3.5v3.5h-3.5zM212.4 648.1h3.5v3.5h-3.5zM73.5 651.0h3.5v3.5h-3.5zM97.1 651.0h3.5v3.5h-3.5zM129.6 651.0h3.5v3.5h-3.5zM165.1 651.0h3.5v3.5h-3.5zM179.9 651.0h3.5v3.5h-3.5zM194.7 651.0h3.5v3.5h-3.5zM209.4 651.0h3.5v3.5h-3.5zM73.5 654.0h3.5v3.5h-3.5zM106.0 654.0h3.5v3.5h-3.5zM114.8 654.0h3.5v3.5h-3.5zM126.7 654.0h3.5v3.5h-3.5zM150.3 654.0h3.5v3.5h-3.5zM156.2 654.0h6.4v3.5h-6.4zM171.0 654.0h3.5v3.5h-3.5zM191.7 654.0h6.4v3.5h-6.4zM206.5 654.0h3.5v3.5h-3.5zM70.5 657.0h3.5v3.5h-3.5zM76.4 657.0h3.5v3.5h-3.5zM82.3 657.0h6.4v3.5h-6.4zM123.7 657.0h3.5v3.5h-3.5zM162.1 657.0h9.4v3.5h-9.4zM185.8 657.0h6.4v3.5h-6.4zM200.6 657.0h3.5v3.5h-3.5zM70.5 659.9h3.5v3.5h-3.5zM100.1 659.9h3.5v3.5h-3.5zM126.7 659.9h3.5v3.5h-3.5zM156.2 659.9h3.5v3.5h-3.5zM171.0 659.9h6.4v3.5h-6.4zM191.7 659.9h3.5v3.5h-3.5zM76.4 662.9h6.4v3.5h-6.4zM91.2 662.9h3.5v3.5h-3.5zM106.0 662.9h3.5v3.5h-3.5zM111.9 662.9h3.5v3.5h-3.5zM123.7 662.9h6.4v3.5h-6.4zM138.5 662.9h3.5v3.5h-3.5zM153.3 662.9h6.4v3.5h-6.4zM179.9 662.9h12.3v3.5h-12.3zM197.6 662.9h3.5v3.5h-3.5zM203.5 662.9h3.5v3.5h-3.5zM209.4 662.9h3.5v3.5h-3.5zM156.2 665.8h3.5v3.5h-3.5zM171.0 665.8h3.5v3.5h-3.5zM185.8 665.8h3.5v3.5h-3.5zM191.7 665.8h3.5v3.5h-3.5zM200.6 665.8h3.5v3.5h-3.5zM206.5 665.8h3.5v3.5h-3.5zM212.4 665.8h3.5v3.5h-3.5zM82.3 668.8h3.5v3.5h-3.5zM88.2 668.8h3.5v3.5h-3.5zM114.8 668.8h3.5v3.5h-3.5zM153.3 668.8h3.5v3.5h-3.5zM168.0 668.8h3.5v3.5h-3.5zM206.5 668.8h3.5v3.5h-3.5zM117.8 671.7h3.5v3.5h-3.5zM141.4 671.7h3.5v3.5h-3.5zM150.3 671.7h6.4v3.5h-6.4zM200.6 671.7h3.5v3.5h-3.5zM212.4 671.7h3.5v3.5h-3.5zM82.3 674.7h3.5v3.5h-3.5zM91.2 674.7h6.4v3.5h-6.4zM159.2 674.7h3.5v3.5h-3.5zM176.9 674.7h6.4v3.5h-6.4zM76.4 677.6h3.5v3.5h-3.5zM91.2 677.6h3.5v3.5h-3.5zM117.8 677.6h6.4v3.5h-6.4zM132.6 677.6h3.5v3.5h-3.5zM168.0 677.6h3.5v3.5h-3.5zM194.7 677.6h3.5v3.5h-3.5zM209.4 677.6h3.5v3.5h-3.5z"/>
<path fill="#b4b4b4" d="M82.3 532.8h3.5v3.5h-3.5zM91.2 532.8h12.3v3.5h-12.3zM108.9 532.8h3.5v3.5h-3.5zM129.6 532.8h3.5v3.5h-3.5zM159.2 532.8h6.4v3.5h-6.4zM176.9 532.8h3.5v3.5h-3.5zM106.0 535.8h9.4v3.5h-9.4zM138.5 535.8h6.4v3.5h-6.4zM150.3 535.8h3.5v3.5h-3.5zM156.2 535.8h3.5v3.5h-3.5zM171.0 535.8h3.5v3.5h-3.5zM194.7 535.8h3.5v3.5h-3.5zM209.4 535.8h3.5v3.5h-3.5zM94.1 538.7h6.4v3.5h-6.4zM103.0 538.7h3.5v3.5h-3.5zM114.8 538.7h9.4v3.5h-9.4zM141.4 538.7h3.5v3.5h-3.5zM171.0 538.7h3.5v3.5h-3.5zM188.7 538.7h3.5v3.5h-3.5zM203.5 538.7h3.5v3.5h-3.5zM212.4 538.7h3.5v3.5h-3.5zM82.3 541.7h3.5v3.5h-3.5zM135.5 541.7h3.5v3.5h-3.5zM147.4 541.7h3.5v3.5h-3.5zM174.0 541.7h3.5v3.5h-3.5zM209.4 541.7h3.5v3.5h-3.5zM73.5 544.6h6.4v3.5h-6.4zM103.0 544.6h6.4v3.5h-6.4zM141.4 544.6h12.3v3.5h-12.3zM212.4 544.6h3.5v3.5h-3.5zM70.5 547.6h3.5v3.5h-3.5zM79.4 547.6h6.4v3.5h-6.4zM94.1 547.6h3.5v3.5h-3.5zM103.0 547.6h3.5v3.5h-3.5zM182.8 547.6h3.5v3.5h-3.5zM215.3 547.6h3.5v3.5h-3.5zM79.4 550.5h3.5v3.5h-3.5zM94.1 550.5h3.5v3.5h-3.5zM106.0 550.5h3.5v3.5h-3.5zM162.1 550.5h9.4v3.5h-9.4zM188.7 550.5h6.4v3.5h-6.4zM197.6 550.5h3.5v3.5h-3.5zM212.4 550.5h6.4v3.5h-6.4zM73.5 553.5h3.5v3.5h-3.5zM79.4 553.5h3.5v3.5h-3.5zM100.1 553.5h3.5v3.5h-3.5zM156.2 553.5h3.5v3.5h-3.5zM162.1 553.5h3.5v3.5h-3.5zM168.0 553.5h6.4v3.5h-6.4zM197.6 553.5h3.5v3.5h-3.5zM153.3 556.4h3.5v3.5h-3.5zM185.8 556.4h3.5v3.5h-3.5zM203.5 556.4h3.5v3.5h-3.5zM209.4 556.4h3.5v3.5h-3.5zM76.4 559.4h3.5v3.5h-3.5zM100.1 559.4h3.5v3.5h-3.5zM153.3 559.4h3.5v3.5h-3.5zM168.0 559.4h3.5v3.5h-3.5zM176.9 559.4h3.5v3.5h-3.5zM185.8 559.4h3.5v3.5h-3.5zM215.3 559.4h3.5v3.5h-3.5zM85.3 562.4h3.5v3.5h-3.5zM91.2 562.4h3.5v3.5h-3.5zM159.2 562.4h6.4v3.5h-6.4zM171.0 562.4h3.5v3.5h-3.5zM194.7 562.4h3.5v3.5h-3.5zM200.6 562.4h6.4v3.5h-6.4zM79.4 565.3h3.5v3.5h-3.5zM85.3 565.3h3.5v3.5h-3.5zM200.6 565.3h3.5v3.5h-3.5zM162.1 568.3h6.4v3.5h-6.4zM171.0 568.3h3.5v3.5h-3.5zM176.9 568.3h3.5v3.5h-3.5zM203.5 568.3h3.5v3.5h-3.5zM162.1 571.2h3.5v3.5h-3.5zM174.0 571.2h6.4v3.5h-6.4zM212.4 571.2h6.4v3.5h-6.4zM91.2 574.2h6.4v3.5h-6.4zM203.5 574.2h3.5v3.5h-3.5zM209.4 574.2h3.5v3.5h-3.5zM70.5 577.1h3.5v3.5h-3.5zM76.4 577.1h3.5v3.5h-3.5zM85.3 577.1h3.5v3.5h-3.5zM94.1 577.1h3.5v3.5h-3.5zM165.1 577.1h3.5v3.5h-3.5zM206.5 577.1h3.5v3.5h-3.5zM76.4 580.1h9.4v3.5h-9.4zM88.2 580.1h3.5v3.5h-3.5zM182.8 580.1h3.5v3.5h-3.5zM85.3 583.1h3.5v3.5h-3.5zM168.0 583.1h3.5v3.5h-3.5zM191.7 583.1h3.5v3.5h-3.5zM97.1 586.0h3.5v3.5h-3.5zM179.9 586.0h3.5v3.5h-3.5zM203.5 586.0h3.5v3.5h-3.5zM73.5 589.0h3.5v3.5h-3.5zM94.1 589.0h6.4v3.5h-6.4zM162.1 589.0h3.5v3.5h-3.5zM179.9 589.0h6.4v3.5h-6.4zM82.3 591.9h3.5v3.5h-3.5zM88.2 591.9h3.5v3.5h-3.5zM103.0 591.9h3.5v3.5h-3.5zM165.1 591.9h9.4v3.5h-9.4zM88.2 594.9h3.5v3.5h-3.5zM94.1 594.9h3.5v3.5h-3.5zM168.0 594.9h3.5v3.5h-3.5zM188.7 594.9h3.5v3.5h-3.5zM200.6 594.9h3.5v3.5h-3.5zM194.7 597.8h3.5v3.5h-3.5zM212.4 597.8h3.5v3.5h-3.5zM106.0 600.8h3.5v3.5h-3.5zM156.2 600.8h6.4v3.5h-6.4zM209.4 600.8h3.5v3.5h-3.5zM106.0 603.7h3.5v3.5h-3.5zM194.7 603.7h6.4v3.5h-6.4zM203.5 603.7h3.5v3.5h-3.5zM106.0 606.7h6.4v3.5h-6.4zM114.8 606.7h3.5v3.5h-3.5zM144.4 606.7h9.4v3.5h-9.4zM159.2 606.7h3.5v3.5h-3.5zM179.9 606.7h3.5v3.5h-3.5zM197.6 606.7h3.5v3.5h-3.5zM106.0 609.7h6.4v3.5h-6.4zM138.5 609.7h3.5v3.5h-3.5zM147.4 609.7h3.5v3.5h-3.5zM212.4 609.7h6.4v3.5h-6.4zM76.4 612.6h6.4v3.5h-6.4zM126.7 612.6h3.5v3.5h-3.5zM156.2 612.6h12.3v3.5h-12.3zM188.7 612.6h3.5v3.5h-3.5zM197.6 612.6h3.5v3.5h-3.5zM82.3 615.6h3.5v3.5h-3.5zM108.9 615.6h3.5v3.5h-3.5zM126.7 615.6h3.5v3.5h-3.5zM138.5 615.6h3.5v3.5h-3.5zM150.3 615.6h3.5v3.5h-3.5zM156.2 615.6h3.5v3.5h-3.5zM168.0 615.6h3.5v3.5h-3.5zM179.9 615.6h3.5v3.5h-3.5zM200.6 615.6h3.5v3.5h-3.5zM70.5 618.5h3.5v3.5h-3.5zM79.4 618.5h3.5v3.5h-3.5zM94.1 618.5h3.5v3.5h-3.5zM100.1 618.5h3.5v3.5h-3.5zM126.7 618.5h3.5v3.5h-3.5zM138.5 618.5h3.5v3.5h-3.5zM150.3 618.5h3.5v3.5h-3.5zM176.9 618.5h6.4v3.5h-6.4zM191.7 618.5h3.5v3.5h-3.5zM82.3 621.5h3.5v3.5h-3.5zM97.1 621.5h3.5v3.5h-3.5zM120.8 621.5h3.5v3.5h-3.5zM132.6 621.5h3.5v3.5h-3.5zM79.4 624.4h3.5v3.5h-3.5zM111.9 624.4h3.5v3.5h-3.5zM123.7 624.4h3.5v3.5h-3.5zM129.6 624.4h3.5v3.5h-3.5zM141.4 624.4h3.5v3.5h-3.5zM176.9 624.4h3.5v3.5h-3.5zM194.7 624.4h3.5v3.5h-3.5zM212.4 624.4h3.5v3.5h-3.5zM73.5 627.4h3.5v3.5h-3.5zM94.1 627.4h3.5v3.5h-3.5zM123.7 627.4h3.5v3.5h-3.5zM135.5 627.4h3.5v3.5h-3.5zM144.4 627.4h3.5v3.5h-3.5zM159.2 627.4h3.5v3.5h-3.5zM168.0 627.4h3.5v3.5h-3.5zM200.6 627.4h3.5v3.5h-3.5zM209.4 627.4h3.5v3.5h-3.5zM106.0 630.3h6.4v3.5h-6.4zM129.6 630.3h3.5v3.5h-3.5zM150.3 630.3h3.5v3.5h-3.5zM156.2 630.3h3.5v3.5h-3.5zM82.3 633.3h3.5v3.5h-3.5zM103.0 633.3h3.5v3.5h-3.5zM108.9 633.3h3.5v3.5h-3.5zM114.8 633.3h3.5v3.5h-3.5zM150.3 633.3h3.5v3.5h-3.5zM185.8 633.3h3.5v3.5h-3.5zM82.3 636.3h3.5v3.5h-3.5zM126.7 636.3h3.5v3.5h-3.5zM156.2 636.3h3.5v3.5h-3.5zM168.0 636.3h3.5v3.5h-3.5zM174.0 636.3h3.5v3.5h-3.5zM200.6 636.3h3.5v3.5h-3.5zM215.3 636.3h3.5v3.5h-3.5zM70.5 639.2h3.5v3.5h-3.5zM79.4 639.2h6.4v3.5h-6.4zM88.2 639.2h3.5v3.5h-3.5zM94.1 639.2h3.5v3.5h-3.5zM114.8 639.2h3.5v3.5h-3.5zM141.4 639.2h3.5v3.5h-3.5zM165.1 639.2h3.5v3.5h-3.5zM179.9 639.2h3.5v3.5h-3.5zM191.7 639.2h3.5v3.5h-3.5zM147.4 642.2h3.5v3.5h-3.5zM162.1 642.2h3.5v3.5h-3.5zM197.6 642.2h3.5v3.5h-3.5zM209.4 642.2h6.4v3.5h-6.4zM88.2 645.1h3.5v3.5h-3.5zM129.6 645.1h6.4v3.5h-6.4zM150.3 645.1h6.4v3.5h-6.4zM159.2 645.1h6.4v3.5h-6.4zM174.0 645.1h3.5v3.5h-3.5zM191.7 645.1h3.5v3.5h-3.5zM206.5 645.1h3.5v3.5h-3.5zM79.4 648.1h3.5v3.5h-3.5zM85.3 648.1h3.5v3.5h-3.5zM91.2 648.1h3.5v3.5h-3.5zM97.1 648.1h3.5v3.5h-3.5zM129.6 648.1h3.5v3.5h-3.5zM135.5 648.1h3.5v3.5h-3.5zM144.4 648.1h3.5v3.5h-3.5zM150.3 648.1h3.5v3.5h-3.5zM156.2 648.1h3.5v3.5h-3.5zM85.3 651.0h6.4v3.5h-6.4zM94.1 651.0h3.5v3.5h-3.5zM117.8 651.0h3.5v3.5h-3.5zM203.5 651.0h3.5v3.5h-3.5zM79.4 654.0h6.4v3.5h-6.4zM103.0 654.0h3.5v3.5h-3.5zM141.4 654.0h3.5v3.5h-3.5zM147.4 654.0h3.5v3.5h-3.5zM153.3 654.0h3.5v3.5h-3.5zM174.0 654.0h3.5v3.5h-3.5zM200.6 654.0h3.5v3.5h-3.5zM212.4 654.0h3.5v3.5h-3.5zM106.0 657.0h3.5v3.5h-3.5zM129.6 657.0h3.5v3.5h-3.5zM176.9 657.0h3.5v3.5h-3.5zM203.5 657.0h3.5v3.5h-3.5zM73.5 659.9h3.5v3.5h-3.5zM82.3 659.9h3.5v3.5h-3.5zM94.1 659.9h6.4v3.5h-6.4zM103.0 659.9h6.4v3.5h-6.4zM114.8 659.9h3.5v3.5h-3.5zM159.2 659.9h6.4v3.5h-6.4zM197.6 659.9h3.5v3.5h-3.5zM209.4 659.9h3.5v3.5h-3.5zM82.3 662.9h3.5v3.5h-3.5zM108.9 662.9h3.5v3.5h-3.5zM117.8 662.9h3.5v3.5h-3.5zM132.6 662.9h3.5v3.5h-3.5zM194.7 662.9h3.5v3.5h-3.5zM70.5 665.8h3.5v3.5h-3.5zM79.4 665.8h3.5v3.5h-3.5zM120.8 665.8h3.5v3.5h-3.5zM129.6 665.8h3.5v3.5h-3.5zM141.4 665.8h3.5v3.5h-3.5zM147.4 665.8h6.4v3.5h-6.4zM188.7 665.8h3.5v3.5h-3.5zM194.7 665.8h3.5v3.5h-3.5zM106.0 668.8h3.5v3.5h-3.5zM126.7 668.8h3.5v3.5h-3.5zM156.2 668.8h3.5v3.5h-3.5zM165.1 668.8h3.5v3.5h-3.5zM174.0 668.8h3.5v3.5h-3.5zM179.9 668.8h3.5v3.5h-3.5zM194.7 668.8h3.5v3.5h-3.5zM76.4 671.7h3.5v3.5h-3.5zM123.7 671.7h3.5v3.5h-3.5zM147.4 671.7h3.5v3.5h-3.5zM209.4 671.7h3.5v3.5h-3.5zM100.1 674.7h3.5v3.5h-3.5zM123.7 674.7h6.4v3.5h-6.4zM144.4 674.7h9.4v3.5h-9.4zM156.2 674.7h3.5v3.5h-3.5zM188.7 674.7h3.5v3.5h-3.5zM197.6 674.7h6.4v3.5h-6.4zM97.1 677.6h3.5v3.5h-3.5zM123.7 677.6h3.5v3.5h-3.5zM141.4 677.6h6.4v3.5h-6.4zM156.2 677.6h3.5v3.5h-3.5zM171.0 677.6h6.4v3.5h-6.4zM203.5 677.6h3.5v3.5h-3.5z"/>
<path fill="#f0f0f0" d="M88.2 532.8h3.5v3.5h-3.5zM174.0 532.8h3.5v3.5h-3.5zM200.6 532.8h3.5v3.5h-3.5zM76.4 538.7h3.5v3.5h-3.5zM197.6 538.7h6.4v3.5h-6.4zM73.5 541.7h3.5v3.5h-3.5zM188.7 541.7h3.5v3.5h-3.5zM88.2 544.6h3.5v3.5h-3.5zM165.1 544.6h3.5v3.5h-3.5zM176.9 547.6h3.5v3.5h-3.5zM85.3 550.5h3.5v3.5h-3.5zM85.3 553.5h3.5v3.5h-3.5zM215.3 553.5h3.5v3.5h-3.5zM188.7 565.3h3.5v3.5h-3.5zM76.4 571.2h3.5v3.5h-3.5zM82.3 571.2h3.5v3.5h-3.5zM200.6 571.2h3.5v3.5h-3.5zM209.4 571.2h3.5v3.5h-3.5zM70.5 583.1h3.5v3.5h-3.5zM174.0 583.1h6.4v3.5h-6.4zM182.8 583.1h6.4v3.5h-6.4zM82.3 586.0h3.5v3.5h-3.5zM191.7 589.0h3.5v3.5h-3.5zM200.6 589.0h3.5v3.5h-3.5zM185.8 591.9h3.5v3.5h-3.5zM85.3 594.9h3.5v3.5h-3.5zM194.7 594.9h3.5v3.5h-3.5zM73.5 600.8h3.5v3.5h-3.5zM176.9 600.8h3.5v3.5h-3.5zM79.4 603.7h3.5v3.5h-3.5zM179.9 603.7h3.5v3.5h-3.5zM153.3 609.7h3.5v3.5h-3.5zM171.0 609.7h6.4v3.5h-6.4zM70.5 615.6h3.5v3.5h-3.5zM182.8 615.6h3.5v3.5h-3.5zM156.2 618.5h3.5v3.5h-3.5zM215.3 618.5h3.5v3.5h-3.5zM76.4 621.5h3.5v3.5h-3.5zM123.7 621.5h3.5v3.5h-3.5zM162.1 621.5h3.5v3.5h-3.5zM106.0 624.4h3.5v3.5h-3.5zM150.3 624.4h3.5v3.5h-3.5zM215.3 624.4h3.5v3.5h-3.5zM97.1 627.4h3.5v3.5h-3.5zM82.3 630.3h3.5v3.5h-3.5zM185.8 630.3h3.5v3.5h-3.5zM88.2 633.3h3.5v3.5h-3.5zM197.6 636.3h3.5v3.5h-3.5zM209.4 636.3h3.5v3.5h-3.5zM203.5 639.2h3.5v3.5h-3.5zM73.5 642.2h3.5v3.5h-3.5zM85.3 642.2h9.4v3.5h-9.4zM100.1 642.2h3.5v3.5h-3.5zM165.1 642.2h3.5v3.5h-3.5zM73.5 645.1h3.5v3.5h-3.5zM168.0 645.1h3.5v3.5h-3.5zM194.7 645.1h3.5v3.5h-3.5zM76.4 648.1h3.5v3.5h-3.5zM82.3 648.1h3.5v3.5h-3.5zM103.0 651.0h3.5v3.5h-3.5zM156.2 651.0h3.5v3.5h-3.5zM197.6 651.0h3.5v3.5h-3.5zM188.7 654.0h3.5v3.5h-3.5zM203.5 654.0h3.5v3.5h-3.5zM108.9 657.0h3.5v3.5h-3.5zM159.2 657.0h3.5v3.5h-3.5zM174.0 657.0h3.5v3.5h-3.5zM206.5 659.9h3.5v3.5h-3.5zM159.2 662.9h3.5v3.5h-3.5zM88.2 665.8h3.5v3.5h-3.5zM144.4 665.8h3.5v3.5h-3.5zM209.4 665.8h3.5v3.5h-3.5zM188.7 668.8h3.5v3.5h-3.5zM129.6 671.7h3.5v3.5h-3.5zM165.1 671.7h6.4v3.5h-6.4zM191.7 671.7h3.5v3.5h-3.5zM203.5 671.7h3.5v3.5h-3.5zM85.3 674.7h3.5v3.5h-3.5zM106.0 674.7h3.5v3.5h-3.5zM117.8 674.7h3.5v3.5h-3.5zM153.3 674.7h3.5v3.5h-3.5zM168.0 674.7h3.5v3.5h-3.5zM70.5 677.6h3.5v3.5h-3.5z"/>
<path fill="#fcfcfc" d="M103.0 532.8h3.5v3.5h-3.5zM70.5 535.8h3.5v3.5h-3.5zM82.3 535.8h3.5v3.5h-3.5zM197.6 535.8h3.5v3.5h-3.5zM209.4 538.7h3.5v3.5h-3.5zM79.4 541.7h3.5v3.5h-3.5zM85.3 544.6h3.5v3.5h-3.5zM188.7 544.6h3.5v3.5h-3.5zM209.4 550.5h3.5v3.5h-3.5zM182.8 553.5h3.5v3.5h-3.5zM179.9 559.4h3.5v3.5h-3.5zM168.0 562.4h3.5v3.5h-3.5zM191.7 565.3h3.5v3.5h-3.5zM215.3 565.3h3.5v3.5h-3.5zM174.0 568.3h3.5v3.5h-3.5zM73.5 586.0h3.5v3.5h-3.5zM209.4 591.9h3.5v3.5h-3.5zM79.4 594.9h3.5v3.5h-3.5zM212.4 612.6h3.5v3.5h-3.5zM85.3 615.6h3.5v3.5h-3.5zM206.5 615.6h3.5v3.5h-3.5zM76.4 618.5h3.5v3.5h-3.5zM174.0 621.5h3.5v3.5h-3.5zM188.7 624.4h3.5v3.5h-3.5zM153.3 627.4h3.5v3.5h-3.5zM159.2 633.3h3.5v3.5h-3.5zM171.0 633.3h3.5v3.5h-3.5zM215.3 642.2h3.5v3.5h-3.5zM212.4 645.1h3.5v3.5h-3.5zM100.1 648.1h3.5v3.5h-3.5zM182.8 651.0h3.5v3.5h-3.5zM200.6 651.0h3.5v3.5h-3.5zM182.8 657.0h3.5v3.5h-3.5zM206.5 657.0h3.5v3.5h-3.5zM120.8 662.9h3.5v3.5h-3.5zM200.6 668.8h3.5v3.5h-3.5zM70.5 671.7h3.5v3.5h-3.5zM82.3 671.7h3.5v3.5h-3.5zM165.1 677.6h3.5v3.5h-3.5z"/>
<path fill="#909090" d="M120.8 532.8h3.5v3.5h-3.5zM129.6 541.7h3.5v3.5h-3.5zM150.3 541.7h3.5v3.5h-3.5zM108.9 544.6h3.5v3.5h-3.5zM117.8 544.6h3.5v3.5h-3.5zM150.3 547.6h3.5v3.5h-3.5zM156.2 547.6h3.5v3.5h-3.5zM179.9 550.5h3.5v3.5h-3.5zM106.0 553.5h3.5v3.5h-3.5zM156.2 556.4h3.5v3.5h-3.5zM97.1 562.4h6.4v3.5h-6.4zM100.1 565.3h3.5v3.5h-3.5zM159.2 565.3h3.5v3.5h-3.5zM79.4 568.3h3.5v3.5h-3.5zM100.1 568.3h3.5v3.5h-3.5zM156.2 568.3h3.5v3.5h-3.5zM162.1 574.2h3.5v3.5h-3.5zM171.0 574.2h3.5v3.5h-3.5zM82.3 577.1h3.5v3.5h-3.5zM100.1 577.1h3.5v3.5h-3.5zM197.6 580.1h3.5v3.5h-3.5zM156.2 586.0h3.5v3.5h-3.5zM103.0 589.0h3.5v3.5h-3.5zM156.2 591.9h3.5v3.5h-3.5zM156.2 594.9h3.5v3.5h-3.5zM150.3 600.8h3.5v3.5h-3.5zM111.9 603.7h3.5v3.5h-3.5zM144.4 603.7h3.5v3.5h-3.5zM150.3 603.7h3.5v3.5h-3.5zM117.8 606.7h3.5v3.5h-3.5zM129.6 606.7h6.4v3.5h-6.4zM141.4 606.7h3.5v3.5h-3.5zM132.6 609.7h3.5v3.5h-3.5zM147.4 624.4h3.5v3.5h-3.5zM147.4 627.4h3.5v3.5h-3.5zM156.2 627.4h3.5v3.5h-3.5zM135.5 630.3h3.5v3.5h-3.5zM129.6 633.3h3.5v3.5h-3.5zM135.5 633.3h6.4v3.5h-6.4zM129.6 636.3h6.4v3.5h-6.4zM141.4 636.3h3.5v3.5h-3.5zM132.6 639.2h3.5v3.5h-3.5zM135.5 642.2h3.5v3.5h-3.5zM141.4 651.0h3.5v3.5h-3.5zM141.4 657.0h3.5v3.5h-3.5zM111.9 659.9h3.5v3.5h-3.5zM132.6 665.8h3.5v3.5h-3.5z"/>
<path fill="#9c9c9c" d="M150.3 532.8h3.5v3.5h-3.5zM206.5 532.8h3.5v3.5h-3.5zM103.0 535.8h3.5v3.5h-3.5zM135.5 535.8h3.5v3.5h-3.5zM153.3 535.8h3.5v3.5h-3.5zM174.0 535.8h3.5v3.5h-3.5zM123.7 538.7h3.5v3.5h-3.5zM138.5 538.7h3.5v3.5h-3.5zM174.0 538.7h3.5v3.5h-3.5zM182.8 538.7h3.5v3.5h-3.5zM76.4 541.7h3.5v3.5h-3.5zM111.9 541.7h3.5v3.5h-3.5zM141.4 541.7h3.5v3.5h-3.5zM114.8 544.6h3.5v3.5h-3.5zM168.0 544.6h3.5v3.5h-3.5zM85.3 547.6h3.5v3.5h-3.5zM106.0 547.6h9.4v3.5h-9.4zM103.0 550.5h3.5v3.5h-3.5zM100.1 556.4h3.5v3.5h-3.5zM94.1 559.4h6.4v3.5h-6.4zM156.2 559.4h3.5v3.5h-3.5zM94.1 562.4h3.5v3.5h-3.5zM153.3 562.4h6.4v3.5h-6.4zM174.0 562.4h3.5v3.5h-3.5zM162.1 565.3h3.5v3.5h-3.5zM212.4 565.3h3.5v3.5h-3.5zM97.1 568.3h3.5v3.5h-3.5zM159.2 568.3h3.5v3.5h-3.5zM197.6 568.3h3.5v3.5h-3.5zM215.3 568.3h3.5v3.5h-3.5zM85.3 571.2h3.5v3.5h-3.5zM97.1 571.2h3.5v3.5h-3.5zM156.2 571.2h3.5v3.5h-3.5zM179.9 571.2h3.5v3.5h-3.5zM82.3 574.2h3.5v3.5h-3.5zM182.8 574.2h3.5v3.5h-3.5zM88.2 577.1h3.5v3.5h-3.5zM168.0 577.1h3.5v3.5h-3.5zM94.1 580.1h3.5v3.5h-3.5zM156.2 580.1h3.5v3.5h-3.5zM203.5 580.1h3.5v3.5h-3.5zM97.1 583.1h6.4v3.5h-6.4zM100.1 586.0h3.5v3.5h-3.5zM100.1 594.9h3.5v3.5h-3.5zM206.5 594.9h3.5v3.5h-3.5zM70.5 597.8h3.5v3.5h-3.5zM106.0 597.8h3.5v3.5h-3.5zM153.3 597.8h9.4v3.5h-9.4zM171.0 600.8h3.5v3.5h-3.5zM103.0 603.7h3.5v3.5h-3.5zM147.4 603.7h3.5v3.5h-3.5zM138.5 606.7h3.5v3.5h-3.5zM206.5 606.7h3.5v3.5h-3.5zM85.3 609.7h3.5v3.5h-3.5zM126.7 609.7h6.4v3.5h-6.4zM141.4 609.7h3.5v3.5h-3.5zM123.7 612.6h3.5v3.5h-3.5zM141.4 612.6h3.5v3.5h-3.5zM203.5 615.6h3.5v3.5h-3.5zM123.7 618.5h3.5v3.5h-3.5zM203.5 618.5h3.5v3.5h-3.5zM185.8 621.5h3.5v3.5h-3.5zM209.4 621.5h3.5v3.5h-3.5zM159.2 624.4h3.5v3.5h-3.5zM132.6 627.4h3.5v3.5h-3.5zM150.3 627.4h3.5v3.5h-3.5zM76.4 630.3h3.5v3.5h-3.5zM132.6 630.3h3.5v3.5h-3.5zM206.5 630.3h3.5v3.5h-3.5zM215.3 633.3h3.5v3.5h-3.5zM94.1 636.3h3.5v3.5h-3.5zM123.7 636.3h3.5v3.5h-3.5zM138.5 636.3h3.5v3.5h-3.5zM108.9 639.2h3.5v3.5h-3.5zM123.7 639.2h6.4v3.5h-6.4zM138.5 639.2h3.5v3.5h-3.5zM150.3 639.2h3.5v3.5h-3.5zM185.8 639.2h3.5v3.5h-3.5zM108.9 642.2h3.5v3.5h-3.5zM141.4 645.1h3.5v3.5h-3.5zM91.2 651.0h3.5v3.5h-3.5zM144.4 651.0h3.5v3.5h-3.5zM153.3 651.0h3.5v3.5h-3.5zM117.8 654.0h3.5v3.5h-3.5zM94.1 657.0h3.5v3.5h-3.5zM138.5 657.0h3.5v3.5h-3.5zM150.3 657.0h3.5v3.5h-3.5zM197.6 657.0h3.5v3.5h-3.5zM91.2 659.9h3.5v3.5h-3.5zM215.3 662.9h3.5v3.5h-3.5zM114.8 671.7h3.5v3.5h-3.5zM162.1 671.7h3.5v3.5h-3.5zM176.9 671.7h3.5v3.5h-3.5zM120.8 674.7h3.5v3.5h-3.5zM194.7 674.7h3.5v3.5h-3.5zM179.9 677.6h3.5v3.5h-3.5z"/>
<path fill="#a8a8a8" d="M114.8 535.8h6.4v3.5h-6.4zM123.7 535.8h3.5v3.5h-3.5zM129.6 535.8h6.4v3.5h-6.4zM100.1 538.7h3.5v3.5h-3.5zM108.9 538.7h3.5v3.5h-3.5zM126.7 538.7h6.4v3.5h-6.4zM106.0 541.7h3.5v3.5h-3.5zM117.8 541.7h9.4v3.5h-9.4zM138.5 541.7h3.5v3.5h-3.5zM144.4 541.7h3.5v3.5h-3.5zM153.3 541.7h3.5v3.5h-3.5zM185.8 541.7h3.5v3.5h-3.5zM97.1 544.6h3.5v3.5h-3.5zM153.3 544.6h3.5v3.5h-3.5zM159.2 544.6h6.4v3.5h-6.4zM203.5 544.6h3.5v3.5h-3.5zM147.4 547.6h3.5v3.5h-3.5zM197.6 547.6h3.5v3.5h-3.5zM91.2 550.5h3.5v3.5h-3.5zM100.1 550.5h3.5v3.5h-3.5zM185.8 550.5h3.5v3.5h-3.5zM94.1 553.5h6.4v3.5h-6.4zM153.3 553.5h3.5v3.5h-3.5zM159.2 553.5h3.5v3.5h-3.5zM91.2 556.4h3.5v3.5h-3.5zM103.0 556.4h3.5v3.5h-3.5zM194.7 556.4h3.5v3.5h-3.5zM73.5 559.4h3.5v3.5h-3.5zM159.2 559.4h6.4v3.5h-6.4zM200.6 559.4h3.5v3.5h-3.5zM73.5 562.4h3.5v3.5h-3.5zM88.2 562.4h3.5v3.5h-3.5zM209.4 562.4h3.5v3.5h-3.5zM91.2 565.3h3.5v3.5h-3.5zM97.1 565.3h3.5v3.5h-3.5zM156.2 565.3h3.5v3.5h-3.5zM168.0 568.3h3.5v3.5h-3.5zM91.2 571.2h3.5v3.5h-3.5zM159.2 571.2h3.5v3.5h-3.5zM182.8 571.2h3.5v3.5h-3.5zM197.6 571.2h3.5v3.5h-3.5zM159.2 574.2h3.5v3.5h-3.5zM165.1 574.2h6.4v3.5h-6.4zM73.5 577.1h3.5v3.5h-3.5zM156.2 577.1h6.4v3.5h-6.4zM197.6 577.1h3.5v3.5h-3.5zM212.4 577.1h3.5v3.5h-3.5zM91.2 580.1h3.5v3.5h-3.5zM194.7 580.1h3.5v3.5h-3.5zM79.4 583.1h6.4v3.5h-6.4zM159.2 583.1h3.5v3.5h-3.5zM85.3 586.0h3.5v3.5h-3.5zM159.2 586.0h6.4v3.5h-6.4zM182.8 586.0h3.5v3.5h-3.5zM88.2 589.0h3.5v3.5h-3.5zM159.2 589.0h3.5v3.5h-3.5zM174.0 589.0h3.5v3.5h-3.5zM100.1 591.9h3.5v3.5h-3.5zM159.2 591.9h6.4v3.5h-6.4zM174.0 591.9h3.5v3.5h-3.5zM191.7 591.9h3.5v3.5h-3.5zM203.5 594.9h3.5v3.5h-3.5zM88.2 597.8h3.5v3.5h-3.5zM103.0 597.8h3.5v3.5h-3.5zM79.4 600.8h3.5v3.5h-3.5zM153.3 600.8h3.5v3.5h-3.5zM191.7 600.8h3.5v3.5h-3.5zM108.9 603.7h3.5v3.5h-3.5zM114.8 603.7h3.5v3.5h-3.5zM100.1 606.7h3.5v3.5h-3.5zM111.9 606.7h3.5v3.5h-3.5zM123.7 606.7h3.5v3.5h-3.5zM153.3 606.7h6.4v3.5h-6.4zM168.0 606.7h3.5v3.5h-3.5zM174.0 606.7h3.5v3.5h-3.5zM117.8 609.7h6.4v3.5h-6.4zM135.5 609.7h3.5v3.5h-3.5zM144.4 609.7h3.5v3.5h-3.5zM203.5 609.7h3.5v3.5h-3.5zM82.3 612.6h3.5v3.5h-3.5zM111.9 612.6h3.5v3.5h-3.5zM120.8 612.6h3.5v3.5h-3.5zM129.6 612.6h3.5v3.5h-3.5zM138.5 612.6h3.5v3.5h-3.5zM144.4 612.6h3.5v3.5h-3.5zM150.3 612.6h3.5v3.5h-3.5zM185.8 612.6h3.5v3.5h-3.5zM79.4 615.6h3.5v3.5h-3.5zM153.3 615.6h3.5v3.5h-3.5zM194.7 615.6h3.5v3.5h-3.5zM215.3 615.6h3.5v3.5h-3.5zM103.0 618.5h3.5v3.5h-3.5zM132.6 618.5h3.5v3.5h-3.5zM141.4 618.5h3.5v3.5h-3.5zM94.1 621.5h3.5v3.5h-3.5zM108.9 621.5h9.4v3.5h-9.4zM135.5 621.5h3.5v3.5h-3.5zM194.7 621.5h3.5v3.5h-3.5zM215.3 621.5h3.5v3.5h-3.5zM114.8 624.4h3.5v3.5h-3.5zM153.3 624.4h3.5v3.5h-3.5zM197.6 624.4h3.5v3.5h-3.5zM206.5 624.4h3.5v3.5h-3.5zM70.5 627.4h3.5v3.5h-3.5zM126.7 627.4h6.4v3.5h-6.4zM141.4 627.4h3.5v3.5h-3.5zM85.3 630.3h3.5v3.5h-3.5zM103.0 630.3h3.5v3.5h-3.5zM117.8 630.3h3.5v3.5h-3.5zM123.7 630.3h3.5v3.5h-3.5zM138.5 630.3h3.5v3.5h-3.5zM147.4 630.3h3.5v3.5h-3.5zM162.1 630.3h6.4v3.5h-6.4zM174.0 630.3h3.5v3.5h-3.5zM91.2 633.3h6.4v3.5h-6.4zM117.8 633.3h3.5v3.5h-3.5zM126.7 633.3h3.5v3.5h-3.5zM147.4 633.3h3.5v3.5h-3.5zM162.1 633.3h3.5v3.5h-3.5zM197.6 633.3h3.5v3.5h-3.5zM120.8 636.3h3.5v3.5h-3.5zM147.4 636.3h3.5v3.5h-3.5zM179.9 636.3h6.4v3.5h-6.4zM206.5 636.3h3.5v3.5h-3.5zM129.6 639.2h3.5v3.5h-3.5zM144.4 639.2h3.5v3.5h-3.5zM174.0 639.2h3.5v3.5h-3.5zM197.6 639.2h6.4v3.5h-6.4zM79.4 642.2h3.5v3.5h-3.5zM126.7 642.2h6.4v3.5h-6.4zM138.5 642.2h9.4v3.5h-9.4zM171.0 642.2h3.5v3.5h-3.5zM176.9 642.2h3.5v3.5h-3.5zM76.4 645.1h3.5v3.5h-3.5zM108.9 645.1h3.5v3.5h-3.5zM138.5 645.1h3.5v3.5h-3.5zM147.4 645.1h3.5v3.5h-3.5zM156.2 645.1h3.5v3.5h-3.5zM123.7 648.1h6.4v3.5h-6.4zM132.6 648.1h3.5v3.5h-3.5zM138.5 648.1h3.5v3.5h-3.5zM200.6 648.1h3.5v3.5h-3.5zM79.4 651.0h3.5v3.5h-3.5zM108.9 651.0h9.4v3.5h-9.4zM120.8 651.0h3.5v3.5h-3.5zM135.5 651.0h3.5v3.5h-3.5zM150.3 651.0h3.5v3.5h-3.5zM159.2 651.0h3.5v3.5h-3.5zM70.5 654.0h3.5v3.5h-3.5zM76.4 654.0h3.5v3.5h-3.5zM91.2 654.0h3.5v3.5h-3.5zM182.8 654.0h6.4v3.5h-6.4zM209.4 654.0h3.5v3.5h-3.5zM103.0 657.0h3.5v3.5h-3.5zM111.9 657.0h3.5v3.5h-3.5zM120.8 657.0h3.5v3.5h-3.5zM179.9 657.0h3.5v3.5h-3.5zM209.4 657.0h3.5v3.5h-3.5zM85.3 659.9h3.5v3.5h-3.5zM138.5 659.9h6.4v3.5h-6.4zM185.8 659.9h3.5v3.5h-3.5zM215.3 659.9h3.5v3.5h-3.5zM94.1 662.9h3.5v3.5h-3.5zM144.4 662.9h3.5v3.5h-3.5zM150.3 662.9h3.5v3.5h-3.5zM165.1 662.9h3.5v3.5h-3.5zM111.9 665.8h3.5v3.5h-3.5zM153.3 665.8h3.5v3.5h-3.5zM197.6 665.8h3.5v3.5h-3.5zM85.3 668.8h3.5v3.5h-3.5zM91.2 668.8h3.5v3.5h-3.5zM132.6 668.8h3.5v3.5h-3.5zM147.4 668.8h3.5v3.5h-3.5zM85.3 671.7h3.5v3.5h-3.5zM111.9 671.7h3.5v3.5h-3.5zM120.8 671.7h3.5v3.5h-3.5zM179.9 671.7h3.5v3.5h-3.5zM94.1 677.6h3.5v3.5h-3.5zM159.2 677.6h6.4v3.5h-6.4zM182.8 677.6h3.5v3.5h-3.5z"/>
<path fill="#787878" d="M126.7 541.7h3.5v3.5h-3.5zM123.7 544.6h6.4v3.5h-6.4zM138.5 544.6h3.5v3.5h-3.5zM114.8 547.6h3.5v3.5h-3.5zM111.9 550.5h3.5v3.5h-3.5zM144.4 550.5h3.5v3.5h-3.5zM150.3 556.4h3.5v3.5h-3.5zM106.0 559.4h3.5v3.5h-3.5zM103.0 562.4h3.5v3.5h-3.5zM103.0 565.3h3.5v3.5h-3.5zM103.0 568.3h3.5v3.5h-3.5zM153.3 571.2h3.5v3.5h-3.5zM100.1 574.2h3.5v3.5h-3.5zM156.2 583.1h3.5v3.5h-3.5zM106.0 589.0h3.5v3.5h-3.5zM153.3 591.9h3.5v3.5h-3.5zM153.3 594.9h3.5v3.5h-3.5zM114.8 600.8h3.5v3.5h-3.5zM147.4 600.8h3.5v3.5h-3.5zM138.5 603.7h3.5v3.5h-3.5zM135.5 606.7h3.5v3.5h-3.5zM141.4 633.3h3.5v3.5h-3.5zM144.4 636.3h3.5v3.5h-3.5zM132.6 642.2h3.5v3.5h-3.5z"/>
<path fill="#848484" d="M132.6 541.7h3.5v3.5h-3.5zM111.9 544.6h3.5v3.5h-3.5zM135.5 544.6h3.5v3.5h-3.5zM108.9 550.5h3.5v3.5h-3.5zM147.4 550.5h6.4v3.5h-6.4zM108.9 553.5h3.5v3.5h-3.5zM147.4 553.5h6.4v3.5h-6.4zM103.0 559.4h3.5v3.5h-3.5zM153.3 565.3h3.5v3.5h-3.5zM100.1 571.2h3.5v3.5h-3.5zM97.1 574.2h3.5v3.5h-3.5zM156.2 574.2h3.5v3.5h-3.5zM159.2 580.1h3.5v3.5h-3.5zM103.0 586.0h3.5v3.5h-3.5zM156.2 589.0h3.5v3.5h-3.5zM106.0 591.9h3.5v3.5h-3.5zM106.0 594.9h3.5v3.5h-3.5zM108.9 597.8h6.4v3.5h-6.4zM108.9 600.8h6.4v3.5h-6.4zM117.8 603.7h3.5v3.5h-3.5zM141.4 603.7h3.5v3.5h-3.5zM120.8 606.7h3.5v3.5h-3.5zM126.7 606.7h3.5v3.5h-3.5zM123.7 609.7h3.5v3.5h-3.5zM144.4 633.3h3.5v3.5h-3.5zM135.5 636.3h3.5v3.5h-3.5zM135.5 639.2h3.5v3.5h-3.5z"/>
<path fill="#6c6c6c" d="M120.8 544.6h3.5v3.5h-3.5zM129.6 544.6h6.4v3.5h-6.4zM117.8 547.6h3.5v3.5h-3.5zM135.5 547.6h12.3v3.5h-12.3zM141.4 550.5h3.5v3.5h-3.5zM144.4 553.5h3.5v3.5h-3.5zM106.0 556.4h3.5v3.5h-3.5zM150.3 562.4h3.5v3.5h-3.5zM153.3 568.3h3.5v3.5h-3.5zM103.0 571.2h3.5v3.5h-3.5zM153.3 574.2h3.5v3.5h-3.5zM153.3 577.1h3.5v3.5h-3.5zM100.1 580.1h6.4v3.5h-6.4zM103.0 583.1h3.5v3.5h-3.5zM153.3 589.0h3.5v3.5h-3.5zM108.9 594.9h3.5v3.5h-3.5zM150.3 597.8h3.5v3.5h-3.5zM120.8 603.7h3.5v3.5h-3.5zM132.6 633.3h3.5v3.5h-3.5z"/>
<path fill="#606060" d="M120.8 547.6h6.4v3.5h-6.4zM129.6 547.6h3.5v3.5h-3.5zM114.8 550.5h3.5v3.5h-3.5zM138.5 550.5h3.5v3.5h-3.5zM111.9 553.5h3.5v3.5h-3.5zM147.4 556.4h3.5v3.5h-3.5zM150.3 559.4h3.5v3.5h-3.5zM150.3 565.3h3.5v3.5h-3.5zM153.3 580.1h3.5v3.5h-3.5zM106.0 586.0h3.5v3.5h-3.5zM153.3 586.0h3.5v3.5h-3.5zM117.8 600.8h3.5v3.5h-3.5zM123.7 603.7h6.4v3.5h-6.4z"/>
<path fill="#545454" d="M126.7 547.6h3.5v3.5h-3.5zM108.9 556.4h3.5v3.5h-3.5zM147.4 559.4h3.5v3.5h-3.5zM106.0 565.3h3.5v3.5h-3.5zM106.0 580.1h3.5v3.5h-3.5zM153.3 583.1h3.5v3.5h-3.5zM150.3 594.9h3.5v3.5h-3.5zM114.8 597.8h3.5v3.5h-3.5zM147.4 597.8h3.5v3.5h-3.5zM129.6 603.7h9.4v3.5h-9.4z"/>
<path fill="#484848" d="M132.6 547.6h3.5v3.5h-3.5zM117.8 550.5h3.5v3.5h-3.5zM135.5 550.5h3.5v3.5h-3.5zM141.4 553.5h3.5v3.5h-3.5zM144.4 556.4h3.5v3.5h-3.5zM106.0 562.4h3.5v3.5h-3.5zM150.3 568.3h3.5v3.5h-3.5zM103.0 574.2h3.5v3.5h-3.5zM103.0 577.1h3.5v3.5h-3.5zM111.9 594.9h3.5v3.5h-3.5zM120.8 600.8h3.5v3.5h-3.5zM144.4 600.8h3.5v3.5h-3.5z"/>
<path fill="#303030" d="M120.8 550.5h6.4v3.5h-6.4zM132.6 550.5h3.5v3.5h-3.5zM108.9 559.4h3.5v3.5h-3.5zM108.9 562.4h3.5v3.5h-3.5zM106.0 571.2h3.5v3.5h-3.5zM106.0 574.2h3.5v3.5h-3.5zM150.3 574.2h3.5v3.5h-3.5zM111.9 591.9h3.5v3.5h-3.5zM117.8 597.8h3.5v3.5h-3.5zM126.7 600.8h3.5v3.5h-3.5zM138.5 600.8h3.5v3.5h-3.5z"/>
<path fill="#242424" d="M126.7 550.5h6.4v3.5h-6.4zM141.4 556.4h3.5v3.5h-3.5zM144.4 559.4h3.5v3.5h-3.5zM147.4 565.3h3.5v3.5h-3.5zM106.0 577.1h3.5v3.5h-3.5zM150.3 577.1h3.5v3.5h-3.5zM108.9 586.0h3.5v3.5h-3.5zM150.3 589.0h3.5v3.5h-3.5zM114.8 594.9h3.5v3.5h-3.5zM147.4 594.9h3.5v3.5h-3.5zM120.8 597.8h3.5v3.5h-3.5zM144.4 597.8h3.5v3.5h-3.5zM129.6 600.8h3.5v3.5h-3.5zM135.5 600.8h3.5v3.5h-3.5z"/>
<path fill="#3c3c3c" d="M114.8 553.5h3.5v3.5h-3.5zM138.5 553.5h3.5v3.5h-3.5zM111.9 556.4h3.5v3.5h-3.5zM147.4 562.4h3.5v3.5h-3.5zM106.0 568.3h3.5v3.5h-3.5zM150.3 571.2h3.5v3.5h-3.5zM106.0 583.1h3.5v3.5h-3.5zM108.9 589.0h3.5v3.5h-3.5zM108.9 591.9h3.5v3.5h-3.5zM150.3 591.9h3.5v3.5h-3.5zM123.7 600.8h3.5v3.5h-3.5zM141.4 600.8h3.5v3.5h-3.5z"/>
<path fill="#181818" d="M117.8 553.5h3.5v3.5h-3.5zM114.8 556.4h3.5v3.5h-3.5zM111.9 559.4h3.5v3.5h-3.5zM108.9 565.3h3.5v3.5h-3.5zM147.4 568.3h3.5v3.5h-3.5zM150.3 580.1h3.5v3.5h-3.5zM150.3 583.1h3.5v3.5h-3.5zM150.3 586.0h3.5v3.5h-3.5zM132.6 600.8h3.5v3.5h-3.5z"/>
<path fill="#0c0c0c" d="M120.8 553.5h3.5v3.5h-3.5zM135.5 553.5h3.5v3.5h-3.5zM144.4 562.4h3.5v3.5h-3.5zM108.9 583.1h3.5v3.5h-3.5zM111.9 589.0h3.5v3.5h-3.5zM117.8 594.9h3.5v3.5h-3.5z"/>
<path fill="#000000" d="M123.7 553.5h12.3v3.5h-12.3zM117.8 556.4h24.1v3.5h-24.1zM114.8 559.4h30.1v3.5h-30.1zM111.9 562.4h33.0v3.5h-33.0zM111.9 565.3h36.0v3.5h-36.0zM108.9 568.3h38.9v3.5h-38.9zM108.9 571.2h41.9v3.5h-41.9zM108.9 574.2h41.9v3.5h-41.9zM108.9 577.1h41.9v3.5h-41.9zM108.9 580.1h41.9v3.5h-41.9zM111.9 583.1h38.9v3.5h-38.9zM111.9 586.0h38.9v3.5h-38.9zM114.8 589.0h36.0v3.5h-36.0zM114.8 591.9h36.0v3.5h-36.0zM120.8 594.9h27.1v3.5h-27.1zM123.7 597.8h21.2v3.5h-21.2z"/>
<circle cx="165.4" cy="554.9" r="12.2" fill="none" stroke="#666" stroke-width="0.9"/>
<circle cx="184.5" cy="569.1" r="12.2" fill="none" stroke="#666" stroke-width="0.9"/>
<circle cx="163.6" cy="578.7" r="12.2" fill="none" stroke="#666" stroke-width="0.9"/>
<circle cx="182.5" cy="593.1" r="12.2" fill="none" stroke="#666" stroke-width="0.9"/>
<circle cx="180.8" cy="616.5" r="12.2" fill="none" stroke="#666" stroke-width="0.9"/>
<circle cx="178.3" cy="640.2" r="12.2" fill="none" stroke="#666" stroke-width="0.9"/>
<circle cx="156.5" cy="650.6" r="12.2" fill="none" stroke="#666" stroke-width="0.9"/>
<circle cx="135.2" cy="661.5" r="12.2" fill="none" stroke="#666" stroke-width="0.9"/>
<circle cx="115.4" cy="646.4" r="12.2" fill="none" stroke="#666" stroke-width="0.9"/>
<circle cx="94.9" cy="632.9" r="12.2" fill="none" stroke="#666" stroke-width="0.9"/>
<circle cx="97.7" cy="608.6" r="12.2" fill="none" stroke="#666" stroke-width="0.9"/>
<circle cx="99.4" cy="584.7" r="12.2" fill="none" stroke="#666" stroke-width="0.9"/>
<circle cx="122.1" cy="574.7" r="12.2" fill="none" stroke="#666" stroke-width="0.9"/>
<circle cx="138.9" cy="564.1" r="12.2" fill="none" stroke="#666" stroke-width="0.9"/>
<circle cx="117.0" cy="622.9" r="12.2" fill="none" stroke="#666" stroke-width="0.9"/>
<circle cx="136.9" cy="637.1" r="12.2" fill="none" stroke="#666" stroke-width="0.9"/>
<circle cx="159.0" cy="627.1" r="12.2" fill="none" stroke="#666" stroke-width="0.9"/>
<circle cx="119.0" cy="598.7" r="12.2" fill="none" stroke="#ff0000" stroke-width="1.5"/>
<circle cx="141.4" cy="589.2" r="12.2" fill="none" stroke="#00ff00" stroke-width="1.5"/>
<circle cx="160.4" cy="602.6" r="12.2" fill="none" stroke="#ffa500" stroke-width="1.5"/>
<circle cx="139.5" cy="612.3" r="12.2" fill="none" stroke="#0000ff" stroke-width="1.5"/>
<line x1="138.90" y1="606.90" x2="148.90" y2="606.90" stroke="#ff0000" stroke-width="1.3"/>
<line x1="143.90" y1="601.90" x2="143.90" y2="611.90" stroke="#ff0000" stroke-width="1.3"/>
<rect x="94.8" y="557.8" width="98.2" height="98.2" fill="none" stroke="#ff0000" stroke-width="1.4"/>
<text x="143.9" y="545.96" font-size="11" font-family="'Liberation Sans', sans-serif" fill="#ff0000" text-anchor="middle" stroke="#ff0000" stroke-width="0.1">N</text>
<text x="79.278" y="611.4" font-size="11" font-family="'Liberation Sans', sans-serif" fill="#ff0000" text-anchor="middle" stroke="#ff0000" stroke-width="0.1">E</text>
</g>
<rect x="70.5" y="532.8" width="147.8" height="147.4" fill="none" stroke="#222" stroke-width="1"/>
<line x1="67.00" y1="672.34" x2="70.50" y2="672.34" stroke="#000" stroke-width="0.9"/>
<text x="64.5" y="676.3399999999999" font-size="11" font-family="'Liberation Sans', sans-serif" text-anchor="end" stroke="#000" stroke-width="0.1">−4</text>
<line x1="78.46" y1="680.20" x2="78.46" y2="683.70" stroke="#000" stroke-width="0.9"/>
<text x="78.46000000000001" y="696" font-size="11" font-family="'Liberation Sans', sans-serif" text-anchor="middle" stroke="#000" stroke-width="0.1">−4</text>
<line x1="67.00" y1="639.62" x2="70.50" y2="639.62" stroke="#000" stroke-width="0.9"/>
<text x="64.5" y="643.62" font-size="11" font-family="'Liberation Sans', sans-serif" text-anchor="end" stroke="#000" stroke-width="0.1">−2</text>
<line x1="111.18" y1="680.20" x2="111.18" y2="683.70" stroke="#000" stroke-width="0.9"/>
<text x="111.18" y="696" font-size="11" font-family="'Liberation Sans', sans-serif" text-anchor="middle" stroke="#000" stroke-width="0.1">−2</text>
<line x1="67.00" y1="606.90" x2="70.50" y2="606.90" stroke="#000" stroke-width="0.9"/>
<text x="64.5" y="610.9" font-size="11" font-family="'Liberation Sans', sans-serif" text-anchor="end" stroke="#000" stroke-width="0.1">0</text>
<line x1="143.90" y1="680.20" x2="143.90" y2="683.70" stroke="#000" stroke-width="0.9"/>
<text x="143.9" y="696" font-size="11" font-family="'Liberation Sans', sans-serif" text-anchor="middle" stroke="#000" stroke-width="0.1">0</text>
<line x1="67.00" y1="574.18" x2="70.50" y2="574.18" stroke="#000" stroke-width="0.9"/>
<text x="64.5" y="578.18" font-size="11" font-family="'Liberation Sans', sans-serif" text-anchor="end" stroke="#000" stroke-width="0.1">2</text>
<line x1="176.62" y1="680.20" x2="176.62" y2="683.70" stroke="#000" stroke-width="0.9"/>
<text x="176.62" y="696" font-size="11" font-family="'Liberation Sans', sans-serif" text-anchor="middle" stroke="#000" stroke-width="0.1">2</text>
<line x1="67.00" y1="541.46" x2="70.50" y2="541.46" stroke="#000" stroke-width="0.9"/>
<text x="64.5" y="545.46" font-size="11" font-family="'Liberation Sans', sans-serif" text-anchor="end" stroke="#000" stroke-width="0.1">4</text>
<line x1="209.34" y1="680.20" x2="209.34" y2="683.70" stroke="#000" stroke-width="0.9"/>
<text x="209.34" y="696" font-size="11" font-family="'Liberation Sans', sans-serif" text-anchor="middle" stroke="#000" stroke-width="0.1">4</text>
<text x="329" y="525.7" font-size="12.5" font-family="'Liberation Sans', sans-serif" text-anchor="middle" textLength="83" lengthAdjust="spacingAndGlyphs" stroke="#000" stroke-width="0.1">Lineflux Map</text>
<clipPath id="pc1"><rect x="255.3" y="532.8" width="147.8" height="147.4"/></clipPath>
<g clip-path="url(#pc1)">
<path fill="#462c7a" d="M255.3 532.8h12.5v4.5h-12.5zM339.2 532.8h4.5v4.5h-4.5zM379.1 532.8h8.5v4.5h-8.5zM255.3 536.8h12.5v4.5h-12.5zM339.2 536.8h4.5v4.5h-4.5zM379.1 536.8h8.5v4.5h-8.5zM255.3 540.8h12.5v4.5h-12.5zM331.2 540.8h4.5v4.5h-4.5zM339.2 540.8h4.5v4.5h-4.5zM379.1 540.8h4.5v4.5h-4.5zM387.1 540.8h8.5v4.5h-8.5zM255.3 544.8h12.5v4.5h-12.5zM335.2 544.8h12.5v4.5h-12.5zM379.1 544.8h4.5v4.5h-4.5zM255.3 548.8h12.5v4.5h-12.5zM339.2 548.8h4.5v4.5h-4.5zM351.2 548.8h4.5v4.5h-4.5zM255.3 552.8h8.5v4.5h-8.5zM383.1 556.8h8.5v4.5h-8.5zM387.1 560.8h4.5v4.5h-4.5zM291.3 564.8h4.5v4.5h-4.5zM299.2 564.8h4.5v4.5h-4.5zM391.1 564.8h4.5v4.5h-4.5zM255.3 568.8h8.5v4.5h-8.5zM291.3 568.8h4.5v4.5h-4.5zM303.2 568.8h4.5v4.5h-4.5zM395.1 568.8h8.5v4.5h-8.5zM263.3 572.7h4.5v4.5h-4.5zM287.3 572.7h4.5v4.5h-4.5zM263.3 576.7h4.5v4.5h-4.5zM287.3 576.7h4.5v4.5h-4.5zM311.2 576.7h4.5v4.5h-4.5zM287.3 580.7h4.5v4.5h-4.5zM311.2 580.7h4.5v4.5h-4.5zM287.3 584.7h4.5v4.5h-4.5zM311.2 584.7h4.5v4.5h-4.5zM263.3 588.7h4.5v4.5h-4.5zM291.3 588.7h4.5v4.5h-4.5zM311.2 588.7h4.5v4.5h-4.5zM255.3 592.7h12.5v4.5h-12.5zM291.3 592.7h4.5v4.5h-4.5zM311.2 592.7h4.5v4.5h-4.5zM371.1 592.7h4.5v4.5h-4.5zM295.2 596.7h8.5v4.5h-8.5zM311.2 596.7h4.5v4.5h-4.5zM367.1 596.7h8.5v4.5h-8.5zM299.2 600.7h8.5v4.5h-8.5zM311.2 600.7h4.5v4.5h-4.5zM371.1 600.7h4.5v4.5h-4.5zM343.2 620.7h4.5v4.5h-4.5zM351.2 620.7h12.5v4.5h-12.5zM343.2 624.7h4.5v4.5h-4.5zM355.2 624.7h12.5v4.5h-12.5zM287.3 628.7h8.5v4.5h-8.5zM343.2 628.7h20.5v4.5h-20.5zM299.2 632.7h4.5v4.5h-4.5zM355.2 632.7h8.5v4.5h-8.5zM279.3 636.7h4.5v4.5h-4.5zM303.2 640.7h4.5v4.5h-4.5zM275.3 644.6h4.5v4.5h-4.5zM303.2 644.6h4.5v4.5h-4.5zM271.3 648.6h4.5v4.5h-4.5zM303.2 648.6h4.5v4.5h-4.5zM271.3 652.6h4.5v4.5h-4.5zM299.2 652.6h4.5v4.5h-4.5zM267.3 656.6h4.5v4.5h-4.5zM295.2 656.6h4.5v4.5h-4.5zM387.1 656.6h16.5v4.5h-16.5zM263.3 660.6h8.5v4.5h-8.5zM291.3 660.6h4.5v4.5h-4.5zM383.1 660.6h8.5v4.5h-8.5zM255.3 664.6h12.5v4.5h-12.5zM287.3 664.6h8.5v4.5h-8.5zM379.1 664.6h8.5v4.5h-8.5zM255.3 668.6h8.5v4.5h-8.5zM283.3 668.6h8.5v4.5h-8.5zM379.1 668.6h4.5v4.5h-4.5zM283.3 672.6h4.5v4.5h-4.5zM375.1 672.6h4.5v4.5h-4.5zM283.3 676.6h4.5v4.5h-4.5zM375.1 676.6h4.5v4.5h-4.5z"/>
<path fill="#424085" d="M267.3 532.8h8.5v4.5h-8.5zM327.2 532.8h4.5v4.5h-4.5zM375.1 532.8h4.5v4.5h-4.5zM387.1 532.8h8.5v4.5h-8.5zM267.3 536.8h8.5v4.5h-8.5zM327.2 536.8h4.5v4.5h-4.5zM375.1 536.8h4.5v4.5h-4.5zM387.1 536.8h8.5v4.5h-8.5zM267.3 540.8h4.5v4.5h-4.5zM343.2 540.8h4.5v4.5h-4.5zM375.1 540.8h4.5v4.5h-4.5zM395.1 540.8h8.5v4.5h-8.5zM267.3 544.8h4.5v4.5h-4.5zM331.2 544.8h4.5v4.5h-4.5zM347.2 544.8h8.5v4.5h-8.5zM375.1 544.8h4.5v4.5h-4.5zM267.3 548.8h4.5v4.5h-4.5zM335.2 548.8h4.5v4.5h-4.5zM375.1 548.8h4.5v4.5h-4.5zM263.3 552.8h4.5v4.5h-4.5zM347.2 552.8h4.5v4.5h-4.5zM379.1 552.8h4.5v4.5h-4.5zM255.3 556.8h8.5v4.5h-8.5zM295.2 556.8h4.5v4.5h-4.5zM291.3 560.8h4.5v4.5h-4.5zM299.2 560.8h4.5v4.5h-4.5zM255.3 564.8h8.5v4.5h-8.5zM287.3 564.8h4.5v4.5h-4.5zM387.1 564.8h4.5v4.5h-4.5zM263.3 568.8h4.5v4.5h-4.5zM287.3 568.8h4.5v4.5h-4.5zM307.2 568.8h4.5v4.5h-4.5zM391.1 568.8h4.5v4.5h-4.5zM267.3 572.7h4.5v4.5h-4.5zM279.3 572.7h8.5v4.5h-8.5zM311.2 572.7h4.5v4.5h-4.5zM395.1 572.7h8.5v4.5h-8.5zM267.3 576.7h4.5v4.5h-4.5zM279.3 576.7h8.5v4.5h-8.5zM267.3 580.7h4.5v4.5h-4.5zM279.3 580.7h8.5v4.5h-8.5zM267.3 584.7h4.5v4.5h-4.5zM283.3 584.7h4.5v4.5h-4.5zM371.1 584.7h4.5v4.5h-4.5zM267.3 588.7h4.5v4.5h-4.5zM283.3 588.7h8.5v4.5h-8.5zM367.1 588.7h8.5v4.5h-8.5zM267.3 592.7h4.5v4.5h-4.5zM283.3 592.7h8.5v4.5h-8.5zM367.1 592.7h4.5v4.5h-4.5zM255.3 596.7h12.5v4.5h-12.5zM283.3 596.7h12.5v4.5h-12.5zM363.2 596.7h4.5v4.5h-4.5zM287.3 600.7h12.5v4.5h-12.5zM363.2 600.7h8.5v4.5h-8.5zM295.2 604.7h20.5v4.5h-20.5zM363.2 604.7h12.5v4.5h-12.5zM351.2 612.7h12.5v4.5h-12.5zM343.2 616.7h28.5v4.5h-28.5zM339.2 620.7h4.5v4.5h-4.5zM363.2 620.7h8.5v4.5h-8.5zM339.2 624.7h4.5v4.5h-4.5zM367.1 624.7h4.5v4.5h-4.5zM283.3 628.7h4.5v4.5h-4.5zM295.2 628.7h8.5v4.5h-8.5zM339.2 628.7h4.5v4.5h-4.5zM363.2 628.7h8.5v4.5h-8.5zM279.3 632.7h4.5v4.5h-4.5zM303.2 632.7h4.5v4.5h-4.5zM343.2 632.7h12.5v4.5h-12.5zM363.2 632.7h4.5v4.5h-4.5zM303.2 636.7h4.5v4.5h-4.5zM347.2 636.7h20.5v4.5h-20.5zM275.3 640.7h4.5v4.5h-4.5zM307.2 640.7h4.5v4.5h-4.5zM355.2 640.7h8.5v4.5h-8.5zM271.3 644.6h4.5v4.5h-4.5zM307.2 644.6h4.5v4.5h-4.5zM267.3 648.6h4.5v4.5h-4.5zM307.2 648.6h4.5v4.5h-4.5zM383.1 648.6h4.5v4.5h-4.5zM267.3 652.6h4.5v4.5h-4.5zM303.2 652.6h4.5v4.5h-4.5zM379.1 652.6h24.5v4.5h-24.5zM263.3 656.6h4.5v4.5h-4.5zM299.2 656.6h4.5v4.5h-4.5zM375.1 656.6h12.5v4.5h-12.5zM255.3 660.6h8.5v4.5h-8.5zM295.2 660.6h4.5v4.5h-4.5zM371.1 660.6h12.5v4.5h-12.5zM295.2 664.6h4.5v4.5h-4.5zM371.1 664.6h8.5v4.5h-8.5zM291.3 668.6h4.5v4.5h-4.5zM371.1 668.6h8.5v4.5h-8.5zM287.3 672.6h4.5v4.5h-4.5zM371.1 672.6h4.5v4.5h-4.5zM287.3 676.6h4.5v4.5h-4.5zM371.1 676.6h4.5v4.5h-4.5z"/>
<path fill="#3b528a" d="M275.3 532.8h12.5v4.5h-12.5zM343.2 532.8h4.5v4.5h-4.5zM371.1 532.8h4.5v4.5h-4.5zM395.1 532.8h8.5v4.5h-8.5zM275.3 536.8h12.5v4.5h-12.5zM343.2 536.8h4.5v4.5h-4.5zM371.1 536.8h4.5v4.5h-4.5zM395.1 536.8h8.5v4.5h-8.5zM271.3 540.8h16.5v4.5h-16.5zM327.2 540.8h4.5v4.5h-4.5zM347.2 540.8h4.5v4.5h-4.5zM371.1 540.8h4.5v4.5h-4.5zM271.3 544.8h12.5v4.5h-12.5zM327.2 544.8h4.5v4.5h-4.5zM355.2 544.8h4.5v4.5h-4.5zM271.3 548.8h8.5v4.5h-8.5zM331.2 548.8h4.5v4.5h-4.5zM355.2 548.8h8.5v4.5h-8.5zM267.3 552.8h8.5v4.5h-8.5zM343.2 552.8h4.5v4.5h-4.5zM351.2 552.8h4.5v4.5h-4.5zM375.1 552.8h4.5v4.5h-4.5zM263.3 556.8h8.5v4.5h-8.5zM291.3 556.8h4.5v4.5h-4.5zM299.2 556.8h4.5v4.5h-4.5zM379.1 556.8h4.5v4.5h-4.5zM255.3 560.8h12.5v4.5h-12.5zM287.3 560.8h4.5v4.5h-4.5zM383.1 560.8h4.5v4.5h-4.5zM263.3 564.8h8.5v4.5h-8.5zM283.3 564.8h4.5v4.5h-4.5zM303.2 564.8h4.5v4.5h-4.5zM267.3 568.8h4.5v4.5h-4.5zM275.3 568.8h12.5v4.5h-12.5zM387.1 568.8h4.5v4.5h-4.5zM271.3 572.7h8.5v4.5h-8.5zM391.1 572.7h4.5v4.5h-4.5zM271.3 576.7h8.5v4.5h-8.5zM315.2 576.7h4.5v4.5h-4.5zM395.1 576.7h8.5v4.5h-8.5zM271.3 580.7h8.5v4.5h-8.5zM315.2 580.7h4.5v4.5h-4.5zM271.3 584.7h12.5v4.5h-12.5zM315.2 584.7h4.5v4.5h-4.5zM367.1 584.7h4.5v4.5h-4.5zM375.1 584.7h4.5v4.5h-4.5zM271.3 588.7h12.5v4.5h-12.5zM315.2 588.7h4.5v4.5h-4.5zM363.2 588.7h4.5v4.5h-4.5zM375.1 588.7h4.5v4.5h-4.5zM271.3 592.7h12.5v4.5h-12.5zM315.2 592.7h4.5v4.5h-4.5zM363.2 592.7h4.5v4.5h-4.5zM375.1 592.7h4.5v4.5h-4.5zM267.3 596.7h16.5v4.5h-16.5zM315.2 596.7h4.5v4.5h-4.5zM359.2 596.7h4.5v4.5h-4.5zM375.1 596.7h4.5v4.5h-4.5zM255.3 600.7h32.5v4.5h-32.5zM315.2 600.7h4.5v4.5h-4.5zM355.2 600.7h8.5v4.5h-8.5zM375.1 600.7h4.5v4.5h-4.5zM267.3 604.7h28.5v4.5h-28.5zM351.2 604.7h12.5v4.5h-12.5zM271.3 608.7h8.5v4.5h-8.5zM291.3 608.7h24.5v4.5h-24.5zM347.2 608.7h28.5v4.5h-28.5zM295.2 612.7h16.5v4.5h-16.5zM343.2 612.7h8.5v4.5h-8.5zM363.2 612.7h12.5v4.5h-12.5zM291.3 616.7h16.5v4.5h-16.5zM339.2 616.7h4.5v4.5h-4.5zM371.1 616.7h4.5v4.5h-4.5zM287.3 620.7h16.5v4.5h-16.5zM335.2 620.7h4.5v4.5h-4.5zM371.1 620.7h8.5v4.5h-8.5zM283.3 624.7h24.5v4.5h-24.5zM335.2 624.7h4.5v4.5h-4.5zM371.1 624.7h8.5v4.5h-8.5zM279.3 628.7h4.5v4.5h-4.5zM303.2 628.7h8.5v4.5h-8.5zM335.2 628.7h4.5v4.5h-4.5zM371.1 628.7h12.5v4.5h-12.5zM307.2 632.7h4.5v4.5h-4.5zM335.2 632.7h8.5v4.5h-8.5zM367.1 632.7h20.5v4.5h-20.5zM275.3 636.7h4.5v4.5h-4.5zM307.2 636.7h4.5v4.5h-4.5zM335.2 636.7h12.5v4.5h-12.5zM367.1 636.7h24.5v4.5h-24.5zM311.2 640.7h4.5v4.5h-4.5zM339.2 640.7h16.5v4.5h-16.5zM363.2 640.7h32.5v4.5h-32.5zM267.3 644.6h4.5v4.5h-4.5zM311.2 644.6h4.5v4.5h-4.5zM343.2 644.6h60.4v4.5h-60.4zM263.3 648.6h4.5v4.5h-4.5zM311.2 648.6h4.5v4.5h-4.5zM347.2 648.6h36.5v4.5h-36.5zM387.1 648.6h16.5v4.5h-16.5zM255.3 652.6h12.5v4.5h-12.5zM307.2 652.6h4.5v4.5h-4.5zM347.2 652.6h32.5v4.5h-32.5zM255.3 656.6h8.5v4.5h-8.5zM303.2 656.6h4.5v4.5h-4.5zM347.2 656.6h28.5v4.5h-28.5zM299.2 660.6h4.5v4.5h-4.5zM347.2 660.6h24.5v4.5h-24.5zM299.2 664.6h4.5v4.5h-4.5zM347.2 664.6h24.5v4.5h-24.5zM295.2 668.6h4.5v4.5h-4.5zM347.2 668.6h24.5v4.5h-24.5zM291.3 672.6h8.5v4.5h-8.5zM347.2 672.6h24.5v4.5h-24.5zM291.3 676.6h8.5v4.5h-8.5zM347.2 676.6h24.5v4.5h-24.5z"/>
<path fill="#34628d" d="M287.3 532.8h8.5v4.5h-8.5zM323.2 532.8h4.5v4.5h-4.5zM347.2 532.8h4.5v4.5h-4.5zM363.2 532.8h8.5v4.5h-8.5zM287.3 536.8h8.5v4.5h-8.5zM323.2 536.8h4.5v4.5h-4.5zM347.2 536.8h4.5v4.5h-4.5zM363.2 536.8h8.5v4.5h-8.5zM287.3 540.8h8.5v4.5h-8.5zM323.2 540.8h4.5v4.5h-4.5zM351.2 540.8h20.5v4.5h-20.5zM283.3 544.8h8.5v4.5h-8.5zM359.2 544.8h16.5v4.5h-16.5zM279.3 548.8h12.5v4.5h-12.5zM327.2 548.8h4.5v4.5h-4.5zM363.2 548.8h12.5v4.5h-12.5zM275.3 552.8h24.5v4.5h-24.5zM339.2 552.8h4.5v4.5h-4.5zM355.2 552.8h4.5v4.5h-4.5zM271.3 556.8h20.5v4.5h-20.5zM267.3 560.8h20.5v4.5h-20.5zM303.2 560.8h4.5v4.5h-4.5zM379.1 560.8h4.5v4.5h-4.5zM271.3 564.8h12.5v4.5h-12.5zM307.2 564.8h4.5v4.5h-4.5zM383.1 564.8h4.5v4.5h-4.5zM271.3 568.8h4.5v4.5h-4.5zM311.2 568.8h4.5v4.5h-4.5zM315.2 572.7h4.5v4.5h-4.5zM387.1 572.7h4.5v4.5h-4.5zM391.1 576.7h4.5v4.5h-4.5zM367.1 580.7h12.5v4.5h-12.5zM395.1 580.7h8.5v4.5h-8.5zM363.2 584.7h4.5v4.5h-4.5zM379.1 584.7h4.5v4.5h-4.5zM359.2 588.7h4.5v4.5h-4.5zM379.1 588.7h4.5v4.5h-4.5zM355.2 592.7h8.5v4.5h-8.5zM319.2 596.7h4.5v4.5h-4.5zM347.2 596.7h12.5v4.5h-12.5zM319.2 600.7h4.5v4.5h-4.5zM347.2 600.7h8.5v4.5h-8.5zM255.3 604.7h12.5v4.5h-12.5zM315.2 604.7h4.5v4.5h-4.5zM343.2 604.7h8.5v4.5h-8.5zM375.1 604.7h4.5v4.5h-4.5zM263.3 608.7h8.5v4.5h-8.5zM279.3 608.7h12.5v4.5h-12.5zM315.2 608.7h4.5v4.5h-4.5zM339.2 608.7h8.5v4.5h-8.5zM375.1 608.7h4.5v4.5h-4.5zM267.3 612.7h28.5v4.5h-28.5zM311.2 612.7h4.5v4.5h-4.5zM335.2 612.7h8.5v4.5h-8.5zM375.1 612.7h4.5v4.5h-4.5zM275.3 616.7h16.5v4.5h-16.5zM307.2 616.7h8.5v4.5h-8.5zM331.2 616.7h8.5v4.5h-8.5zM375.1 616.7h8.5v4.5h-8.5zM279.3 620.7h8.5v4.5h-8.5zM303.2 620.7h12.5v4.5h-12.5zM327.2 620.7h8.5v4.5h-8.5zM379.1 620.7h4.5v4.5h-4.5zM279.3 624.7h4.5v4.5h-4.5zM307.2 624.7h8.5v4.5h-8.5zM327.2 624.7h8.5v4.5h-8.5zM379.1 624.7h12.5v4.5h-12.5zM275.3 628.7h4.5v4.5h-4.5zM311.2 628.7h8.5v4.5h-8.5zM327.2 628.7h8.5v4.5h-8.5zM383.1 628.7h12.5v4.5h-12.5zM275.3 632.7h4.5v4.5h-4.5zM311.2 632.7h8.5v4.5h-8.5zM327.2 632.7h8.5v4.5h-8.5zM387.1 632.7h16.5v4.5h-16.5zM311.2 636.7h8.5v4.5h-8.5zM327.2 636.7h8.5v4.5h-8.5zM391.1 636.7h12.5v4.5h-12.5zM267.3 640.7h8.5v4.5h-8.5zM315.2 640.7h4.5v4.5h-4.5zM331.2 640.7h8.5v4.5h-8.5zM395.1 640.7h8.5v4.5h-8.5zM263.3 644.6h4.5v4.5h-4.5zM315.2 644.6h4.5v4.5h-4.5zM335.2 644.6h8.5v4.5h-8.5zM255.3 648.6h8.5v4.5h-8.5zM315.2 648.6h4.5v4.5h-4.5zM339.2 648.6h8.5v4.5h-8.5zM311.2 652.6h4.5v4.5h-4.5zM339.2 652.6h8.5v4.5h-8.5zM307.2 656.6h4.5v4.5h-4.5zM343.2 656.6h4.5v4.5h-4.5zM303.2 660.6h4.5v4.5h-4.5zM343.2 660.6h4.5v4.5h-4.5zM303.2 664.6h4.5v4.5h-4.5zM343.2 664.6h4.5v4.5h-4.5zM299.2 668.6h8.5v4.5h-8.5zM343.2 668.6h4.5v4.5h-4.5zM299.2 672.6h8.5v4.5h-8.5zM343.2 672.6h4.5v4.5h-4.5zM299.2 676.6h8.5v4.5h-8.5zM343.2 676.6h4.5v4.5h-4.5z"/>
<path fill="#2d728e" d="M295.2 532.8h4.5v4.5h-4.5zM351.2 532.8h12.5v4.5h-12.5zM295.2 536.8h4.5v4.5h-4.5zM351.2 536.8h12.5v4.5h-12.5zM295.2 540.8h4.5v4.5h-4.5zM291.3 544.8h8.5v4.5h-8.5zM323.2 544.8h4.5v4.5h-4.5zM291.3 548.8h8.5v4.5h-8.5zM323.2 548.8h4.5v4.5h-4.5zM299.2 552.8h4.5v4.5h-4.5zM335.2 552.8h4.5v4.5h-4.5zM359.2 552.8h16.5v4.5h-16.5zM303.2 556.8h4.5v4.5h-4.5zM347.2 556.8h8.5v4.5h-8.5zM375.1 556.8h4.5v4.5h-4.5zM379.1 564.8h4.5v4.5h-4.5zM383.1 568.8h4.5v4.5h-4.5zM387.1 576.7h4.5v4.5h-4.5zM319.2 580.7h4.5v4.5h-4.5zM363.2 580.7h4.5v4.5h-4.5zM379.1 580.7h16.5v4.5h-16.5zM319.2 584.7h4.5v4.5h-4.5zM359.2 584.7h4.5v4.5h-4.5zM383.1 584.7h12.5v4.5h-12.5zM319.2 588.7h4.5v4.5h-4.5zM347.2 588.7h12.5v4.5h-12.5zM383.1 588.7h4.5v4.5h-4.5zM319.2 592.7h4.5v4.5h-4.5zM347.2 592.7h8.5v4.5h-8.5zM379.1 592.7h4.5v4.5h-4.5zM343.2 596.7h4.5v4.5h-4.5zM379.1 596.7h4.5v4.5h-4.5zM323.2 600.7h4.5v4.5h-4.5zM339.2 600.7h8.5v4.5h-8.5zM379.1 600.7h4.5v4.5h-4.5zM319.2 604.7h4.5v4.5h-4.5zM339.2 604.7h4.5v4.5h-4.5zM379.1 604.7h4.5v4.5h-4.5zM255.3 608.7h8.5v4.5h-8.5zM319.2 608.7h4.5v4.5h-4.5zM331.2 608.7h8.5v4.5h-8.5zM379.1 608.7h4.5v4.5h-4.5zM263.3 612.7h4.5v4.5h-4.5zM315.2 612.7h8.5v4.5h-8.5zM327.2 612.7h8.5v4.5h-8.5zM379.1 612.7h4.5v4.5h-4.5zM267.3 616.7h8.5v4.5h-8.5zM315.2 616.7h16.5v4.5h-16.5zM383.1 616.7h4.5v4.5h-4.5zM275.3 620.7h4.5v4.5h-4.5zM315.2 620.7h12.5v4.5h-12.5zM383.1 620.7h12.5v4.5h-12.5zM275.3 624.7h4.5v4.5h-4.5zM315.2 624.7h12.5v4.5h-12.5zM391.1 624.7h12.5v4.5h-12.5zM319.2 628.7h8.5v4.5h-8.5zM395.1 628.7h8.5v4.5h-8.5zM271.3 632.7h4.5v4.5h-4.5zM319.2 632.7h8.5v4.5h-8.5zM267.3 636.7h8.5v4.5h-8.5zM319.2 636.7h8.5v4.5h-8.5zM263.3 640.7h4.5v4.5h-4.5zM319.2 640.7h12.5v4.5h-12.5zM255.3 644.6h8.5v4.5h-8.5zM319.2 644.6h4.5v4.5h-4.5zM327.2 644.6h8.5v4.5h-8.5zM331.2 648.6h8.5v4.5h-8.5zM315.2 652.6h4.5v4.5h-4.5zM335.2 652.6h4.5v4.5h-4.5zM335.2 656.6h8.5v4.5h-8.5zM307.2 660.6h4.5v4.5h-4.5zM339.2 660.6h4.5v4.5h-4.5zM307.2 664.6h4.5v4.5h-4.5zM339.2 664.6h4.5v4.5h-4.5zM307.2 668.6h4.5v4.5h-4.5zM339.2 668.6h4.5v4.5h-4.5zM307.2 672.6h8.5v4.5h-8.5zM339.2 672.6h4.5v4.5h-4.5zM307.2 676.6h8.5v4.5h-8.5zM339.2 676.6h4.5v4.5h-4.5z"/>
<path fill="#27818d" d="M299.2 532.8h4.5v4.5h-4.5zM319.2 532.8h4.5v4.5h-4.5zM299.2 536.8h4.5v4.5h-4.5zM319.2 536.8h4.5v4.5h-4.5zM299.2 540.8h4.5v4.5h-4.5zM319.2 540.8h4.5v4.5h-4.5zM299.2 544.8h4.5v4.5h-4.5zM319.2 544.8h4.5v4.5h-4.5zM299.2 548.8h4.5v4.5h-4.5zM303.2 552.8h4.5v4.5h-4.5zM331.2 552.8h4.5v4.5h-4.5zM343.2 556.8h4.5v4.5h-4.5zM355.2 556.8h4.5v4.5h-4.5zM307.2 560.8h4.5v4.5h-4.5zM375.1 560.8h4.5v4.5h-4.5zM311.2 564.8h4.5v4.5h-4.5zM315.2 568.8h4.5v4.5h-4.5zM379.1 568.8h4.5v4.5h-4.5zM319.2 572.7h4.5v4.5h-4.5zM375.1 572.7h12.5v4.5h-12.5zM319.2 576.7h4.5v4.5h-4.5zM363.2 576.7h24.5v4.5h-24.5zM359.2 580.7h4.5v4.5h-4.5zM347.2 584.7h12.5v4.5h-12.5zM395.1 584.7h8.5v4.5h-8.5zM323.2 588.7h4.5v4.5h-4.5zM343.2 588.7h4.5v4.5h-4.5zM387.1 588.7h16.5v4.5h-16.5zM323.2 592.7h4.5v4.5h-4.5zM343.2 592.7h4.5v4.5h-4.5zM383.1 592.7h8.5v4.5h-8.5zM323.2 596.7h8.5v4.5h-8.5zM339.2 596.7h4.5v4.5h-4.5zM327.2 600.7h12.5v4.5h-12.5zM323.2 604.7h16.5v4.5h-16.5zM383.1 604.7h4.5v4.5h-4.5zM323.2 608.7h8.5v4.5h-8.5zM383.1 608.7h4.5v4.5h-4.5zM255.3 612.7h8.5v4.5h-8.5zM323.2 612.7h4.5v4.5h-4.5zM383.1 612.7h8.5v4.5h-8.5zM263.3 616.7h4.5v4.5h-4.5zM387.1 616.7h16.5v4.5h-16.5zM267.3 620.7h8.5v4.5h-8.5zM395.1 620.7h8.5v4.5h-8.5zM271.3 624.7h4.5v4.5h-4.5zM267.3 628.7h8.5v4.5h-8.5zM267.3 632.7h4.5v4.5h-4.5zM263.3 636.7h4.5v4.5h-4.5zM255.3 640.7h8.5v4.5h-8.5zM323.2 644.6h4.5v4.5h-4.5zM319.2 648.6h12.5v4.5h-12.5zM327.2 652.6h8.5v4.5h-8.5zM311.2 656.6h8.5v4.5h-8.5zM331.2 656.6h4.5v4.5h-4.5zM311.2 660.6h4.5v4.5h-4.5zM331.2 660.6h8.5v4.5h-8.5zM311.2 664.6h4.5v4.5h-4.5zM331.2 664.6h8.5v4.5h-8.5zM311.2 668.6h8.5v4.5h-8.5zM331.2 668.6h8.5v4.5h-8.5zM315.2 672.6h4.5v4.5h-4.5zM327.2 672.6h12.5v4.5h-12.5zM315.2 676.6h4.5v4.5h-4.5zM327.2 676.6h12.5v4.5h-12.5z"/>
<path fill="#21918c" d="M303.2 532.8h4.5v4.5h-4.5zM315.2 532.8h4.5v4.5h-4.5zM303.2 536.8h4.5v4.5h-4.5zM315.2 536.8h4.5v4.5h-4.5zM303.2 540.8h4.5v4.5h-4.5zM315.2 540.8h4.5v4.5h-4.5zM303.2 544.8h4.5v4.5h-4.5zM319.2 548.8h4.5v4.5h-4.5zM327.2 552.8h4.5v4.5h-4.5zM307.2 556.8h4.5v4.5h-4.5zM339.2 556.8h4.5v4.5h-4.5zM359.2 556.8h16.5v4.5h-16.5zM347.2 560.8h4.5v4.5h-4.5zM375.1 564.8h4.5v4.5h-4.5zM371.1 568.8h8.5v4.5h-8.5zM363.2 572.7h12.5v4.5h-12.5zM359.2 576.7h4.5v4.5h-4.5zM323.2 580.7h4.5v4.5h-4.5zM351.2 580.7h8.5v4.5h-8.5zM323.2 584.7h4.5v4.5h-4.5zM343.2 584.7h4.5v4.5h-4.5zM327.2 592.7h4.5v4.5h-4.5zM339.2 592.7h4.5v4.5h-4.5zM391.1 592.7h12.5v4.5h-12.5zM331.2 596.7h8.5v4.5h-8.5zM383.1 596.7h8.5v4.5h-8.5zM383.1 600.7h8.5v4.5h-8.5zM387.1 604.7h4.5v4.5h-4.5zM387.1 608.7h8.5v4.5h-8.5zM391.1 612.7h12.5v4.5h-12.5zM255.3 616.7h8.5v4.5h-8.5zM263.3 620.7h4.5v4.5h-4.5zM267.3 624.7h4.5v4.5h-4.5zM263.3 628.7h4.5v4.5h-4.5zM255.3 632.7h12.5v4.5h-12.5zM255.3 636.7h8.5v4.5h-8.5zM319.2 652.6h8.5v4.5h-8.5zM319.2 656.6h12.5v4.5h-12.5zM315.2 660.6h4.5v4.5h-4.5zM327.2 660.6h4.5v4.5h-4.5zM315.2 664.6h4.5v4.5h-4.5zM327.2 664.6h4.5v4.5h-4.5zM319.2 668.6h12.5v4.5h-12.5zM319.2 672.6h8.5v4.5h-8.5zM319.2 676.6h8.5v4.5h-8.5z"/>
<path fill="#229f87" d="M307.2 532.8h8.5v4.5h-8.5zM307.2 536.8h8.5v4.5h-8.5zM307.2 540.8h8.5v4.5h-8.5zM311.2 544.8h4.5v4.5h-4.5zM303.2 548.8h4.5v4.5h-4.5zM315.2 548.8h4.5v4.5h-4.5zM307.2 552.8h4.5v4.5h-4.5zM315.2 552.8h12.5v4.5h-12.5zM311.2 556.8h4.5v4.5h-4.5zM311.2 560.8h4.5v4.5h-4.5zM351.2 560.8h24.5v4.5h-24.5zM315.2 564.8h4.5v4.5h-4.5zM347.2 564.8h28.5v4.5h-28.5zM319.2 568.8h4.5v4.5h-4.5zM355.2 568.8h16.5v4.5h-16.5zM355.2 572.7h8.5v4.5h-8.5zM323.2 576.7h4.5v4.5h-4.5zM351.2 576.7h8.5v4.5h-8.5zM347.2 580.7h4.5v4.5h-4.5zM327.2 588.7h4.5v4.5h-4.5zM339.2 588.7h4.5v4.5h-4.5zM331.2 592.7h8.5v4.5h-8.5zM391.1 596.7h12.5v4.5h-12.5zM391.1 600.7h12.5v4.5h-12.5zM391.1 604.7h12.5v4.5h-12.5zM395.1 608.7h8.5v4.5h-8.5zM255.3 620.7h8.5v4.5h-8.5zM255.3 624.7h12.5v4.5h-12.5zM255.3 628.7h8.5v4.5h-8.5zM319.2 660.6h8.5v4.5h-8.5zM319.2 664.6h8.5v4.5h-8.5z"/>
<path fill="#461769" d="M331.2 532.8h8.5v4.5h-8.5zM331.2 536.8h8.5v4.5h-8.5zM335.2 540.8h4.5v4.5h-4.5zM383.1 540.8h4.5v4.5h-4.5zM387.1 544.8h16.5v4.5h-16.5zM343.2 548.8h8.5v4.5h-8.5zM379.1 548.8h4.5v4.5h-4.5zM383.1 552.8h8.5v4.5h-8.5zM391.1 556.8h4.5v4.5h-4.5zM295.2 560.8h4.5v4.5h-4.5zM391.1 560.8h4.5v4.5h-4.5zM295.2 564.8h4.5v4.5h-4.5zM395.1 564.8h8.5v4.5h-8.5zM299.2 568.8h4.5v4.5h-4.5zM255.3 572.7h8.5v4.5h-8.5zM291.3 572.7h4.5v4.5h-4.5zM303.2 572.7h8.5v4.5h-8.5zM291.3 576.7h4.5v4.5h-4.5zM307.2 576.7h4.5v4.5h-4.5zM263.3 580.7h4.5v4.5h-4.5zM291.3 580.7h4.5v4.5h-4.5zM307.2 580.7h4.5v4.5h-4.5zM263.3 584.7h4.5v4.5h-4.5zM291.3 584.7h4.5v4.5h-4.5zM307.2 584.7h4.5v4.5h-4.5zM255.3 588.7h8.5v4.5h-8.5zM295.2 588.7h4.5v4.5h-4.5zM303.2 588.7h8.5v4.5h-8.5zM295.2 592.7h16.5v4.5h-16.5zM303.2 596.7h8.5v4.5h-8.5zM307.2 600.7h4.5v4.5h-4.5zM347.2 620.7h4.5v4.5h-4.5zM347.2 624.7h8.5v4.5h-8.5zM283.3 632.7h16.5v4.5h-16.5zM295.2 636.7h8.5v4.5h-8.5zM279.3 640.7h4.5v4.5h-4.5zM299.2 640.7h4.5v4.5h-4.5zM279.3 644.6h4.5v4.5h-4.5zM299.2 644.6h4.5v4.5h-4.5zM275.3 648.6h4.5v4.5h-4.5zM299.2 648.6h4.5v4.5h-4.5zM275.3 652.6h4.5v4.5h-4.5zM295.2 652.6h4.5v4.5h-4.5zM271.3 656.6h8.5v4.5h-8.5zM291.3 656.6h4.5v4.5h-4.5zM271.3 660.6h4.5v4.5h-4.5zM287.3 660.6h4.5v4.5h-4.5zM391.1 660.6h12.5v4.5h-12.5zM267.3 664.6h4.5v4.5h-4.5zM279.3 664.6h8.5v4.5h-8.5zM387.1 664.6h8.5v4.5h-8.5zM263.3 668.6h8.5v4.5h-8.5zM275.3 668.6h8.5v4.5h-8.5zM383.1 668.6h8.5v4.5h-8.5zM255.3 672.6h8.5v4.5h-8.5zM275.3 672.6h8.5v4.5h-8.5zM379.1 672.6h8.5v4.5h-8.5zM255.3 676.6h8.5v4.5h-8.5zM275.3 676.6h8.5v4.5h-8.5zM379.1 676.6h8.5v4.5h-8.5z"/>
<path fill="#2bae7f" d="M307.2 544.8h4.5v4.5h-4.5zM315.2 544.8h4.5v4.5h-4.5zM307.2 548.8h8.5v4.5h-8.5zM311.2 552.8h4.5v4.5h-4.5zM315.2 556.8h4.5v4.5h-4.5zM335.2 556.8h4.5v4.5h-4.5zM343.2 560.8h4.5v4.5h-4.5zM347.2 568.8h8.5v4.5h-8.5zM323.2 572.7h4.5v4.5h-4.5zM351.2 572.7h4.5v4.5h-4.5zM347.2 576.7h4.5v4.5h-4.5zM343.2 580.7h4.5v4.5h-4.5zM327.2 584.7h4.5v4.5h-4.5zM339.2 584.7h4.5v4.5h-4.5zM331.2 588.7h8.5v4.5h-8.5z"/>
<path fill="#440154" d="M383.1 544.8h4.5v4.5h-4.5zM383.1 548.8h20.5v4.5h-20.5zM391.1 552.8h12.5v4.5h-12.5zM395.1 556.8h8.5v4.5h-8.5zM395.1 560.8h8.5v4.5h-8.5zM295.2 568.8h4.5v4.5h-4.5zM295.2 572.7h8.5v4.5h-8.5zM255.3 576.7h8.5v4.5h-8.5zM295.2 576.7h12.5v4.5h-12.5zM255.3 580.7h8.5v4.5h-8.5zM295.2 580.7h12.5v4.5h-12.5zM255.3 584.7h8.5v4.5h-8.5zM295.2 584.7h12.5v4.5h-12.5zM299.2 588.7h4.5v4.5h-4.5zM283.3 636.7h12.5v4.5h-12.5zM283.3 640.7h16.5v4.5h-16.5zM283.3 644.6h16.5v4.5h-16.5zM279.3 648.6h20.5v4.5h-20.5zM279.3 652.6h16.5v4.5h-16.5zM279.3 656.6h12.5v4.5h-12.5zM275.3 660.6h12.5v4.5h-12.5zM271.3 664.6h8.5v4.5h-8.5zM395.1 664.6h8.5v4.5h-8.5zM271.3 668.6h4.5v4.5h-4.5zM391.1 668.6h12.5v4.5h-12.5zM263.3 672.6h12.5v4.5h-12.5zM387.1 672.6h16.5v4.5h-16.5zM263.3 676.6h12.5v4.5h-12.5zM387.1 676.6h16.5v4.5h-16.5z"/>
<path fill="#40bc72" d="M319.2 556.8h16.5v4.5h-16.5zM315.2 560.8h4.5v4.5h-4.5zM343.2 564.8h4.5v4.5h-4.5zM323.2 568.8h4.5v4.5h-4.5zM343.2 568.8h4.5v4.5h-4.5zM347.2 572.7h4.5v4.5h-4.5zM343.2 576.7h4.5v4.5h-4.5zM327.2 580.7h4.5v4.5h-4.5zM339.2 580.7h4.5v4.5h-4.5zM331.2 584.7h4.5v4.5h-4.5z"/>
<path fill="#82d34c" d="M319.2 560.8h4.5v4.5h-4.5zM323.2 564.8h4.5v4.5h-4.5zM339.2 564.8h4.5v4.5h-4.5zM339.2 568.8h4.5v4.5h-4.5zM327.2 576.7h4.5v4.5h-4.5zM339.2 576.7h4.5v4.5h-4.5zM335.2 584.7h4.5v4.5h-4.5z"/>
<path fill="#acdc31" d="M323.2 560.8h8.5v4.5h-8.5zM335.2 560.8h4.5v4.5h-4.5zM327.2 564.8h4.5v4.5h-4.5zM327.2 568.8h4.5v4.5h-4.5zM327.2 572.7h4.5v4.5h-4.5zM339.2 572.7h4.5v4.5h-4.5zM335.2 576.7h4.5v4.5h-4.5zM331.2 580.7h8.5v4.5h-8.5z"/>
<path fill="#d5e226" d="M331.2 560.8h4.5v4.5h-4.5zM331.2 564.8h8.5v4.5h-8.5zM331.2 568.8h8.5v4.5h-8.5zM331.2 572.7h8.5v4.5h-8.5zM331.2 576.7h4.5v4.5h-4.5z"/>
<path fill="#5fc860" d="M339.2 560.8h4.5v4.5h-4.5zM319.2 564.8h4.5v4.5h-4.5zM343.2 572.7h4.5v4.5h-4.5z"/>
<rect x="279.9" y="557.8" width="98.2" height="98.2" fill="none" stroke="#ff0000" stroke-width="1.4"/>
<line x1="290.96" y1="606.90" x2="321.64" y2="606.90" stroke="#ff0000" stroke-width="1.3"/>
<line x1="336.36" y1="606.90" x2="367.04" y2="606.90" stroke="#ff0000" stroke-width="1.3"/>
<line x1="329.00" y1="568.86" x2="329.00" y2="599.54" stroke="#ff0000" stroke-width="1.3"/>
<line x1="329.00" y1="614.26" x2="329.00" y2="644.94" stroke="#ff0000" stroke-width="1.3"/>
<text x="329.0" y="545.96" font-size="11" font-family="'Liberation Sans', sans-serif" fill="#ff0000" text-anchor="middle" stroke="#ff0000" stroke-width="0.1">N</text>
<text x="264.378" y="611.4" font-size="11" font-family="'Liberation Sans', sans-serif" fill="#ff0000" text-anchor="middle" stroke="#ff0000" stroke-width="0.1">E</text>
</g>
<rect x="255.3" y="532.8" width="147.8" height="147.4" fill="none" stroke="#222" stroke-width="1"/>
<line x1="251.80" y1="672.34" x2="255.30" y2="672.34" stroke="#000" stroke-width="0.9"/>
<text x="249.3" y="676.3399999999999" font-size="11" font-family="'Liberation Sans', sans-serif" text-anchor="end" stroke="#000" stroke-width="0.1">−4</text>
<line x1="263.56" y1="680.20" x2="263.56" y2="683.70" stroke="#000" stroke-width="0.9"/>
<text x="263.56" y="696" font-size="11" font-family="'Liberation Sans', sans-serif" text-anchor="middle" stroke="#000" stroke-width="0.1">−4</text>
<line x1="251.80" y1="639.62" x2="255.30" y2="639.62" stroke="#000" stroke-width="0.9"/>
<text x="249.3" y="643.62" font-size="11" font-family="'Liberation Sans', sans-serif" text-anchor="end" stroke="#000" stroke-width="0.1">−2</text>
<line x1="296.28" y1="680.20" x2="296.28" y2="683.70" stroke="#000" stroke-width="0.9"/>
<text x="296.28" y="696" font-size="11" font-family="'Liberation Sans', sans-serif" text-anchor="middle" stroke="#000" stroke-width="0.1">−2</text>
<line x1="251.80" y1="606.90" x2="255.30" y2="606.90" stroke="#000" stroke-width="0.9"/>
<text x="249.3" y="610.9" font-size="11" font-family="'Liberation Sans', sans-serif" text-anchor="end" stroke="#000" stroke-width="0.1">0</text>
<line x1="329.00" y1="680.20" x2="329.00" y2="683.70" stroke="#000" stroke-width="0.9"/>
<text x="329.0" y="696" font-size="11" font-family="'Liberation Sans', sans-serif" text-anchor="middle" stroke="#000" stroke-width="0.1">0</text>
<line x1="251.80" y1="574.18" x2="255.30" y2="574.18" stroke="#000" stroke-width="0.9"/>
<text x="249.3" y="578.18" font-size="11" font-family="'Liberation Sans', sans-serif" text-anchor="end" stroke="#000" stroke-width="0.1">2</text>
<line x1="361.72" y1="680.20" x2="361.72" y2="683.70" stroke="#000" stroke-width="0.9"/>
<text x="361.72" y="696" font-size="11" font-family="'Liberation Sans', sans-serif" text-anchor="middle" stroke="#000" stroke-width="0.1">2</text>
<line x1="251.80" y1="541.46" x2="255.30" y2="541.46" stroke="#000" stroke-width="0.9"/>
<text x="249.3" y="545.46" font-size="11" font-family="'Liberation Sans', sans-serif" text-anchor="end" stroke="#000" stroke-width="0.1">4</text>
<line x1="394.44" y1="680.20" x2="394.44" y2="683.70" stroke="#000" stroke-width="0.9"/>
<text x="394.44" y="696" font-size="11" font-family="'Liberation Sans', sans-serif" text-anchor="middle" stroke="#000" stroke-width="0.1">4</text>
<text x="514.5" y="525.7" font-size="12.5" font-family="'Liberation Sans', sans-serif" text-anchor="middle" textLength="107.5" lengthAdjust="spacingAndGlyphs" stroke="#000" stroke-width="0.1">HSC SSP(26.8) g</text>
<clipPath id="pc2"><rect x="440.9" y="532.8" width="147.8" height="147.4"/></clipPath>
<g clip-path="url(#pc2)">
<path fill="#cccccc" d="M440.9 532.8h3.5v3.5h-3.5zM455.7 532.8h6.4v3.5h-6.4zM476.4 532.8h3.5v3.5h-3.5zM508.9 532.8h3.5v3.5h-3.5zM541.4 532.8h3.5v3.5h-3.5zM553.2 532.8h3.5v3.5h-3.5zM565.1 532.8h3.5v3.5h-3.5zM571.0 532.8h3.5v3.5h-3.5zM585.7 532.8h3.5v3.5h-3.5zM452.7 535.8h3.5v3.5h-3.5zM461.6 535.8h6.4v3.5h-6.4zM476.4 535.8h6.4v3.5h-6.4zM503.0 535.8h3.5v3.5h-3.5zM520.7 535.8h3.5v3.5h-3.5zM579.8 535.8h3.5v3.5h-3.5zM449.8 538.7h3.5v3.5h-3.5zM461.6 538.7h3.5v3.5h-3.5zM470.5 538.7h3.5v3.5h-3.5zM479.3 538.7h3.5v3.5h-3.5zM503.0 538.7h3.5v3.5h-3.5zM517.8 538.7h3.5v3.5h-3.5zM529.6 538.7h9.4v3.5h-9.4zM571.0 538.7h3.5v3.5h-3.5zM576.9 538.7h3.5v3.5h-3.5zM452.7 541.7h3.5v3.5h-3.5zM458.6 541.7h3.5v3.5h-3.5zM485.2 541.7h3.5v3.5h-3.5zM505.9 541.7h3.5v3.5h-3.5zM514.8 541.7h3.5v3.5h-3.5zM547.3 541.7h3.5v3.5h-3.5zM556.2 541.7h3.5v3.5h-3.5zM562.1 541.7h3.5v3.5h-3.5zM576.9 541.7h3.5v3.5h-3.5zM455.7 544.6h9.4v3.5h-9.4zM523.7 544.6h3.5v3.5h-3.5zM544.4 544.6h6.4v3.5h-6.4zM553.2 544.6h6.4v3.5h-6.4zM565.1 544.6h3.5v3.5h-3.5zM443.9 547.6h6.4v3.5h-6.4zM458.6 547.6h3.5v3.5h-3.5zM526.6 547.6h6.4v3.5h-6.4zM535.5 547.6h3.5v3.5h-3.5zM544.4 547.6h6.4v3.5h-6.4zM553.2 547.6h3.5v3.5h-3.5zM582.8 547.6h3.5v3.5h-3.5zM452.7 550.5h3.5v3.5h-3.5zM458.6 550.5h3.5v3.5h-3.5zM547.3 550.5h6.4v3.5h-6.4zM565.1 550.5h3.5v3.5h-3.5zM446.8 553.5h3.5v3.5h-3.5zM461.6 553.5h3.5v3.5h-3.5zM523.7 553.5h3.5v3.5h-3.5zM529.6 553.5h6.4v3.5h-6.4zM550.3 553.5h9.4v3.5h-9.4zM573.9 553.5h3.5v3.5h-3.5zM443.9 556.4h3.5v3.5h-3.5zM455.7 556.4h3.5v3.5h-3.5zM461.6 556.4h3.5v3.5h-3.5zM470.5 556.4h3.5v3.5h-3.5zM523.7 556.4h3.5v3.5h-3.5zM532.5 556.4h3.5v3.5h-3.5zM547.3 556.4h3.5v3.5h-3.5zM571.0 556.4h3.5v3.5h-3.5zM446.8 559.4h3.5v3.5h-3.5zM455.7 559.4h3.5v3.5h-3.5zM461.6 559.4h3.5v3.5h-3.5zM535.5 559.4h3.5v3.5h-3.5zM541.4 559.4h3.5v3.5h-3.5zM553.2 559.4h3.5v3.5h-3.5zM568.0 559.4h3.5v3.5h-3.5zM576.9 559.4h3.5v3.5h-3.5zM458.6 562.4h3.5v3.5h-3.5zM541.4 562.4h6.4v3.5h-6.4zM562.1 562.4h15.3v3.5h-15.3zM464.5 565.3h3.5v3.5h-3.5zM532.5 565.3h3.5v3.5h-3.5zM541.4 565.3h3.5v3.5h-3.5zM556.2 565.3h3.5v3.5h-3.5zM562.1 565.3h3.5v3.5h-3.5zM576.9 565.3h6.4v3.5h-6.4zM440.9 568.3h3.5v3.5h-3.5zM455.7 568.3h3.5v3.5h-3.5zM461.6 568.3h3.5v3.5h-3.5zM535.5 568.3h6.4v3.5h-6.4zM544.4 568.3h9.4v3.5h-9.4zM467.5 571.2h3.5v3.5h-3.5zM529.6 571.2h3.5v3.5h-3.5zM541.4 571.2h3.5v3.5h-3.5zM553.2 571.2h3.5v3.5h-3.5zM579.8 571.2h3.5v3.5h-3.5zM440.9 574.2h3.5v3.5h-3.5zM449.8 574.2h3.5v3.5h-3.5zM464.5 574.2h3.5v3.5h-3.5zM529.6 574.2h3.5v3.5h-3.5zM541.4 574.2h3.5v3.5h-3.5zM547.3 574.2h3.5v3.5h-3.5zM553.2 574.2h3.5v3.5h-3.5zM573.9 574.2h6.4v3.5h-6.4zM440.9 577.1h3.5v3.5h-3.5zM455.7 577.1h3.5v3.5h-3.5zM538.4 577.1h3.5v3.5h-3.5zM562.1 577.1h3.5v3.5h-3.5zM571.0 577.1h6.4v3.5h-6.4zM579.8 577.1h3.5v3.5h-3.5zM440.9 580.1h3.5v3.5h-3.5zM556.2 580.1h3.5v3.5h-3.5zM562.1 580.1h6.4v3.5h-6.4zM576.9 580.1h6.4v3.5h-6.4zM458.6 583.1h3.5v3.5h-3.5zM541.4 583.1h3.5v3.5h-3.5zM556.2 583.1h6.4v3.5h-6.4zM573.9 583.1h6.4v3.5h-6.4zM455.7 586.0h3.5v3.5h-3.5zM523.7 586.0h3.5v3.5h-3.5zM541.4 586.0h3.5v3.5h-3.5zM547.3 586.0h3.5v3.5h-3.5zM553.2 586.0h3.5v3.5h-3.5zM559.1 586.0h6.4v3.5h-6.4zM455.7 589.0h6.4v3.5h-6.4zM529.6 589.0h3.5v3.5h-3.5zM538.4 589.0h3.5v3.5h-3.5zM585.7 589.0h3.5v3.5h-3.5zM458.6 591.9h3.5v3.5h-3.5zM464.5 591.9h3.5v3.5h-3.5zM532.5 591.9h3.5v3.5h-3.5zM538.4 591.9h6.4v3.5h-6.4zM579.8 591.9h3.5v3.5h-3.5zM443.9 594.9h3.5v3.5h-3.5zM464.5 594.9h3.5v3.5h-3.5zM470.5 594.9h3.5v3.5h-3.5zM544.4 594.9h3.5v3.5h-3.5zM556.2 594.9h3.5v3.5h-3.5zM571.0 594.9h3.5v3.5h-3.5zM576.9 594.9h3.5v3.5h-3.5zM449.8 597.8h3.5v3.5h-3.5zM517.8 597.8h12.3v3.5h-12.3zM532.5 597.8h6.4v3.5h-6.4zM547.3 597.8h3.5v3.5h-3.5zM565.1 597.8h6.4v3.5h-6.4zM582.8 597.8h3.5v3.5h-3.5zM458.6 600.8h3.5v3.5h-3.5zM473.4 600.8h3.5v3.5h-3.5zM520.7 600.8h3.5v3.5h-3.5zM526.6 600.8h6.4v3.5h-6.4zM535.5 600.8h3.5v3.5h-3.5zM556.2 600.8h3.5v3.5h-3.5zM440.9 603.7h9.4v3.5h-9.4zM467.5 603.7h3.5v3.5h-3.5zM476.4 603.7h3.5v3.5h-3.5zM526.6 603.7h3.5v3.5h-3.5zM547.3 603.7h3.5v3.5h-3.5zM562.1 603.7h3.5v3.5h-3.5zM573.9 603.7h3.5v3.5h-3.5zM585.7 603.7h3.5v3.5h-3.5zM452.7 606.7h3.5v3.5h-3.5zM514.8 606.7h3.5v3.5h-3.5zM520.7 606.7h6.4v3.5h-6.4zM547.3 606.7h3.5v3.5h-3.5zM553.2 606.7h6.4v3.5h-6.4zM576.9 606.7h3.5v3.5h-3.5zM455.7 609.7h3.5v3.5h-3.5zM470.5 609.7h3.5v3.5h-3.5zM514.8 609.7h3.5v3.5h-3.5zM535.5 609.7h3.5v3.5h-3.5zM547.3 609.7h3.5v3.5h-3.5zM446.8 612.6h3.5v3.5h-3.5zM467.5 612.6h3.5v3.5h-3.5zM476.4 612.6h3.5v3.5h-3.5zM485.2 612.6h3.5v3.5h-3.5zM535.5 612.6h3.5v3.5h-3.5zM541.4 612.6h6.4v3.5h-6.4zM440.9 615.6h3.5v3.5h-3.5zM479.3 615.6h3.5v3.5h-3.5zM488.2 615.6h3.5v3.5h-3.5zM517.8 615.6h3.5v3.5h-3.5zM523.7 615.6h3.5v3.5h-3.5zM541.4 615.6h6.4v3.5h-6.4zM568.0 615.6h6.4v3.5h-6.4zM585.7 615.6h3.5v3.5h-3.5zM455.7 618.5h3.5v3.5h-3.5zM467.5 618.5h3.5v3.5h-3.5zM479.3 618.5h12.3v3.5h-12.3zM514.8 618.5h9.4v3.5h-9.4zM535.5 618.5h3.5v3.5h-3.5zM544.4 618.5h3.5v3.5h-3.5zM556.2 618.5h3.5v3.5h-3.5zM440.9 621.5h6.4v3.5h-6.4zM452.7 621.5h3.5v3.5h-3.5zM467.5 621.5h3.5v3.5h-3.5zM482.3 621.5h3.5v3.5h-3.5zM491.2 621.5h6.4v3.5h-6.4zM503.0 621.5h3.5v3.5h-3.5zM514.8 621.5h12.3v3.5h-12.3zM529.6 621.5h6.4v3.5h-6.4zM452.7 624.4h3.5v3.5h-3.5zM461.6 624.4h3.5v3.5h-3.5zM467.5 624.4h3.5v3.5h-3.5zM485.2 624.4h3.5v3.5h-3.5zM523.7 624.4h9.4v3.5h-9.4zM541.4 624.4h6.4v3.5h-6.4zM550.3 624.4h3.5v3.5h-3.5zM559.1 624.4h6.4v3.5h-6.4zM568.0 624.4h3.5v3.5h-3.5zM443.9 627.4h3.5v3.5h-3.5zM458.6 627.4h3.5v3.5h-3.5zM476.4 627.4h6.4v3.5h-6.4zM523.7 627.4h6.4v3.5h-6.4zM553.2 627.4h6.4v3.5h-6.4zM585.7 627.4h3.5v3.5h-3.5zM449.8 630.3h3.5v3.5h-3.5zM473.4 630.3h3.5v3.5h-3.5zM544.4 630.3h3.5v3.5h-3.5zM553.2 630.3h3.5v3.5h-3.5zM559.1 630.3h3.5v3.5h-3.5zM565.1 630.3h3.5v3.5h-3.5zM576.9 630.3h3.5v3.5h-3.5zM488.2 633.3h3.5v3.5h-3.5zM517.8 633.3h3.5v3.5h-3.5zM526.6 633.3h9.4v3.5h-9.4zM538.4 633.3h6.4v3.5h-6.4zM562.1 633.3h3.5v3.5h-3.5zM568.0 633.3h3.5v3.5h-3.5zM446.8 636.3h3.5v3.5h-3.5zM464.5 636.3h6.4v3.5h-6.4zM473.4 636.3h6.4v3.5h-6.4zM541.4 636.3h6.4v3.5h-6.4zM553.2 636.3h6.4v3.5h-6.4zM565.1 636.3h3.5v3.5h-3.5zM458.6 639.2h6.4v3.5h-6.4zM482.3 639.2h3.5v3.5h-3.5zM523.7 639.2h9.4v3.5h-9.4zM553.2 639.2h3.5v3.5h-3.5zM559.1 639.2h3.5v3.5h-3.5zM579.8 639.2h3.5v3.5h-3.5zM446.8 642.2h3.5v3.5h-3.5zM452.7 642.2h3.5v3.5h-3.5zM470.5 642.2h3.5v3.5h-3.5zM476.4 642.2h3.5v3.5h-3.5zM538.4 642.2h3.5v3.5h-3.5zM544.4 642.2h3.5v3.5h-3.5zM556.2 642.2h3.5v3.5h-3.5zM568.0 642.2h6.4v3.5h-6.4zM576.9 642.2h3.5v3.5h-3.5zM455.7 645.1h3.5v3.5h-3.5zM464.5 645.1h6.4v3.5h-6.4zM482.3 645.1h3.5v3.5h-3.5zM514.8 645.1h3.5v3.5h-3.5zM520.7 645.1h3.5v3.5h-3.5zM535.5 645.1h3.5v3.5h-3.5zM547.3 645.1h3.5v3.5h-3.5zM562.1 645.1h3.5v3.5h-3.5zM573.9 645.1h3.5v3.5h-3.5zM582.8 645.1h3.5v3.5h-3.5zM449.8 648.1h3.5v3.5h-3.5zM467.5 648.1h3.5v3.5h-3.5zM479.3 648.1h3.5v3.5h-3.5zM494.1 648.1h3.5v3.5h-3.5zM541.4 648.1h3.5v3.5h-3.5zM556.2 648.1h3.5v3.5h-3.5zM565.1 648.1h3.5v3.5h-3.5zM449.8 651.0h6.4v3.5h-6.4zM464.5 651.0h6.4v3.5h-6.4zM482.3 651.0h3.5v3.5h-3.5zM535.5 651.0h3.5v3.5h-3.5zM541.4 651.0h3.5v3.5h-3.5zM553.2 651.0h6.4v3.5h-6.4zM565.1 651.0h9.4v3.5h-9.4zM579.8 651.0h3.5v3.5h-3.5zM446.8 654.0h3.5v3.5h-3.5zM455.7 654.0h3.5v3.5h-3.5zM476.4 654.0h3.5v3.5h-3.5zM488.2 654.0h3.5v3.5h-3.5zM503.0 654.0h3.5v3.5h-3.5zM526.6 654.0h6.4v3.5h-6.4zM535.5 654.0h6.4v3.5h-6.4zM544.4 654.0h6.4v3.5h-6.4zM565.1 654.0h3.5v3.5h-3.5zM582.8 654.0h3.5v3.5h-3.5zM443.9 657.0h12.3v3.5h-12.3zM458.6 657.0h12.3v3.5h-12.3zM473.4 657.0h6.4v3.5h-6.4zM485.2 657.0h3.5v3.5h-3.5zM497.1 657.0h3.5v3.5h-3.5zM503.0 657.0h3.5v3.5h-3.5zM508.9 657.0h3.5v3.5h-3.5zM514.8 657.0h3.5v3.5h-3.5zM520.7 657.0h3.5v3.5h-3.5zM532.5 657.0h3.5v3.5h-3.5zM576.9 657.0h3.5v3.5h-3.5zM449.8 659.9h3.5v3.5h-3.5zM482.3 659.9h3.5v3.5h-3.5zM491.2 659.9h3.5v3.5h-3.5zM520.7 659.9h3.5v3.5h-3.5zM532.5 659.9h3.5v3.5h-3.5zM538.4 659.9h3.5v3.5h-3.5zM553.2 659.9h6.4v3.5h-6.4zM562.1 659.9h9.4v3.5h-9.4zM449.8 662.9h3.5v3.5h-3.5zM473.4 662.9h6.4v3.5h-6.4zM491.2 662.9h6.4v3.5h-6.4zM517.8 662.9h3.5v3.5h-3.5zM529.6 662.9h3.5v3.5h-3.5zM538.4 662.9h3.5v3.5h-3.5zM544.4 662.9h3.5v3.5h-3.5zM553.2 662.9h3.5v3.5h-3.5zM562.1 662.9h3.5v3.5h-3.5zM568.0 662.9h3.5v3.5h-3.5zM582.8 662.9h6.4v3.5h-6.4zM473.4 665.8h3.5v3.5h-3.5zM485.2 665.8h6.4v3.5h-6.4zM508.9 665.8h6.4v3.5h-6.4zM520.7 665.8h6.4v3.5h-6.4zM532.5 665.8h3.5v3.5h-3.5zM553.2 665.8h9.4v3.5h-9.4zM568.0 665.8h3.5v3.5h-3.5zM585.7 665.8h3.5v3.5h-3.5zM455.7 668.8h3.5v3.5h-3.5zM470.5 668.8h3.5v3.5h-3.5zM482.3 668.8h3.5v3.5h-3.5zM491.2 668.8h6.4v3.5h-6.4zM505.9 668.8h3.5v3.5h-3.5zM511.8 668.8h3.5v3.5h-3.5zM538.4 668.8h3.5v3.5h-3.5zM547.3 668.8h3.5v3.5h-3.5zM579.8 668.8h3.5v3.5h-3.5zM446.8 671.7h3.5v3.5h-3.5zM461.6 671.7h3.5v3.5h-3.5zM476.4 671.7h3.5v3.5h-3.5zM488.2 671.7h3.5v3.5h-3.5zM503.0 671.7h3.5v3.5h-3.5zM511.8 671.7h6.4v3.5h-6.4zM520.7 671.7h3.5v3.5h-3.5zM535.5 671.7h3.5v3.5h-3.5zM556.2 671.7h3.5v3.5h-3.5zM571.0 671.7h3.5v3.5h-3.5zM443.9 674.7h3.5v3.5h-3.5zM458.6 674.7h6.4v3.5h-6.4zM479.3 674.7h3.5v3.5h-3.5zM517.8 674.7h3.5v3.5h-3.5zM541.4 674.7h3.5v3.5h-3.5zM562.1 674.7h3.5v3.5h-3.5zM579.8 674.7h3.5v3.5h-3.5zM455.7 677.6h6.4v3.5h-6.4zM470.5 677.6h9.4v3.5h-9.4zM491.2 677.6h9.4v3.5h-9.4zM520.7 677.6h3.5v3.5h-3.5zM526.6 677.6h6.4v3.5h-6.4zM535.5 677.6h3.5v3.5h-3.5zM573.9 677.6h3.5v3.5h-3.5z"/>
<path fill="#c0c0c0" d="M443.9 532.8h3.5v3.5h-3.5zM452.7 532.8h3.5v3.5h-3.5zM488.2 532.8h3.5v3.5h-3.5zM497.1 532.8h9.4v3.5h-9.4zM514.8 532.8h3.5v3.5h-3.5zM532.5 532.8h3.5v3.5h-3.5zM544.4 532.8h6.4v3.5h-6.4zM556.2 532.8h3.5v3.5h-3.5zM582.8 532.8h3.5v3.5h-3.5zM443.9 535.8h3.5v3.5h-3.5zM455.7 535.8h6.4v3.5h-6.4zM485.2 535.8h3.5v3.5h-3.5zM494.1 535.8h6.4v3.5h-6.4zM505.9 535.8h6.4v3.5h-6.4zM529.6 535.8h6.4v3.5h-6.4zM565.1 535.8h9.4v3.5h-9.4zM440.9 538.7h6.4v3.5h-6.4zM455.7 538.7h3.5v3.5h-3.5zM464.5 538.7h6.4v3.5h-6.4zM476.4 538.7h3.5v3.5h-3.5zM488.2 538.7h3.5v3.5h-3.5zM508.9 538.7h3.5v3.5h-3.5zM544.4 538.7h6.4v3.5h-6.4zM556.2 538.7h3.5v3.5h-3.5zM568.0 538.7h3.5v3.5h-3.5zM573.9 538.7h3.5v3.5h-3.5zM443.9 541.7h3.5v3.5h-3.5zM449.8 541.7h3.5v3.5h-3.5zM455.7 541.7h3.5v3.5h-3.5zM461.6 541.7h3.5v3.5h-3.5zM511.8 541.7h3.5v3.5h-3.5zM526.6 541.7h3.5v3.5h-3.5zM550.3 541.7h3.5v3.5h-3.5zM573.9 541.7h3.5v3.5h-3.5zM585.7 541.7h3.5v3.5h-3.5zM446.8 544.6h6.4v3.5h-6.4zM467.5 544.6h6.4v3.5h-6.4zM476.4 544.6h3.5v3.5h-3.5zM485.2 544.6h3.5v3.5h-3.5zM503.0 544.6h3.5v3.5h-3.5zM511.8 544.6h3.5v3.5h-3.5zM517.8 544.6h3.5v3.5h-3.5zM541.4 544.6h3.5v3.5h-3.5zM562.1 544.6h3.5v3.5h-3.5zM579.8 544.6h3.5v3.5h-3.5zM449.8 547.6h3.5v3.5h-3.5zM461.6 547.6h3.5v3.5h-3.5zM479.3 547.6h3.5v3.5h-3.5zM541.4 547.6h3.5v3.5h-3.5zM568.0 547.6h3.5v3.5h-3.5zM573.9 547.6h3.5v3.5h-3.5zM473.4 550.5h6.4v3.5h-6.4zM532.5 550.5h6.4v3.5h-6.4zM541.4 550.5h3.5v3.5h-3.5zM553.2 550.5h3.5v3.5h-3.5zM573.9 550.5h9.4v3.5h-9.4zM467.5 553.5h3.5v3.5h-3.5zM535.5 553.5h3.5v3.5h-3.5zM544.4 553.5h3.5v3.5h-3.5zM579.8 553.5h3.5v3.5h-3.5zM452.7 556.4h3.5v3.5h-3.5zM473.4 556.4h3.5v3.5h-3.5zM541.4 556.4h3.5v3.5h-3.5zM559.1 556.4h3.5v3.5h-3.5zM458.6 559.4h3.5v3.5h-3.5zM464.5 559.4h3.5v3.5h-3.5zM544.4 559.4h3.5v3.5h-3.5zM559.1 559.4h3.5v3.5h-3.5zM565.1 559.4h3.5v3.5h-3.5zM573.9 559.4h3.5v3.5h-3.5zM582.8 559.4h3.5v3.5h-3.5zM446.8 562.4h3.5v3.5h-3.5zM461.6 562.4h3.5v3.5h-3.5zM467.5 562.4h3.5v3.5h-3.5zM535.5 562.4h3.5v3.5h-3.5zM559.1 562.4h3.5v3.5h-3.5zM579.8 562.4h3.5v3.5h-3.5zM440.9 565.3h3.5v3.5h-3.5zM523.7 565.3h3.5v3.5h-3.5zM529.6 565.3h3.5v3.5h-3.5zM535.5 565.3h6.4v3.5h-6.4zM550.3 565.3h3.5v3.5h-3.5zM565.1 565.3h3.5v3.5h-3.5zM443.9 568.3h6.4v3.5h-6.4zM529.6 568.3h3.5v3.5h-3.5zM565.1 568.3h3.5v3.5h-3.5zM582.8 568.3h3.5v3.5h-3.5zM452.7 571.2h3.5v3.5h-3.5zM458.6 571.2h6.4v3.5h-6.4zM523.7 571.2h3.5v3.5h-3.5zM532.5 571.2h6.4v3.5h-6.4zM550.3 571.2h3.5v3.5h-3.5zM461.6 574.2h3.5v3.5h-3.5zM467.5 574.2h3.5v3.5h-3.5zM526.6 574.2h3.5v3.5h-3.5zM532.5 574.2h3.5v3.5h-3.5zM559.1 574.2h6.4v3.5h-6.4zM579.8 574.2h3.5v3.5h-3.5zM446.8 577.1h3.5v3.5h-3.5zM529.6 577.1h3.5v3.5h-3.5zM535.5 577.1h3.5v3.5h-3.5zM550.3 577.1h6.4v3.5h-6.4zM582.8 577.1h3.5v3.5h-3.5zM455.7 580.1h3.5v3.5h-3.5zM529.6 580.1h3.5v3.5h-3.5zM538.4 580.1h6.4v3.5h-6.4zM547.3 580.1h3.5v3.5h-3.5zM568.0 580.1h3.5v3.5h-3.5zM467.5 583.1h3.5v3.5h-3.5zM550.3 583.1h3.5v3.5h-3.5zM562.1 583.1h3.5v3.5h-3.5zM568.0 583.1h6.4v3.5h-6.4zM440.9 586.0h3.5v3.5h-3.5zM458.6 586.0h6.4v3.5h-6.4zM526.6 586.0h3.5v3.5h-3.5zM538.4 586.0h3.5v3.5h-3.5zM568.0 586.0h3.5v3.5h-3.5zM582.8 586.0h3.5v3.5h-3.5zM440.9 589.0h15.3v3.5h-15.3zM520.7 589.0h3.5v3.5h-3.5zM526.6 589.0h3.5v3.5h-3.5zM535.5 589.0h3.5v3.5h-3.5zM544.4 589.0h6.4v3.5h-6.4zM565.1 589.0h3.5v3.5h-3.5zM440.9 591.9h6.4v3.5h-6.4zM452.7 591.9h3.5v3.5h-3.5zM461.6 591.9h3.5v3.5h-3.5zM526.6 591.9h6.4v3.5h-6.4zM559.1 591.9h3.5v3.5h-3.5zM573.9 591.9h3.5v3.5h-3.5zM582.8 591.9h3.5v3.5h-3.5zM446.8 594.9h3.5v3.5h-3.5zM529.6 594.9h3.5v3.5h-3.5zM538.4 594.9h6.4v3.5h-6.4zM547.3 594.9h3.5v3.5h-3.5zM553.2 594.9h3.5v3.5h-3.5zM562.1 594.9h3.5v3.5h-3.5zM440.9 597.8h3.5v3.5h-3.5zM461.6 597.8h3.5v3.5h-3.5zM467.5 597.8h9.4v3.5h-9.4zM529.6 597.8h3.5v3.5h-3.5zM544.4 597.8h3.5v3.5h-3.5zM553.2 597.8h3.5v3.5h-3.5zM562.1 597.8h3.5v3.5h-3.5zM579.8 597.8h3.5v3.5h-3.5zM443.9 600.8h6.4v3.5h-6.4zM464.5 600.8h3.5v3.5h-3.5zM479.3 600.8h3.5v3.5h-3.5zM541.4 600.8h3.5v3.5h-3.5zM553.2 600.8h3.5v3.5h-3.5zM529.6 603.7h3.5v3.5h-3.5zM538.4 603.7h3.5v3.5h-3.5zM550.3 603.7h3.5v3.5h-3.5zM440.9 606.7h3.5v3.5h-3.5zM449.8 606.7h3.5v3.5h-3.5zM476.4 606.7h3.5v3.5h-3.5zM505.9 606.7h3.5v3.5h-3.5zM517.8 606.7h3.5v3.5h-3.5zM529.6 606.7h3.5v3.5h-3.5zM550.3 606.7h3.5v3.5h-3.5zM565.1 606.7h6.4v3.5h-6.4zM440.9 609.7h3.5v3.5h-3.5zM446.8 609.7h3.5v3.5h-3.5zM452.7 609.7h3.5v3.5h-3.5zM467.5 609.7h3.5v3.5h-3.5zM491.2 609.7h3.5v3.5h-3.5zM505.9 609.7h3.5v3.5h-3.5zM511.8 609.7h3.5v3.5h-3.5zM520.7 609.7h12.3v3.5h-12.3zM562.1 609.7h3.5v3.5h-3.5zM568.0 609.7h3.5v3.5h-3.5zM579.8 609.7h3.5v3.5h-3.5zM440.9 612.6h6.4v3.5h-6.4zM449.8 612.6h3.5v3.5h-3.5zM461.6 612.6h6.4v3.5h-6.4zM482.3 612.6h3.5v3.5h-3.5zM488.2 612.6h9.4v3.5h-9.4zM505.9 612.6h12.3v3.5h-12.3zM529.6 612.6h3.5v3.5h-3.5zM538.4 612.6h3.5v3.5h-3.5zM553.2 612.6h6.4v3.5h-6.4zM562.1 612.6h3.5v3.5h-3.5zM568.0 612.6h3.5v3.5h-3.5zM582.8 612.6h6.4v3.5h-6.4zM470.5 615.6h3.5v3.5h-3.5zM482.3 615.6h3.5v3.5h-3.5zM494.1 615.6h3.5v3.5h-3.5zM503.0 615.6h6.4v3.5h-6.4zM511.8 615.6h3.5v3.5h-3.5zM529.6 615.6h3.5v3.5h-3.5zM553.2 615.6h6.4v3.5h-6.4zM562.1 615.6h3.5v3.5h-3.5zM582.8 615.6h3.5v3.5h-3.5zM446.8 618.5h3.5v3.5h-3.5zM470.5 618.5h3.5v3.5h-3.5zM568.0 618.5h3.5v3.5h-3.5zM579.8 618.5h3.5v3.5h-3.5zM455.7 621.5h6.4v3.5h-6.4zM473.4 621.5h3.5v3.5h-3.5zM479.3 621.5h3.5v3.5h-3.5zM497.1 621.5h6.4v3.5h-6.4zM505.9 621.5h6.4v3.5h-6.4zM547.3 621.5h3.5v3.5h-3.5zM579.8 621.5h3.5v3.5h-3.5zM470.5 624.4h3.5v3.5h-3.5zM505.9 624.4h3.5v3.5h-3.5zM511.8 624.4h6.4v3.5h-6.4zM565.1 624.4h3.5v3.5h-3.5zM440.9 627.4h3.5v3.5h-3.5zM455.7 627.4h3.5v3.5h-3.5zM461.6 627.4h3.5v3.5h-3.5zM473.4 627.4h3.5v3.5h-3.5zM488.2 627.4h9.4v3.5h-9.4zM500.0 627.4h3.5v3.5h-3.5zM517.8 627.4h3.5v3.5h-3.5zM529.6 627.4h6.4v3.5h-6.4zM550.3 627.4h3.5v3.5h-3.5zM440.9 630.3h3.5v3.5h-3.5zM455.7 630.3h3.5v3.5h-3.5zM461.6 630.3h3.5v3.5h-3.5zM476.4 630.3h3.5v3.5h-3.5zM511.8 630.3h3.5v3.5h-3.5zM523.7 630.3h3.5v3.5h-3.5zM541.4 630.3h3.5v3.5h-3.5zM547.3 630.3h3.5v3.5h-3.5zM573.9 630.3h3.5v3.5h-3.5zM582.8 630.3h3.5v3.5h-3.5zM452.7 633.3h3.5v3.5h-3.5zM461.6 633.3h3.5v3.5h-3.5zM467.5 633.3h3.5v3.5h-3.5zM479.3 633.3h3.5v3.5h-3.5zM520.7 633.3h3.5v3.5h-3.5zM535.5 633.3h3.5v3.5h-3.5zM559.1 633.3h3.5v3.5h-3.5zM585.7 633.3h3.5v3.5h-3.5zM443.9 636.3h3.5v3.5h-3.5zM479.3 636.3h6.4v3.5h-6.4zM488.2 636.3h3.5v3.5h-3.5zM520.7 636.3h3.5v3.5h-3.5zM529.6 636.3h3.5v3.5h-3.5zM535.5 636.3h6.4v3.5h-6.4zM568.0 636.3h6.4v3.5h-6.4zM464.5 639.2h3.5v3.5h-3.5zM476.4 639.2h3.5v3.5h-3.5zM491.2 639.2h3.5v3.5h-3.5zM514.8 639.2h3.5v3.5h-3.5zM535.5 639.2h3.5v3.5h-3.5zM568.0 639.2h3.5v3.5h-3.5zM585.7 639.2h3.5v3.5h-3.5zM461.6 642.2h6.4v3.5h-6.4zM473.4 642.2h3.5v3.5h-3.5zM482.3 642.2h3.5v3.5h-3.5zM494.1 642.2h3.5v3.5h-3.5zM523.7 642.2h3.5v3.5h-3.5zM573.9 642.2h3.5v3.5h-3.5zM440.9 645.1h3.5v3.5h-3.5zM446.8 645.1h3.5v3.5h-3.5zM452.7 645.1h3.5v3.5h-3.5zM476.4 645.1h3.5v3.5h-3.5zM491.2 645.1h3.5v3.5h-3.5zM508.9 645.1h3.5v3.5h-3.5zM517.8 645.1h3.5v3.5h-3.5zM541.4 645.1h6.4v3.5h-6.4zM556.2 645.1h3.5v3.5h-3.5zM568.0 645.1h6.4v3.5h-6.4zM464.5 648.1h3.5v3.5h-3.5zM482.3 648.1h6.4v3.5h-6.4zM497.1 648.1h3.5v3.5h-3.5zM517.8 648.1h6.4v3.5h-6.4zM526.6 648.1h3.5v3.5h-3.5zM538.4 648.1h3.5v3.5h-3.5zM568.0 648.1h3.5v3.5h-3.5zM582.8 648.1h3.5v3.5h-3.5zM461.6 651.0h3.5v3.5h-3.5zM479.3 651.0h3.5v3.5h-3.5zM485.2 651.0h3.5v3.5h-3.5zM500.0 651.0h3.5v3.5h-3.5zM520.7 651.0h3.5v3.5h-3.5zM526.6 651.0h3.5v3.5h-3.5zM550.3 651.0h3.5v3.5h-3.5zM562.1 651.0h3.5v3.5h-3.5zM576.9 651.0h3.5v3.5h-3.5zM582.8 651.0h6.4v3.5h-6.4zM464.5 654.0h3.5v3.5h-3.5zM491.2 654.0h3.5v3.5h-3.5zM500.0 654.0h3.5v3.5h-3.5zM511.8 654.0h3.5v3.5h-3.5zM541.4 654.0h3.5v3.5h-3.5zM559.1 654.0h3.5v3.5h-3.5zM568.0 654.0h3.5v3.5h-3.5zM576.9 654.0h3.5v3.5h-3.5zM585.7 654.0h3.5v3.5h-3.5zM482.3 657.0h3.5v3.5h-3.5zM488.2 657.0h3.5v3.5h-3.5zM511.8 657.0h3.5v3.5h-3.5zM523.7 657.0h3.5v3.5h-3.5zM529.6 657.0h3.5v3.5h-3.5zM544.4 657.0h6.4v3.5h-6.4zM565.1 657.0h6.4v3.5h-6.4zM440.9 659.9h3.5v3.5h-3.5zM455.7 659.9h9.4v3.5h-9.4zM470.5 659.9h9.4v3.5h-9.4zM494.1 659.9h9.4v3.5h-9.4zM523.7 659.9h3.5v3.5h-3.5zM535.5 659.9h3.5v3.5h-3.5zM571.0 659.9h3.5v3.5h-3.5zM579.8 659.9h3.5v3.5h-3.5zM452.7 662.9h3.5v3.5h-3.5zM458.6 662.9h3.5v3.5h-3.5zM470.5 662.9h3.5v3.5h-3.5zM520.7 662.9h6.4v3.5h-6.4zM541.4 662.9h3.5v3.5h-3.5zM547.3 662.9h3.5v3.5h-3.5zM556.2 662.9h3.5v3.5h-3.5zM452.7 665.8h6.4v3.5h-6.4zM470.5 665.8h3.5v3.5h-3.5zM494.1 665.8h6.4v3.5h-6.4zM514.8 665.8h3.5v3.5h-3.5zM526.6 665.8h3.5v3.5h-3.5zM547.3 665.8h3.5v3.5h-3.5zM562.1 665.8h3.5v3.5h-3.5zM446.8 668.8h3.5v3.5h-3.5zM479.3 668.8h3.5v3.5h-3.5zM485.2 668.8h6.4v3.5h-6.4zM508.9 668.8h3.5v3.5h-3.5zM526.6 668.8h3.5v3.5h-3.5zM532.5 668.8h3.5v3.5h-3.5zM553.2 668.8h6.4v3.5h-6.4zM576.9 668.8h3.5v3.5h-3.5zM582.8 668.8h3.5v3.5h-3.5zM443.9 671.7h3.5v3.5h-3.5zM494.1 671.7h6.4v3.5h-6.4zM532.5 671.7h3.5v3.5h-3.5zM541.4 671.7h3.5v3.5h-3.5zM550.3 671.7h3.5v3.5h-3.5zM562.1 671.7h3.5v3.5h-3.5zM579.8 671.7h3.5v3.5h-3.5zM440.9 674.7h3.5v3.5h-3.5zM446.8 674.7h3.5v3.5h-3.5zM470.5 674.7h3.5v3.5h-3.5zM482.3 674.7h3.5v3.5h-3.5zM488.2 674.7h3.5v3.5h-3.5zM494.1 674.7h3.5v3.5h-3.5zM505.9 674.7h3.5v3.5h-3.5zM526.6 674.7h3.5v3.5h-3.5zM532.5 674.7h3.5v3.5h-3.5zM544.4 674.7h3.5v3.5h-3.5zM559.1 674.7h3.5v3.5h-3.5zM440.9 677.6h3.5v3.5h-3.5zM464.5 677.6h3.5v3.5h-3.5zM482.3 677.6h6.4v3.5h-6.4zM517.8 677.6h3.5v3.5h-3.5zM523.7 677.6h3.5v3.5h-3.5zM532.5 677.6h3.5v3.5h-3.5zM538.4 677.6h3.5v3.5h-3.5zM547.3 677.6h3.5v3.5h-3.5zM553.2 677.6h6.4v3.5h-6.4z"/>
<path fill="#e4e4e4" d="M446.8 532.8h3.5v3.5h-3.5zM511.8 532.8h3.5v3.5h-3.5zM520.7 532.8h6.4v3.5h-6.4zM562.1 532.8h3.5v3.5h-3.5zM573.9 532.8h3.5v3.5h-3.5zM440.9 535.8h3.5v3.5h-3.5zM467.5 535.8h6.4v3.5h-6.4zM517.8 535.8h3.5v3.5h-3.5zM538.4 535.8h6.4v3.5h-6.4zM547.3 535.8h3.5v3.5h-3.5zM573.9 535.8h3.5v3.5h-3.5zM446.8 538.7h3.5v3.5h-3.5zM550.3 538.7h3.5v3.5h-3.5zM579.8 538.7h3.5v3.5h-3.5zM585.7 538.7h3.5v3.5h-3.5zM464.5 541.7h6.4v3.5h-6.4zM479.3 541.7h3.5v3.5h-3.5zM535.5 541.7h3.5v3.5h-3.5zM544.4 541.7h3.5v3.5h-3.5zM559.1 541.7h3.5v3.5h-3.5zM568.0 541.7h3.5v3.5h-3.5zM579.8 541.7h3.5v3.5h-3.5zM473.4 544.6h3.5v3.5h-3.5zM532.5 544.6h3.5v3.5h-3.5zM585.7 544.6h3.5v3.5h-3.5zM464.5 547.6h3.5v3.5h-3.5zM476.4 547.6h3.5v3.5h-3.5zM517.8 547.6h6.4v3.5h-6.4zM538.4 547.6h3.5v3.5h-3.5zM556.2 547.6h6.4v3.5h-6.4zM565.1 547.6h3.5v3.5h-3.5zM576.9 547.6h3.5v3.5h-3.5zM446.8 550.5h3.5v3.5h-3.5zM467.5 550.5h3.5v3.5h-3.5zM523.7 550.5h3.5v3.5h-3.5zM559.1 550.5h3.5v3.5h-3.5zM568.0 550.5h3.5v3.5h-3.5zM452.7 553.5h3.5v3.5h-3.5zM559.1 553.5h3.5v3.5h-3.5zM440.9 556.4h3.5v3.5h-3.5zM458.6 556.4h3.5v3.5h-3.5zM544.4 556.4h3.5v3.5h-3.5zM556.2 556.4h3.5v3.5h-3.5zM565.1 556.4h6.4v3.5h-6.4zM582.8 556.4h3.5v3.5h-3.5zM547.3 559.4h3.5v3.5h-3.5zM562.1 559.4h3.5v3.5h-3.5zM579.8 559.4h3.5v3.5h-3.5zM538.4 562.4h3.5v3.5h-3.5zM550.3 562.4h3.5v3.5h-3.5zM582.8 562.4h3.5v3.5h-3.5zM443.9 565.3h3.5v3.5h-3.5zM449.8 565.3h3.5v3.5h-3.5zM461.6 565.3h3.5v3.5h-3.5zM556.2 568.3h3.5v3.5h-3.5zM579.8 568.3h3.5v3.5h-3.5zM585.7 568.3h3.5v3.5h-3.5zM547.3 571.2h3.5v3.5h-3.5zM559.1 571.2h3.5v3.5h-3.5zM573.9 571.2h3.5v3.5h-3.5zM455.7 574.2h3.5v3.5h-3.5zM550.3 574.2h3.5v3.5h-3.5zM458.6 577.1h3.5v3.5h-3.5zM464.5 577.1h3.5v3.5h-3.5zM556.2 577.1h3.5v3.5h-3.5zM568.0 577.1h3.5v3.5h-3.5zM446.8 580.1h3.5v3.5h-3.5zM458.6 580.1h3.5v3.5h-3.5zM535.5 580.1h3.5v3.5h-3.5zM559.1 580.1h3.5v3.5h-3.5zM573.9 580.1h3.5v3.5h-3.5zM582.8 580.1h3.5v3.5h-3.5zM526.6 583.1h3.5v3.5h-3.5zM585.7 583.1h3.5v3.5h-3.5zM452.7 586.0h3.5v3.5h-3.5zM544.4 586.0h3.5v3.5h-3.5zM565.1 586.0h3.5v3.5h-3.5zM550.3 589.0h3.5v3.5h-3.5zM576.9 589.0h3.5v3.5h-3.5zM449.8 591.9h3.5v3.5h-3.5zM523.7 591.9h3.5v3.5h-3.5zM535.5 591.9h3.5v3.5h-3.5zM562.1 591.9h3.5v3.5h-3.5zM568.0 591.9h6.4v3.5h-6.4zM440.9 594.9h3.5v3.5h-3.5zM467.5 594.9h3.5v3.5h-3.5zM523.7 594.9h6.4v3.5h-6.4zM579.8 594.9h3.5v3.5h-3.5zM443.9 597.8h3.5v3.5h-3.5zM452.7 597.8h6.4v3.5h-6.4zM544.4 600.8h6.4v3.5h-6.4zM576.9 600.8h3.5v3.5h-3.5zM455.7 603.7h3.5v3.5h-3.5zM473.4 603.7h3.5v3.5h-3.5zM535.5 603.7h3.5v3.5h-3.5zM579.8 603.7h3.5v3.5h-3.5zM541.4 606.7h3.5v3.5h-3.5zM443.9 609.7h3.5v3.5h-3.5zM449.8 609.7h3.5v3.5h-3.5zM458.6 609.7h3.5v3.5h-3.5zM476.4 609.7h3.5v3.5h-3.5zM559.1 609.7h3.5v3.5h-3.5zM573.9 609.7h3.5v3.5h-3.5zM517.8 612.6h6.4v3.5h-6.4zM550.3 612.6h3.5v3.5h-3.5zM565.1 612.6h3.5v3.5h-3.5zM571.0 612.6h6.4v3.5h-6.4zM473.4 615.6h6.4v3.5h-6.4zM535.5 615.6h3.5v3.5h-3.5zM476.4 618.5h3.5v3.5h-3.5zM491.2 618.5h3.5v3.5h-3.5zM526.6 618.5h3.5v3.5h-3.5zM576.9 618.5h3.5v3.5h-3.5zM565.1 621.5h3.5v3.5h-3.5zM585.7 621.5h3.5v3.5h-3.5zM455.7 624.4h6.4v3.5h-6.4zM482.3 624.4h3.5v3.5h-3.5zM520.7 624.4h3.5v3.5h-3.5zM538.4 624.4h3.5v3.5h-3.5zM452.7 627.4h3.5v3.5h-3.5zM544.4 627.4h3.5v3.5h-3.5zM573.9 627.4h3.5v3.5h-3.5zM579.8 627.4h3.5v3.5h-3.5zM485.2 630.3h3.5v3.5h-3.5zM517.8 630.3h3.5v3.5h-3.5zM535.5 630.3h3.5v3.5h-3.5zM449.8 633.3h3.5v3.5h-3.5zM547.3 633.3h3.5v3.5h-3.5zM556.2 633.3h3.5v3.5h-3.5zM573.9 633.3h3.5v3.5h-3.5zM559.1 636.3h3.5v3.5h-3.5zM576.9 636.3h3.5v3.5h-3.5zM449.8 639.2h3.5v3.5h-3.5zM455.7 639.2h3.5v3.5h-3.5zM473.4 639.2h3.5v3.5h-3.5zM544.4 639.2h3.5v3.5h-3.5zM556.2 639.2h3.5v3.5h-3.5zM562.1 639.2h3.5v3.5h-3.5zM573.9 639.2h3.5v3.5h-3.5zM467.5 642.2h3.5v3.5h-3.5zM485.2 642.2h3.5v3.5h-3.5zM526.6 642.2h3.5v3.5h-3.5zM535.5 642.2h3.5v3.5h-3.5zM449.8 645.1h3.5v3.5h-3.5zM485.2 645.1h3.5v3.5h-3.5zM529.6 645.1h3.5v3.5h-3.5zM553.2 645.1h3.5v3.5h-3.5zM458.6 648.1h3.5v3.5h-3.5zM529.6 648.1h3.5v3.5h-3.5zM535.5 648.1h3.5v3.5h-3.5zM553.2 648.1h3.5v3.5h-3.5zM579.8 648.1h3.5v3.5h-3.5zM446.8 651.0h3.5v3.5h-3.5zM452.7 654.0h3.5v3.5h-3.5zM458.6 654.0h3.5v3.5h-3.5zM482.3 654.0h3.5v3.5h-3.5zM479.3 657.0h3.5v3.5h-3.5zM500.0 657.0h3.5v3.5h-3.5zM446.8 659.9h3.5v3.5h-3.5zM485.2 659.9h3.5v3.5h-3.5zM503.0 659.9h3.5v3.5h-3.5zM508.9 659.9h3.5v3.5h-3.5zM541.4 659.9h3.5v3.5h-3.5zM440.9 662.9h3.5v3.5h-3.5zM464.5 662.9h3.5v3.5h-3.5zM505.9 662.9h3.5v3.5h-3.5zM532.5 662.9h3.5v3.5h-3.5zM559.1 662.9h3.5v3.5h-3.5zM565.1 662.9h3.5v3.5h-3.5zM440.9 665.8h3.5v3.5h-3.5zM467.5 665.8h3.5v3.5h-3.5zM538.4 665.8h6.4v3.5h-6.4zM461.6 668.8h3.5v3.5h-3.5zM467.5 668.8h3.5v3.5h-3.5zM529.6 668.8h3.5v3.5h-3.5zM541.4 668.8h3.5v3.5h-3.5zM573.9 668.8h3.5v3.5h-3.5zM511.8 674.7h3.5v3.5h-3.5zM568.0 674.7h3.5v3.5h-3.5zM585.7 674.7h3.5v3.5h-3.5zM467.5 677.6h3.5v3.5h-3.5zM511.8 677.6h6.4v3.5h-6.4zM571.0 677.6h3.5v3.5h-3.5z"/>
<path fill="#b4b4b4" d="M449.8 532.8h3.5v3.5h-3.5zM461.6 532.8h3.5v3.5h-3.5zM485.2 532.8h3.5v3.5h-3.5zM550.3 532.8h3.5v3.5h-3.5zM491.2 535.8h3.5v3.5h-3.5zM500.0 535.8h3.5v3.5h-3.5zM553.2 535.8h3.5v3.5h-3.5zM585.7 535.8h3.5v3.5h-3.5zM458.6 538.7h3.5v3.5h-3.5zM473.4 538.7h3.5v3.5h-3.5zM482.3 538.7h3.5v3.5h-3.5zM494.1 538.7h3.5v3.5h-3.5zM505.9 538.7h3.5v3.5h-3.5zM511.8 538.7h3.5v3.5h-3.5zM520.7 538.7h3.5v3.5h-3.5zM526.6 538.7h3.5v3.5h-3.5zM541.4 538.7h3.5v3.5h-3.5zM582.8 538.7h3.5v3.5h-3.5zM491.2 541.7h6.4v3.5h-6.4zM520.7 541.7h3.5v3.5h-3.5zM553.2 541.7h3.5v3.5h-3.5zM464.5 544.6h3.5v3.5h-3.5zM514.8 544.6h3.5v3.5h-3.5zM571.0 544.6h3.5v3.5h-3.5zM576.9 544.6h3.5v3.5h-3.5zM582.8 544.6h3.5v3.5h-3.5zM440.9 547.6h3.5v3.5h-3.5zM452.7 547.6h3.5v3.5h-3.5zM470.5 547.6h6.4v3.5h-6.4zM514.8 547.6h3.5v3.5h-3.5zM571.0 547.6h3.5v3.5h-3.5zM455.7 550.5h3.5v3.5h-3.5zM464.5 550.5h3.5v3.5h-3.5zM514.8 550.5h3.5v3.5h-3.5zM556.2 550.5h3.5v3.5h-3.5zM449.8 553.5h3.5v3.5h-3.5zM455.7 553.5h6.4v3.5h-6.4zM476.4 553.5h3.5v3.5h-3.5zM520.7 553.5h3.5v3.5h-3.5zM538.4 553.5h3.5v3.5h-3.5zM571.0 553.5h3.5v3.5h-3.5zM582.8 553.5h6.4v3.5h-6.4zM517.8 556.4h3.5v3.5h-3.5zM553.2 556.4h3.5v3.5h-3.5zM573.9 556.4h3.5v3.5h-3.5zM440.9 559.4h3.5v3.5h-3.5zM467.5 559.4h9.4v3.5h-9.4zM529.6 559.4h3.5v3.5h-3.5zM538.4 559.4h3.5v3.5h-3.5zM550.3 559.4h3.5v3.5h-3.5zM455.7 562.4h3.5v3.5h-3.5zM470.5 562.4h3.5v3.5h-3.5zM529.6 562.4h3.5v3.5h-3.5zM556.2 562.4h3.5v3.5h-3.5zM576.9 562.4h3.5v3.5h-3.5zM467.5 565.3h3.5v3.5h-3.5zM526.6 565.3h3.5v3.5h-3.5zM544.4 565.3h3.5v3.5h-3.5zM464.5 568.3h6.4v3.5h-6.4zM562.1 568.3h3.5v3.5h-3.5zM571.0 571.2h3.5v3.5h-3.5zM585.7 571.2h3.5v3.5h-3.5zM452.7 574.2h3.5v3.5h-3.5zM458.6 574.2h3.5v3.5h-3.5zM544.4 574.2h3.5v3.5h-3.5zM565.1 574.2h3.5v3.5h-3.5zM461.6 577.1h3.5v3.5h-3.5zM544.4 577.1h3.5v3.5h-3.5zM443.9 580.1h3.5v3.5h-3.5zM449.8 580.1h6.4v3.5h-6.4zM461.6 580.1h12.3v3.5h-12.3zM532.5 580.1h3.5v3.5h-3.5zM440.9 583.1h3.5v3.5h-3.5zM446.8 583.1h3.5v3.5h-3.5zM452.7 583.1h3.5v3.5h-3.5zM464.5 583.1h3.5v3.5h-3.5zM520.7 583.1h3.5v3.5h-3.5zM579.8 583.1h3.5v3.5h-3.5zM446.8 586.0h3.5v3.5h-3.5zM556.2 586.0h3.5v3.5h-3.5zM585.7 586.0h3.5v3.5h-3.5zM532.5 589.0h3.5v3.5h-3.5zM559.1 589.0h3.5v3.5h-3.5zM579.8 589.0h3.5v3.5h-3.5zM455.7 591.9h3.5v3.5h-3.5zM547.3 591.9h6.4v3.5h-6.4zM452.7 594.9h6.4v3.5h-6.4zM550.3 594.9h3.5v3.5h-3.5zM446.8 597.8h3.5v3.5h-3.5zM476.4 597.8h3.5v3.5h-3.5zM556.2 597.8h3.5v3.5h-3.5zM440.9 600.8h3.5v3.5h-3.5zM538.4 600.8h3.5v3.5h-3.5zM565.1 600.8h3.5v3.5h-3.5zM571.0 600.8h6.4v3.5h-6.4zM582.8 600.8h3.5v3.5h-3.5zM458.6 603.7h3.5v3.5h-3.5zM511.8 603.7h3.5v3.5h-3.5zM565.1 603.7h3.5v3.5h-3.5zM571.0 603.7h3.5v3.5h-3.5zM455.7 606.7h3.5v3.5h-3.5zM467.5 606.7h3.5v3.5h-3.5zM500.0 606.7h3.5v3.5h-3.5zM526.6 606.7h3.5v3.5h-3.5zM562.1 606.7h3.5v3.5h-3.5zM573.9 606.7h3.5v3.5h-3.5zM585.7 606.7h3.5v3.5h-3.5zM485.2 609.7h3.5v3.5h-3.5zM494.1 609.7h3.5v3.5h-3.5zM508.9 609.7h3.5v3.5h-3.5zM556.2 609.7h3.5v3.5h-3.5zM479.3 612.6h3.5v3.5h-3.5zM503.0 612.6h3.5v3.5h-3.5zM532.5 612.6h3.5v3.5h-3.5zM547.3 612.6h3.5v3.5h-3.5zM559.1 612.6h3.5v3.5h-3.5zM576.9 612.6h3.5v3.5h-3.5zM443.9 615.6h3.5v3.5h-3.5zM452.7 615.6h3.5v3.5h-3.5zM491.2 615.6h3.5v3.5h-3.5zM497.1 615.6h6.4v3.5h-6.4zM440.9 618.5h6.4v3.5h-6.4zM473.4 618.5h3.5v3.5h-3.5zM497.1 618.5h3.5v3.5h-3.5zM503.0 618.5h3.5v3.5h-3.5zM508.9 618.5h3.5v3.5h-3.5zM532.5 618.5h3.5v3.5h-3.5zM541.4 618.5h3.5v3.5h-3.5zM573.9 618.5h3.5v3.5h-3.5zM476.4 621.5h3.5v3.5h-3.5zM488.2 621.5h3.5v3.5h-3.5zM559.1 621.5h3.5v3.5h-3.5zM568.0 621.5h3.5v3.5h-3.5zM573.9 621.5h3.5v3.5h-3.5zM446.8 624.4h3.5v3.5h-3.5zM464.5 624.4h3.5v3.5h-3.5zM488.2 624.4h3.5v3.5h-3.5zM497.1 624.4h3.5v3.5h-3.5zM553.2 624.4h3.5v3.5h-3.5zM571.0 624.4h6.4v3.5h-6.4zM464.5 627.4h3.5v3.5h-3.5zM497.1 627.4h3.5v3.5h-3.5zM505.9 627.4h3.5v3.5h-3.5zM514.8 627.4h3.5v3.5h-3.5zM535.5 627.4h9.4v3.5h-9.4zM547.3 627.4h3.5v3.5h-3.5zM562.1 627.4h3.5v3.5h-3.5zM443.9 630.3h6.4v3.5h-6.4zM467.5 630.3h3.5v3.5h-3.5zM479.3 630.3h3.5v3.5h-3.5zM491.2 630.3h3.5v3.5h-3.5zM500.0 630.3h3.5v3.5h-3.5zM585.7 630.3h3.5v3.5h-3.5zM440.9 633.3h3.5v3.5h-3.5zM458.6 633.3h3.5v3.5h-3.5zM470.5 633.3h3.5v3.5h-3.5zM482.3 633.3h3.5v3.5h-3.5zM511.8 633.3h3.5v3.5h-3.5zM544.4 633.3h3.5v3.5h-3.5zM452.7 636.3h3.5v3.5h-3.5zM461.6 636.3h3.5v3.5h-3.5zM491.2 636.3h6.4v3.5h-6.4zM523.7 636.3h3.5v3.5h-3.5zM532.5 636.3h3.5v3.5h-3.5zM562.1 636.3h3.5v3.5h-3.5zM585.7 636.3h3.5v3.5h-3.5zM479.3 639.2h3.5v3.5h-3.5zM485.2 639.2h6.4v3.5h-6.4zM517.8 639.2h6.4v3.5h-6.4zM532.5 639.2h3.5v3.5h-3.5zM547.3 639.2h3.5v3.5h-3.5zM571.0 639.2h3.5v3.5h-3.5zM576.9 639.2h3.5v3.5h-3.5zM458.6 642.2h3.5v3.5h-3.5zM559.1 642.2h6.4v3.5h-6.4zM582.8 642.2h3.5v3.5h-3.5zM443.9 645.1h3.5v3.5h-3.5zM470.5 645.1h6.4v3.5h-6.4zM479.3 645.1h3.5v3.5h-3.5zM488.2 645.1h3.5v3.5h-3.5zM494.1 645.1h3.5v3.5h-3.5zM538.4 645.1h3.5v3.5h-3.5zM585.7 645.1h3.5v3.5h-3.5zM446.8 648.1h3.5v3.5h-3.5zM461.6 648.1h3.5v3.5h-3.5zM508.9 648.1h3.5v3.5h-3.5zM523.7 648.1h3.5v3.5h-3.5zM547.3 648.1h3.5v3.5h-3.5zM491.2 651.0h3.5v3.5h-3.5zM497.1 651.0h3.5v3.5h-3.5zM508.9 651.0h6.4v3.5h-6.4zM517.8 651.0h3.5v3.5h-3.5zM523.7 651.0h3.5v3.5h-3.5zM440.9 654.0h3.5v3.5h-3.5zM479.3 654.0h3.5v3.5h-3.5zM494.1 654.0h6.4v3.5h-6.4zM508.9 654.0h3.5v3.5h-3.5zM562.1 654.0h3.5v3.5h-3.5zM440.9 657.0h3.5v3.5h-3.5zM455.7 657.0h3.5v3.5h-3.5zM470.5 657.0h3.5v3.5h-3.5zM491.2 657.0h6.4v3.5h-6.4zM517.8 657.0h3.5v3.5h-3.5zM562.1 657.0h3.5v3.5h-3.5zM579.8 657.0h3.5v3.5h-3.5zM452.7 659.9h3.5v3.5h-3.5zM464.5 659.9h3.5v3.5h-3.5zM505.9 659.9h3.5v3.5h-3.5zM514.8 659.9h6.4v3.5h-6.4zM576.9 659.9h3.5v3.5h-3.5zM443.9 662.9h3.5v3.5h-3.5zM479.3 662.9h3.5v3.5h-3.5zM511.8 662.9h3.5v3.5h-3.5zM550.3 662.9h3.5v3.5h-3.5zM576.9 662.9h3.5v3.5h-3.5zM443.9 665.8h3.5v3.5h-3.5zM458.6 665.8h3.5v3.5h-3.5zM476.4 665.8h6.4v3.5h-6.4zM500.0 665.8h3.5v3.5h-3.5zM529.6 665.8h3.5v3.5h-3.5zM535.5 665.8h3.5v3.5h-3.5zM579.8 665.8h3.5v3.5h-3.5zM443.9 668.8h3.5v3.5h-3.5zM452.7 668.8h3.5v3.5h-3.5zM544.4 668.8h3.5v3.5h-3.5zM550.3 668.8h3.5v3.5h-3.5zM562.1 668.8h3.5v3.5h-3.5zM449.8 671.7h3.5v3.5h-3.5zM485.2 671.7h3.5v3.5h-3.5zM505.9 671.7h3.5v3.5h-3.5zM544.4 671.7h3.5v3.5h-3.5zM585.7 671.7h3.5v3.5h-3.5zM455.7 674.7h3.5v3.5h-3.5zM467.5 674.7h3.5v3.5h-3.5zM476.4 674.7h3.5v3.5h-3.5zM491.2 674.7h3.5v3.5h-3.5zM503.0 674.7h3.5v3.5h-3.5zM508.9 674.7h3.5v3.5h-3.5zM514.8 674.7h3.5v3.5h-3.5zM520.7 674.7h3.5v3.5h-3.5zM538.4 674.7h3.5v3.5h-3.5zM553.2 674.7h3.5v3.5h-3.5zM576.9 674.7h3.5v3.5h-3.5zM443.9 677.6h3.5v3.5h-3.5zM449.8 677.6h6.4v3.5h-6.4zM461.6 677.6h3.5v3.5h-3.5zM488.2 677.6h3.5v3.5h-3.5zM505.9 677.6h6.4v3.5h-6.4zM585.7 677.6h3.5v3.5h-3.5z"/>
<path fill="#d8d8d8" d="M464.5 532.8h3.5v3.5h-3.5zM479.3 532.8h3.5v3.5h-3.5zM494.1 532.8h3.5v3.5h-3.5zM505.9 532.8h3.5v3.5h-3.5zM517.8 532.8h3.5v3.5h-3.5zM538.4 532.8h3.5v3.5h-3.5zM579.8 532.8h3.5v3.5h-3.5zM446.8 535.8h6.4v3.5h-6.4zM523.7 535.8h3.5v3.5h-3.5zM544.4 535.8h3.5v3.5h-3.5zM556.2 535.8h3.5v3.5h-3.5zM562.1 535.8h3.5v3.5h-3.5zM452.7 538.7h3.5v3.5h-3.5zM514.8 538.7h3.5v3.5h-3.5zM523.7 538.7h3.5v3.5h-3.5zM559.1 538.7h3.5v3.5h-3.5zM440.9 541.7h3.5v3.5h-3.5zM446.8 541.7h3.5v3.5h-3.5zM473.4 541.7h6.4v3.5h-6.4zM517.8 541.7h3.5v3.5h-3.5zM523.7 541.7h3.5v3.5h-3.5zM529.6 541.7h6.4v3.5h-6.4zM541.4 541.7h3.5v3.5h-3.5zM571.0 541.7h3.5v3.5h-3.5zM443.9 544.6h3.5v3.5h-3.5zM452.7 544.6h3.5v3.5h-3.5zM526.6 544.6h6.4v3.5h-6.4zM535.5 544.6h3.5v3.5h-3.5zM550.3 544.6h3.5v3.5h-3.5zM568.0 544.6h3.5v3.5h-3.5zM573.9 544.6h3.5v3.5h-3.5zM532.5 547.6h3.5v3.5h-3.5zM550.3 547.6h3.5v3.5h-3.5zM562.1 547.6h3.5v3.5h-3.5zM579.8 547.6h3.5v3.5h-3.5zM585.7 547.6h3.5v3.5h-3.5zM440.9 550.5h3.5v3.5h-3.5zM470.5 550.5h3.5v3.5h-3.5zM520.7 550.5h3.5v3.5h-3.5zM538.4 550.5h3.5v3.5h-3.5zM562.1 550.5h3.5v3.5h-3.5zM571.0 550.5h3.5v3.5h-3.5zM585.7 550.5h3.5v3.5h-3.5zM440.9 553.5h3.5v3.5h-3.5zM464.5 553.5h3.5v3.5h-3.5zM526.6 553.5h3.5v3.5h-3.5zM547.3 553.5h3.5v3.5h-3.5zM565.1 553.5h6.4v3.5h-6.4zM576.9 553.5h3.5v3.5h-3.5zM449.8 556.4h3.5v3.5h-3.5zM529.6 556.4h3.5v3.5h-3.5zM550.3 556.4h3.5v3.5h-3.5zM576.9 556.4h6.4v3.5h-6.4zM585.7 556.4h3.5v3.5h-3.5zM443.9 559.4h3.5v3.5h-3.5zM452.7 559.4h3.5v3.5h-3.5zM532.5 559.4h3.5v3.5h-3.5zM443.9 562.4h3.5v3.5h-3.5zM449.8 562.4h6.4v3.5h-6.4zM464.5 562.4h3.5v3.5h-3.5zM585.7 562.4h3.5v3.5h-3.5zM455.7 565.3h6.4v3.5h-6.4zM547.3 565.3h3.5v3.5h-3.5zM553.2 565.3h3.5v3.5h-3.5zM559.1 565.3h3.5v3.5h-3.5zM568.0 565.3h3.5v3.5h-3.5zM573.9 565.3h3.5v3.5h-3.5zM585.7 565.3h3.5v3.5h-3.5zM449.8 568.3h6.4v3.5h-6.4zM523.7 568.3h3.5v3.5h-3.5zM532.5 568.3h3.5v3.5h-3.5zM541.4 568.3h3.5v3.5h-3.5zM559.1 568.3h3.5v3.5h-3.5zM568.0 568.3h3.5v3.5h-3.5zM443.9 571.2h9.4v3.5h-9.4zM455.7 571.2h3.5v3.5h-3.5zM464.5 571.2h3.5v3.5h-3.5zM538.4 571.2h3.5v3.5h-3.5zM544.4 571.2h3.5v3.5h-3.5zM556.2 571.2h3.5v3.5h-3.5zM565.1 571.2h6.4v3.5h-6.4zM576.9 571.2h3.5v3.5h-3.5zM535.5 574.2h6.4v3.5h-6.4zM585.7 574.2h3.5v3.5h-3.5zM443.9 577.1h3.5v3.5h-3.5zM449.8 577.1h3.5v3.5h-3.5zM559.1 577.1h3.5v3.5h-3.5zM576.9 577.1h3.5v3.5h-3.5zM585.7 577.1h3.5v3.5h-3.5zM526.6 580.1h3.5v3.5h-3.5zM550.3 580.1h6.4v3.5h-6.4zM571.0 580.1h3.5v3.5h-3.5zM585.7 580.1h3.5v3.5h-3.5zM443.9 583.1h3.5v3.5h-3.5zM455.7 583.1h3.5v3.5h-3.5zM461.6 583.1h3.5v3.5h-3.5zM532.5 583.1h3.5v3.5h-3.5zM538.4 583.1h3.5v3.5h-3.5zM547.3 583.1h3.5v3.5h-3.5zM553.2 583.1h3.5v3.5h-3.5zM565.1 583.1h3.5v3.5h-3.5zM535.5 586.0h3.5v3.5h-3.5zM576.9 586.0h6.4v3.5h-6.4zM461.6 589.0h3.5v3.5h-3.5zM556.2 589.0h3.5v3.5h-3.5zM562.1 589.0h3.5v3.5h-3.5zM582.8 589.0h3.5v3.5h-3.5zM565.1 591.9h3.5v3.5h-3.5zM576.9 591.9h3.5v3.5h-3.5zM585.7 591.9h3.5v3.5h-3.5zM449.8 594.9h3.5v3.5h-3.5zM461.6 594.9h3.5v3.5h-3.5zM532.5 594.9h3.5v3.5h-3.5zM565.1 594.9h6.4v3.5h-6.4zM573.9 594.9h3.5v3.5h-3.5zM582.8 594.9h6.4v3.5h-6.4zM458.6 597.8h3.5v3.5h-3.5zM538.4 597.8h6.4v3.5h-6.4zM559.1 597.8h3.5v3.5h-3.5zM573.9 597.8h6.4v3.5h-6.4zM585.7 597.8h3.5v3.5h-3.5zM452.7 600.8h6.4v3.5h-6.4zM467.5 600.8h6.4v3.5h-6.4zM523.7 600.8h3.5v3.5h-3.5zM550.3 600.8h3.5v3.5h-3.5zM568.0 600.8h3.5v3.5h-3.5zM579.8 600.8h3.5v3.5h-3.5zM585.7 600.8h3.5v3.5h-3.5zM452.7 603.7h3.5v3.5h-3.5zM461.6 603.7h6.4v3.5h-6.4zM523.7 603.7h3.5v3.5h-3.5zM541.4 603.7h6.4v3.5h-6.4zM559.1 603.7h3.5v3.5h-3.5zM568.0 603.7h3.5v3.5h-3.5zM582.8 603.7h3.5v3.5h-3.5zM443.9 606.7h3.5v3.5h-3.5zM461.6 606.7h6.4v3.5h-6.4zM470.5 606.7h6.4v3.5h-6.4zM479.3 606.7h3.5v3.5h-3.5zM535.5 606.7h6.4v3.5h-6.4zM559.1 606.7h3.5v3.5h-3.5zM571.0 606.7h3.5v3.5h-3.5zM579.8 606.7h3.5v3.5h-3.5zM464.5 609.7h3.5v3.5h-3.5zM473.4 609.7h3.5v3.5h-3.5zM479.3 609.7h6.4v3.5h-6.4zM532.5 609.7h3.5v3.5h-3.5zM565.1 609.7h3.5v3.5h-3.5zM582.8 609.7h6.4v3.5h-6.4zM452.7 612.6h6.4v3.5h-6.4zM473.4 612.6h3.5v3.5h-3.5zM500.0 612.6h3.5v3.5h-3.5zM523.7 612.6h3.5v3.5h-3.5zM461.6 615.6h9.4v3.5h-9.4zM532.5 615.6h3.5v3.5h-3.5zM565.1 615.6h3.5v3.5h-3.5zM573.9 615.6h3.5v3.5h-3.5zM579.8 615.6h3.5v3.5h-3.5zM452.7 618.5h3.5v3.5h-3.5zM461.6 618.5h3.5v3.5h-3.5zM494.1 618.5h3.5v3.5h-3.5zM500.0 618.5h3.5v3.5h-3.5zM511.8 618.5h3.5v3.5h-3.5zM523.7 618.5h3.5v3.5h-3.5zM529.6 618.5h3.5v3.5h-3.5zM550.3 618.5h3.5v3.5h-3.5zM582.8 618.5h6.4v3.5h-6.4zM446.8 621.5h6.4v3.5h-6.4zM461.6 621.5h6.4v3.5h-6.4zM485.2 621.5h3.5v3.5h-3.5zM535.5 621.5h3.5v3.5h-3.5zM541.4 621.5h6.4v3.5h-6.4zM550.3 621.5h3.5v3.5h-3.5zM556.2 621.5h3.5v3.5h-3.5zM562.1 621.5h3.5v3.5h-3.5zM582.8 621.5h3.5v3.5h-3.5zM443.9 624.4h3.5v3.5h-3.5zM473.4 624.4h9.4v3.5h-9.4zM503.0 624.4h3.5v3.5h-3.5zM508.9 624.4h3.5v3.5h-3.5zM517.8 624.4h3.5v3.5h-3.5zM532.5 624.4h3.5v3.5h-3.5zM547.3 624.4h3.5v3.5h-3.5zM576.9 624.4h3.5v3.5h-3.5zM585.7 624.4h3.5v3.5h-3.5zM446.8 627.4h3.5v3.5h-3.5zM467.5 627.4h6.4v3.5h-6.4zM485.2 627.4h3.5v3.5h-3.5zM511.8 627.4h3.5v3.5h-3.5zM565.1 627.4h9.4v3.5h-9.4zM576.9 627.4h3.5v3.5h-3.5zM582.8 627.4h3.5v3.5h-3.5zM452.7 630.3h3.5v3.5h-3.5zM458.6 630.3h3.5v3.5h-3.5zM520.7 630.3h3.5v3.5h-3.5zM529.6 630.3h6.4v3.5h-6.4zM538.4 630.3h3.5v3.5h-3.5zM550.3 630.3h3.5v3.5h-3.5zM562.1 630.3h3.5v3.5h-3.5zM443.9 633.3h3.5v3.5h-3.5zM464.5 633.3h3.5v3.5h-3.5zM473.4 633.3h6.4v3.5h-6.4zM485.2 633.3h3.5v3.5h-3.5zM523.7 633.3h3.5v3.5h-3.5zM565.1 633.3h3.5v3.5h-3.5zM571.0 633.3h3.5v3.5h-3.5zM579.8 633.3h3.5v3.5h-3.5zM449.8 636.3h3.5v3.5h-3.5zM485.2 636.3h3.5v3.5h-3.5zM526.6 636.3h3.5v3.5h-3.5zM550.3 636.3h3.5v3.5h-3.5zM573.9 636.3h3.5v3.5h-3.5zM440.9 639.2h6.4v3.5h-6.4zM452.7 639.2h3.5v3.5h-3.5zM467.5 639.2h6.4v3.5h-6.4zM541.4 639.2h3.5v3.5h-3.5zM582.8 639.2h3.5v3.5h-3.5zM440.9 642.2h3.5v3.5h-3.5zM449.8 642.2h3.5v3.5h-3.5zM455.7 642.2h3.5v3.5h-3.5zM529.6 642.2h3.5v3.5h-3.5zM541.4 642.2h3.5v3.5h-3.5zM547.3 642.2h9.4v3.5h-9.4zM565.1 642.2h3.5v3.5h-3.5zM585.7 642.2h3.5v3.5h-3.5zM458.6 645.1h3.5v3.5h-3.5zM511.8 645.1h3.5v3.5h-3.5zM523.7 645.1h3.5v3.5h-3.5zM550.3 645.1h3.5v3.5h-3.5zM559.1 645.1h3.5v3.5h-3.5zM565.1 645.1h3.5v3.5h-3.5zM576.9 645.1h3.5v3.5h-3.5zM440.9 648.1h6.4v3.5h-6.4zM452.7 648.1h6.4v3.5h-6.4zM473.4 648.1h6.4v3.5h-6.4zM544.4 648.1h3.5v3.5h-3.5zM550.3 648.1h3.5v3.5h-3.5zM559.1 648.1h3.5v3.5h-3.5zM573.9 648.1h6.4v3.5h-6.4zM440.9 651.0h6.4v3.5h-6.4zM494.1 651.0h3.5v3.5h-3.5zM503.0 651.0h6.4v3.5h-6.4zM514.8 651.0h3.5v3.5h-3.5zM532.5 651.0h3.5v3.5h-3.5zM538.4 651.0h3.5v3.5h-3.5zM467.5 654.0h3.5v3.5h-3.5zM473.4 654.0h3.5v3.5h-3.5zM485.2 654.0h3.5v3.5h-3.5zM523.7 654.0h3.5v3.5h-3.5zM532.5 654.0h3.5v3.5h-3.5zM550.3 654.0h3.5v3.5h-3.5zM556.2 654.0h3.5v3.5h-3.5zM571.0 654.0h6.4v3.5h-6.4zM579.8 654.0h3.5v3.5h-3.5zM538.4 657.0h6.4v3.5h-6.4zM553.2 657.0h9.4v3.5h-9.4zM571.0 657.0h6.4v3.5h-6.4zM582.8 657.0h3.5v3.5h-3.5zM443.9 659.9h3.5v3.5h-3.5zM511.8 659.9h3.5v3.5h-3.5zM544.4 659.9h6.4v3.5h-6.4zM573.9 659.9h3.5v3.5h-3.5zM582.8 659.9h3.5v3.5h-3.5zM455.7 662.9h3.5v3.5h-3.5zM461.6 662.9h3.5v3.5h-3.5zM467.5 662.9h3.5v3.5h-3.5zM482.3 662.9h6.4v3.5h-6.4zM503.0 662.9h3.5v3.5h-3.5zM508.9 662.9h3.5v3.5h-3.5zM514.8 662.9h3.5v3.5h-3.5zM535.5 662.9h3.5v3.5h-3.5zM579.8 662.9h3.5v3.5h-3.5zM446.8 665.8h6.4v3.5h-6.4zM464.5 665.8h3.5v3.5h-3.5zM491.2 665.8h3.5v3.5h-3.5zM503.0 665.8h6.4v3.5h-6.4zM517.8 665.8h3.5v3.5h-3.5zM550.3 665.8h3.5v3.5h-3.5zM571.0 665.8h3.5v3.5h-3.5zM576.9 665.8h3.5v3.5h-3.5zM582.8 665.8h3.5v3.5h-3.5zM449.8 668.8h3.5v3.5h-3.5zM473.4 668.8h3.5v3.5h-3.5zM500.0 668.8h6.4v3.5h-6.4zM514.8 668.8h3.5v3.5h-3.5zM520.7 668.8h3.5v3.5h-3.5zM559.1 668.8h3.5v3.5h-3.5zM565.1 668.8h3.5v3.5h-3.5zM585.7 668.8h3.5v3.5h-3.5zM452.7 671.7h6.4v3.5h-6.4zM464.5 671.7h9.4v3.5h-9.4zM479.3 671.7h3.5v3.5h-3.5zM491.2 671.7h3.5v3.5h-3.5zM500.0 671.7h3.5v3.5h-3.5zM508.9 671.7h3.5v3.5h-3.5zM517.8 671.7h3.5v3.5h-3.5zM523.7 671.7h3.5v3.5h-3.5zM529.6 671.7h3.5v3.5h-3.5zM559.1 671.7h3.5v3.5h-3.5zM568.0 671.7h3.5v3.5h-3.5zM452.7 674.7h3.5v3.5h-3.5zM464.5 674.7h3.5v3.5h-3.5zM473.4 674.7h3.5v3.5h-3.5zM485.2 674.7h3.5v3.5h-3.5zM497.1 674.7h6.4v3.5h-6.4zM535.5 674.7h3.5v3.5h-3.5zM565.1 674.7h3.5v3.5h-3.5zM571.0 674.7h6.4v3.5h-6.4zM582.8 674.7h3.5v3.5h-3.5zM446.8 677.6h3.5v3.5h-3.5zM479.3 677.6h3.5v3.5h-3.5zM550.3 677.6h3.5v3.5h-3.5zM579.8 677.6h6.4v3.5h-6.4z"/>
<path fill="#a8a8a8" d="M467.5 532.8h3.5v3.5h-3.5zM482.3 532.8h3.5v3.5h-3.5zM535.5 532.8h3.5v3.5h-3.5zM473.4 535.8h3.5v3.5h-3.5zM511.8 535.8h6.4v3.5h-6.4zM497.1 538.7h3.5v3.5h-3.5zM538.4 538.7h3.5v3.5h-3.5zM470.5 541.7h3.5v3.5h-3.5zM497.1 541.7h3.5v3.5h-3.5zM503.0 541.7h3.5v3.5h-3.5zM508.9 541.7h3.5v3.5h-3.5zM565.1 541.7h3.5v3.5h-3.5zM479.3 544.6h3.5v3.5h-3.5zM505.9 547.6h3.5v3.5h-3.5zM523.7 547.6h3.5v3.5h-3.5zM479.3 550.5h3.5v3.5h-3.5zM517.8 550.5h3.5v3.5h-3.5zM529.6 550.5h3.5v3.5h-3.5zM544.4 550.5h3.5v3.5h-3.5zM470.5 553.5h6.4v3.5h-6.4zM514.8 553.5h6.4v3.5h-6.4zM541.4 553.5h3.5v3.5h-3.5zM520.7 556.4h3.5v3.5h-3.5zM562.1 556.4h3.5v3.5h-3.5zM523.7 559.4h3.5v3.5h-3.5zM440.9 562.4h3.5v3.5h-3.5zM520.7 562.4h9.4v3.5h-9.4zM452.7 565.3h3.5v3.5h-3.5zM470.5 565.3h3.5v3.5h-3.5zM520.7 565.3h3.5v3.5h-3.5zM458.6 568.3h3.5v3.5h-3.5zM470.5 568.3h3.5v3.5h-3.5zM520.7 568.3h3.5v3.5h-3.5zM526.6 568.3h3.5v3.5h-3.5zM568.0 574.2h3.5v3.5h-3.5zM547.3 577.1h3.5v3.5h-3.5zM520.7 580.1h3.5v3.5h-3.5zM544.4 580.1h3.5v3.5h-3.5zM529.6 583.1h3.5v3.5h-3.5zM470.5 586.0h3.5v3.5h-3.5zM520.7 586.0h3.5v3.5h-3.5zM529.6 586.0h3.5v3.5h-3.5zM550.3 586.0h3.5v3.5h-3.5zM467.5 589.0h9.4v3.5h-9.4zM517.8 589.0h3.5v3.5h-3.5zM523.7 589.0h3.5v3.5h-3.5zM553.2 589.0h3.5v3.5h-3.5zM568.0 589.0h3.5v3.5h-3.5zM573.9 589.0h3.5v3.5h-3.5zM476.4 591.9h3.5v3.5h-3.5zM458.6 594.9h3.5v3.5h-3.5zM473.4 594.9h3.5v3.5h-3.5zM517.8 594.9h6.4v3.5h-6.4zM464.5 597.8h3.5v3.5h-3.5zM514.8 597.8h3.5v3.5h-3.5zM476.4 600.8h3.5v3.5h-3.5zM532.5 600.8h3.5v3.5h-3.5zM559.1 600.8h3.5v3.5h-3.5zM479.3 603.7h6.4v3.5h-6.4zM517.8 603.7h6.4v3.5h-6.4zM532.5 603.7h3.5v3.5h-3.5zM553.2 603.7h3.5v3.5h-3.5zM482.3 606.7h3.5v3.5h-3.5zM508.9 606.7h3.5v3.5h-3.5zM497.1 609.7h3.5v3.5h-3.5zM503.0 609.7h3.5v3.5h-3.5zM517.8 609.7h3.5v3.5h-3.5zM550.3 609.7h3.5v3.5h-3.5zM470.5 612.6h3.5v3.5h-3.5zM497.1 612.6h3.5v3.5h-3.5zM526.6 612.6h3.5v3.5h-3.5zM579.8 612.6h3.5v3.5h-3.5zM485.2 615.6h3.5v3.5h-3.5zM508.9 615.6h3.5v3.5h-3.5zM514.8 615.6h3.5v3.5h-3.5zM526.6 615.6h3.5v3.5h-3.5zM550.3 615.6h3.5v3.5h-3.5zM576.9 615.6h3.5v3.5h-3.5zM449.8 618.5h3.5v3.5h-3.5zM505.9 618.5h3.5v3.5h-3.5zM547.3 618.5h3.5v3.5h-3.5zM559.1 618.5h9.4v3.5h-9.4zM511.8 621.5h3.5v3.5h-3.5zM576.9 621.5h3.5v3.5h-3.5zM440.9 624.4h3.5v3.5h-3.5zM449.8 624.4h3.5v3.5h-3.5zM494.1 624.4h3.5v3.5h-3.5zM556.2 624.4h3.5v3.5h-3.5zM579.8 624.4h3.5v3.5h-3.5zM449.8 627.4h3.5v3.5h-3.5zM482.3 627.4h3.5v3.5h-3.5zM503.0 627.4h3.5v3.5h-3.5zM559.1 627.4h3.5v3.5h-3.5zM470.5 630.3h3.5v3.5h-3.5zM488.2 630.3h3.5v3.5h-3.5zM514.8 630.3h3.5v3.5h-3.5zM556.2 630.3h3.5v3.5h-3.5zM568.0 630.3h6.4v3.5h-6.4zM455.7 633.3h3.5v3.5h-3.5zM491.2 633.3h6.4v3.5h-6.4zM500.0 633.3h3.5v3.5h-3.5zM576.9 633.3h3.5v3.5h-3.5zM582.8 633.3h3.5v3.5h-3.5zM440.9 636.3h3.5v3.5h-3.5zM470.5 636.3h3.5v3.5h-3.5zM505.9 636.3h3.5v3.5h-3.5zM517.8 636.3h3.5v3.5h-3.5zM547.3 636.3h3.5v3.5h-3.5zM579.8 636.3h3.5v3.5h-3.5zM494.1 639.2h3.5v3.5h-3.5zM511.8 639.2h3.5v3.5h-3.5zM538.4 639.2h3.5v3.5h-3.5zM565.1 639.2h3.5v3.5h-3.5zM479.3 642.2h3.5v3.5h-3.5zM488.2 642.2h3.5v3.5h-3.5zM497.1 642.2h3.5v3.5h-3.5zM514.8 642.2h3.5v3.5h-3.5zM520.7 642.2h3.5v3.5h-3.5zM532.5 642.2h3.5v3.5h-3.5zM500.0 645.1h3.5v3.5h-3.5zM505.9 645.1h3.5v3.5h-3.5zM526.6 645.1h3.5v3.5h-3.5zM579.8 645.1h3.5v3.5h-3.5zM488.2 648.1h3.5v3.5h-3.5zM511.8 648.1h3.5v3.5h-3.5zM532.5 648.1h3.5v3.5h-3.5zM585.7 648.1h3.5v3.5h-3.5zM470.5 651.0h3.5v3.5h-3.5zM488.2 651.0h3.5v3.5h-3.5zM544.4 651.0h6.4v3.5h-6.4zM443.9 654.0h3.5v3.5h-3.5zM470.5 654.0h3.5v3.5h-3.5zM505.9 654.0h3.5v3.5h-3.5zM517.8 654.0h3.5v3.5h-3.5zM505.9 657.0h3.5v3.5h-3.5zM550.3 657.0h3.5v3.5h-3.5zM479.3 659.9h3.5v3.5h-3.5zM550.3 659.9h3.5v3.5h-3.5zM559.1 659.9h3.5v3.5h-3.5zM497.1 662.9h6.4v3.5h-6.4zM571.0 662.9h6.4v3.5h-6.4zM544.4 665.8h3.5v3.5h-3.5zM440.9 668.8h3.5v3.5h-3.5zM464.5 668.8h3.5v3.5h-3.5zM476.4 668.8h3.5v3.5h-3.5zM523.7 668.8h3.5v3.5h-3.5zM571.0 668.8h3.5v3.5h-3.5zM440.9 671.7h3.5v3.5h-3.5zM458.6 671.7h3.5v3.5h-3.5zM538.4 671.7h3.5v3.5h-3.5zM565.1 671.7h3.5v3.5h-3.5zM582.8 671.7h3.5v3.5h-3.5zM547.3 674.7h6.4v3.5h-6.4zM500.0 677.6h6.4v3.5h-6.4zM541.4 677.6h3.5v3.5h-3.5zM565.1 677.6h6.4v3.5h-6.4z"/>
<path fill="#fcfcfc" d="M470.5 532.8h3.5v3.5h-3.5zM559.1 535.8h3.5v3.5h-3.5zM576.9 535.8h3.5v3.5h-3.5zM565.1 538.7h3.5v3.5h-3.5zM538.4 544.6h3.5v3.5h-3.5zM461.6 550.5h3.5v3.5h-3.5zM526.6 550.5h3.5v3.5h-3.5zM562.1 553.5h3.5v3.5h-3.5zM467.5 556.4h3.5v3.5h-3.5zM532.5 562.4h3.5v3.5h-3.5zM547.3 562.4h3.5v3.5h-3.5zM573.9 568.3h3.5v3.5h-3.5zM562.1 571.2h3.5v3.5h-3.5zM443.9 574.2h3.5v3.5h-3.5zM541.4 577.1h3.5v3.5h-3.5zM532.5 586.0h3.5v3.5h-3.5zM571.0 586.0h3.5v3.5h-3.5zM571.0 589.0h3.5v3.5h-3.5zM544.4 591.9h3.5v3.5h-3.5zM556.2 591.9h3.5v3.5h-3.5zM562.1 600.8h3.5v3.5h-3.5zM449.8 603.7h3.5v3.5h-3.5zM544.4 609.7h3.5v3.5h-3.5zM458.6 612.6h3.5v3.5h-3.5zM538.4 615.6h3.5v3.5h-3.5zM559.1 615.6h3.5v3.5h-3.5zM464.5 618.5h3.5v3.5h-3.5zM538.4 618.5h3.5v3.5h-3.5zM470.5 621.5h3.5v3.5h-3.5zM538.4 621.5h3.5v3.5h-3.5zM491.2 624.4h3.5v3.5h-3.5zM579.8 630.3h3.5v3.5h-3.5zM455.7 636.3h3.5v3.5h-3.5zM579.8 642.2h3.5v3.5h-3.5zM470.5 648.1h3.5v3.5h-3.5zM476.4 651.0h3.5v3.5h-3.5zM573.9 651.0h3.5v3.5h-3.5zM449.8 654.0h3.5v3.5h-3.5zM461.6 654.0h3.5v3.5h-3.5zM526.6 657.0h3.5v3.5h-3.5zM535.5 657.0h3.5v3.5h-3.5zM488.2 659.9h3.5v3.5h-3.5zM529.6 659.9h3.5v3.5h-3.5zM585.7 659.9h3.5v3.5h-3.5zM446.8 662.9h3.5v3.5h-3.5zM573.9 665.8h3.5v3.5h-3.5zM497.1 668.8h3.5v3.5h-3.5zM517.8 668.8h3.5v3.5h-3.5zM535.5 668.8h3.5v3.5h-3.5zM473.4 671.7h3.5v3.5h-3.5zM482.3 671.7h3.5v3.5h-3.5zM573.9 671.7h3.5v3.5h-3.5z"/>
<path fill="#f0f0f0" d="M473.4 532.8h3.5v3.5h-3.5zM491.2 532.8h3.5v3.5h-3.5zM526.6 532.8h3.5v3.5h-3.5zM559.1 532.8h3.5v3.5h-3.5zM568.0 532.8h3.5v3.5h-3.5zM576.9 532.8h3.5v3.5h-3.5zM535.5 535.8h3.5v3.5h-3.5zM550.3 535.8h3.5v3.5h-3.5zM553.2 538.7h3.5v3.5h-3.5zM562.1 538.7h3.5v3.5h-3.5zM538.4 541.7h3.5v3.5h-3.5zM582.8 541.7h3.5v3.5h-3.5zM559.1 544.6h3.5v3.5h-3.5zM455.7 547.6h3.5v3.5h-3.5zM467.5 547.6h3.5v3.5h-3.5zM443.9 550.5h3.5v3.5h-3.5zM449.8 550.5h3.5v3.5h-3.5zM582.8 550.5h3.5v3.5h-3.5zM443.9 553.5h3.5v3.5h-3.5zM446.8 556.4h3.5v3.5h-3.5zM464.5 556.4h3.5v3.5h-3.5zM535.5 556.4h6.4v3.5h-6.4zM449.8 559.4h3.5v3.5h-3.5zM556.2 559.4h3.5v3.5h-3.5zM571.0 559.4h3.5v3.5h-3.5zM585.7 559.4h3.5v3.5h-3.5zM553.2 562.4h3.5v3.5h-3.5zM571.0 565.3h3.5v3.5h-3.5zM553.2 568.3h3.5v3.5h-3.5zM571.0 568.3h3.5v3.5h-3.5zM576.9 568.3h3.5v3.5h-3.5zM526.6 571.2h3.5v3.5h-3.5zM556.2 574.2h3.5v3.5h-3.5zM571.0 574.2h3.5v3.5h-3.5zM452.7 577.1h3.5v3.5h-3.5zM532.5 577.1h3.5v3.5h-3.5zM535.5 583.1h3.5v3.5h-3.5zM544.4 583.1h3.5v3.5h-3.5zM582.8 583.1h3.5v3.5h-3.5zM464.5 586.0h3.5v3.5h-3.5zM541.4 589.0h3.5v3.5h-3.5zM446.8 591.9h3.5v3.5h-3.5zM553.2 591.9h3.5v3.5h-3.5zM550.3 597.8h3.5v3.5h-3.5zM571.0 597.8h3.5v3.5h-3.5zM449.8 600.8h3.5v3.5h-3.5zM461.6 600.8h3.5v3.5h-3.5zM446.8 606.7h3.5v3.5h-3.5zM458.6 606.7h3.5v3.5h-3.5zM544.4 606.7h3.5v3.5h-3.5zM582.8 606.7h3.5v3.5h-3.5zM461.6 609.7h3.5v3.5h-3.5zM538.4 609.7h3.5v3.5h-3.5zM553.2 609.7h3.5v3.5h-3.5zM449.8 615.6h3.5v3.5h-3.5zM455.7 615.6h6.4v3.5h-6.4zM520.7 615.6h3.5v3.5h-3.5zM547.3 615.6h3.5v3.5h-3.5zM458.6 618.5h3.5v3.5h-3.5zM571.0 618.5h3.5v3.5h-3.5zM526.6 621.5h3.5v3.5h-3.5zM571.0 621.5h3.5v3.5h-3.5zM520.7 627.4h3.5v3.5h-3.5zM464.5 630.3h3.5v3.5h-3.5zM482.3 630.3h3.5v3.5h-3.5zM446.8 633.3h3.5v3.5h-3.5zM553.2 633.3h3.5v3.5h-3.5zM582.8 636.3h3.5v3.5h-3.5zM550.3 639.2h3.5v3.5h-3.5zM461.6 645.1h3.5v3.5h-3.5zM571.0 648.1h3.5v3.5h-3.5zM455.7 651.0h6.4v3.5h-6.4zM529.6 651.0h3.5v3.5h-3.5zM559.1 651.0h3.5v3.5h-3.5zM520.7 654.0h3.5v3.5h-3.5zM553.2 654.0h3.5v3.5h-3.5zM467.5 659.9h3.5v3.5h-3.5zM526.6 662.9h3.5v3.5h-3.5zM461.6 665.8h3.5v3.5h-3.5zM482.3 665.8h3.5v3.5h-3.5zM565.1 665.8h3.5v3.5h-3.5zM526.6 671.7h3.5v3.5h-3.5zM547.3 671.7h3.5v3.5h-3.5zM449.8 674.7h3.5v3.5h-3.5zM523.7 674.7h3.5v3.5h-3.5zM556.2 674.7h3.5v3.5h-3.5zM544.4 677.6h3.5v3.5h-3.5zM562.1 677.6h3.5v3.5h-3.5zM576.9 677.6h3.5v3.5h-3.5z"/>
<path fill="#9c9c9c" d="M529.6 532.8h3.5v3.5h-3.5zM482.3 535.8h3.5v3.5h-3.5zM488.2 535.8h3.5v3.5h-3.5zM526.6 535.8h3.5v3.5h-3.5zM582.8 535.8h3.5v3.5h-3.5zM491.2 538.7h3.5v3.5h-3.5zM500.0 538.7h3.5v3.5h-3.5zM482.3 541.7h3.5v3.5h-3.5zM488.2 541.7h3.5v3.5h-3.5zM500.0 541.7h3.5v3.5h-3.5zM494.1 544.6h6.4v3.5h-6.4zM505.9 544.6h6.4v3.5h-6.4zM520.7 544.6h3.5v3.5h-3.5zM485.2 547.6h6.4v3.5h-6.4zM479.3 553.5h3.5v3.5h-3.5zM473.4 562.4h3.5v3.5h-3.5zM446.8 565.3h3.5v3.5h-3.5zM582.8 565.3h3.5v3.5h-3.5zM470.5 574.2h3.5v3.5h-3.5zM523.7 574.2h3.5v3.5h-3.5zM582.8 574.2h3.5v3.5h-3.5zM467.5 577.1h3.5v3.5h-3.5zM520.7 577.1h3.5v3.5h-3.5zM526.6 577.1h3.5v3.5h-3.5zM449.8 583.1h3.5v3.5h-3.5zM523.7 583.1h3.5v3.5h-3.5zM443.9 586.0h3.5v3.5h-3.5zM449.8 586.0h3.5v3.5h-3.5zM467.5 586.0h3.5v3.5h-3.5zM573.9 586.0h3.5v3.5h-3.5zM464.5 589.0h3.5v3.5h-3.5zM514.8 589.0h3.5v3.5h-3.5zM467.5 591.9h9.4v3.5h-9.4zM517.8 591.9h3.5v3.5h-3.5zM514.8 594.9h3.5v3.5h-3.5zM535.5 594.9h3.5v3.5h-3.5zM559.1 594.9h3.5v3.5h-3.5zM479.3 597.8h3.5v3.5h-3.5zM482.3 600.8h3.5v3.5h-3.5zM508.9 600.8h3.5v3.5h-3.5zM514.8 600.8h6.4v3.5h-6.4zM470.5 603.7h3.5v3.5h-3.5zM508.9 603.7h3.5v3.5h-3.5zM514.8 603.7h3.5v3.5h-3.5zM556.2 603.7h3.5v3.5h-3.5zM488.2 606.7h6.4v3.5h-6.4zM497.1 606.7h3.5v3.5h-3.5zM503.0 606.7h3.5v3.5h-3.5zM511.8 606.7h3.5v3.5h-3.5zM532.5 606.7h3.5v3.5h-3.5zM488.2 609.7h3.5v3.5h-3.5zM541.4 609.7h3.5v3.5h-3.5zM576.9 609.7h3.5v3.5h-3.5zM446.8 615.6h3.5v3.5h-3.5zM553.2 618.5h3.5v3.5h-3.5zM553.2 621.5h3.5v3.5h-3.5zM500.0 624.4h3.5v3.5h-3.5zM582.8 624.4h3.5v3.5h-3.5zM508.9 627.4h3.5v3.5h-3.5zM494.1 630.3h6.4v3.5h-6.4zM503.0 630.3h9.4v3.5h-9.4zM526.6 630.3h3.5v3.5h-3.5zM497.1 633.3h3.5v3.5h-3.5zM514.8 633.3h3.5v3.5h-3.5zM550.3 633.3h3.5v3.5h-3.5zM500.0 636.3h3.5v3.5h-3.5zM508.9 636.3h3.5v3.5h-3.5zM514.8 636.3h3.5v3.5h-3.5zM497.1 639.2h3.5v3.5h-3.5zM500.0 642.2h3.5v3.5h-3.5zM511.8 642.2h3.5v3.5h-3.5zM517.8 642.2h3.5v3.5h-3.5zM503.0 645.1h3.5v3.5h-3.5zM491.2 648.1h3.5v3.5h-3.5zM503.0 648.1h6.4v3.5h-6.4zM514.8 648.1h3.5v3.5h-3.5zM562.1 648.1h3.5v3.5h-3.5zM473.4 651.0h3.5v3.5h-3.5zM514.8 654.0h3.5v3.5h-3.5zM585.7 657.0h3.5v3.5h-3.5zM526.6 659.9h3.5v3.5h-3.5zM488.2 662.9h3.5v3.5h-3.5zM458.6 668.8h3.5v3.5h-3.5zM568.0 668.8h3.5v3.5h-3.5zM553.2 671.7h3.5v3.5h-3.5zM576.9 671.7h3.5v3.5h-3.5zM529.6 674.7h3.5v3.5h-3.5zM559.1 677.6h3.5v3.5h-3.5z"/>
<path fill="#909090" d="M485.2 538.7h3.5v3.5h-3.5zM488.2 544.6h6.4v3.5h-6.4zM500.0 544.6h3.5v3.5h-3.5zM508.9 547.6h6.4v3.5h-6.4zM482.3 550.5h3.5v3.5h-3.5zM508.9 550.5h6.4v3.5h-6.4zM511.8 553.5h3.5v3.5h-3.5zM476.4 556.4h3.5v3.5h-3.5zM514.8 556.4h3.5v3.5h-3.5zM526.6 556.4h3.5v3.5h-3.5zM476.4 559.4h3.5v3.5h-3.5zM520.7 559.4h3.5v3.5h-3.5zM526.6 559.4h3.5v3.5h-3.5zM473.4 565.3h3.5v3.5h-3.5zM517.8 565.3h3.5v3.5h-3.5zM473.4 568.3h3.5v3.5h-3.5zM440.9 571.2h3.5v3.5h-3.5zM517.8 571.2h3.5v3.5h-3.5zM446.8 574.2h3.5v3.5h-3.5zM520.7 574.2h3.5v3.5h-3.5zM470.5 577.1h3.5v3.5h-3.5zM523.7 577.1h3.5v3.5h-3.5zM565.1 577.1h3.5v3.5h-3.5zM473.4 580.1h3.5v3.5h-3.5zM523.7 580.1h3.5v3.5h-3.5zM470.5 583.1h3.5v3.5h-3.5zM517.8 583.1h3.5v3.5h-3.5zM520.7 591.9h3.5v3.5h-3.5zM476.4 594.9h3.5v3.5h-3.5zM511.8 597.8h3.5v3.5h-3.5zM576.9 603.7h3.5v3.5h-3.5zM485.2 606.7h3.5v3.5h-3.5zM500.0 609.7h3.5v3.5h-3.5zM571.0 609.7h3.5v3.5h-3.5zM505.9 633.3h6.4v3.5h-6.4zM458.6 636.3h3.5v3.5h-3.5zM511.8 636.3h3.5v3.5h-3.5zM446.8 639.2h3.5v3.5h-3.5zM503.0 639.2h3.5v3.5h-3.5zM443.9 642.2h3.5v3.5h-3.5zM491.2 642.2h3.5v3.5h-3.5zM503.0 642.2h3.5v3.5h-3.5zM508.9 642.2h3.5v3.5h-3.5zM497.1 645.1h3.5v3.5h-3.5zM532.5 645.1h3.5v3.5h-3.5zM500.0 648.1h3.5v3.5h-3.5z"/>
<path fill="#848484" d="M440.9 544.6h3.5v3.5h-3.5zM482.3 544.6h3.5v3.5h-3.5zM482.3 547.6h3.5v3.5h-3.5zM497.1 547.6h3.5v3.5h-3.5zM503.0 547.6h3.5v3.5h-3.5zM482.3 553.5h3.5v3.5h-3.5zM479.3 556.4h3.5v3.5h-3.5zM514.8 559.4h6.4v3.5h-6.4zM517.8 562.4h3.5v3.5h-3.5zM470.5 571.2h6.4v3.5h-6.4zM520.7 571.2h3.5v3.5h-3.5zM582.8 571.2h3.5v3.5h-3.5zM517.8 574.2h3.5v3.5h-3.5zM473.4 577.1h3.5v3.5h-3.5zM517.8 580.1h3.5v3.5h-3.5zM473.4 583.1h3.5v3.5h-3.5zM517.8 586.0h3.5v3.5h-3.5zM485.2 600.8h3.5v3.5h-3.5zM505.9 600.8h3.5v3.5h-3.5zM511.8 600.8h3.5v3.5h-3.5zM488.2 603.7h6.4v3.5h-6.4zM505.9 603.7h3.5v3.5h-3.5zM535.5 624.4h3.5v3.5h-3.5zM503.0 633.3h3.5v3.5h-3.5zM503.0 636.3h3.5v3.5h-3.5zM500.0 639.2h3.5v3.5h-3.5zM508.9 639.2h3.5v3.5h-3.5z"/>
<path fill="#787878" d="M491.2 547.6h6.4v3.5h-6.4zM500.0 547.6h3.5v3.5h-3.5zM485.2 550.5h3.5v3.5h-3.5zM511.8 556.4h3.5v3.5h-3.5zM479.3 559.4h3.5v3.5h-3.5zM476.4 562.4h3.5v3.5h-3.5zM514.8 562.4h3.5v3.5h-3.5zM476.4 565.3h3.5v3.5h-3.5zM517.8 568.3h3.5v3.5h-3.5zM473.4 574.2h3.5v3.5h-3.5zM473.4 586.0h3.5v3.5h-3.5zM476.4 589.0h3.5v3.5h-3.5zM514.8 591.9h3.5v3.5h-3.5zM511.8 594.9h3.5v3.5h-3.5zM485.2 603.7h3.5v3.5h-3.5zM500.0 603.7h6.4v3.5h-6.4zM494.1 606.7h3.5v3.5h-3.5zM497.1 636.3h3.5v3.5h-3.5zM505.9 642.2h3.5v3.5h-3.5z"/>
<path fill="#6c6c6c" d="M488.2 550.5h6.4v3.5h-6.4zM505.9 550.5h3.5v3.5h-3.5zM508.9 553.5h3.5v3.5h-3.5zM514.8 565.3h3.5v3.5h-3.5zM476.4 586.0h3.5v3.5h-3.5zM514.8 586.0h3.5v3.5h-3.5zM511.8 591.9h3.5v3.5h-3.5zM479.3 594.9h3.5v3.5h-3.5zM482.3 597.8h3.5v3.5h-3.5zM505.9 597.8h6.4v3.5h-6.4zM491.2 600.8h3.5v3.5h-3.5zM494.1 603.7h3.5v3.5h-3.5zM505.9 639.2h3.5v3.5h-3.5z"/>
<path fill="#606060" d="M494.1 550.5h3.5v3.5h-3.5zM500.0 550.5h6.4v3.5h-6.4zM485.2 553.5h3.5v3.5h-3.5zM505.9 553.5h3.5v3.5h-3.5zM482.3 556.4h3.5v3.5h-3.5zM508.9 556.4h3.5v3.5h-3.5zM476.4 568.3h3.5v3.5h-3.5zM476.4 571.2h3.5v3.5h-3.5zM476.4 577.1h3.5v3.5h-3.5zM517.8 577.1h3.5v3.5h-3.5zM511.8 589.0h3.5v3.5h-3.5zM479.3 591.9h3.5v3.5h-3.5zM482.3 594.9h3.5v3.5h-3.5zM485.2 597.8h3.5v3.5h-3.5zM488.2 600.8h3.5v3.5h-3.5zM497.1 603.7h3.5v3.5h-3.5z"/>
<path fill="#484848" d="M497.1 550.5h3.5v3.5h-3.5zM514.8 568.3h3.5v3.5h-3.5zM476.4 574.2h3.5v3.5h-3.5zM514.8 577.1h3.5v3.5h-3.5zM503.0 597.8h3.5v3.5h-3.5zM497.1 600.8h3.5v3.5h-3.5z"/>
<path fill="#545454" d="M488.2 553.5h3.5v3.5h-3.5zM511.8 559.4h3.5v3.5h-3.5zM479.3 562.4h3.5v3.5h-3.5zM511.8 562.4h3.5v3.5h-3.5zM514.8 571.2h3.5v3.5h-3.5zM514.8 574.2h3.5v3.5h-3.5zM476.4 580.1h3.5v3.5h-3.5zM514.8 580.1h3.5v3.5h-3.5zM476.4 583.1h3.5v3.5h-3.5zM514.8 583.1h3.5v3.5h-3.5zM479.3 589.0h3.5v3.5h-3.5zM508.9 594.9h3.5v3.5h-3.5zM494.1 600.8h3.5v3.5h-3.5zM500.0 600.8h6.4v3.5h-6.4z"/>
<path fill="#303030" d="M491.2 553.5h6.4v3.5h-6.4zM500.0 553.5h3.5v3.5h-3.5zM505.9 556.4h3.5v3.5h-3.5zM479.3 583.1h3.5v3.5h-3.5zM479.3 586.0h3.5v3.5h-3.5zM491.2 597.8h3.5v3.5h-3.5zM500.0 597.8h3.5v3.5h-3.5z"/>
<path fill="#242424" d="M497.1 553.5h3.5v3.5h-3.5zM488.2 556.4h3.5v3.5h-3.5zM479.3 568.3h3.5v3.5h-3.5zM511.8 568.3h3.5v3.5h-3.5zM479.3 571.2h3.5v3.5h-3.5zM511.8 583.1h3.5v3.5h-3.5zM482.3 589.0h3.5v3.5h-3.5zM508.9 589.0h3.5v3.5h-3.5zM494.1 597.8h6.4v3.5h-6.4z"/>
<path fill="#3c3c3c" d="M503.0 553.5h3.5v3.5h-3.5zM485.2 556.4h3.5v3.5h-3.5zM482.3 559.4h3.5v3.5h-3.5zM508.9 559.4h3.5v3.5h-3.5zM479.3 565.3h3.5v3.5h-3.5zM511.8 565.3h3.5v3.5h-3.5zM511.8 586.0h3.5v3.5h-3.5zM482.3 591.9h3.5v3.5h-3.5zM508.9 591.9h3.5v3.5h-3.5zM485.2 594.9h3.5v3.5h-3.5zM505.9 594.9h3.5v3.5h-3.5zM488.2 597.8h3.5v3.5h-3.5z"/>
<path fill="#000000" d="M491.2 556.4h12.3v3.5h-12.3zM488.2 559.4h18.2v3.5h-18.2zM485.2 562.4h24.1v3.5h-24.1zM482.3 565.3h30.1v3.5h-30.1zM482.3 568.3h30.1v3.5h-30.1zM482.3 571.2h30.1v3.5h-30.1zM482.3 574.2h30.1v3.5h-30.1zM482.3 577.1h30.1v3.5h-30.1zM482.3 580.1h30.1v3.5h-30.1zM482.3 583.1h30.1v3.5h-30.1zM482.3 586.0h30.1v3.5h-30.1zM485.2 589.0h24.1v3.5h-24.1zM488.2 591.9h18.2v3.5h-18.2zM491.2 594.9h12.3v3.5h-12.3z"/>
<path fill="#181818" d="M503.0 556.4h3.5v3.5h-3.5zM485.2 559.4h3.5v3.5h-3.5zM482.3 562.4h3.5v3.5h-3.5zM508.9 562.4h3.5v3.5h-3.5zM511.8 571.2h3.5v3.5h-3.5zM479.3 574.2h3.5v3.5h-3.5zM479.3 577.1h3.5v3.5h-3.5zM479.3 580.1h3.5v3.5h-3.5zM511.8 580.1h3.5v3.5h-3.5zM485.2 591.9h3.5v3.5h-3.5zM505.9 591.9h3.5v3.5h-3.5zM488.2 594.9h3.5v3.5h-3.5zM503.0 594.9h3.5v3.5h-3.5z"/>
<path fill="#0c0c0c" d="M505.9 559.4h3.5v3.5h-3.5zM511.8 574.2h3.5v3.5h-3.5zM511.8 577.1h3.5v3.5h-3.5z"/>
<circle cx="503.9" cy="638.8" r="13.5" fill="none" stroke="#eee" stroke-width="0.8" stroke-dasharray="2,2"/>
<ellipse cx="497.3" cy="577.5" rx="33" ry="40" fill="none" stroke="#ffd700" stroke-width="1.5"/>
<rect x="490.6" y="570.8" width="13.4" height="13.4" fill="none" stroke="#0000ff" stroke-width="1.3"/>
<rect x="465.4" y="557.8" width="98.2" height="98.2" fill="none" stroke="#ff0000" stroke-width="1.4"/>
<line x1="476.46" y1="606.90" x2="507.14" y2="606.90" stroke="#ff0000" stroke-width="1.3"/>
<line x1="521.86" y1="606.90" x2="552.54" y2="606.90" stroke="#ff0000" stroke-width="1.3"/>
<line x1="514.50" y1="568.86" x2="514.50" y2="599.54" stroke="#ff0000" stroke-width="1.3"/>
<line x1="514.50" y1="614.26" x2="514.50" y2="644.94" stroke="#ff0000" stroke-width="1.3"/>
<text x="514.5" y="545.96" font-size="11" font-family="'Liberation Sans', sans-serif" fill="#ff0000" text-anchor="middle" stroke="#ff0000" stroke-width="0.1">N</text>
<text x="449.878" y="611.4" font-size="11" font-family="'Liberation Sans', sans-serif" fill="#ff0000" text-anchor="middle" stroke="#ff0000" stroke-width="0.1">E</text>
</g>
<rect x="440.9" y="532.8" width="147.8" height="147.4" fill="none" stroke="#222" stroke-width="1"/>
<line x1="437.40" y1="672.34" x2="440.90" y2="672.34" stroke="#000" stroke-width="0.9"/>
<text x="434.9" y="676.3399999999999" font-size="11" font-family="'Liberation Sans', sans-serif" text-anchor="end" stroke="#000" stroke-width="0.1">−4</text>
<line x1="449.06" y1="680.20" x2="449.06" y2="683.70" stroke="#000" stroke-width="0.9"/>
<text x="449.06" y="696" font-size="11" font-family="'Liberation Sans', sans-serif" text-anchor="middle" stroke="#000" stroke-width="0.1">−4</text>
<line x1="437.40" y1="639.62" x2="440.90" y2="639.62" stroke="#000" stroke-width="0.9"/>
<text x="434.9" y="643.62" font-size="11" font-family="'Liberation Sans', sans-serif" text-anchor="end" stroke="#000" stroke-width="0.1">−2</text>
<line x1="481.78" y1="680.20" x2="481.78" y2="683.70" stroke="#000" stroke-width="0.9"/>
<text x="481.78" y="696" font-size="11" font-family="'Liberation Sans', sans-serif" text-anchor="middle" stroke="#000" stroke-width="0.1">−2</text>
<line x1="437.40" y1="606.90" x2="440.90" y2="606.90" stroke="#000" stroke-width="0.9"/>
<text x="434.9" y="610.9" font-size="11" font-family="'Liberation Sans', sans-serif" text-anchor="end" stroke="#000" stroke-width="0.1">0</text>
<line x1="514.50" y1="680.20" x2="514.50" y2="683.70" stroke="#000" stroke-width="0.9"/>
<text x="514.5" y="696" font-size="11" font-family="'Liberation Sans', sans-serif" text-anchor="middle" stroke="#000" stroke-width="0.1">0</text>
<line x1="437.40" y1="574.18" x2="440.90" y2="574.18" stroke="#000" stroke-width="0.9"/>
<text x="434.9" y="578.18" font-size="11" font-family="'Liberation Sans', sans-serif" text-anchor="end" stroke="#000" stroke-width="0.1">2</text>
<line x1="547.22" y1="680.20" x2="547.22" y2="683.70" stroke="#000" stroke-width="0.9"/>
<text x="547.22" y="696" font-size="11" font-family="'Liberation Sans', sans-serif" text-anchor="middle" stroke="#000" stroke-width="0.1">2</text>
<line x1="437.40" y1="541.46" x2="440.90" y2="541.46" stroke="#000" stroke-width="0.9"/>
<text x="434.9" y="545.46" font-size="11" font-family="'Liberation Sans', sans-serif" text-anchor="end" stroke="#000" stroke-width="0.1">4</text>
<line x1="579.94" y1="680.20" x2="579.94" y2="683.70" stroke="#000" stroke-width="0.9"/>
<text x="579.94" y="696" font-size="11" font-family="'Liberation Sans', sans-serif" text-anchor="middle" stroke="#000" stroke-width="0.1">4</text>
<text x="700" y="525.7" font-size="12.5" font-family="'Liberation Sans', sans-serif" text-anchor="middle" textLength="106.7" lengthAdjust="spacingAndGlyphs" stroke="#000" stroke-width="0.1">HSC SSP(25.5) z</text>
<clipPath id="pc3"><rect x="626.0" y="532.8" width="147.8" height="147.4"/></clipPath>
<g clip-path="url(#pc3)">
<rect x="626.00" y="532.80" width="147.80" height="147.40" fill="url(#zg)"/>
<rect x="626.0" y="532.8" width="147.8" height="147.4" fill="url(#zv)" mask="url(#zm)"/>
<circle cx="700.0" cy="606.9" r="48.2" fill="none" stroke="#ffd700" stroke-width="1.5"/>
<rect x="678.0" y="571.0" width="13" height="13" fill="none" stroke="#0000ff" stroke-width="1.3"/>
<rect x="650.9" y="557.8" width="98.2" height="98.2" fill="none" stroke="#ff0000" stroke-width="1.4"/>
<line x1="661.96" y1="606.90" x2="692.64" y2="606.90" stroke="#ff0000" stroke-width="1.3"/>
<line x1="707.36" y1="606.90" x2="738.04" y2="606.90" stroke="#ff0000" stroke-width="1.3"/>
<line x1="700.00" y1="568.86" x2="700.00" y2="599.54" stroke="#ff0000" stroke-width="1.3"/>
<line x1="700.00" y1="614.26" x2="700.00" y2="644.94" stroke="#ff0000" stroke-width="1.3"/>
<text x="700.0" y="545.96" font-size="11" font-family="'Liberation Sans', sans-serif" fill="#ff0000" text-anchor="middle" stroke="#ff0000" stroke-width="0.1">N</text>
<text x="635.378" y="611.4" font-size="11" font-family="'Liberation Sans', sans-serif" fill="#ff0000" text-anchor="middle" stroke="#ff0000" stroke-width="0.1">E</text>
</g>
<rect x="626.0" y="532.8" width="147.8" height="147.4" fill="none" stroke="#222" stroke-width="1"/>
<line x1="622.50" y1="672.34" x2="626.00" y2="672.34" stroke="#000" stroke-width="0.9"/>
<text x="620.0" y="676.3399999999999" font-size="11" font-family="'Liberation Sans', sans-serif" text-anchor="end" stroke="#000" stroke-width="0.1">−4</text>
<line x1="634.56" y1="680.20" x2="634.56" y2="683.70" stroke="#000" stroke-width="0.9"/>
<text x="634.56" y="696" font-size="11" font-family="'Liberation Sans', sans-serif" text-anchor="middle" stroke="#000" stroke-width="0.1">−4</text>
<line x1="622.50" y1="639.62" x2="626.00" y2="639.62" stroke="#000" stroke-width="0.9"/>
<text x="620.0" y="643.62" font-size="11" font-family="'Liberation Sans', sans-serif" text-anchor="end" stroke="#000" stroke-width="0.1">−2</text>
<line x1="667.28" y1="680.20" x2="667.28" y2="683.70" stroke="#000" stroke-width="0.9"/>
<text x="667.28" y="696" font-size="11" font-family="'Liberation Sans', sans-serif" text-anchor="middle" stroke="#000" stroke-width="0.1">−2</text>
<line x1="622.50" y1="606.90" x2="626.00" y2="606.90" stroke="#000" stroke-width="0.9"/>
<text x="620.0" y="610.9" font-size="11" font-family="'Liberation Sans', sans-serif" text-anchor="end" stroke="#000" stroke-width="0.1">0</text>
<line x1="700.00" y1="680.20" x2="700.00" y2="683.70" stroke="#000" stroke-width="0.9"/>
<text x="700.0" y="696" font-size="11" font-family="'Liberation Sans', sans-serif" text-anchor="middle" stroke="#000" stroke-width="0.1">0</text>
<line x1="622.50" y1="574.18" x2="626.00" y2="574.18" stroke="#000" stroke-width="0.9"/>
<text x="620.0" y="578.18" font-size="11" font-family="'Liberation Sans', sans-serif" text-anchor="end" stroke="#000" stroke-width="0.1">2</text>
<line x1="732.72" y1="680.20" x2="732.72" y2="683.70" stroke="#000" stroke-width="0.9"/>
<text x="732.72" y="696" font-size="11" font-family="'Liberation Sans', sans-serif" text-anchor="middle" stroke="#000" stroke-width="0.1">2</text>
<line x1="622.50" y1="541.46" x2="626.00" y2="541.46" stroke="#000" stroke-width="0.9"/>
<text x="620.0" y="545.46" font-size="11" font-family="'Liberation Sans', sans-serif" text-anchor="end" stroke="#000" stroke-width="0.1">4</text>
<line x1="765.44" y1="680.20" x2="765.44" y2="683.70" stroke="#000" stroke-width="0.9"/>
<text x="765.44" y="696" font-size="11" font-family="'Liberation Sans', sans-serif" text-anchor="middle" stroke="#000" stroke-width="0.1">4</text>
<text x="143.8" y="705.7" font-size="11" font-family="'Liberation Sans', sans-serif" text-anchor="middle" textLength="41.3" lengthAdjust="spacingAndGlyphs" stroke="#000" stroke-width="0.1">arcsecs</text>
<text x="329" y="705.7" font-size="11" font-family="'Liberation Sans', sans-serif" text-anchor="middle" textLength="101.5" lengthAdjust="spacingAndGlyphs" stroke="#000" stroke-width="0.1">s/b: 1.07 +/- 0.078</text>
<text x="514" y="705.7" font-size="11" font-family="'Liberation Sans', sans-serif" text-anchor="middle" textLength="120.5" lengthAdjust="spacingAndGlyphs" stroke="#000" stroke-width="0.1">m:20.7  re:2.2"  s:2.0"</text>
<text x="515.5" y="718.6" font-size="11" font-family="'Liberation Sans', sans-serif" text-anchor="middle" textLength="107" lengthAdjust="spacingAndGlyphs" stroke="#000" stroke-width="0.1">EWr: 1, PLAE: 0.475</text>
<text x="700" y="705.7" font-size="11" font-family="'Liberation Sans', sans-serif" text-anchor="middle" textLength="115" lengthAdjust="spacingAndGlyphs" stroke="#000" stroke-width="0.1">m:24.6 rc:3.0"  s:0.0"</text>
<text transform="translate(69.5,786) scale(1,1.1)" font-size="13.15" stroke="#000" stroke-width="0.15">Separation</text>
<text transform="translate(69.5,800.8) scale(1,1.1)" font-size="13.15" stroke="#000" stroke-width="0.15">Match score</text>
<text transform="translate(69.5,815.6) scale(1,1.1)" font-size="13.15" stroke="#000" stroke-width="0.15">RA, Dec</text>
<text transform="translate(69.5,830.4) scale(1,1.1)" font-size="13.15" stroke="#000" stroke-width="0.15">Spec z</text>
<text transform="translate(69.5,844.5) scale(1,1.1)" font-size="13.15" stroke="#000" stroke-width="0.15">Photo z</text>
<text transform="translate(69.5,859) scale(1,1.1)" font-size="13.15" stroke="#000" stroke-width="0.15">Est LyA rest-EW</text>
<text transform="translate(69.5,873) scale(1,1.1)" font-size="13.15" stroke="#000" stroke-width="0.15">mag</text>
<text transform="translate(69.5,888.5) scale(1,1.1)" font-size="13.15" stroke="#000" stroke-width="0.15">P(LAE)/P(OII)</text>
<text transform="translate(286.5,778.8) scale(1,1.1)" font-size="13.15" fill="#0000ff" stroke="#0000ff" stroke-width="0.15">1.95943"</text>
<text transform="translate(286.5,793.6) scale(1,1.1)" font-size="13.15" fill="#0000ff" stroke="#0000ff" stroke-width="0.15">0.999</text>
<text transform="translate(286.5,808.4) scale(1,1.1)" font-size="13.15" fill="#0000ff" stroke="#0000ff" stroke-width="0.15">26.319502, -1.183939</text>
<text transform="translate(286.5,822.8) scale(1,1.1)" font-size="13.15" fill="#0000ff" stroke="#0000ff" stroke-width="0.15">N/A</text>
<text transform="translate(286.5,837.3) scale(1,1.1)" font-size="13.15" fill="#0000ff" stroke="#0000ff" stroke-width="0.15">0</text>
<text transform="translate(286.5,854) scale(1,1.1)" font-size="13.15" fill="#0000ff" stroke="#0000ff" stroke-width="0.15">0.04(±0.02)Å</text>
<text transform="translate(286.5,869.8) scale(1,1.1)" font-size="13.15" fill="#0000ff" stroke="#0000ff" stroke-width="0.15">20.61(20.60,20.61)g</text>
<text transform="translate(286.5,885.2) scale(1,1.1)" font-size="13.15" fill="#0000ff" stroke="#0000ff" stroke-width="0.15">0.36</text>
<text x="320.5" y="880.5" font-size="9.72" font-family="'Liberation Sans', sans-serif" fill="#0000ff">0.746</text>
<text x="320.5" y="888.5" font-size="9.72" font-family="'Liberation Sans', sans-serif" fill="#0000ff">0.213</text>
<text x="1134.3" y="736.8" font-size="12.5" font-family="'Liberation Sans', sans-serif" text-anchor="middle" textLength="69.6" lengthAdjust="spacingAndGlyphs" stroke="#000" stroke-width="0.1">Phot z PDF</text>
<rect x="938.6" y="742" width="391.4" height="163.70000000000005" fill="#fff" stroke="#333" stroke-width="1"/>
<line x1="938.60" y1="824.30" x2="1330.00" y2="824.30" stroke="#0000ff" stroke-width="2"/>
<line x1="949.92" y1="742.00" x2="949.92" y2="905.70" stroke="#008000" stroke-width="1.6" stroke-dasharray="4,2.5"/>
<line x1="1198.20" y1="742.00" x2="1198.20" y2="905.70" stroke="#ff0000" stroke-width="1.6" stroke-dasharray="4,2.5"/>
<line x1="938.60" y1="905.70" x2="938.60" y2="909.20" stroke="#333" stroke-width="0.9"/>
<text x="938.6" y="920.7" font-size="11" font-family="'Liberation Sans', sans-serif" text-anchor="middle" stroke="#000" stroke-width="0.1">0.0</text>
<line x1="993.00" y1="905.70" x2="993.00" y2="909.20" stroke="#333" stroke-width="0.9"/>
<text x="993.0" y="920.7" font-size="11" font-family="'Liberation Sans', sans-serif" text-anchor="middle" stroke="#000" stroke-width="0.1">0.5</text>
<line x1="1047.40" y1="905.70" x2="1047.40" y2="909.20" stroke="#333" stroke-width="0.9"/>
<text x="1047.4" y="920.7" font-size="11" font-family="'Liberation Sans', sans-serif" text-anchor="middle" stroke="#000" stroke-width="0.1">1.0</text>
<line x1="1101.80" y1="905.70" x2="1101.80" y2="909.20" stroke="#333" stroke-width="0.9"/>
<text x="1101.8" y="920.7" font-size="11" font-family="'Liberation Sans', sans-serif" text-anchor="middle" stroke="#000" stroke-width="0.1">1.5</text>
<line x1="1156.20" y1="905.70" x2="1156.20" y2="909.20" stroke="#333" stroke-width="0.9"/>
<text x="1156.2" y="920.7" font-size="11" font-family="'Liberation Sans', sans-serif" text-anchor="middle" stroke="#000" stroke-width="0.1">2.0</text>
<line x1="1210.60" y1="905.70" x2="1210.60" y2="909.20" stroke="#333" stroke-width="0.9"/>
<text x="1210.6" y="920.7" font-size="11" font-family="'Liberation Sans', sans-serif" text-anchor="middle" stroke="#000" stroke-width="0.1">2.5</text>
<line x1="1265.00" y1="905.70" x2="1265.00" y2="909.20" stroke="#333" stroke-width="0.9"/>
<text x="1265.0" y="920.7" font-size="11" font-family="'Liberation Sans', sans-serif" text-anchor="middle" stroke="#000" stroke-width="0.1">3.0</text>
<line x1="1319.40" y1="905.70" x2="1319.40" y2="909.20" stroke="#333" stroke-width="0.9"/>
<text x="1319.4" y="920.7" font-size="11" font-family="'Liberation Sans', sans-serif" text-anchor="middle" stroke="#000" stroke-width="0.1">3.5</text>
<line x1="1007.00" y1="936.50" x2="1025.00" y2="936.50" stroke="#008000" stroke-width="1.5" stroke-dasharray="4,2.5"/>
<text x="1032" y="940" font-size="9.5" font-family="'Liberation Sans', sans-serif" textLength="91.3" lengthAdjust="spacingAndGlyphs">OII z (VIRUS) = 0.10</text>
<line x1="1143.00" y1="936.50" x2="1161.00" y2="936.50" stroke="#ff0000" stroke-width="1.5" stroke-dasharray="4,2.5"/>
<text x="1165.5" y="940" font-size="9.5" font-family="'Liberation Sans', sans-serif" textLength="95.3" lengthAdjust="spacingAndGlyphs">LyA z (VIRUS) = 2.39</text>
</svg></body></html>
